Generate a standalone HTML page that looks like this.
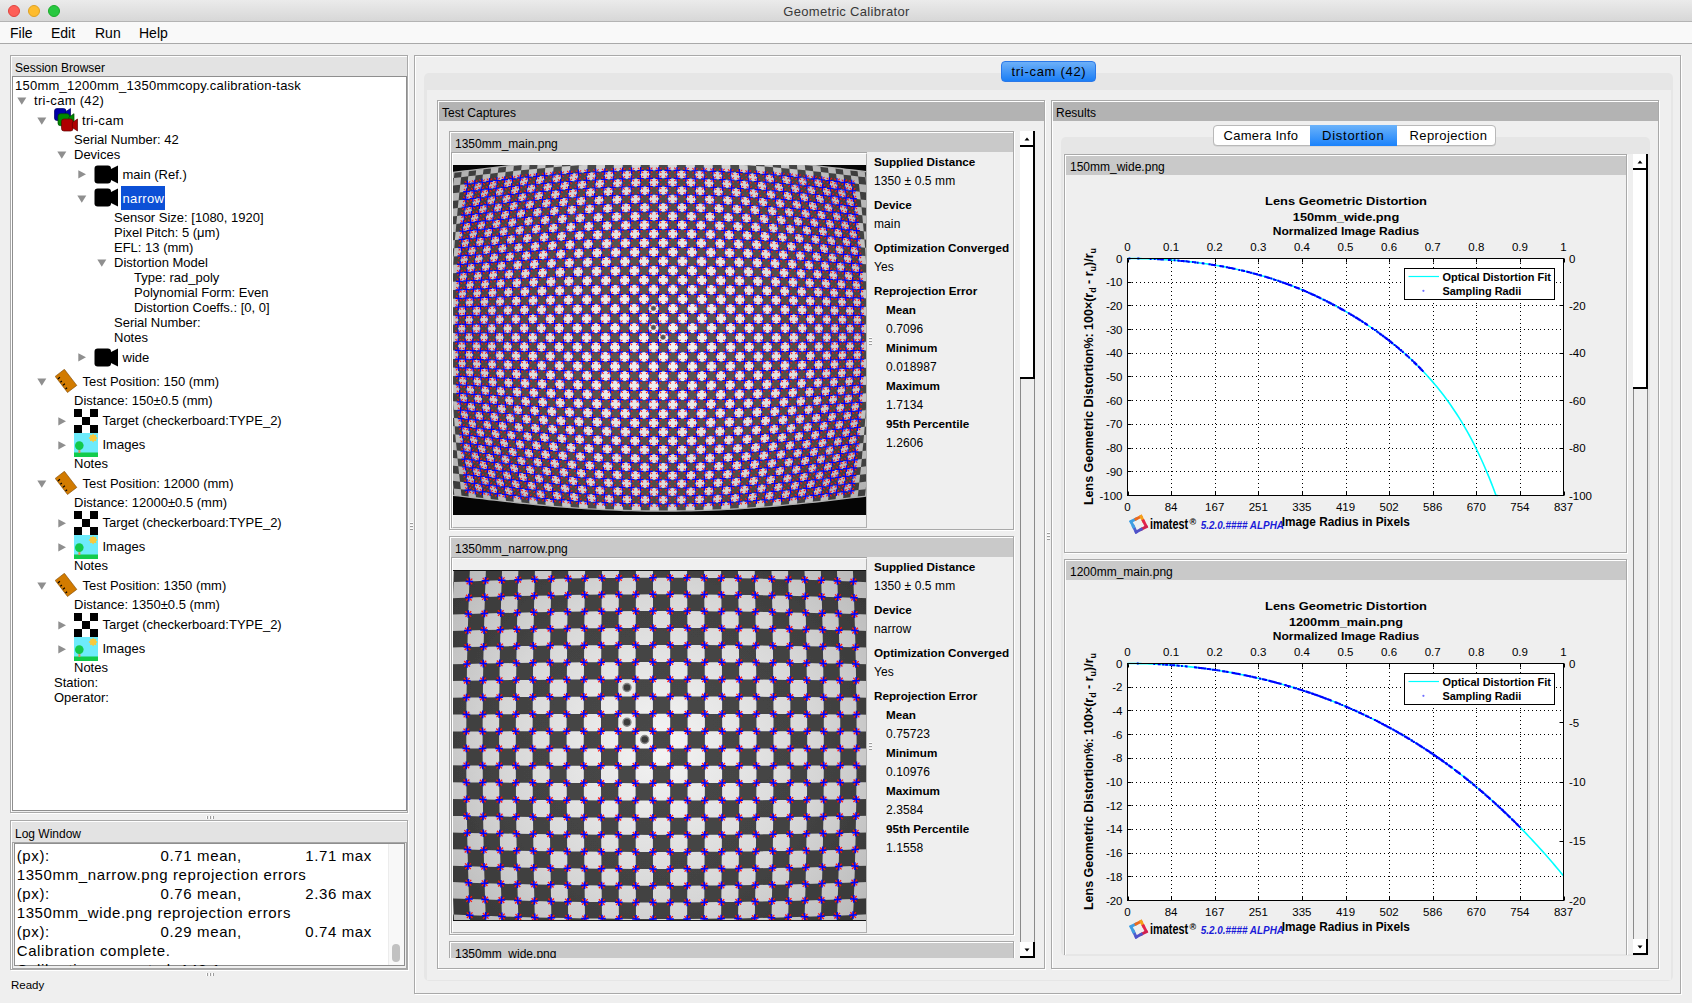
<!DOCTYPE html>
<html><head><meta charset="utf-8"><style>
html,body{margin:0;padding:0;}
body{width:1692px;height:1003px;overflow:hidden;position:relative;background:#efefef;font-family:"Liberation Sans", sans-serif;}
body div{position:absolute;}
.t{white-space:pre;line-height:1;}
svg{position:absolute;}
</style></head><body>
<div style="left:0px;top:0px;width:1692px;height:22px;background:linear-gradient(#ebebeb,#d6d6d6);"></div>
<div style="left:0px;top:21px;width:1692px;height:1px;background:#b4b4b4;"></div>
<div style="left:8px;top:5px;width:12px;height:12px;box-sizing:border-box;border-radius:50%;background:#fe5f57;border:0.5px solid #e0443e;"></div>
<div style="left:28px;top:5px;width:12px;height:12px;box-sizing:border-box;border-radius:50%;background:#febc2e;border:0.5px solid #dea123;"></div>
<div style="left:48px;top:5px;width:12px;height:12px;box-sizing:border-box;border-radius:50%;background:#28c840;border:0.5px solid #1aab29;"></div>
<div class="t" style="left:546.5px;width:600px;text-align:center;top:5.00px;font-size:13px;font-weight:400;color:#383838;letter-spacing:0.32px;">Geometric Calibrator</div>
<div style="left:0px;top:22px;width:1692px;height:21px;background:#f9f9f9;"></div>
<div style="left:0px;top:43px;width:1692px;height:1px;background:#a9a9a9;"></div>
<div class="t" style="left:10px;top:26.15px;font-size:14px;font-weight:400;color:#000;">File</div>
<div class="t" style="left:51px;top:26.15px;font-size:14px;font-weight:400;color:#000;">Edit</div>
<div class="t" style="left:95px;top:26.15px;font-size:14px;font-weight:400;color:#000;">Run</div>
<div class="t" style="left:139px;top:26.15px;font-size:14px;font-weight:400;color:#000;">Help</div>
<div style="left:11px;top:56px;width:398px;height:758px;box-sizing:border-box;border:1px solid #fff;"></div>
<div style="left:10px;top:55px;width:398px;height:758px;box-sizing:border-box;border:1px solid #a9a9a9;"></div>
<div style="left:12px;top:57px;width:395px;height:19px;background:#e3e3e3;"></div>
<div class="t" style="left:15px;top:61.84px;font-size:12px;font-weight:400;color:#000;">Session Browser</div>
<div style="left:12px;top:76px;width:395px;height:735px;box-sizing:border-box;border:1px solid #8e8e8e;background:#fff;"></div>
<div style="left:11px;top:821px;width:398px;height:150px;box-sizing:border-box;border:1px solid #fff;"></div>
<div style="left:10px;top:820px;width:398px;height:150px;box-sizing:border-box;border:1px solid #a9a9a9;"></div>
<div style="left:12px;top:822px;width:395px;height:20px;background:#e3e3e3;"></div>
<div class="t" style="left:15px;top:827.84px;font-size:12px;font-weight:400;color:#000;">Log Window</div>
<div style="left:12px;top:842px;width:395px;height:127px;box-sizing:border-box;border:1px solid #a6a6a6;"></div>
<div style="left:14px;top:843px;width:391px;height:123px;box-sizing:border-box;border:1px solid #8e8e8e;background:#fff;"></div>
<div class="t" style="left:11px;top:980.27px;font-size:11.5px;font-weight:400;color:#000;">Ready</div>
<div style="left:415px;top:56px;width:1267px;height:939px;box-sizing:border-box;border:1px solid #fff;"></div>
<div style="left:414px;top:55px;width:1267px;height:939px;box-sizing:border-box;border:1px solid #a9a9a9;"></div>
<div style="left:424px;top:73px;width:1249px;height:908px;box-sizing:border-box;border-radius:5px;background:#e6e6e6;"></div>
<div style="left:427px;top:90px;width:1244px;height:890px;background:#efefef;"></div>
<div class="t" style="left:15px;top:79.30px;font-size:13px;font-weight:400;color:#000;letter-spacing:0.24px;">150mm_1200mm_1350mmcopy.calibration-task</div>
<svg style="left:17px;top:97px" width="10" height="8"><path d="M0.3 0.5 L9.3 0.5 L4.8 7.8 Z" fill="#8f8f8f"/></svg>
<div class="t" style="left:34px;top:94.30px;font-size:13px;font-weight:400;color:#000;letter-spacing:0.3px;">tri-cam (42)</div>
<svg style="left:37px;top:117px" width="10" height="8"><path d="M0.3 0.5 L9.3 0.5 L4.8 7.8 Z" fill="#8f8f8f"/></svg>
<svg style="left:54px;top:108px" width="25" height="25"><g transform="translate(0,0)"><rect x="0.5" y="0.5" width="11.5" height="12" rx="2.5" fill="#0000a8" stroke="#000060" stroke-width="0.7"/><path d="M11.3 4 L16.5 0.5 L16.5 12.5 L11.3 9 Z" fill="#0000a8" stroke="#000060" stroke-width="0.7"/></g><g transform="translate(3.5,5.2)"><rect x="0.5" y="0.5" width="11.5" height="12" rx="2.5" fill="#008a00" stroke="#004800" stroke-width="0.7"/><path d="M11.3 4 L16.5 0.5 L16.5 12.5 L11.3 9 Z" fill="#008a00" stroke="#004800" stroke-width="0.7"/></g><g transform="translate(7,10.5)"><rect x="0.5" y="0.5" width="11.5" height="12" rx="2.5" fill="#b00000" stroke="#600000" stroke-width="0.7"/><path d="M11.3 4 L16.5 0.5 L16.5 12.5 L11.3 9 Z" fill="#b00000" stroke="#600000" stroke-width="0.7"/></g></svg>
<div class="t" style="left:82px;top:114.30px;font-size:13px;font-weight:400;color:#000;letter-spacing:0.3px;">tri-cam</div>
<div class="t" style="left:74px;top:133.10px;font-size:13px;font-weight:400;color:#000;">Serial Number: 42</div>
<svg style="left:57px;top:151px" width="10" height="8"><path d="M0.3 0.5 L9.3 0.5 L4.8 7.8 Z" fill="#8f8f8f"/></svg>
<div class="t" style="left:74px;top:148.10px;font-size:13px;font-weight:400;color:#000;">Devices</div>
<svg style="left:77.5px;top:170.3px" width="9" height="9"><path d="M0.3 0.3 L8 4.3 L0.3 8.5 Z" fill="#8f8f8f"/></svg>
<svg style="left:93.5px;top:164.5px" width="25.0" height="20.0" viewBox="0 0 25 20"><rect x="0.5" y="0.5" width="16.5" height="18" rx="3.2" fill="#000"/><path d="M16 4.5 L24 0.5 L24 18.5 L16 14.5 Z" fill="#000"/></svg>
<div class="t" style="left:122.5px;top:168.10px;font-size:13px;font-weight:400;color:#000;">main (Ref.)</div>
<svg style="left:77px;top:195px" width="10" height="8"><path d="M0.3 0.5 L9.3 0.5 L4.8 7.8 Z" fill="#8f8f8f"/></svg>
<svg style="left:93.5px;top:188.3px" width="25.0" height="20.0" viewBox="0 0 25 20"><rect x="0.5" y="0.5" width="16.5" height="18" rx="3.2" fill="#000"/><path d="M16 4.5 L24 0.5 L24 18.5 L16 14.5 Z" fill="#000"/></svg>
<div style="left:121px;top:186px;width:44px;height:24px;background:#0c50d6;"></div>
<div class="t" style="left:122.5px;top:192.30px;font-size:13px;font-weight:400;color:#fff;letter-spacing:0.35px;">narrow</div>
<div class="t" style="left:114px;top:211.10px;font-size:13px;font-weight:400;color:#000;">Sensor Size: [1080, 1920]</div>
<div class="t" style="left:114px;top:226.10px;font-size:13px;font-weight:400;color:#000;">Pixel Pitch: 5 (μm)</div>
<div class="t" style="left:114px;top:241.10px;font-size:13px;font-weight:400;color:#000;">EFL: 13 (mm)</div>
<svg style="left:97px;top:259px" width="10" height="8"><path d="M0.3 0.5 L9.3 0.5 L4.8 7.8 Z" fill="#8f8f8f"/></svg>
<div class="t" style="left:114px;top:256.10px;font-size:13px;font-weight:400;color:#000;">Distortion Model</div>
<div class="t" style="left:134px;top:271.10px;font-size:13px;font-weight:400;color:#000;">Type: rad_poly</div>
<div class="t" style="left:134px;top:286.10px;font-size:13px;font-weight:400;color:#000;">Polynomial Form: Even</div>
<div class="t" style="left:134px;top:301.10px;font-size:13px;font-weight:400;color:#000;">Distortion Coeffs.: [0, 0]</div>
<div class="t" style="left:114px;top:316.10px;font-size:13px;font-weight:400;color:#000;">Serial Number:</div>
<div class="t" style="left:114px;top:331.10px;font-size:13px;font-weight:400;color:#000;">Notes</div>
<svg style="left:77.5px;top:353.3px" width="9" height="9"><path d="M0.3 0.3 L8 4.3 L0.3 8.5 Z" fill="#8f8f8f"/></svg>
<svg style="left:93.5px;top:347.5px" width="25.0" height="20.0" viewBox="0 0 25 20"><rect x="0.5" y="0.5" width="16.5" height="18" rx="3.2" fill="#000"/><path d="M16 4.5 L24 0.5 L24 18.5 L16 14.5 Z" fill="#000"/></svg>
<div class="t" style="left:122.5px;top:351.10px;font-size:13px;font-weight:400;color:#000;">wide</div>
<svg style="left:37px;top:377.5px" width="10" height="8"><path d="M0.3 0.5 L9.3 0.5 L4.8 7.8 Z" fill="#8f8f8f"/></svg>
<svg style="left:55px;top:369.0px" width="24" height="25"><path d="M9.4 0.3 L21.8 16.4 L12.5 23.5 L0.2 7.4 Z" fill="#d27b00" stroke="#7a4500" stroke-width="0.6"/><path d="M2.89 9.93 l2.07 -1.58 M5.35 13.15 l1.59 -1.21 M7.81 16.37 l2.07 -1.58 M10.52 19.92 l1.59 -1.21" stroke="#000" stroke-width="1.2"/></svg>
<div class="t" style="left:82.5px;top:375.10px;font-size:13px;font-weight:400;color:#000;">Test Position: 150 (mm)</div>
<div class="t" style="left:74px;top:394.10px;font-size:13px;font-weight:400;color:#000;">Distance: 150±0.5 (mm)</div>
<svg style="left:57.5px;top:416.5px" width="9" height="9"><path d="M0.3 0.3 L8 4.3 L0.3 8.5 Z" fill="#8f8f8f"/></svg>
<svg style="left:74px;top:408.5px" width="24" height="24"><rect width="24" height="24" fill="#fff"/><rect x="0" y="0" width="8" height="8" fill="#000"/><rect x="0" y="16" width="8" height="8" fill="#000"/><rect x="8" y="8" width="8" height="8" fill="#000"/><rect x="16" y="0" width="8" height="8" fill="#000"/><rect x="16" y="16" width="8" height="8" fill="#000"/></svg>
<div class="t" style="left:102.5px;top:414.10px;font-size:13px;font-weight:400;color:#000;">Target (checkerboard:TYPE_2)</div>
<svg style="left:57.5px;top:440.5px" width="9" height="9"><path d="M0.3 0.3 L8 4.3 L0.3 8.5 Z" fill="#8f8f8f"/></svg>
<svg style="left:74px;top:432.5px" width="24" height="24"><rect width="24" height="24" fill="#6debfb"/><polygon points="23.70,5.00 21.87,6.15 22.35,8.25 20.25,7.77 19.10,9.60 17.95,7.77 15.85,8.25 16.33,6.15 14.50,5.00 16.33,3.85 15.85,1.75 17.95,2.23 19.10,0.40 20.25,2.23 22.35,1.75 21.87,3.85" fill="#f9c93c"/><rect x="0" y="19.5" width="24" height="4.5" fill="#12cc4c"/><rect x="4.4" y="14" width="2" height="6" fill="#d6935a"/><circle cx="5.3" cy="12.6" r="4.3" fill="#12c94a"/></svg>
<div class="t" style="left:102.5px;top:438.10px;font-size:13px;font-weight:400;color:#000;">Images</div>
<div class="t" style="left:74px;top:457.10px;font-size:13px;font-weight:400;color:#000;">Notes</div>
<svg style="left:37px;top:479.5px" width="10" height="8"><path d="M0.3 0.5 L9.3 0.5 L4.8 7.8 Z" fill="#8f8f8f"/></svg>
<svg style="left:55px;top:471.0px" width="24" height="25"><path d="M9.4 0.3 L21.8 16.4 L12.5 23.5 L0.2 7.4 Z" fill="#d27b00" stroke="#7a4500" stroke-width="0.6"/><path d="M2.89 9.93 l2.07 -1.58 M5.35 13.15 l1.59 -1.21 M7.81 16.37 l2.07 -1.58 M10.52 19.92 l1.59 -1.21" stroke="#000" stroke-width="1.2"/></svg>
<div class="t" style="left:82.5px;top:477.10px;font-size:13px;font-weight:400;color:#000;">Test Position: 12000 (mm)</div>
<div class="t" style="left:74px;top:496.10px;font-size:13px;font-weight:400;color:#000;">Distance: 12000±0.5 (mm)</div>
<svg style="left:57.5px;top:518.5px" width="9" height="9"><path d="M0.3 0.3 L8 4.3 L0.3 8.5 Z" fill="#8f8f8f"/></svg>
<svg style="left:74px;top:510.5px" width="24" height="24"><rect width="24" height="24" fill="#fff"/><rect x="0" y="0" width="8" height="8" fill="#000"/><rect x="0" y="16" width="8" height="8" fill="#000"/><rect x="8" y="8" width="8" height="8" fill="#000"/><rect x="16" y="0" width="8" height="8" fill="#000"/><rect x="16" y="16" width="8" height="8" fill="#000"/></svg>
<div class="t" style="left:102.5px;top:516.10px;font-size:13px;font-weight:400;color:#000;">Target (checkerboard:TYPE_2)</div>
<svg style="left:57.5px;top:542.5px" width="9" height="9"><path d="M0.3 0.3 L8 4.3 L0.3 8.5 Z" fill="#8f8f8f"/></svg>
<svg style="left:74px;top:534.5px" width="24" height="24"><rect width="24" height="24" fill="#6debfb"/><polygon points="23.70,5.00 21.87,6.15 22.35,8.25 20.25,7.77 19.10,9.60 17.95,7.77 15.85,8.25 16.33,6.15 14.50,5.00 16.33,3.85 15.85,1.75 17.95,2.23 19.10,0.40 20.25,2.23 22.35,1.75 21.87,3.85" fill="#f9c93c"/><rect x="0" y="19.5" width="24" height="4.5" fill="#12cc4c"/><rect x="4.4" y="14" width="2" height="6" fill="#d6935a"/><circle cx="5.3" cy="12.6" r="4.3" fill="#12c94a"/></svg>
<div class="t" style="left:102.5px;top:540.10px;font-size:13px;font-weight:400;color:#000;">Images</div>
<div class="t" style="left:74px;top:559.10px;font-size:13px;font-weight:400;color:#000;">Notes</div>
<svg style="left:37px;top:581.5px" width="10" height="8"><path d="M0.3 0.5 L9.3 0.5 L4.8 7.8 Z" fill="#8f8f8f"/></svg>
<svg style="left:55px;top:573.0px" width="24" height="25"><path d="M9.4 0.3 L21.8 16.4 L12.5 23.5 L0.2 7.4 Z" fill="#d27b00" stroke="#7a4500" stroke-width="0.6"/><path d="M2.89 9.93 l2.07 -1.58 M5.35 13.15 l1.59 -1.21 M7.81 16.37 l2.07 -1.58 M10.52 19.92 l1.59 -1.21" stroke="#000" stroke-width="1.2"/></svg>
<div class="t" style="left:82.5px;top:579.10px;font-size:13px;font-weight:400;color:#000;">Test Position: 1350 (mm)</div>
<div class="t" style="left:74px;top:598.10px;font-size:13px;font-weight:400;color:#000;">Distance: 1350±0.5 (mm)</div>
<svg style="left:57.5px;top:620.5px" width="9" height="9"><path d="M0.3 0.3 L8 4.3 L0.3 8.5 Z" fill="#8f8f8f"/></svg>
<svg style="left:74px;top:612.5px" width="24" height="24"><rect width="24" height="24" fill="#fff"/><rect x="0" y="0" width="8" height="8" fill="#000"/><rect x="0" y="16" width="8" height="8" fill="#000"/><rect x="8" y="8" width="8" height="8" fill="#000"/><rect x="16" y="0" width="8" height="8" fill="#000"/><rect x="16" y="16" width="8" height="8" fill="#000"/></svg>
<div class="t" style="left:102.5px;top:618.10px;font-size:13px;font-weight:400;color:#000;">Target (checkerboard:TYPE_2)</div>
<svg style="left:57.5px;top:644.5px" width="9" height="9"><path d="M0.3 0.3 L8 4.3 L0.3 8.5 Z" fill="#8f8f8f"/></svg>
<svg style="left:74px;top:636.5px" width="24" height="24"><rect width="24" height="24" fill="#6debfb"/><polygon points="23.70,5.00 21.87,6.15 22.35,8.25 20.25,7.77 19.10,9.60 17.95,7.77 15.85,8.25 16.33,6.15 14.50,5.00 16.33,3.85 15.85,1.75 17.95,2.23 19.10,0.40 20.25,2.23 22.35,1.75 21.87,3.85" fill="#f9c93c"/><rect x="0" y="19.5" width="24" height="4.5" fill="#12cc4c"/><rect x="4.4" y="14" width="2" height="6" fill="#d6935a"/><circle cx="5.3" cy="12.6" r="4.3" fill="#12c94a"/></svg>
<div class="t" style="left:102.5px;top:642.10px;font-size:13px;font-weight:400;color:#000;">Images</div>
<div class="t" style="left:74px;top:661.10px;font-size:13px;font-weight:400;color:#000;">Notes</div>
<div class="t" style="left:54px;top:676.10px;font-size:13px;font-weight:400;color:#000;">Station:</div>
<div class="t" style="left:54px;top:691.10px;font-size:13px;font-weight:400;color:#000;">Operator:</div>
<div style="left:15px;top:844px;width:374px;height:122px;overflow:hidden;">
<div class="t" style="left:1.7px;top:4.30px;font-size:15px;font-weight:400;color:#000;letter-spacing:0.62px;">(px):</div>
<div class="t" style="left:145.6px;top:4.30px;font-size:15px;font-weight:400;color:#000;letter-spacing:0.62px;">0.71 mean,</div>
<div class="t" style="left:290.2px;top:4.30px;font-size:15px;font-weight:400;color:#000;letter-spacing:0.62px;">1.71 max</div>
<div class="t" style="left:1.7px;top:23.30px;font-size:15px;font-weight:400;color:#000;letter-spacing:0.62px;">1350mm_narrow.png reprojection errors</div>
<div class="t" style="left:1.7px;top:42.30px;font-size:15px;font-weight:400;color:#000;letter-spacing:0.62px;">(px):</div>
<div class="t" style="left:145.6px;top:42.30px;font-size:15px;font-weight:400;color:#000;letter-spacing:0.62px;">0.76 mean,</div>
<div class="t" style="left:290.2px;top:42.30px;font-size:15px;font-weight:400;color:#000;letter-spacing:0.62px;">2.36 max</div>
<div class="t" style="left:1.7px;top:61.30px;font-size:15px;font-weight:400;color:#000;letter-spacing:0.62px;">1350mm_wide.png reprojection errors</div>
<div class="t" style="left:1.7px;top:80.30px;font-size:15px;font-weight:400;color:#000;letter-spacing:0.62px;">(px):</div>
<div class="t" style="left:145.6px;top:80.30px;font-size:15px;font-weight:400;color:#000;letter-spacing:0.62px;">0.29 mean,</div>
<div class="t" style="left:290.2px;top:80.30px;font-size:15px;font-weight:400;color:#000;letter-spacing:0.62px;">0.74 max</div>
<div class="t" style="left:1.7px;top:99.30px;font-size:15px;font-weight:400;color:#000;letter-spacing:0.62px;">Calibration complete.</div>
<div class="t" style="left:1.7px;top:118.30px;font-size:15px;font-weight:400;color:#000;letter-spacing:0.62px;">Calibration computed: 148.1</div>
</div>
<div style="left:388px;top:844px;width:16px;height:121px;background:#f8f8f8;border-left:1px solid #ececec;box-sizing:border-box;"></div>
<div style="left:392px;top:944px;width:8px;height:18px;background:#c1c1c1;border-radius:4px;"></div>
<div style="left:438px;top:101px;width:608px;height:869px;box-sizing:border-box;border:1px solid #fff;"></div>
<div style="left:437px;top:100px;width:608px;height:869px;box-sizing:border-box;border:1px solid #a9a9a9;"></div>
<div style="left:439px;top:102px;width:605px;height:19px;background:#b3b3b3;"></div>
<div class="t" style="left:442px;top:106.84px;font-size:12px;font-weight:400;color:#000;">Test Captures</div>
<div style="left:1052px;top:101px;width:608px;height:869px;box-sizing:border-box;border:1px solid #fff;"></div>
<div style="left:1051px;top:100px;width:608px;height:869px;box-sizing:border-box;border:1px solid #a9a9a9;"></div>
<div style="left:1053px;top:102px;width:605px;height:19px;background:#b3b3b3;"></div>
<div class="t" style="left:1056px;top:106.84px;font-size:12px;font-weight:400;color:#000;">Results</div>
<div style="left:449px;top:131px;width:566px;height:827px;overflow:hidden;">
<div style="left:1px;top:1px;width:565px;height:399px;box-sizing:border-box;border:1px solid #fff;"></div>
<div style="left:0px;top:0px;width:565px;height:399px;box-sizing:border-box;border:1px solid #a9a9a9;"></div>
<div style="left:2px;top:2px;width:562px;height:19px;background:#c9c9c9;"></div>
<div class="t" style="left:6px;top:6.84px;font-size:12px;font-weight:400;color:#000;">1350mm_main.png</div>
<div style="left:2px;top:21px;width:416px;height:376px;box-sizing:border-box;border-left:1px solid #a6a6a6;border-top:1px solid #a6a6a6;"></div>
<div style="left:3px;top:22px;width:415px;height:375px;box-sizing:border-box;border-left:1px solid #fff;border-top:1px solid #fff;border-right:1px solid #b0b0b0;border-bottom:1px solid #b0b0b0;"></div>
<div class="t" style="left:425px;top:25.10px;font-size:11.7px;font-weight:700;color:#000;">Supplied Distance</div>
<div class="t" style="left:425px;top:43.84px;font-size:12px;font-weight:400;color:#000;letter-spacing:0.1px;">1350 ± 0.5 mm</div>
<div class="t" style="left:425px;top:68.10px;font-size:11.7px;font-weight:700;color:#000;">Device</div>
<div class="t" style="left:425px;top:86.84px;font-size:12px;font-weight:400;color:#000;letter-spacing:0.1px;">main</div>
<div class="t" style="left:425px;top:111.10px;font-size:11.7px;font-weight:700;color:#000;">Optimization Converged</div>
<div class="t" style="left:425px;top:129.84px;font-size:12px;font-weight:400;color:#000;letter-spacing:0.1px;">Yes</div>
<div class="t" style="left:425px;top:154.10px;font-size:11.7px;font-weight:700;color:#000;">Reprojection Error</div>
<div class="t" style="left:437px;top:173.10px;font-size:11.7px;font-weight:700;color:#000;">Mean</div>
<div class="t" style="left:437px;top:191.84px;font-size:12px;font-weight:400;color:#000;letter-spacing:0.1px;">0.7096</div>
<div class="t" style="left:437px;top:211.10px;font-size:11.7px;font-weight:700;color:#000;">Minimum</div>
<div class="t" style="left:437px;top:229.84px;font-size:12px;font-weight:400;color:#000;letter-spacing:0.1px;">0.018987</div>
<div class="t" style="left:437px;top:249.10px;font-size:11.7px;font-weight:700;color:#000;">Maximum</div>
<div class="t" style="left:437px;top:267.84px;font-size:12px;font-weight:400;color:#000;letter-spacing:0.1px;">1.7134</div>
<div class="t" style="left:437px;top:287.10px;font-size:11.7px;font-weight:700;color:#000;">95th Percentile</div>
<div class="t" style="left:437px;top:305.84px;font-size:12px;font-weight:400;color:#000;letter-spacing:0.1px;">1.2606</div>
<div style="left:1px;top:406px;width:565px;height:399px;box-sizing:border-box;border:1px solid #fff;"></div>
<div style="left:0px;top:405px;width:565px;height:399px;box-sizing:border-box;border:1px solid #a9a9a9;"></div>
<div style="left:2px;top:407px;width:562px;height:19px;background:#c9c9c9;"></div>
<div class="t" style="left:6px;top:411.84px;font-size:12px;font-weight:400;color:#000;">1350mm_narrow.png</div>
<div style="left:2px;top:426px;width:416px;height:376px;box-sizing:border-box;border-left:1px solid #a6a6a6;border-top:1px solid #a6a6a6;"></div>
<div style="left:3px;top:427px;width:415px;height:375px;box-sizing:border-box;border-left:1px solid #fff;border-top:1px solid #fff;border-right:1px solid #b0b0b0;border-bottom:1px solid #b0b0b0;"></div>
<div class="t" style="left:425px;top:430.10px;font-size:11.7px;font-weight:700;color:#000;">Supplied Distance</div>
<div class="t" style="left:425px;top:448.84px;font-size:12px;font-weight:400;color:#000;letter-spacing:0.1px;">1350 ± 0.5 mm</div>
<div class="t" style="left:425px;top:473.10px;font-size:11.7px;font-weight:700;color:#000;">Device</div>
<div class="t" style="left:425px;top:491.84px;font-size:12px;font-weight:400;color:#000;letter-spacing:0.1px;">narrow</div>
<div class="t" style="left:425px;top:516.10px;font-size:11.7px;font-weight:700;color:#000;">Optimization Converged</div>
<div class="t" style="left:425px;top:534.84px;font-size:12px;font-weight:400;color:#000;letter-spacing:0.1px;">Yes</div>
<div class="t" style="left:425px;top:559.10px;font-size:11.7px;font-weight:700;color:#000;">Reprojection Error</div>
<div class="t" style="left:437px;top:578.10px;font-size:11.7px;font-weight:700;color:#000;">Mean</div>
<div class="t" style="left:437px;top:596.84px;font-size:12px;font-weight:400;color:#000;letter-spacing:0.1px;">0.75723</div>
<div class="t" style="left:437px;top:616.10px;font-size:11.7px;font-weight:700;color:#000;">Minimum</div>
<div class="t" style="left:437px;top:634.84px;font-size:12px;font-weight:400;color:#000;letter-spacing:0.1px;">0.10976</div>
<div class="t" style="left:437px;top:654.10px;font-size:11.7px;font-weight:700;color:#000;">Maximum</div>
<div class="t" style="left:437px;top:672.84px;font-size:12px;font-weight:400;color:#000;letter-spacing:0.1px;">2.3584</div>
<div class="t" style="left:437px;top:692.10px;font-size:11.7px;font-weight:700;color:#000;">95th Percentile</div>
<div class="t" style="left:437px;top:710.84px;font-size:12px;font-weight:400;color:#000;letter-spacing:0.1px;">1.1558</div>
<div style="left:1px;top:811px;width:565px;height:399px;box-sizing:border-box;border:1px solid #fff;"></div>
<div style="left:0px;top:810px;width:565px;height:399px;box-sizing:border-box;border:1px solid #a9a9a9;"></div>
<div style="left:2px;top:812px;width:562px;height:19px;background:#c9c9c9;"></div>
<div class="t" style="left:6px;top:816.84px;font-size:12px;font-weight:400;color:#000;">1350mm_wide.png</div>
<div style="left:2px;top:831px;width:416px;height:376px;box-sizing:border-box;border-left:1px solid #a6a6a6;border-top:1px solid #a6a6a6;"></div>
<div style="left:3px;top:832px;width:415px;height:375px;box-sizing:border-box;border-left:1px solid #fff;border-top:1px solid #fff;border-right:1px solid #b0b0b0;border-bottom:1px solid #b0b0b0;"></div>
<div class="t" style="left:425px;top:835.10px;font-size:11.7px;font-weight:700;color:#000;">Supplied Distance</div>
<div class="t" style="left:425px;top:853.84px;font-size:12px;font-weight:400;color:#000;letter-spacing:0.1px;">1350 ± 0.5 mm</div>
<div class="t" style="left:425px;top:878.10px;font-size:11.7px;font-weight:700;color:#000;">Device</div>
<div class="t" style="left:425px;top:896.84px;font-size:12px;font-weight:400;color:#000;letter-spacing:0.1px;">wide</div>
<div class="t" style="left:425px;top:921.10px;font-size:11.7px;font-weight:700;color:#000;">Optimization Converged</div>
<div class="t" style="left:425px;top:939.84px;font-size:12px;font-weight:400;color:#000;letter-spacing:0.1px;">Yes</div>
<div class="t" style="left:425px;top:964.10px;font-size:11.7px;font-weight:700;color:#000;">Reprojection Error</div>
<div class="t" style="left:437px;top:983.10px;font-size:11.7px;font-weight:700;color:#000;">Mean</div>
<div class="t" style="left:437px;top:1001.84px;font-size:12px;font-weight:400;color:#000;letter-spacing:0.1px;"></div>
<div class="t" style="left:437px;top:1021.10px;font-size:11.7px;font-weight:700;color:#000;">Minimum</div>
<div class="t" style="left:437px;top:1039.84px;font-size:12px;font-weight:400;color:#000;letter-spacing:0.1px;"></div>
<div class="t" style="left:437px;top:1059.10px;font-size:11.7px;font-weight:700;color:#000;">Maximum</div>
<div class="t" style="left:437px;top:1077.84px;font-size:12px;font-weight:400;color:#000;letter-spacing:0.1px;"></div>
<div class="t" style="left:437px;top:1097.10px;font-size:11.7px;font-weight:700;color:#000;">95th Percentile</div>
<div class="t" style="left:437px;top:1115.84px;font-size:12px;font-weight:400;color:#000;letter-spacing:0.1px;"></div>
</div>
<div style="left:1020px;top:131px;width:15px;height:827px;box-sizing:border-box;border-left:1px solid #8a8a8a;border-right:1px solid #8a8a8a;background:#efefef;"></div>
<div style="left:1020px;top:131px;width:15px;height:16px;box-sizing:border-box;background:#fff;border-right:2px solid #000;border-bottom:2px solid #000;"></div>
<svg style="left:1024px;top:137px" width="7" height="5"><path d="M0.5 3.6 L3 0.6 L5.5 3.6 Z" fill="#000"/></svg>
<div style="left:1020px;top:147px;width:15px;height:232px;box-sizing:border-box;background:#fff;border-right:2px solid #000;border-bottom:2px solid #000;"></div>
<div style="left:1020px;top:942px;width:15px;height:16px;box-sizing:border-box;background:#fff;border-right:2px solid #000;border-bottom:2px solid #000;"></div>
<svg style="left:1024px;top:948px" width="7" height="5"><path d="M0.5 0.5 L5.5 0.5 L3 3.5 Z" fill="#000"/></svg>
<div style="left:1061px;top:137px;width:589px;height:819px;box-sizing:border-box;border-radius:5px;background:#e6e6e6;"></div>
<div style="left:1063px;top:154px;width:585px;height:800px;background:#efefef;"></div>
<div style="left:1213px;top:125px;width:283px;height:21px;box-sizing:border-box;border:1px solid #b9b9b9;border-radius:4px;background:#fff;box-shadow:0 0.5px 0.5px rgba(0,0,0,0.12);overflow:hidden;"></div>
<div style="left:1310px;top:125px;width:87px;height:21px;background:linear-gradient(#6cb3fa,#1a82fb);"></div>
<div class="t" style="left:1223.5px;top:129.00px;font-size:13px;font-weight:400;color:#000;letter-spacing:0.3px;">Camera Info</div>
<div class="t" style="left:1322px;top:129.00px;font-size:13px;font-weight:400;color:#000;letter-spacing:0.75px;">Distortion</div>
<div class="t" style="left:1409.5px;top:129.00px;font-size:13px;font-weight:400;color:#000;letter-spacing:0.4px;">Reprojection</div>
<div style="left:1001px;top:61px;width:95px;height:21px;box-sizing:border-box;border-radius:4px;background:linear-gradient(#6db0f8,#1a7ef6);border:1px solid #2a78e8;"></div>
<div class="t" style="left:1011.5px;top:65.00px;font-size:13px;font-weight:400;color:#000;letter-spacing:0.7px;">tri-cam (42)</div>
<div style="left:1064px;top:154px;width:564px;height:801px;overflow:hidden;">
<div style="left:1px;top:1px;width:563px;height:399px;box-sizing:border-box;border:1px solid #fff;"></div>
<div style="left:0px;top:0px;width:563px;height:399px;box-sizing:border-box;border:1px solid #a9a9a9;"></div>
<div style="left:2px;top:2px;width:560px;height:19px;background:#c9c9c9;"></div>
<div class="t" style="left:6px;top:6.84px;font-size:12px;font-weight:400;color:#000;">150mm_wide.png</div>
<div style="left:1px;top:406px;width:563px;height:399px;box-sizing:border-box;border:1px solid #fff;"></div>
<div style="left:0px;top:405px;width:563px;height:399px;box-sizing:border-box;border:1px solid #a9a9a9;"></div>
<div style="left:2px;top:407px;width:560px;height:19px;background:#c9c9c9;"></div>
<div class="t" style="left:6px;top:411.84px;font-size:12px;font-weight:400;color:#000;">1200mm_main.png</div>
<svg style="left:0;top:0" width="564" height="801" viewBox="1064 154 564 801" font-family="Liberation Sans, sans-serif"><rect x="1127.5" y="258.5" width="436.0" height="237.0" fill="#fff"/><path d="M1171.5 259 V495 M1215.5 259 V495 M1258.5 259 V495 M1302.5 259 V495 M1346.5 259 V495 M1389.5 259 V495 M1433.5 259 V495 M1476.5 259 V495 M1520.5 259 V495 M1128 282.5 H1563 M1128 305.5 H1563 M1128 329.5 H1563 M1128 353.5 H1563 M1128 376.5 H1563 M1128 400.5 H1563 M1128 424.5 H1563 M1128 448.5 H1563 M1128 471.5 H1563 " stroke="#000" stroke-width="1" stroke-dasharray="1 3" fill="none" shape-rendering="crispEdges"/><path d="M1128.5 258.5 v4 M1128.5 495.5 v-4 M1171.5 258.5 v4 M1171.5 495.5 v-4 M1215.5 258.5 v4 M1215.5 495.5 v-4 M1258.5 258.5 v4 M1258.5 495.5 v-4 M1302.5 258.5 v4 M1302.5 495.5 v-4 M1346.5 258.5 v4 M1346.5 495.5 v-4 M1389.5 258.5 v4 M1389.5 495.5 v-4 M1433.5 258.5 v4 M1433.5 495.5 v-4 M1476.5 258.5 v4 M1476.5 495.5 v-4 M1520.5 258.5 v4 M1520.5 495.5 v-4 M1564.5 258.5 v4 M1564.5 495.5 v-4 M1127.5 258.5 h4 M1127.5 282.5 h4 M1127.5 305.5 h4 M1127.5 329.5 h4 M1127.5 353.5 h4 M1127.5 376.5 h4 M1127.5 400.5 h4 M1127.5 424.5 h4 M1127.5 448.5 h4 M1127.5 471.5 h4 M1127.5 495.5 h4 M1563.5 258.5 h-4 M1563.5 305.5 h-4 M1563.5 353.5 h-4 M1563.5 400.5 h-4 M1563.5 448.5 h-4 M1563.5 495.5 h-4 " stroke="#000" stroke-width="1" fill="none"/><path d="M1127.50 258.50 L1129.68 258.50 L1131.86 258.52 L1134.04 258.53 L1136.22 258.56 L1138.40 258.60 L1140.58 258.64 L1142.76 258.69 L1144.94 258.74 L1147.12 258.81 L1149.30 258.88 L1151.48 258.96 L1153.66 259.05 L1155.84 259.15 L1158.02 259.25 L1160.20 259.37 L1162.38 259.49 L1164.56 259.62 L1166.74 259.75 L1168.92 259.90 L1171.10 260.05 L1173.28 260.22 L1175.46 260.39 L1177.64 260.57 L1179.82 260.76 L1182.00 260.96 L1184.18 261.17 L1186.36 261.39 L1188.54 261.61 L1190.72 261.85 L1192.90 262.10 L1195.08 262.35 L1197.26 262.62 L1199.44 262.89 L1201.62 263.18 L1203.80 263.48 L1205.98 263.78 L1208.16 264.10 L1210.34 264.43 L1212.52 264.77 L1214.70 265.12 L1216.88 265.48 L1219.06 265.85 L1221.24 266.24 L1223.42 266.64 L1225.60 267.04 L1227.78 267.46 L1229.96 267.90 L1232.14 268.34 L1234.32 268.80 L1236.50 269.27 L1238.68 269.75 L1240.86 270.24 L1243.04 270.75 L1245.22 271.27 L1247.40 271.81 L1249.58 272.35 L1251.76 272.92 L1253.94 273.49 L1256.12 274.08 L1258.30 274.68 L1260.48 275.30 L1262.66 275.93 L1264.84 276.57 L1267.02 277.23 L1269.20 277.90 L1271.38 278.59 L1273.56 279.29 L1275.74 280.01 L1277.92 280.74 L1280.10 281.49 L1282.28 282.25 L1284.46 283.03 L1286.64 283.82 L1288.82 284.63 L1291.00 285.46 L1293.18 286.30 L1295.36 287.15 L1297.54 288.02 L1299.72 288.91 L1301.90 289.81 L1304.08 290.73 L1306.26 291.66 L1308.44 292.61 L1310.62 293.58 L1312.80 294.56 L1314.98 295.56 L1317.16 296.58 L1319.34 297.61 L1321.52 298.66 L1323.70 299.73 L1325.88 300.82 L1328.06 301.92 L1330.24 303.03 L1332.42 304.17 L1334.60 305.32 L1336.78 306.49 L1338.96 307.68 L1341.14 308.89 L1343.32 310.12 L1345.50 311.36 L1347.68 312.62 L1349.86 313.90 L1352.04 315.20 L1354.22 316.52 L1356.40 317.86 L1358.58 319.22 L1360.76 320.60 L1362.94 322.00 L1365.12 323.42 L1367.30 324.87 L1369.48 326.33 L1371.66 327.82 L1373.84 329.33 L1376.02 330.86 L1378.20 332.42 L1380.38 334.00 L1382.56 335.61 L1384.74 337.25 L1386.92 338.91 L1389.10 340.60 L1391.28 342.31 L1393.46 344.06 L1395.64 345.83 L1397.82 347.64 L1400.00 349.48 L1402.18 351.35 L1404.36 353.26 L1406.54 355.20 L1408.72 357.18 L1410.90 359.20 L1413.08 361.26 L1415.26 363.36 L1417.44 365.51 L1419.62 367.70 L1421.80 369.93 L1423.98 372.22 L1426.16 374.55 L1428.34 376.94 L1430.52 379.39 L1432.70 381.89 L1434.88 384.45 L1437.06 387.07 L1439.24 389.76 L1441.42 392.52 L1443.60 395.35 L1445.78 398.25 L1447.96 401.23 L1450.14 404.30 L1452.32 407.44 L1454.50 410.68 L1456.68 414.00 L1458.86 417.43 L1461.04 420.95 L1463.22 424.58 L1465.40 428.31 L1467.58 432.17 L1469.76 436.14 L1471.94 440.23 L1474.12 444.46 L1476.30 448.82 L1478.48 453.32 L1480.66 457.97 L1482.84 462.77 L1485.02 467.73 L1487.20 472.86 L1489.38 478.17 L1491.56 483.66 L1493.74 489.33 L1495.92 495.20 L1498.10 495.50" stroke="#00ffff" stroke-width="1.6" fill="none"/><path d="M1277.33 280.85 h1.8 M1221.91 266.52 h1.8 M1355.75 318.02 h1.8 M1187.97 261.65 h1.8 M1330.51 303.64 h1.8 M1288.73 284.94 h1.8 M1180.31 260.89 h1.8 M1323.94 300.30 h1.8 M1167.94 259.89 h1.8 M1306.19 292.02 h1.8 M1186.65 261.51 h1.8 M1196.84 262.68 h1.8 M1303.91 291.04 h1.8 M1391.12 342.90 h1.8 M1211.25 264.71 h1.8 M1247.18 271.97 h1.8 M1350.75 314.97 h1.8 M1413.68 362.70 h1.8 M1339.78 308.63 h1.8 M1296.84 288.10 h1.8 M1418.84 367.82 h1.8 M1173.69 260.32 h1.8 M1397.14 347.82 h1.8 M1267.56 277.67 h1.8 M1219.38 266.07 h1.8 M1208.76 264.33 h1.8 M1273.00 279.40 h1.8 M1389.05 341.26 h1.8 M1232.82 268.67 h1.8 M1340.78 309.19 h1.8 M1353.20 316.45 h1.8 M1290.51 285.61 h1.8 M1333.21 305.06 h1.8 M1182.93 261.13 h1.8 M1181.19 260.97 h1.8 M1241.49 270.60 h1.8 M1361.92 321.92 h1.8 M1304.68 291.37 h1.8 M1274.60 279.93 h1.8 M1341.65 309.68 h1.8 M1311.00 294.16 h1.8 M1270.50 278.60 h1.8 M1384.83 338.00 h1.8 M1365.76 324.44 h1.8 M1253.81 273.70 h1.8 M1339.19 308.30 h1.8 M1328.06 302.38 h1.8 M1400.28 350.49 h1.8 M1371.95 328.64 h1.8 M1267.07 277.52 h1.8 M1419.54 368.53 h1.8 M1208.88 264.34 h1.8 M1302.30 290.36 h1.8 M1377.50 332.57 h1.8 M1222.34 266.60 h1.8 M1319.60 298.17 h1.8 M1169.06 259.97 h1.8 M1359.38 320.30 h1.8 M1378.97 333.64 h1.8 M1338.88 308.13 h1.8 M1400.34 350.54 h1.8 M1274.49 279.90 h1.8 M1364.99 323.93 h1.8 M1343.58 310.78 h1.8 M1340.40 308.98 h1.8 M1311.74 294.49 h1.8 M1393.63 344.92 h1.8 M1413.13 362.17 h1.8 M1316.06 296.49 h1.8 M1358.53 319.76 h1.8 M1181.78 261.02 h1.8 M1366.27 324.78 h1.8 M1354.94 317.52 h1.8 M1421.85 370.92 h1.8 M1390.17 342.14 h1.8 M1266.09 277.22 h1.8 M1294.02 286.98 h1.8 M1359.47 320.35 h1.8 M1157.08 259.25 h1.8 M1313.07 295.10 h1.8 M1228.28 267.74 h1.8 M1208.47 264.28 h1.8 M1180.84 260.94 h1.8 M1379.70 334.17 h1.8 M1213.50 265.07 h1.8 M1254.91 273.99 h1.8 M1295.36 287.51 h1.8 M1399.58 349.89 h1.8 M1192.02 262.10 h1.8 M1310.02 293.72 h1.8 M1333.59 305.26 h1.8 M1401.82 351.83 h1.8 M1389.66 341.74 h1.8 M1398.18 348.70 h1.8 M1264.26 276.67 h1.8 M1301.59 290.06 h1.8 M1286.88 284.25 h1.8 M1401.97 351.96 h1.8 M1415.50 364.48 h1.8 M1221.93 266.53 h1.8 M1231.22 268.34 h1.8 M1249.98 272.69 h1.8 M1250.42 272.80 h1.8 M1318.65 297.72 h1.8 M1342.43 310.12 h1.8 M1259.56 275.29 h1.8 M1137.55 258.60 h1.8 M1302.51 290.44 h1.8 M1289.68 285.29 h1.8 M1337.39 307.31 h1.8 M1414.66 363.65 h1.8 M1364.01 323.28 h1.8 M1325.82 301.24 h1.8 M1348.63 313.71 h1.8 M1361.04 321.36 h1.8 M1178.05 260.68 h1.8 M1404.83 354.48 h1.8 M1382.01 335.87 h1.8 M1400.16 350.39 h1.8 M1385.51 338.52 h1.8 M1295.73 287.66 h1.8 M1297.43 288.34 h1.8 M1202.64 263.44 h1.8 M1352.21 315.85 h1.8 M1182.64 261.11 h1.8 M1185.35 261.37 h1.8 M1242.42 270.82 h1.8 M1226.18 267.33 h1.8 M1281.81 282.41 h1.8 M1177.24 260.61 h1.8 M1128.56 258.50 h1.8 M1222.06 266.55 h1.8 M1201.72 263.32 h1.8 M1288.18 284.73 h1.8 M1159.40 259.37 h1.8 M1400.13 350.36 h1.8 M1347.87 313.26 h1.8 M1221.03 266.36 h1.8 M1256.35 274.39 h1.8 M1283.81 283.12 h1.8 M1288.32 284.78 h1.8 M1210.86 264.65 h1.8 M1395.33 346.32 h1.8 M1421.85 370.92 h1.8 M1314.11 295.58 h1.8 M1318.38 297.59 h1.8 M1194.57 262.40 h1.8 M1202.05 263.36 h1.8 M1282.52 282.66 h1.8 M1260.17 275.47 h1.8 M1391.50 343.21 h1.8 M1225.87 267.27 h1.8 M1157.51 259.27 h1.8 M1414.27 363.28 h1.8 M1328.76 302.74 h1.8 M1220.29 266.23 h1.8 M1332.17 304.51 h1.8 M1160.58 259.44 h1.8 M1328.73 302.72 h1.8 M1419.24 368.23 h1.8 M1398.06 348.60 h1.8 M1365.18 324.06 h1.8 M1259.06 275.15 h1.8 M1289.00 285.04 h1.8 M1227.92 267.67 h1.8 M1380.43 334.70 h1.8 M1329.76 303.25 h1.8 M1381.83 335.74 h1.8 M1278.95 281.40 h1.8 M1247.11 271.96 h1.8 M1388.16 340.56 h1.8 M1420.39 369.41 h1.8 M1396.03 346.90 h1.8 M1387.11 339.75 h1.8 M1389.48 341.60 h1.8 M1374.05 330.11 h1.8 M1248.31 272.26 h1.8 M1326.32 301.49 h1.8 M1286.02 283.93 h1.8 M1162.02 259.52 h1.8 M1161.25 259.47 h1.8 M1264.56 276.76 h1.8 M1258.47 274.98 h1.8 M1364.42 323.56 h1.8 M1415.28 364.26 h1.8 M1309.54 293.50 h1.8 M1411.73 360.84 h1.8 M1420.95 369.98 h1.8 M1415.00 363.99 h1.8 M1288.45 284.83 h1.8 M1246.27 271.75 h1.8 M1248.34 272.27 h1.8 M1238.36 269.88 h1.8 M1240.95 270.47 h1.8 M1350.03 314.54 h1.8 M1404.97 354.61 h1.8 M1393.71 344.99 h1.8 M1317.35 297.09 h1.8 M1356.18 318.28 h1.8 M1385.86 338.78 h1.8 M1194.05 262.34 h1.8 M1357.78 319.29 h1.8 M1406.73 356.19 h1.8 M1382.47 336.22 h1.8 M1376.11 331.57 h1.8 M1317.00 296.93 h1.8 M1232.04 268.51 h1.8 M1383.81 337.22 h1.8 M1279.74 281.68 h1.8 M1386.09 338.96 h1.8 M1418.01 366.98 h1.8 M1296.62 288.01 h1.8 M1298.05 288.59 h1.8 M1413.51 362.54 h1.8 M1371.01 327.99 h1.8 M1228.99 267.88 h1.8 M1212.57 264.92 h1.8 M1222.02 266.54 h1.8 M1405.82 355.36 h1.8 M1387.19 339.81 h1.8 M1220.12 266.20 h1.8 M1391.05 342.85 h1.8 M1419.56 368.56 h1.8 M1357.08 318.85 h1.8 M1284.63 283.42 h1.8 M1333.41 305.17 h1.8 M1214.16 265.18 h1.8 M1149.73 258.93 h1.8 M1417.87 366.84 h1.8 M1355.48 317.85 h1.8 M1328.38 302.54 h1.8 M1411.11 360.25 h1.8 M1306.23 292.04 h1.8 M1399.64 349.94 h1.8 M1390.98 342.79 h1.8 M1243.18 271.00 h1.8 M1256.22 274.35 h1.8 M1268.53 277.98 h1.8 M1252.70 273.40 h1.8 M1341.84 309.79 h1.8 M1258.53 275.00 h1.8 M1302.53 290.45 h1.8 M1214.20 265.19 h1.8 M1406.77 356.23 h1.8 M1285.54 283.75 h1.8 M1312.21 294.71 h1.8 M1341.16 309.41 h1.8 M1405.71 355.27 h1.8 M1302.93 290.62 h1.8 M1408.19 357.53 h1.8 M1322.59 299.63 h1.8 M1329.58 303.16 h1.8 M1327.67 302.18 h1.8 M1153.84 259.10 h1.8 M1307.79 292.73 h1.8 M1233.66 268.85 h1.8 M1137.29 258.59 h1.8 M1385.77 338.71 h1.8 M1229.84 268.05 h1.8 M1315.91 296.42 h1.8 " stroke="#0000ff" stroke-width="2" fill="none"/><rect x="1127.5" y="258.5" width="436.0" height="237.0" fill="none" stroke="#000" stroke-width="1"/><text x="1127.50" y="251.00" font-size="11.5" font-weight="400" text-anchor="middle" fill="#000" >0</text><text x="1171.10" y="251.00" font-size="11.5" font-weight="400" text-anchor="middle" fill="#000" >0.1</text><text x="1214.70" y="251.00" font-size="11.5" font-weight="400" text-anchor="middle" fill="#000" >0.2</text><text x="1258.30" y="251.00" font-size="11.5" font-weight="400" text-anchor="middle" fill="#000" >0.3</text><text x="1301.90" y="251.00" font-size="11.5" font-weight="400" text-anchor="middle" fill="#000" >0.4</text><text x="1345.50" y="251.00" font-size="11.5" font-weight="400" text-anchor="middle" fill="#000" >0.5</text><text x="1389.10" y="251.00" font-size="11.5" font-weight="400" text-anchor="middle" fill="#000" >0.6</text><text x="1432.70" y="251.00" font-size="11.5" font-weight="400" text-anchor="middle" fill="#000" >0.7</text><text x="1476.30" y="251.00" font-size="11.5" font-weight="400" text-anchor="middle" fill="#000" >0.8</text><text x="1519.90" y="251.00" font-size="11.5" font-weight="400" text-anchor="middle" fill="#000" >0.9</text><text x="1563.50" y="251.00" font-size="11.5" font-weight="400" text-anchor="middle" fill="#000" >1</text><text x="1127.50" y="511.00" font-size="11.5" font-weight="400" text-anchor="middle" fill="#000" >0</text><text x="1171.10" y="511.00" font-size="11.5" font-weight="400" text-anchor="middle" fill="#000" >84</text><text x="1214.70" y="511.00" font-size="11.5" font-weight="400" text-anchor="middle" fill="#000" >167</text><text x="1258.30" y="511.00" font-size="11.5" font-weight="400" text-anchor="middle" fill="#000" >251</text><text x="1301.90" y="511.00" font-size="11.5" font-weight="400" text-anchor="middle" fill="#000" >335</text><text x="1345.50" y="511.00" font-size="11.5" font-weight="400" text-anchor="middle" fill="#000" >419</text><text x="1389.10" y="511.00" font-size="11.5" font-weight="400" text-anchor="middle" fill="#000" >502</text><text x="1432.70" y="511.00" font-size="11.5" font-weight="400" text-anchor="middle" fill="#000" >586</text><text x="1476.30" y="511.00" font-size="11.5" font-weight="400" text-anchor="middle" fill="#000" >670</text><text x="1519.90" y="511.00" font-size="11.5" font-weight="400" text-anchor="middle" fill="#000" >754</text><text x="1563.50" y="511.00" font-size="11.5" font-weight="400" text-anchor="middle" fill="#000" >837</text><text x="1122.50" y="262.50" font-size="11.5" font-weight="400" text-anchor="end" fill="#000" >0</text><text x="1122.50" y="286.20" font-size="11.5" font-weight="400" text-anchor="end" fill="#000" >-10</text><text x="1122.50" y="309.90" font-size="11.5" font-weight="400" text-anchor="end" fill="#000" >-20</text><text x="1122.50" y="333.60" font-size="11.5" font-weight="400" text-anchor="end" fill="#000" >-30</text><text x="1122.50" y="357.30" font-size="11.5" font-weight="400" text-anchor="end" fill="#000" >-40</text><text x="1122.50" y="381.00" font-size="11.5" font-weight="400" text-anchor="end" fill="#000" >-50</text><text x="1122.50" y="404.70" font-size="11.5" font-weight="400" text-anchor="end" fill="#000" >-60</text><text x="1122.50" y="428.40" font-size="11.5" font-weight="400" text-anchor="end" fill="#000" >-70</text><text x="1122.50" y="452.10" font-size="11.5" font-weight="400" text-anchor="end" fill="#000" >-80</text><text x="1122.50" y="475.80" font-size="11.5" font-weight="400" text-anchor="end" fill="#000" >-90</text><text x="1122.50" y="499.50" font-size="11.5" font-weight="400" text-anchor="end" fill="#000" >-100</text><text x="1569.00" y="262.50" font-size="11.5" font-weight="400" text-anchor="start" fill="#000" >0</text><text x="1569.00" y="309.90" font-size="11.5" font-weight="400" text-anchor="start" fill="#000" >-20</text><text x="1569.00" y="357.30" font-size="11.5" font-weight="400" text-anchor="start" fill="#000" >-40</text><text x="1569.00" y="404.70" font-size="11.5" font-weight="400" text-anchor="start" fill="#000" >-60</text><text x="1569.00" y="452.10" font-size="11.5" font-weight="400" text-anchor="start" fill="#000" >-80</text><text x="1569.00" y="499.50" font-size="11.5" font-weight="400" text-anchor="start" fill="#000" >-100</text><text x="1346.00" y="205.00" font-size="11" font-weight="700" text-anchor="middle" fill="#000" textLength="162" lengthAdjust="spacingAndGlyphs" >Lens Geometric Distortion</text><text x="1346.00" y="221.00" font-size="11" font-weight="700" text-anchor="middle" fill="#000" textLength="106.39999999999999" lengthAdjust="spacingAndGlyphs" >150mm_wide.png</text><text x="1346.00" y="235.00" font-size="11" font-weight="700" text-anchor="middle" fill="#000" textLength="146.5" lengthAdjust="spacingAndGlyphs" >Normalized Image Radius</text><text x="1281.70" y="526.00" font-size="12" font-weight="700" text-anchor="start" fill="#000" textLength="128.2" lengthAdjust="spacingAndGlyphs" >Image Radius in Pixels</text><g transform="translate(1092.5,376.5) rotate(-90)"><text x="0" y="0" font-size="12.5" font-weight="700" text-anchor="middle" textLength="257" lengthAdjust="spacingAndGlyphs">Lens Geometric Distortion%: 100×(r<tspan font-size="9" dy="3.5">d</tspan><tspan dy="-3.5"> - r</tspan><tspan font-size="9" dy="3.5">u</tspan><tspan dy="-3.5">)/r</tspan><tspan font-size="9" dy="3.5">u</tspan></text></g><rect x="1404.5" y="268.5" width="150" height="31" fill="#fff" stroke="#000" stroke-width="1"/><path d="M1408.5 276.5 H1439" stroke="#00ffff" stroke-width="1.2"/><circle cx="1423.4" cy="290.8" r="1.1" fill="#7070ff"/><text x="1442.40" y="281.00" font-size="11" font-weight="700" text-anchor="start" fill="#000" textLength="108.5" lengthAdjust="spacingAndGlyphs" >Optical Distortion Fit</text><text x="1442.40" y="295.00" font-size="11" font-weight="700" text-anchor="start" fill="#000" textLength="79" lengthAdjust="spacingAndGlyphs" >Sampling Radii</text><path d="M1136.20 532.00 L1133.34 526.28" stroke="#4f5fcf" stroke-width="2.9" stroke-linecap="square"/><path d="M1133.60 526.80 L1131.00 521.60" stroke="#3f9ee2" stroke-width="2.9" stroke-linecap="square"/><path d="M1131.00 521.60 L1136.00 519.00" stroke="#3f9ee2" stroke-width="2.9" stroke-linecap="square"/><path d="M1136.00 519.00 L1141.00 516.40" stroke="#ee6a1e" stroke-width="2.9" stroke-linecap="square"/><path d="M1141.00 516.40 L1143.38 520.99" stroke="#f5a01a" stroke-width="2.9" stroke-linecap="square"/><path d="M1143.38 520.99 L1146.30 526.60" stroke="#e3224c" stroke-width="2.9" stroke-linecap="square"/><path d="M1146.30 526.60 L1141.25 529.30" stroke="#d01f4f" stroke-width="2.9" stroke-linecap="square"/><path d="M1141.25 529.30 L1136.20 532.00" stroke="#5050c8" stroke-width="2.9" stroke-linecap="square"/><text x="1150.10" y="528.80" font-size="15.5" font-weight="700" text-anchor="start" fill="#000" textLength="38.0" lengthAdjust="spacingAndGlyphs" >imatest</text><text x="1189.50" y="524.50" font-size="9" font-weight="700" text-anchor="start" fill="#000" >®</text><text x="1200.70" y="528.70" font-size="10" font-weight="700" text-anchor="start" fill="#1a1ad8" textLength="83.3" lengthAdjust="spacingAndGlyphs" font-style="italic">5.2.0.#### ALPHA</text><rect x="1127.5" y="663.5" width="436.0" height="237.0" fill="#fff"/><path d="M1171.5 664 V900 M1215.5 664 V900 M1258.5 664 V900 M1302.5 664 V900 M1346.5 664 V900 M1389.5 664 V900 M1433.5 664 V900 M1476.5 664 V900 M1520.5 664 V900 M1128 687.5 H1563 M1128 710.5 H1563 M1128 734.5 H1563 M1128 758.5 H1563 M1128 782.5 H1563 M1128 805.5 H1563 M1128 829.5 H1563 M1128 853.5 H1563 M1128 876.5 H1563 " stroke="#000" stroke-width="1" stroke-dasharray="1 3" fill="none" shape-rendering="crispEdges"/><path d="M1128.5 663.5 v4 M1128.5 900.5 v-4 M1171.5 663.5 v4 M1171.5 900.5 v-4 M1215.5 663.5 v4 M1215.5 900.5 v-4 M1258.5 663.5 v4 M1258.5 900.5 v-4 M1302.5 663.5 v4 M1302.5 900.5 v-4 M1346.5 663.5 v4 M1346.5 900.5 v-4 M1389.5 663.5 v4 M1389.5 900.5 v-4 M1433.5 663.5 v4 M1433.5 900.5 v-4 M1476.5 663.5 v4 M1476.5 900.5 v-4 M1520.5 663.5 v4 M1520.5 900.5 v-4 M1564.5 663.5 v4 M1564.5 900.5 v-4 M1127.5 663.5 h4 M1127.5 687.5 h4 M1127.5 710.5 h4 M1127.5 734.5 h4 M1127.5 758.5 h4 M1127.5 782.5 h4 M1127.5 805.5 h4 M1127.5 829.5 h4 M1127.5 853.5 h4 M1127.5 876.5 h4 M1127.5 900.5 h4 M1563.5 663.5 h-4 M1563.5 722.5 h-4 M1563.5 782.5 h-4 M1563.5 841.5 h-4 M1563.5 900.5 h-4 " stroke="#000" stroke-width="1" fill="none"/><path d="M1127.50 663.50 L1129.68 663.50 L1131.86 663.52 L1134.04 663.54 L1136.22 663.56 L1138.40 663.60 L1140.58 663.64 L1142.76 663.69 L1144.94 663.75 L1147.12 663.82 L1149.30 663.90 L1151.48 663.98 L1153.66 664.07 L1155.84 664.17 L1158.02 664.28 L1160.20 664.39 L1162.38 664.51 L1164.56 664.65 L1166.74 664.78 L1168.92 664.93 L1171.10 665.09 L1173.28 665.25 L1175.46 665.42 L1177.64 665.60 L1179.82 665.79 L1182.00 665.98 L1184.18 666.19 L1186.36 666.40 L1188.54 666.62 L1190.72 666.85 L1192.90 667.09 L1195.08 667.33 L1197.26 667.58 L1199.44 667.85 L1201.62 668.12 L1203.80 668.39 L1205.98 668.68 L1208.16 668.98 L1210.34 669.28 L1212.52 669.59 L1214.70 669.91 L1216.88 670.24 L1219.06 670.58 L1221.24 670.93 L1223.42 671.28 L1225.60 671.65 L1227.78 672.02 L1229.96 672.40 L1232.14 672.79 L1234.32 673.19 L1236.50 673.60 L1238.68 674.01 L1240.86 674.44 L1243.04 674.87 L1245.22 675.32 L1247.40 675.77 L1249.58 676.23 L1251.76 676.70 L1253.94 677.18 L1256.12 677.67 L1258.30 678.17 L1260.48 678.68 L1262.66 679.20 L1264.84 679.73 L1267.02 680.26 L1269.20 680.81 L1271.38 681.37 L1273.56 681.93 L1275.74 682.51 L1277.92 683.09 L1280.10 683.69 L1282.28 684.29 L1284.46 684.91 L1286.64 685.53 L1288.82 686.17 L1291.00 686.81 L1293.18 687.47 L1295.36 688.13 L1297.54 688.81 L1299.72 689.50 L1301.90 690.19 L1304.08 690.90 L1306.26 691.62 L1308.44 692.35 L1310.62 693.09 L1312.80 693.84 L1314.98 694.60 L1317.16 695.37 L1319.34 696.15 L1321.52 696.95 L1323.70 697.75 L1325.88 698.57 L1328.06 699.39 L1330.24 700.23 L1332.42 701.08 L1334.60 701.94 L1336.78 702.82 L1338.96 703.70 L1341.14 704.60 L1343.32 705.51 L1345.50 706.43 L1347.68 707.36 L1349.86 708.30 L1352.04 709.26 L1354.22 710.23 L1356.40 711.21 L1358.58 712.20 L1360.76 713.21 L1362.94 714.23 L1365.12 715.26 L1367.30 716.30 L1369.48 717.36 L1371.66 718.43 L1373.84 719.51 L1376.02 720.61 L1378.20 721.72 L1380.38 722.84 L1382.56 723.97 L1384.74 725.12 L1386.92 726.29 L1389.10 727.46 L1391.28 728.65 L1393.46 729.86 L1395.64 731.07 L1397.82 732.31 L1400.00 733.55 L1402.18 734.81 L1404.36 736.09 L1406.54 737.38 L1408.72 738.68 L1410.90 740.00 L1413.08 741.33 L1415.26 742.68 L1417.44 744.04 L1419.62 745.42 L1421.80 746.81 L1423.98 748.22 L1426.16 749.65 L1428.34 751.09 L1430.52 752.54 L1432.70 754.01 L1434.88 755.50 L1437.06 757.00 L1439.24 758.52 L1441.42 760.06 L1443.60 761.61 L1445.78 763.18 L1447.96 764.76 L1450.14 766.36 L1452.32 767.98 L1454.50 769.62 L1456.68 771.27 L1458.86 772.94 L1461.04 774.62 L1463.22 776.33 L1465.40 778.05 L1467.58 779.79 L1469.76 781.54 L1471.94 783.32 L1474.12 785.11 L1476.30 786.92 L1478.48 788.75 L1480.66 790.60 L1482.84 792.47 L1485.02 794.35 L1487.20 796.26 L1489.38 798.18 L1491.56 800.12 L1493.74 802.08 L1495.92 804.06 L1498.10 806.06 L1500.28 808.08 L1502.46 810.12 L1504.64 812.18 L1506.82 814.26 L1509.00 816.36 L1511.18 818.48 L1513.36 820.62 L1515.54 822.79 L1517.72 824.97 L1519.90 827.17 L1522.08 829.40 L1524.26 831.64 L1526.44 833.91 L1528.62 836.20 L1530.80 838.51 L1532.98 840.84 L1535.16 843.19 L1537.34 845.57 L1539.52 847.97 L1541.70 850.39 L1543.88 852.83 L1546.06 855.30 L1548.24 857.79 L1550.42 860.30 L1552.60 862.83 L1554.78 865.39 L1556.96 867.97 L1559.14 870.58 L1561.32 873.21 L1563.50 875.86" stroke="#00ffff" stroke-width="1.6" fill="none"/><path d="M1312.34 693.99 h1.8 M1446.24 764.16 h1.8 M1197.71 667.75 h1.8 M1517.77 825.92 h1.8 M1233.41 673.19 h1.8 M1272.28 681.83 h1.8 M1273.92 682.27 h1.8 M1378.32 722.24 h1.8 M1207.39 668.99 h1.8 M1442.84 761.71 h1.8 M1336.41 703.03 h1.8 M1502.94 811.42 h1.8 M1388.82 727.80 h1.8 M1429.63 752.55 h1.8 M1313.73 694.48 h1.8 M1463.86 777.54 h1.8 M1352.94 710.06 h1.8 M1498.42 807.19 h1.8 M1329.97 700.48 h1.8 M1425.04 749.50 h1.8 M1285.00 685.32 h1.8 M1508.64 816.88 h1.8 M1445.06 763.30 h1.8 M1365.55 715.89 h1.8 M1507.00 815.30 h1.8 M1487.16 797.01 h1.8 M1185.78 666.43 h1.8 M1309.00 692.84 h1.8 M1252.84 677.14 h1.8 M1272.28 681.83 h1.8 M1346.33 707.17 h1.8 M1162.71 664.59 h1.8 M1427.38 751.05 h1.8 M1425.90 750.07 h1.8 M1430.55 753.17 h1.8 M1442.84 761.71 h1.8 M1398.43 733.17 h1.8 M1366.58 716.39 h1.8 M1236.89 673.84 h1.8 M1433.86 755.41 h1.8 M1441.16 760.51 h1.8 M1383.86 725.13 h1.8 M1157.73 664.31 h1.8 M1397.16 732.44 h1.8 M1381.02 723.64 h1.8 M1301.50 690.35 h1.8 M1437.08 757.64 h1.8 M1470.01 782.48 h1.8 M1378.06 722.11 h1.8 M1361.34 713.90 h1.8 M1279.46 683.76 h1.8 M1171.56 665.19 h1.8 M1209.40 669.28 h1.8 M1345.57 706.84 h1.8 M1395.19 731.33 h1.8 M1199.70 667.99 h1.8 M1252.95 677.16 h1.8 M1466.34 779.51 h1.8 M1429.29 752.32 h1.8 M1392.12 729.61 h1.8 M1413.08 741.88 h1.8 M1383.40 724.89 h1.8 M1348.00 707.89 h1.8 M1247.48 675.98 h1.8 M1434.73 756.02 h1.8 M1410.58 740.35 h1.8 M1311.22 693.60 h1.8 M1492.66 801.92 h1.8 M1387.31 726.98 h1.8 M1259.45 678.65 h1.8 M1448.04 765.48 h1.8 M1298.45 689.38 h1.8 M1449.09 766.25 h1.8 M1234.77 673.44 h1.8 M1377.42 721.78 h1.8 M1272.94 682.01 h1.8 M1334.86 702.41 h1.8 M1415.23 743.22 h1.8 M1369.66 717.89 h1.8 M1382.18 724.25 h1.8 M1360.17 713.35 h1.8 M1458.08 773.03 h1.8 M1162.12 664.55 h1.8 M1436.02 756.90 h1.8 M1225.64 671.81 h1.8 M1288.36 686.30 h1.8 M1292.95 687.67 h1.8 M1383.46 724.93 h1.8 M1407.04 738.21 h1.8 M1269.97 681.24 h1.8 M1359.04 712.83 h1.8 M1384.39 725.42 h1.8 M1508.44 816.69 h1.8 M1514.99 823.13 h1.8 M1465.48 778.83 h1.8 M1366.55 716.38 h1.8 M1166.30 664.82 h1.8 M1465.21 778.61 h1.8 M1496.72 805.62 h1.8 M1417.23 744.48 h1.8 M1327.00 699.33 h1.8 M1198.99 667.90 h1.8 M1394.83 731.13 h1.8 M1177.92 665.70 h1.8 M1481.53 792.11 h1.8 M1320.36 696.85 h1.8 M1334.52 702.27 h1.8 M1511.75 819.92 h1.8 M1433.21 754.97 h1.8 M1171.55 665.19 h1.8 M1500.83 809.43 h1.8 M1352.90 710.04 h1.8 M1405.49 737.29 h1.8 M1456.01 771.44 h1.8 M1485.61 795.65 h1.8 M1195.36 667.47 h1.8 M1314.56 694.76 h1.8 M1194.01 667.31 h1.8 M1303.14 690.89 h1.8 M1450.86 767.56 h1.8 M1320.19 696.79 h1.8 M1249.07 676.32 h1.8 M1412.70 741.65 h1.8 M1223.61 671.46 h1.8 M1457.87 772.87 h1.8 M1285.43 685.44 h1.8 M1503.63 812.08 h1.8 M1306.62 692.04 h1.8 M1232.49 673.02 h1.8 M1479.09 790.03 h1.8 M1272.44 681.87 h1.8 M1233.05 673.12 h1.8 M1274.40 682.39 h1.8 M1271.80 681.71 h1.8 M1284.25 685.10 h1.8 M1408.10 738.85 h1.8 M1355.72 711.31 h1.8 M1269.18 681.03 h1.8 M1404.57 736.74 h1.8 M1462.97 776.84 h1.8 M1408.47 739.07 h1.8 M1287.11 685.93 h1.8 M1382.00 724.15 h1.8 M1482.05 792.56 h1.8 M1255.11 677.65 h1.8 M1385.15 725.82 h1.8 M1353.05 710.11 h1.8 M1441.75 760.93 h1.8 M1502.09 810.62 h1.8 M1320.89 697.04 h1.8 M1499.28 807.99 h1.8 M1444.67 763.02 h1.8 M1322.64 697.69 h1.8 M1508.40 816.66 h1.8 M1328.22 699.80 h1.8 M1467.08 780.10 h1.8 M1317.54 695.83 h1.8 M1308.73 692.75 h1.8 M1426.48 750.45 h1.8 M1423.11 748.24 h1.8 M1516.02 824.17 h1.8 M1204.56 668.61 h1.8 M1335.82 702.79 h1.8 M1487.10 796.96 h1.8 M1344.46 706.37 h1.8 M1457.39 772.50 h1.8 M1157.88 664.32 h1.8 M1339.17 704.16 h1.8 M1473.76 785.56 h1.8 M1289.04 686.50 h1.8 M1411.19 740.72 h1.8 M1450.45 767.26 h1.8 M1488.10 797.85 h1.8 M1434.09 755.57 h1.8 M1498.38 807.15 h1.8 M1334.85 702.40 h1.8 M1503.46 811.92 h1.8 M1375.63 720.87 h1.8 M1480.21 790.98 h1.8 M1294.53 688.15 h1.8 M1456.25 771.63 h1.8 M1427.01 750.80 h1.8 M1459.11 773.82 h1.8 M1165.16 664.74 h1.8 M1491.89 801.23 h1.8 M1389.55 728.20 h1.8 M1308.21 692.57 h1.8 M1497.31 806.16 h1.8 M1439.69 759.47 h1.8 M1335.16 702.53 h1.8 M1376.12 721.12 h1.8 M1468.72 781.43 h1.8 M1225.84 671.84 h1.8 M1253.81 677.36 h1.8 M1358.42 712.54 h1.8 M1212.82 669.77 h1.8 M1507.72 815.99 h1.8 M1400.46 734.34 h1.8 M1509.01 817.24 h1.8 M1429.61 752.53 h1.8 M1448.82 766.05 h1.8 M1374.08 720.08 h1.8 M1136.86 663.59 h1.8 M1236.42 673.75 h1.8 M1214.52 670.02 h1.8 M1274.98 682.54 h1.8 M1223.30 671.41 h1.8 M1456.51 771.82 h1.8 M1323.94 698.18 h1.8 M1218.40 670.62 h1.8 M1263.35 679.58 h1.8 M1361.46 713.96 h1.8 M1489.09 798.72 h1.8 M1245.29 675.52 h1.8 M1276.35 682.91 h1.8 M1384.09 725.26 h1.8 M1265.43 680.09 h1.8 M1397.01 732.36 h1.8 M1318.96 696.34 h1.8 M1497.49 806.33 h1.8 M1348.63 708.16 h1.8 M1307.21 692.24 h1.8 M1429.63 752.55 h1.8 M1432.63 754.58 h1.8 M1367.65 716.91 h1.8 M1512.66 820.82 h1.8 M1277.66 683.27 h1.8 M1396.03 731.80 h1.8 M1271.06 681.52 h1.8 M1336.59 703.11 h1.8 M1222.98 671.36 h1.8 M1346.46 707.22 h1.8 M1249.33 676.37 h1.8 M1345.40 706.77 h1.8 M1169.46 665.03 h1.8 M1441.52 760.77 h1.8 M1437.73 758.10 h1.8 M1410.66 740.40 h1.8 M1381.88 724.09 h1.8 M1249.44 676.40 h1.8 M1501.55 810.11 h1.8 M1258.93 678.53 h1.8 M1201.14 668.17 h1.8 M1500.58 809.20 h1.8 M1450.27 767.12 h1.8 M1479.35 790.25 h1.8 M1246.25 675.72 h1.8 M1268.86 680.95 h1.8 M1386.22 726.39 h1.8 M1438.64 758.73 h1.8 M1264.37 679.83 h1.8 M1406.16 737.68 h1.8 M1316.09 695.31 h1.8 M1466.25 779.45 h1.8 M1450.50 767.29 h1.8 M1511.64 819.81 h1.8 M1350.49 708.97 h1.8 M1440.94 760.35 h1.8 M1336.64 703.12 h1.8 M1399.60 733.84 h1.8 M1305.32 691.61 h1.8 M1312.00 693.87 h1.8 M1270.57 681.39 h1.8 M1344.64 706.45 h1.8 M1184.77 666.33 h1.8 M1207.78 669.05 h1.8 M1480.95 791.62 h1.8 M1481.05 791.70 h1.8 M1354.69 710.84 h1.8 M1408.13 738.87 h1.8 M1335.71 702.75 h1.8 M1481.19 791.82 h1.8 M1328.39 699.87 h1.8 M1419.08 745.65 h1.8 M1338.48 703.87 h1.8 M1458.52 773.37 h1.8 M1335.62 702.71 h1.8 M1455.10 770.75 h1.8 M1237.89 674.04 h1.8 M1445.54 763.66 h1.8 M1417.27 744.50 h1.8 M1503.95 812.38 h1.8 M1510.96 819.15 h1.8 M1206.88 668.92 h1.8 M1284.73 685.24 h1.8 M1387.62 727.15 h1.8 M1466.70 779.81 h1.8 M1320.67 696.96 h1.8 M1481.28 791.90 h1.8 M1225.66 671.81 h1.8 M1264.82 679.94 h1.8 M1341.26 705.02 h1.8 M1516.71 824.85 h1.8 M1400.84 734.56 h1.8 M1445.84 763.87 h1.8 M1494.25 803.36 h1.8 M1418.47 745.27 h1.8 M1481.11 791.76 h1.8 M1429.75 752.63 h1.8 M1279.76 683.84 h1.8 M1420.74 746.71 h1.8 M1226.80 672.00 h1.8 M1153.29 664.09 h1.8 M1468.55 781.29 h1.8 M1222.10 671.21 h1.8 M1480.12 790.91 h1.8 M1508.87 817.11 h1.8 M1419.86 746.15 h1.8 M1424.93 749.43 h1.8 M1211.87 669.63 h1.8 M1473.23 785.12 h1.8 M1294.87 688.26 h1.8 M1513.89 822.04 h1.8 M1436.29 757.09 h1.8 M1297.27 689.01 h1.8 M1432.74 754.65 h1.8 M1236.38 673.74 h1.8 M1401.92 735.19 h1.8 M1434.56 755.90 h1.8 M1200.35 668.07 h1.8 M1176.45 665.58 h1.8 M1469.75 782.27 h1.8 M1430.75 753.30 h1.8 M1516.95 825.10 h1.8 M1429.13 752.21 h1.8 M1308.80 692.77 h1.8 M1442.13 761.20 h1.8 M1279.81 683.86 h1.8 M1359.32 712.96 h1.8 M1232.24 672.97 h1.8 M1428.20 751.59 h1.8 M1432.45 754.45 h1.8 M1482.06 792.57 h1.8 M1435.10 756.27 h1.8 M1504.94 813.33 h1.8 M1502.19 810.72 h1.8 M1495.13 804.17 h1.8 M1518.86 827.03 h1.8 M1362.56 714.47 h1.8 M1373.89 719.99 h1.8 M1450.68 767.43 h1.8 M1324.46 698.37 h1.8 M1484.52 794.70 h1.8 M1201.98 668.28 h1.8 M1370.05 718.08 h1.8 M1347.59 707.71 h1.8 M1307.97 692.49 h1.8 M1329.04 700.12 h1.8 M1454.05 769.95 h1.8 M1238.92 674.24 h1.8 M1439.78 759.53 h1.8 M1365.03 715.65 h1.8 M1300.53 690.04 h1.8 M1478.79 789.78 h1.8 M1497.51 806.35 h1.8 M1419.80 746.11 h1.8 M1449.80 766.78 h1.8 M1403.99 736.40 h1.8 M1254.33 677.47 h1.8 M1488.30 798.02 h1.8 M1486.50 796.43 h1.8 M1455.64 771.16 h1.8 M1416.21 743.83 h1.8 M1478.17 789.25 h1.8 M1472.76 784.73 h1.8 M1440.60 760.12 h1.8 M1262.00 679.26 h1.8 M1310.99 693.52 h1.8 M1393.45 730.35 h1.8 M1478.29 789.36 h1.8 M1513.10 821.26 h1.8 M1481.08 791.73 h1.8 M1345.05 706.62 h1.8 M1306.00 691.83 h1.8 M1299.01 689.56 h1.8 M1493.03 802.25 h1.8 M1216.45 670.31 h1.8 M1308.97 692.83 h1.8 M1504.74 813.14 h1.8 M1426.04 750.16 h1.8 M1379.44 722.82 h1.8 M1488.18 797.92 h1.8 M1315.52 695.11 h1.8 M1244.12 675.28 h1.8 M1494.59 803.67 h1.8 M1231.47 672.83 h1.8 M1325.14 698.63 h1.8 M1181.03 665.98 h1.8 M1478.45 789.49 h1.8 M1440.87 760.31 h1.8 M1484.37 794.57 h1.8 M1441.37 760.66 h1.8 M1488.71 798.38 h1.8 M1472.10 784.19 h1.8 M1475.38 786.90 h1.8 M1352.82 710.01 h1.8 M1365.28 715.76 h1.8 M1431.14 753.57 h1.8 M1463.97 777.63 h1.8 M1367.02 716.60 h1.8 M1321.71 697.35 h1.8 M1345.80 706.94 h1.8 M1407.64 738.57 h1.8 M1506.25 814.58 h1.8 M1298.91 689.53 h1.8 M1445.08 763.32 h1.8 M1482.63 793.06 h1.8 M1158.81 664.36 h1.8 M1421.46 747.17 h1.8 M1390.05 728.47 h1.8 M1468.76 781.47 h1.8 M1437.97 758.26 h1.8 M1243.56 675.16 h1.8 M1203.65 668.49 h1.8 M1251.48 676.84 h1.8 M1173.30 665.32 h1.8 M1278.48 683.49 h1.8 M1515.96 824.11 h1.8 M1358.06 712.38 h1.8 M1268.40 680.84 h1.8 " stroke="#0000ff" stroke-width="2" fill="none"/><rect x="1127.5" y="663.5" width="436.0" height="237.0" fill="none" stroke="#000" stroke-width="1"/><text x="1127.50" y="656.00" font-size="11.5" font-weight="400" text-anchor="middle" fill="#000" >0</text><text x="1171.10" y="656.00" font-size="11.5" font-weight="400" text-anchor="middle" fill="#000" >0.1</text><text x="1214.70" y="656.00" font-size="11.5" font-weight="400" text-anchor="middle" fill="#000" >0.2</text><text x="1258.30" y="656.00" font-size="11.5" font-weight="400" text-anchor="middle" fill="#000" >0.3</text><text x="1301.90" y="656.00" font-size="11.5" font-weight="400" text-anchor="middle" fill="#000" >0.4</text><text x="1345.50" y="656.00" font-size="11.5" font-weight="400" text-anchor="middle" fill="#000" >0.5</text><text x="1389.10" y="656.00" font-size="11.5" font-weight="400" text-anchor="middle" fill="#000" >0.6</text><text x="1432.70" y="656.00" font-size="11.5" font-weight="400" text-anchor="middle" fill="#000" >0.7</text><text x="1476.30" y="656.00" font-size="11.5" font-weight="400" text-anchor="middle" fill="#000" >0.8</text><text x="1519.90" y="656.00" font-size="11.5" font-weight="400" text-anchor="middle" fill="#000" >0.9</text><text x="1563.50" y="656.00" font-size="11.5" font-weight="400" text-anchor="middle" fill="#000" >1</text><text x="1127.50" y="916.00" font-size="11.5" font-weight="400" text-anchor="middle" fill="#000" >0</text><text x="1171.10" y="916.00" font-size="11.5" font-weight="400" text-anchor="middle" fill="#000" >84</text><text x="1214.70" y="916.00" font-size="11.5" font-weight="400" text-anchor="middle" fill="#000" >167</text><text x="1258.30" y="916.00" font-size="11.5" font-weight="400" text-anchor="middle" fill="#000" >251</text><text x="1301.90" y="916.00" font-size="11.5" font-weight="400" text-anchor="middle" fill="#000" >335</text><text x="1345.50" y="916.00" font-size="11.5" font-weight="400" text-anchor="middle" fill="#000" >419</text><text x="1389.10" y="916.00" font-size="11.5" font-weight="400" text-anchor="middle" fill="#000" >502</text><text x="1432.70" y="916.00" font-size="11.5" font-weight="400" text-anchor="middle" fill="#000" >586</text><text x="1476.30" y="916.00" font-size="11.5" font-weight="400" text-anchor="middle" fill="#000" >670</text><text x="1519.90" y="916.00" font-size="11.5" font-weight="400" text-anchor="middle" fill="#000" >754</text><text x="1563.50" y="916.00" font-size="11.5" font-weight="400" text-anchor="middle" fill="#000" >837</text><text x="1122.50" y="667.50" font-size="11.5" font-weight="400" text-anchor="end" fill="#000" >0</text><text x="1122.50" y="691.20" font-size="11.5" font-weight="400" text-anchor="end" fill="#000" >-2</text><text x="1122.50" y="714.90" font-size="11.5" font-weight="400" text-anchor="end" fill="#000" >-4</text><text x="1122.50" y="738.60" font-size="11.5" font-weight="400" text-anchor="end" fill="#000" >-6</text><text x="1122.50" y="762.30" font-size="11.5" font-weight="400" text-anchor="end" fill="#000" >-8</text><text x="1122.50" y="786.00" font-size="11.5" font-weight="400" text-anchor="end" fill="#000" >-10</text><text x="1122.50" y="809.70" font-size="11.5" font-weight="400" text-anchor="end" fill="#000" >-12</text><text x="1122.50" y="833.40" font-size="11.5" font-weight="400" text-anchor="end" fill="#000" >-14</text><text x="1122.50" y="857.10" font-size="11.5" font-weight="400" text-anchor="end" fill="#000" >-16</text><text x="1122.50" y="880.80" font-size="11.5" font-weight="400" text-anchor="end" fill="#000" >-18</text><text x="1122.50" y="904.50" font-size="11.5" font-weight="400" text-anchor="end" fill="#000" >-20</text><text x="1569.00" y="667.50" font-size="11.5" font-weight="400" text-anchor="start" fill="#000" >0</text><text x="1569.00" y="726.75" font-size="11.5" font-weight="400" text-anchor="start" fill="#000" >-5</text><text x="1569.00" y="786.00" font-size="11.5" font-weight="400" text-anchor="start" fill="#000" >-10</text><text x="1569.00" y="845.25" font-size="11.5" font-weight="400" text-anchor="start" fill="#000" >-15</text><text x="1569.00" y="904.50" font-size="11.5" font-weight="400" text-anchor="start" fill="#000" >-20</text><text x="1346.00" y="610.00" font-size="11" font-weight="700" text-anchor="middle" fill="#000" textLength="162" lengthAdjust="spacingAndGlyphs" >Lens Geometric Distortion</text><text x="1346.00" y="626.00" font-size="11" font-weight="700" text-anchor="middle" fill="#000" textLength="114.0" lengthAdjust="spacingAndGlyphs" >1200mm_main.png</text><text x="1346.00" y="640.00" font-size="11" font-weight="700" text-anchor="middle" fill="#000" textLength="146.5" lengthAdjust="spacingAndGlyphs" >Normalized Image Radius</text><text x="1281.70" y="931.00" font-size="12" font-weight="700" text-anchor="start" fill="#000" textLength="128.2" lengthAdjust="spacingAndGlyphs" >Image Radius in Pixels</text><g transform="translate(1092.5,781.5) rotate(-90)"><text x="0" y="0" font-size="12.5" font-weight="700" text-anchor="middle" textLength="257" lengthAdjust="spacingAndGlyphs">Lens Geometric Distortion%: 100×(r<tspan font-size="9" dy="3.5">d</tspan><tspan dy="-3.5"> - r</tspan><tspan font-size="9" dy="3.5">u</tspan><tspan dy="-3.5">)/r</tspan><tspan font-size="9" dy="3.5">u</tspan></text></g><rect x="1404.5" y="673.5" width="150" height="31" fill="#fff" stroke="#000" stroke-width="1"/><path d="M1408.5 681.5 H1439" stroke="#00ffff" stroke-width="1.2"/><circle cx="1423.4" cy="695.8" r="1.1" fill="#7070ff"/><text x="1442.40" y="686.00" font-size="11" font-weight="700" text-anchor="start" fill="#000" textLength="108.5" lengthAdjust="spacingAndGlyphs" >Optical Distortion Fit</text><text x="1442.40" y="700.00" font-size="11" font-weight="700" text-anchor="start" fill="#000" textLength="79" lengthAdjust="spacingAndGlyphs" >Sampling Radii</text><path d="M1136.20 937.00 L1133.34 931.28" stroke="#4f5fcf" stroke-width="2.9" stroke-linecap="square"/><path d="M1133.60 931.80 L1131.00 926.60" stroke="#3f9ee2" stroke-width="2.9" stroke-linecap="square"/><path d="M1131.00 926.60 L1136.00 924.00" stroke="#3f9ee2" stroke-width="2.9" stroke-linecap="square"/><path d="M1136.00 924.00 L1141.00 921.40" stroke="#ee6a1e" stroke-width="2.9" stroke-linecap="square"/><path d="M1141.00 921.40 L1143.38 925.99" stroke="#f5a01a" stroke-width="2.9" stroke-linecap="square"/><path d="M1143.38 925.99 L1146.30 931.60" stroke="#e3224c" stroke-width="2.9" stroke-linecap="square"/><path d="M1146.30 931.60 L1141.25 934.30" stroke="#d01f4f" stroke-width="2.9" stroke-linecap="square"/><path d="M1141.25 934.30 L1136.20 937.00" stroke="#5050c8" stroke-width="2.9" stroke-linecap="square"/><text x="1150.10" y="933.80" font-size="15.5" font-weight="700" text-anchor="start" fill="#000" textLength="38.0" lengthAdjust="spacingAndGlyphs" >imatest</text><text x="1189.50" y="929.50" font-size="9" font-weight="700" text-anchor="start" fill="#000" >®</text><text x="1200.70" y="933.70" font-size="10" font-weight="700" text-anchor="start" fill="#1a1ad8" textLength="83.3" lengthAdjust="spacingAndGlyphs" font-style="italic">5.2.0.#### ALPHA</text></svg>
</div>
<div style="left:1633px;top:154px;width:15px;height:801px;box-sizing:border-box;border-left:1px solid #8a8a8a;border-right:1px solid #8a8a8a;background:#efefef;"></div>
<div style="left:1633px;top:154px;width:15px;height:16px;box-sizing:border-box;background:#fff;border-right:2px solid #000;border-bottom:2px solid #000;"></div>
<svg style="left:1637px;top:160px" width="7" height="5"><path d="M0.5 3.6 L3 0.6 L5.5 3.6 Z" fill="#000"/></svg>
<div style="left:1633px;top:170px;width:15px;height:219px;box-sizing:border-box;background:#fff;border-right:2px solid #000;border-bottom:2px solid #000;"></div>
<div style="left:1633px;top:939px;width:15px;height:16px;box-sizing:border-box;background:#fff;border-right:2px solid #000;border-bottom:2px solid #000;"></div>
<svg style="left:1637px;top:945px" width="7" height="5"><path d="M0.5 0.5 L5.5 0.5 L3 3.5 Z" fill="#000"/></svg>
<svg style="left:453px;top:165px" width="413" height="350" viewBox="453 165 413 350"><defs><radialGradient id="lgm" gradientUnits="userSpaceOnUse" cx="662.99" cy="334.6" r="260"><stop offset="0" stop-color="#f6f6f6"/><stop offset="0.55" stop-color="#dddddd"/><stop offset="1" stop-color="#b0b0b0"/></radialGradient><radialGradient id="dgm" gradientUnits="userSpaceOnUse" cx="662.99" cy="334.6" r="260"><stop offset="0" stop-color="#585858"/><stop offset="0.6" stop-color="#4e4e4e"/><stop offset="1" stop-color="#3c3c3c"/></radialGradient><filter id="blm" x="-5%" y="-5%" width="110%" height="110%"><feGaussianBlur stdDeviation="0.35"/></filter><clipPath id="ccm"><path d="M392.8 176.6L399.1 176.4L405.3 176.2L411.4 175.9L417.4 175.5L423.4 175.1L429.3 174.7L435.2 174.1L441.1 173.6L446.9 173L452.8 172.4L458.7 171.7L464.7 171L470.6 170.3L476.6 169.6L482.7 168.9L488.8 168.2L495 167.5L501.2 166.7L507.5 166L513.9 165.3L520.3 164.6L526.8 163.9L533.4 163.2L540 162.6L546.7 162L553.5 161.4L560.3 160.8L567.2 160.2L574.2 159.7L581.2 159.3L588.3 158.8L595.4 158.4L602.6 158L609.8 157.7L617.1 157.4L624.4 157.2L631.7 156.9L639 156.8L646.4 156.7L653.8 156.6L661.1 156.5L668.5 156.6L675.9 156.6L683.3 156.7L690.6 156.9L697.9 157L705.3 157.3L712.5 157.5L719.8 157.9L727 158.2L734.1 158.6L741.2 159L748.3 159.5L755.3 160L762.2 160.5L769.1 161.1L775.9 161.7L782.6 162.3L789.3 162.9L795.9 163.6L802.4 164.3L808.9 164.9L815.3 165.7L821.6 166.4L827.9 167.1L834.1 167.8L840.2 168.5L846.3 169.3L852.3 170L858.3 170.7L864.3 171.4L870.2 172L876.1 172.7L882 173.3L887.9 173.9L893.7 174.4L899.7 174.9L905.6 175.3L911.6 175.7L917.6 176.1L923.8 176.3L930 176.5L933.2 491L926.9 491.2L920.8 491.4L914.7 491.7L908.7 492.1L902.7 492.5L896.8 493L890.9 493.5L885.1 494.1L879.2 494.7L873.3 495.3L867.4 495.9L861.5 496.6L855.5 497.3L849.5 498L843.5 498.7L837.3 499.5L831.2 500.2L824.9 500.9L818.7 501.6L812.3 502.3L805.9 503L799.4 503.7L792.8 504.4L786.1 505L779.4 505.7L772.6 506.3L765.8 506.8L758.9 507.4L751.9 507.9L744.9 508.4L737.8 508.8L730.6 509.2L723.5 509.6L716.2 509.9L709 510.2L701.7 510.5L694.3 510.7L687 510.8L679.6 511L672.2 511L664.8 511.1L657.4 511.1L650.1 511L642.7 510.9L635.3 510.8L628 510.6L620.7 510.3L613.4 510.1L606.1 509.8L598.9 509.4L591.8 509L584.6 508.6L577.6 508.1L570.6 507.6L563.6 507.1L556.8 506.6L549.9 506L543.2 505.4L536.5 504.7L529.9 504.1L523.4 503.4L516.9 502.7L510.5 502L504.2 501.3L497.9 500.6L491.7 499.8L485.6 499.1L479.5 498.4L473.5 497.7L467.5 497L461.5 496.3L455.6 495.6L449.7 495L443.9 494.4L438 493.8L432.1 493.2L426.2 492.7L420.3 492.3L414.3 491.9L408.3 491.5L402.1 491.3L395.9 491.1Z"/></clipPath></defs><rect x="453" y="165" width="413" height="350" fill="#050505"/><g filter="url(#blm)" clip-path="url(#ccm)"><rect x="433" y="145" width="453" height="390" fill="url(#lgm)"/><path d="M448.2 163.7L455.5 163L454.7 170.4L447.5 171.2ZM446.8 178.8L453.9 178L453.1 185.6L446 186.4ZM445.3 194L452.3 193.3L451.5 201L444.5 201.8ZM443.5 456.8L450.5 457.6L451.2 465.4L444.2 464.6ZM445 472.4L452 473.2L452.8 480.8L445.7 480.1ZM446.5 487.7L453.6 488.5L454.4 496L447.3 495.3ZM448 502.8L455.2 503.5L455.9 511L448.7 510.3ZM454.7 170.4L461.9 169.6L461.1 177.2L453.9 178ZM453.1 185.6L460.3 184.8L459.4 192.4L452.3 193.3ZM451.5 201L458.6 200.2L457.8 208L450.8 208.8ZM450 216.7L457.1 215.9L456.3 223.9L449.3 224.6ZM448.6 232.6L455.6 231.9L454.9 240L447.9 240.7ZM447.3 248.8L454.3 248.2L453.7 256.5L446.7 257.1ZM446.2 265.3L453.2 264.8L452.7 273.2L445.7 273.7ZM445.3 282.1L452.3 281.7L451.9 290.1L444.9 290.5ZM444.6 299L451.6 298.7L451.3 307.2L444.4 307.4ZM444.2 316L451.2 315.8L451.1 324.4L444.1 324.5ZM444.1 333.1L451 333L451 341.7L444.1 341.6ZM444.2 350.1L451.1 350.3L451.3 358.9L444.3 358.7ZM444.5 367.2L451.5 367.4L451.8 376L444.8 375.7ZM445.1 384.1L452.1 384.5L452.5 392.9L445.5 392.5ZM446 400.9L453 401.3L453.5 409.7L446.5 409.2ZM447.1 417.4L454.1 418L454.7 426.2L447.7 425.6ZM448.3 433.7L455.3 434.4L456 442.4L449 441.7ZM449.7 449.7L456.8 450.4L457.5 458.4L450.5 457.6ZM451.2 465.4L458.3 466.2L459.1 474L452 473.2ZM452.8 480.8L460 481.7L460.8 489.3L453.6 488.5ZM454.4 496L461.6 496.8L462.4 504.3L455.2 503.5ZM455.9 511L463.2 511.8L464 519.2L456.7 518.5ZM462.7 162.2L470 161.3L469.1 168.8L461.9 169.6ZM461.1 177.2L468.3 176.3L467.4 183.9L460.3 184.8ZM459.4 192.4L466.6 191.6L465.8 199.4L458.6 200.2ZM457.8 208L465 207.2L464.2 215.1L457.1 215.9ZM456.3 223.9L463.4 223.1L462.7 231.2L455.6 231.9ZM454.9 240L462 239.4L461.4 247.6L454.3 248.2ZM453.7 256.5L460.8 255.9L460.3 264.3L453.2 264.8ZM452.7 273.2L459.8 272.8L459.3 281.3L452.3 281.7ZM451.9 290.1L459 289.8L458.7 298.4L451.6 298.7ZM451.3 307.2L458.4 307L458.3 315.7L451.2 315.8ZM451.1 324.4L458.1 324.4L458.1 333L451 333ZM451 341.7L458.1 341.7L458.2 350.4L451.1 350.3ZM451.3 358.9L458.4 359.1L458.6 367.7L451.5 367.4ZM451.8 376L458.9 376.3L459.2 384.9L452.1 384.5ZM452.5 392.9L459.6 393.4L460.1 401.8L453 401.3ZM453.5 409.7L460.6 410.2L461.2 418.6L454.1 418ZM454.7 426.2L461.8 426.9L462.5 435L455.3 434.4ZM456 442.4L463.2 443.2L463.9 451.2L456.8 450.4ZM457.5 458.4L464.7 459.1L465.5 467L458.3 466.2ZM459.1 474L466.3 474.8L467.1 482.5L460 481.7ZM460.8 489.3L468 490.1L468.8 497.7L461.6 496.8ZM462.4 504.3L469.7 505.2L470.5 512.6L463.2 511.8ZM469.1 168.8L476.4 168L475.6 175.5L468.3 176.3ZM467.4 183.9L474.7 183.1L473.9 190.8L466.6 191.6ZM465.8 199.4L473 198.5L472.2 206.4L465 207.2ZM464.2 215.1L471.4 214.3L470.7 222.4L463.4 223.1ZM462.7 231.2L469.9 230.5L469.2 238.7L462 239.4ZM461.4 247.6L468.6 247L468 255.4L460.8 255.9ZM460.3 264.3L467.5 263.8L467 272.3L459.8 272.8ZM459.3 281.3L466.6 280.9L466.2 289.5L459 289.8ZM458.7 298.4L465.9 298.1L465.6 306.8L458.4 307ZM458.3 315.7L465.5 315.5L465.4 324.3L458.1 324.4ZM458.1 333L465.3 333L465.3 341.8L458.1 341.7ZM458.2 350.4L465.4 350.5L465.6 359.2L458.4 359.1ZM458.6 367.7L465.8 367.9L466.1 376.6L458.9 376.3ZM459.2 384.9L466.4 385.2L466.8 393.8L459.6 393.4ZM460.1 401.8L467.3 402.3L467.8 410.8L460.6 410.2ZM461.2 418.6L468.4 419.2L469 427.5L461.8 426.9ZM462.5 435L469.7 435.7L470.4 443.9L463.2 443.2ZM463.9 451.2L471.1 452L471.9 459.9L464.7 459.1ZM465.5 467L472.7 467.8L473.6 475.6L466.3 474.8ZM467.1 482.5L474.4 483.3L475.3 491L468 490.1ZM468.8 497.7L476.1 498.5L477 506L469.7 505.2ZM470.5 512.6L477.8 513.4L478.7 520.8L471.3 520ZM477.3 160.5L484.7 159.6L483.8 167.1L476.4 168ZM475.6 175.5L482.9 174.6L482.1 182.2L474.7 183.1ZM473.9 190.8L481.2 189.9L480.4 197.7L473 198.5ZM472.2 206.4L479.5 205.6L478.8 213.6L471.4 214.3ZM470.7 222.4L478 221.6L477.3 229.8L469.9 230.5ZM469.2 238.7L476.6 238L475.9 246.4L468.6 247ZM468 255.4L475.4 254.8L474.8 263.3L467.5 263.8ZM467 272.3L474.3 271.8L473.9 280.5L466.6 280.9ZM466.2 289.5L473.5 289.1L473.2 297.8L465.9 298.1ZM465.6 306.8L473 306.6L472.8 315.4L465.5 315.5ZM465.4 324.3L472.7 324.2L472.7 333L465.3 333ZM465.3 341.8L472.7 341.8L472.8 350.6L465.4 350.5ZM465.6 359.2L472.9 359.4L473.1 368.2L465.8 367.9ZM466.1 376.6L473.4 376.9L473.8 385.6L466.4 385.2ZM466.8 393.8L474.2 394.3L474.6 402.8L467.3 402.3ZM467.8 410.8L475.2 411.3L475.7 419.8L468.4 419.2ZM469 427.5L476.3 428.2L477 436.4L469.7 435.7ZM470.4 443.9L477.7 444.6L478.5 452.7L471.1 452ZM471.9 459.9L479.3 460.7L480.1 468.7L472.7 467.8ZM473.6 475.6L480.9 476.5L481.8 484.2L474.4 483.3ZM475.3 491L482.6 491.9L483.5 499.4L476.1 498.5ZM477 506L484.4 506.9L485.2 514.3L477.8 513.4ZM483.8 167.1L491.3 166.2L490.4 173.7L482.9 174.6ZM482.1 182.2L489.5 181.3L488.6 189.1L481.2 189.9ZM480.4 197.7L487.8 196.9L487 204.8L479.5 205.6ZM478.8 213.6L486.2 212.8L485.4 220.9L478 221.6ZM477.3 229.8L484.7 229.1L484 237.4L476.6 238ZM475.9 246.4L483.4 245.8L482.8 254.2L475.4 254.8ZM474.8 263.3L482.3 262.8L481.8 271.4L474.3 271.8ZM473.9 280.5L481.4 280.1L481 288.8L473.5 289.1ZM473.2 297.8L480.7 297.6L480.5 306.4L473 306.6ZM472.8 315.4L480.3 315.2L480.2 324.1L472.7 324.2ZM472.7 333L480.2 333L480.2 341.9L472.7 341.8ZM472.8 350.6L480.3 350.8L480.4 359.6L472.9 359.4ZM473.1 368.2L480.6 368.4L480.9 377.2L473.4 376.9ZM473.8 385.6L481.3 386L481.7 394.7L474.2 394.3ZM474.6 402.8L482.1 403.3L482.6 411.9L475.2 411.3ZM475.7 419.8L483.2 420.4L483.8 428.8L476.3 428.2ZM477 436.4L484.5 437.1L485.2 445.4L477.7 444.6ZM478.5 452.7L485.9 453.5L486.7 461.5L479.3 460.7ZM480.1 468.7L487.5 469.5L488.3 477.3L480.9 476.5ZM481.8 484.2L489.2 485.1L490.1 492.7L482.6 491.9ZM483.5 499.4L490.9 500.3L491.8 507.8L484.4 506.9ZM485.2 514.3L492.7 515.2L493.6 522.5L486.1 521.6ZM492.1 158.8L499.7 157.9L498.8 165.3L491.3 166.2ZM490.4 173.7L497.9 172.8L497 180.5L489.5 181.3ZM488.6 189.1L496.2 188.2L495.4 196L487.8 196.9ZM487 204.8L494.5 204L493.8 212L486.2 212.8ZM485.4 220.9L493 220.2L492.3 228.4L484.7 229.1ZM484 237.4L491.6 236.7L491 245.2L483.4 245.8ZM482.8 254.2L490.4 253.7L489.9 262.3L482.3 262.8ZM481.8 271.4L489.4 270.9L489 279.7L481.4 280.1ZM481 288.8L488.7 288.5L488.4 297.3L480.7 297.6ZM480.5 306.4L488.1 306.2L488 315.1L480.3 315.2ZM480.2 324.1L487.9 324L487.8 333L480.2 333ZM480.2 341.9L487.8 341.9L487.9 350.9L480.3 350.8ZM480.4 359.6L488.1 359.8L488.3 368.7L480.6 368.4ZM480.9 377.2L488.6 377.5L488.9 386.4L481.3 386ZM481.7 394.7L489.3 395.1L489.7 403.8L482.1 403.3ZM482.6 411.9L490.2 412.4L490.8 421L483.2 420.4ZM483.8 428.8L491.4 429.4L492.1 437.8L484.5 437.1ZM485.2 445.4L492.8 446.1L493.5 454.3L485.9 453.5ZM486.7 461.5L494.3 462.3L495.1 470.3L487.5 469.5ZM488.3 477.3L495.9 478.2L496.7 485.9L489.2 485.1ZM490.1 492.7L497.6 493.6L498.5 501.2L490.9 500.3ZM491.8 507.8L499.4 508.6L500.2 516L492.7 515.2ZM498.8 165.3L506.4 164.4L505.6 172L497.9 172.8ZM497 180.5L504.7 179.6L503.8 187.4L496.2 188.2ZM495.4 196L503 195.2L502.2 203.2L494.5 204ZM493.8 212L501.5 211.2L500.7 219.4L493 220.2ZM492.3 228.4L500 227.7L499.4 236.1L491.6 236.7ZM491 245.2L498.8 244.6L498.2 253.1L490.4 253.7ZM489.9 262.3L497.7 261.8L497.2 270.5L489.4 270.9ZM489 279.7L496.8 279.3L496.5 288.1L488.7 288.5ZM488.4 297.3L496.2 297L495.9 306L488.1 306.2ZM488 315.1L495.8 315L495.7 324L487.9 324ZM487.8 333L495.6 333L495.7 342L487.8 341.9ZM487.9 350.9L495.7 351L495.9 360L488.1 359.8ZM488.3 368.7L496.1 368.9L496.4 377.8L488.6 377.5ZM488.9 386.4L496.7 386.7L497.1 395.5L489.3 395.1ZM489.7 403.8L497.5 404.3L498 413L490.2 412.4ZM490.8 421L498.5 421.6L499.1 430.1L491.4 429.4ZM492.1 437.8L499.8 438.5L500.5 446.8L492.8 446.1ZM493.5 454.3L501.2 455L501.9 463.1L494.3 462.3ZM495.1 470.3L502.7 471.1L503.5 479L495.9 478.2ZM496.7 485.9L504.4 486.8L505.2 494.5L497.6 493.6ZM498.5 501.2L506.1 502L507 509.5L499.4 508.6ZM500.2 516L507.8 516.9L508.7 524.2L501.1 523.3ZM507.3 157L515 156.1L514.1 163.6L506.4 164.4ZM505.6 172L513.3 171.1L512.4 178.8L504.7 179.6ZM503.8 187.4L511.6 186.5L510.8 194.4L503 195.2ZM502.2 203.2L510 202.4L509.3 210.5L501.5 211.2ZM500.7 219.4L508.6 218.7L507.9 227L500 227.7ZM499.4 236.1L507.2 235.5L506.6 244L498.8 244.6ZM498.2 253.1L506.1 252.6L505.6 261.3L497.7 261.8ZM497.2 270.5L505.1 270.1L504.7 278.9L496.8 279.3ZM496.5 288.1L504.4 287.8L504.1 296.8L496.2 297ZM495.9 306L503.9 305.8L503.7 314.8L495.8 315ZM495.7 324L503.6 323.9L503.6 333L495.6 333ZM495.7 342L503.6 342L503.7 351.1L495.7 351ZM495.9 360L503.8 360.1L504 369.2L496.1 368.9ZM496.4 377.8L504.3 378.1L504.6 387.1L496.7 386.7ZM497.1 395.5L505 395.9L505.4 404.7L497.5 404.3ZM498 413L505.9 413.5L506.4 422.1L498.5 421.6ZM499.1 430.1L507 430.7L507.6 439.1L499.8 438.5ZM500.5 446.8L508.3 447.5L509 455.7L501.2 455ZM501.9 463.1L509.8 463.9L510.5 471.9L502.7 471.1ZM503.5 479L511.3 479.8L512.1 487.6L504.4 486.8ZM505.2 494.5L513 495.3L513.8 502.9L506.1 502ZM507 509.5L514.7 510.4L515.5 517.8L507.8 516.9ZM514.1 163.6L522 162.7L521.1 170.3L513.3 171.1ZM512.4 178.8L520.3 177.9L519.5 185.7L511.6 186.5ZM510.8 194.4L518.7 193.6L518 201.6L510 202.4ZM509.3 210.5L517.2 209.8L516.5 218L508.6 218.7ZM507.9 227L515.9 226.4L515.2 234.8L507.2 235.5ZM506.6 244L514.7 243.4L514.1 252.1L506.1 252.6ZM505.6 261.3L513.7 260.8L513.2 269.7L505.1 270.1ZM504.7 278.9L512.8 278.6L512.5 287.5L504.4 287.8ZM504.1 296.8L512.2 296.5L512 305.6L503.9 305.8ZM503.7 314.8L511.9 314.7L511.8 323.8L503.6 323.9ZM503.6 333L511.7 333L511.7 342.1L503.6 342ZM503.7 351.1L511.8 351.2L512 360.3L503.8 360.1ZM504 369.2L512.2 369.4L512.4 378.4L504.3 378.1ZM504.6 387.1L512.7 387.4L513.1 396.3L505 395.9ZM505.4 404.7L513.5 405.2L514 414L505.9 413.5ZM506.4 422.1L514.5 422.7L515 431.3L507 430.7ZM507.6 439.1L515.6 439.8L516.3 448.2L508.3 447.5ZM509 455.7L517 456.5L517.7 464.6L509.8 463.9ZM510.5 471.9L518.4 472.7L519.2 480.6L511.3 479.8ZM512.1 487.6L520 488.5L520.8 496.2L513 495.3ZM513.8 502.9L521.7 503.8L522.5 511.2L514.7 510.4ZM521.1 170.3L529.1 169.5L528.3 177.1L520.3 177.9ZM519.5 185.7L527.5 184.9L526.7 192.9L518.7 193.6ZM518 201.6L526 200.9L525.3 209.1L517.2 209.8ZM516.5 218L524.6 217.3L524 225.7L515.9 226.4ZM515.2 234.8L523.4 234.2L522.8 242.9L514.7 243.4ZM514.1 252.1L522.3 251.6L521.9 260.4L513.7 260.8ZM513.2 269.7L521.4 269.2L521.1 278.2L512.8 278.6ZM512.5 287.5L520.8 287.2L520.5 296.3L512.2 296.5ZM512 305.6L520.3 305.4L520.1 314.6L511.9 314.7ZM511.8 323.8L520 323.7L520 332.9L511.7 333ZM511.7 342.1L520 342.1L520.1 351.3L511.8 351.2ZM512 360.3L520.2 360.5L520.4 369.6L512.2 369.4ZM512.4 378.4L520.7 378.7L521 387.7L512.7 387.4ZM513.1 396.3L521.3 396.7L521.7 405.6L513.5 405.2ZM514 414L522.2 414.5L522.6 423.2L514.5 422.7ZM515 431.3L523.2 431.9L523.8 440.4L515.6 439.8ZM516.3 448.2L524.4 448.8L525.1 457.2L517 456.5ZM517.7 464.6L525.8 465.4L526.5 473.5L518.4 472.7ZM519.2 480.6L527.2 481.4L528 489.3L520 488.5ZM520.8 496.2L528.8 497L529.6 504.6L521.7 503.8ZM522.5 511.2L530.4 512.1L531.2 519.5L523.3 518.6ZM529.9 161.9L537.9 161.1L537.1 168.7L529.1 169.5ZM528.3 177.1L536.4 176.4L535.6 184.2L527.5 184.9ZM526.7 192.9L534.9 192.1L534.2 200.2L526 200.9ZM525.3 209.1L533.5 208.4L532.9 216.7L524.6 217.3ZM524 225.7L532.3 225.1L531.7 233.7L523.4 234.2ZM522.8 242.9L531.1 242.3L530.7 251.1L522.3 251.6ZM521.9 260.4L530.2 259.9L529.8 268.9L521.4 269.2ZM521.1 278.2L529.5 277.9L529.2 286.9L520.8 287.2ZM520.5 296.3L528.9 296.1L528.7 305.2L520.3 305.4ZM520.1 314.6L528.6 314.4L528.5 323.7L520 323.7ZM520 332.9L528.4 332.9L528.5 342.2L520 342.1ZM520.1 351.3L528.5 351.4L528.6 360.6L520.2 360.5ZM520.4 369.6L528.8 369.8L529.1 379L520.7 378.7ZM521 387.7L529.3 388.1L529.7 397.1L521.3 396.7ZM521.7 405.6L530.1 406.1L530.5 414.9L522.2 414.5ZM522.6 423.2L531 423.7L531.5 432.4L523.2 431.9ZM523.8 440.4L532 441L532.6 449.5L524.4 448.8ZM525.1 457.2L533.3 457.8L533.9 466.1L525.8 465.4ZM526.5 473.5L534.6 474.2L535.4 482.2L527.2 481.4ZM528 489.3L536.1 490L536.9 497.8L528.8 497ZM529.6 504.6L537.6 505.4L538.4 512.9L530.4 512.1ZM537.1 168.7L545.3 167.9L544.6 175.6L536.4 176.4ZM535.6 184.2L543.8 183.4L543.2 191.4L534.9 192.1ZM534.2 200.2L542.5 199.5L541.8 207.7L533.5 208.4ZM532.9 216.7L541.2 216.1L540.6 224.5L532.3 225.1ZM531.7 233.7L540.1 233.1L539.6 241.8L531.1 242.3ZM530.7 251.1L539.1 250.6L538.7 259.5L530.2 259.9ZM529.8 268.9L538.3 268.5L538 277.5L529.5 277.9ZM529.2 286.9L537.7 286.7L537.5 295.8L528.9 296.1ZM528.7 305.2L537.3 305.1L537.1 314.3L528.6 314.4ZM528.5 323.7L537 323.6L537 332.9L528.4 332.9ZM528.5 342.2L537 342.2L537.1 351.5L528.5 351.4ZM528.6 360.6L537.2 360.8L537.4 370L528.8 369.8ZM529.1 379L537.6 379.2L537.9 388.4L529.3 388.1ZM529.7 397.1L538.2 397.4L538.6 406.5L530.1 406.1ZM530.5 414.9L539 415.4L539.4 424.2L531 423.7ZM531.5 432.4L539.9 432.9L540.4 441.6L532 441ZM532.6 449.5L541 450.1L541.6 458.5L533.3 457.8ZM533.9 466.1L542.2 466.7L542.9 474.9L534.6 474.2ZM535.4 482.2L543.6 482.9L544.3 490.8L536.1 490ZM536.9 497.8L545 498.5L545.8 506.2L537.6 505.4ZM538.4 512.9L546.5 513.7L547.3 521L539.2 520.3ZM546 160.3L554.3 159.6L553.6 167.2L545.3 167.9ZM544.6 175.6L552.9 174.9L552.2 182.8L543.8 183.4ZM543.2 191.4L551.5 190.7L550.9 198.9L542.5 199.5ZM541.8 207.7L550.3 207.1L549.7 215.5L541.2 216.1ZM540.6 224.5L549.2 224L548.6 232.6L540.1 233.1ZM539.6 241.8L548.2 241.4L547.7 250.2L539.1 250.6ZM538.7 259.5L547.3 259.1L547 268.1L538.3 268.5ZM538 277.5L546.7 277.2L546.4 286.4L537.7 286.7ZM537.5 295.8L546.2 295.6L546 304.9L537.3 305.1ZM537.1 314.3L545.9 314.2L545.8 323.6L537 323.6ZM537 332.9L545.7 332.9L545.8 342.3L537 342.2ZM537.1 351.5L545.8 351.6L545.9 360.9L537.2 360.8ZM537.4 370L546.1 370.2L546.3 379.5L537.6 379.2ZM537.9 388.4L546.5 388.7L546.8 397.8L538.2 397.4ZM538.6 406.5L547.2 406.8L547.6 415.8L539 415.4ZM539.4 424.2L548 424.7L548.5 433.4L539.9 432.9ZM540.4 441.6L549 442.1L549.5 450.6L541 450.1ZM541.6 458.5L550.1 459.1L550.7 467.4L542.2 466.7ZM542.9 474.9L551.3 475.5L552 483.6L543.6 482.9ZM544.3 490.8L552.6 491.5L553.3 499.3L545 498.5ZM545.8 506.2L554 506.9L554.7 514.4L546.5 513.7ZM553.6 167.2L561.9 166.5L561.3 174.2L552.9 174.9ZM552.2 182.8L560.6 182.1L560 190.1L551.5 190.7ZM550.9 198.9L559.4 198.3L558.9 206.5L550.3 207.1ZM549.7 215.5L558.3 214.9L557.8 223.5L549.2 224ZM548.6 232.6L557.3 232.1L556.9 240.9L548.2 241.4ZM547.7 250.2L556.5 249.8L556.1 258.8L547.3 259.1ZM547 268.1L555.7 267.8L555.5 277L546.7 277.2ZM546.4 286.4L555.2 286.2L555 295.4L546.2 295.6ZM546 304.9L554.8 304.8L554.7 314.1L545.9 314.2ZM545.8 323.6L554.6 323.5L554.6 332.9L545.7 332.9ZM545.8 342.3L554.6 342.3L554.7 351.7L545.8 351.6ZM545.9 360.9L554.8 361.1L554.9 370.4L546.1 370.2ZM546.3 379.5L555.1 379.7L555.4 388.9L546.5 388.7ZM546.8 397.8L555.6 398.1L556 407.2L547.2 406.8ZM547.6 415.8L556.3 416.2L556.7 425.1L548 424.7ZM548.5 433.4L557.2 433.9L557.6 442.6L549 442.1ZM549.5 450.6L558.1 451.2L558.7 459.6L550.1 459.1ZM550.7 467.4L559.2 468L559.8 476.2L551.3 475.5ZM552 483.6L560.4 484.2L561 492.1L552.6 491.5ZM553.3 499.3L561.7 499.9L562.4 507.6L554 506.9ZM554.7 514.4L563 515.1L563.7 522.5L555.4 521.8ZM562.6 158.9L571 158.2L570.4 165.9L561.9 166.5ZM561.3 174.2L569.8 173.6L569.2 181.5L560.6 182.1ZM560 190.1L568.6 189.5L568.1 197.7L559.4 198.3ZM558.9 206.5L567.5 206L567 214.4L558.3 214.9ZM557.8 223.5L566.6 223L566.1 231.7L557.3 232.1ZM556.9 240.9L565.7 240.5L565.3 249.4L556.5 249.8ZM556.1 258.8L565 258.4L564.7 267.5L555.7 267.8ZM555.5 277L564.4 276.7L564.1 285.9L555.2 286.2ZM555 295.4L564 295.3L563.8 304.6L554.8 304.8ZM554.7 314.1L563.7 314L563.6 323.5L554.6 323.5ZM554.6 332.9L563.6 332.9L563.6 342.3L554.6 342.3ZM554.7 351.7L563.7 351.8L563.8 361.2L554.8 361.1ZM554.9 370.4L563.9 370.6L564.1 379.9L555.1 379.7ZM555.4 388.9L564.3 389.2L564.5 398.4L555.6 398.1ZM556 407.2L564.8 407.5L565.2 416.6L556.3 416.2ZM556.7 425.1L565.5 425.5L566 434.3L557.2 433.9ZM557.6 442.6L566.4 443.1L566.9 451.7L558.1 451.2ZM558.7 459.6L567.3 460.2L567.9 468.5L559.2 468ZM559.8 476.2L568.4 476.7L569 484.8L560.4 484.2ZM561 492.1L569.6 492.8L570.2 500.6L561.7 499.9ZM562.4 507.6L570.8 508.2L571.4 515.8L563 515.1ZM570.4 165.9L578.9 165.3L578.4 173L569.8 173.6ZM569.2 181.5L577.8 180.9L577.3 189L568.6 189.5ZM568.1 197.7L576.8 197.2L576.3 205.5L567.5 206ZM567 214.4L575.9 214L575.4 222.6L566.6 223ZM566.1 231.7L575 231.3L574.6 240.1L565.7 240.5ZM565.3 249.4L574.3 249L574 258.1L565 258.4ZM564.7 267.5L573.7 267.2L573.4 276.4L564.4 276.7ZM564.1 285.9L573.2 285.7L573 295.1L564 295.3ZM563.8 304.6L572.9 304.5L572.8 313.9L563.7 314ZM563.6 323.5L572.7 323.4L572.7 332.9L563.6 332.9ZM563.6 342.3L572.7 342.4L572.8 351.8L563.7 351.8ZM563.8 361.2L572.8 361.3L573 370.7L563.9 370.6ZM564.1 379.9L573.1 380.1L573.3 389.4L564.3 389.2ZM564.5 398.4L573.6 398.6L573.9 407.8L564.8 407.5ZM565.2 416.6L574.2 416.9L574.5 425.9L565.5 425.5ZM566 434.3L574.9 434.8L575.3 443.5L566.4 443.1ZM566.9 451.7L575.7 452.2L576.1 460.7L567.3 460.2ZM567.9 468.5L576.6 469L577.1 477.3L568.4 476.7ZM569 484.8L577.6 485.4L578.2 493.3L569.6 492.8ZM570.2 500.6L578.7 501.2L579.3 508.8L570.8 508.2ZM571.4 515.8L579.9 516.4L580.5 523.8L572 523.1ZM579.5 157.6L588.1 157.1L587.6 164.7L578.9 165.3ZM578.4 173L587.1 172.5L586.6 180.4L577.8 180.9ZM577.3 189L586.1 188.5L585.6 196.7L576.8 197.2ZM576.3 205.5L585.2 205L584.8 213.5L575.9 214ZM575.4 222.6L584.4 222.1L584 230.9L575 231.3ZM574.6 240.1L583.7 239.8L583.3 248.7L574.3 249ZM574 258.1L583.1 257.8L582.8 267L573.7 267.2ZM573.4 276.4L582.6 276.2L582.4 285.6L573.2 285.7ZM573 295.1L582.2 294.9L582.1 304.4L572.9 304.5ZM572.8 313.9L582 313.9L581.9 323.4L572.7 323.4ZM572.7 332.9L581.9 332.9L581.9 342.4L572.7 342.4ZM572.8 351.8L582 351.9L582.1 361.4L572.8 361.3ZM573 370.7L582.2 370.9L582.3 380.3L573.1 380.1ZM573.3 389.4L582.5 389.6L582.7 398.9L573.6 398.6ZM573.9 407.8L583 408.1L583.2 417.2L574.2 416.9ZM574.5 425.9L583.5 426.2L583.9 435.1L574.9 434.8ZM575.3 443.5L584.2 443.9L584.6 452.6L575.7 452.2ZM576.1 460.7L585 461.1L585.5 469.5L576.6 469ZM577.1 477.3L585.9 477.8L586.4 485.9L577.6 485.4ZM578.2 493.3L586.9 493.9L587.4 501.7L578.7 501.2ZM579.3 508.8L587.9 509.4L588.4 516.9L579.9 516.4ZM587.6 164.7L596.3 164.2L595.8 172L587.1 172.5ZM586.6 180.4L595.4 180L595 188L586.1 188.5ZM585.6 196.7L594.6 196.3L594.2 204.6L585.2 205ZM584.8 213.5L593.8 213.1L593.4 221.8L584.4 222.1ZM584 230.9L593.1 230.5L592.8 239.4L583.7 239.8ZM583.3 248.7L592.5 248.4L592.3 257.5L583.1 257.8ZM582.8 267L592 266.7L591.8 276L582.6 276.2ZM582.4 285.6L591.7 285.4L591.5 294.8L582.2 294.9ZM582.1 304.4L591.4 304.3L591.3 313.8L582 313.9ZM581.9 323.4L591.3 323.3L591.2 332.9L581.9 332.9ZM581.9 342.4L591.3 342.4L591.3 352L582 351.9ZM582.1 361.4L591.4 361.5L591.5 371L582.2 370.9ZM582.3 380.3L591.6 380.4L591.8 389.8L582.5 389.6ZM582.7 398.9L592 399.1L592.2 408.3L583 408.1ZM583.2 417.2L592.4 417.5L592.7 426.5L583.5 426.2ZM583.9 435.1L593 435.5L593.3 444.3L584.2 443.9ZM584.6 452.6L593.7 453L594 461.5L585 461.1ZM585.5 469.5L594.4 469.9L594.8 478.2L585.9 477.8ZM586.4 485.9L595.2 486.3L595.7 494.3L586.9 493.9ZM587.4 501.7L596.1 502.2L596.6 509.9L587.9 509.4ZM588.4 516.9L597.1 517.4L597.5 524.8L589 524.3ZM596.8 156.6L605.5 156.2L605.1 163.8L596.3 164.2ZM595.8 172L604.7 171.6L604.3 179.5L595.4 180ZM595 188L603.9 187.6L603.6 195.9L594.6 196.3ZM594.2 204.6L603.2 204.3L602.9 212.8L593.8 213.1ZM593.4 221.8L602.6 221.5L602.3 230.2L593.1 230.5ZM592.8 239.4L602 239.2L601.8 248.2L592.5 248.4ZM592.3 257.5L601.6 257.3L601.3 266.5L592 266.7ZM591.8 276L601.2 275.9L601 285.2L591.7 285.4ZM591.5 294.8L600.9 294.7L600.8 304.2L591.4 304.3ZM591.3 313.8L600.7 313.7L600.7 323.3L591.3 323.3ZM591.2 332.9L600.7 332.9L600.7 342.5L591.3 342.4ZM591.3 352L600.7 352L600.8 361.6L591.4 361.5ZM591.5 371L600.9 371.1L601 380.6L591.6 380.4ZM591.8 389.8L601.1 390L601.3 399.3L592 399.1ZM592.2 408.3L601.5 408.6L601.7 417.7L592.4 417.5ZM592.7 426.5L601.9 426.8L602.2 435.7L593 435.5ZM593.3 444.3L602.5 444.6L602.8 453.3L593.7 453ZM594 461.5L603.1 461.9L603.4 470.3L594.4 469.9ZM594.8 478.2L603.8 478.6L604.2 486.8L595.2 486.3ZM595.7 494.3L604.5 494.8L604.9 502.6L596.1 502.2ZM596.6 509.9L605.3 510.3L605.7 517.9L597.1 517.4ZM605.1 163.8L613.9 163.4L613.6 171.2L604.7 171.6ZM604.3 179.5L613.3 179.2L612.9 187.3L603.9 187.6ZM603.6 195.9L612.6 195.6L612.3 204L603.2 204.3ZM602.9 212.8L612.1 212.5L611.8 221.2L602.6 221.5ZM602.3 230.2L611.5 230L611.3 238.9L602 239.2ZM601.8 248.2L611.1 248L610.9 257.1L601.6 257.3ZM601.3 266.5L610.7 266.4L610.6 275.7L601.2 275.9ZM601 285.2L610.5 285.1L610.4 294.6L600.9 294.7ZM600.8 304.2L610.3 304.1L610.2 313.7L600.7 313.7ZM600.7 323.3L610.2 323.3L610.2 332.9L600.7 332.9ZM600.7 342.5L610.2 342.5L610.2 352.1L600.7 352ZM600.8 361.6L610.3 361.6L610.3 371.2L600.9 371.1ZM601 380.6L610.4 380.7L610.5 390.1L601.1 390ZM601.3 399.3L610.7 399.5L610.9 408.8L601.5 408.6ZM601.7 417.7L611 417.9L611.2 427L601.9 426.8ZM602.2 435.7L611.5 436L611.7 444.9L602.5 444.6ZM602.8 453.3L612 453.6L612.2 462.2L603.1 461.9ZM603.4 470.3L612.5 470.6L612.8 478.9L603.8 478.6ZM604.2 486.8L613.1 487.1L613.5 495.1L604.5 494.8ZM604.9 502.6L613.8 503L614.1 510.7L605.3 510.3ZM614.3 155.8L623.1 155.5L622.8 163.1L613.9 163.4ZM613.6 171.2L622.5 170.9L622.3 178.9L613.3 179.2ZM612.9 187.3L622 187L621.8 195.3L612.6 195.6ZM612.3 204L621.5 203.7L621.3 212.2L612.1 212.5ZM611.8 221.2L621.1 220.9L620.9 229.8L611.5 230ZM611.3 238.9L620.7 238.7L620.5 247.8L611.1 248ZM610.9 257.1L620.3 256.9L620.2 266.2L610.7 266.4ZM610.6 275.7L620.1 275.6L620 285L610.5 285.1ZM610.4 294.6L619.9 294.5L619.8 304L610.3 304.1ZM610.2 313.7L619.8 313.6L619.7 323.2L610.2 323.3ZM610.2 332.9L619.7 332.9L619.7 342.5L610.2 342.5ZM610.2 352.1L619.8 352.1L619.8 361.7L610.3 361.6ZM610.3 371.2L619.9 371.3L619.9 380.8L610.4 380.7ZM610.5 390.1L620 390.2L620.2 399.6L610.7 399.5ZM610.9 408.8L620.3 408.9L620.4 418.1L611 417.9ZM611.2 427L620.6 427.2L620.8 436.2L611.5 436ZM611.7 444.9L621 445.1L621.2 453.8L612 453.6ZM612.2 462.2L621.4 462.4L621.7 470.9L612.5 470.6ZM612.8 478.9L621.9 479.2L622.2 487.4L613.1 487.1ZM613.5 495.1L622.4 495.4L622.7 503.3L613.8 503ZM614.1 510.7L623 511L623.3 518.6L614.5 518.2ZM622.8 163.1L631.8 162.9L631.6 170.7L622.5 170.9ZM622.3 178.9L631.3 178.7L631.1 186.8L622 187ZM621.8 195.3L630.9 195.1L630.7 203.5L621.5 203.7ZM621.3 212.2L630.6 212L630.4 220.8L621.1 220.9ZM620.9 229.8L630.2 229.6L630.1 238.6L620.7 238.7ZM620.5 247.8L630 247.6L629.8 256.8L620.3 256.9ZM620.2 266.2L629.7 266.1L629.6 275.5L620.1 275.6ZM620 285L629.5 284.9L629.5 294.4L619.9 294.5ZM619.8 304L629.4 304L629.4 313.6L619.8 313.6ZM619.7 323.2L629.4 323.2L629.4 332.9L619.7 332.9ZM619.7 342.5L629.4 342.5L629.4 352.1L619.8 352.1ZM619.8 361.7L629.4 361.8L629.5 371.3L619.9 371.3ZM619.9 380.8L629.5 380.9L629.6 390.3L620 390.2ZM620.2 399.6L629.7 399.7L629.8 409L620.3 408.9ZM620.4 418.1L629.9 418.3L630 427.4L620.6 427.2ZM620.8 436.2L630.2 436.4L630.3 445.3L621 445.1ZM621.2 453.8L630.5 454L630.7 462.6L621.4 462.4ZM621.7 470.9L630.9 471.1L631.1 479.5L621.9 479.2ZM622.2 487.4L631.3 487.6L631.5 495.7L622.4 495.4ZM622.7 503.3L631.7 503.5L631.9 511.3L623 511ZM631.6 170.7L640.6 170.5L640.4 178.5L631.3 178.7ZM631.1 186.8L640.3 186.6L640.2 194.9L630.9 195.1ZM630.7 203.5L640 203.3L639.9 211.9L630.6 212ZM630.4 220.8L639.8 220.6L639.7 229.5L630.2 229.6ZM630.1 238.6L639.6 238.4L639.5 247.5L630 247.6ZM629.8 256.8L639.4 256.7L639.3 266L629.7 266.1ZM629.6 275.5L639.2 275.4L639.2 284.8L629.5 284.9ZM629.5 294.4L639.1 294.4L639.1 303.9L629.4 304ZM629.4 313.6L639 313.6L639 323.2L629.4 323.2ZM629.4 332.9L639 332.9L639 342.5L629.4 342.5ZM629.4 352.1L639 352.2L639.1 361.8L629.4 361.8ZM629.5 371.3L639.1 371.4L639.1 380.9L629.5 380.9ZM629.6 390.3L639.2 390.4L639.3 399.8L629.7 399.7ZM629.8 409L639.3 409.1L639.4 418.4L629.9 418.3ZM630 427.4L639.5 427.5L639.6 436.5L630.2 436.4ZM630.3 445.3L639.7 445.4L639.8 454.2L630.5 454ZM630.7 462.6L640 462.8L640.1 471.3L630.9 471.1ZM631.1 479.5L640.2 479.6L640.4 487.8L631.3 487.6ZM631.5 495.7L640.5 495.8L640.7 503.7L631.7 503.5ZM631.9 511.3L640.8 511.4L641 519L632.1 518.8ZM640.7 162.7L649.8 162.5L649.7 170.4L640.6 170.5ZM640.4 178.5L649.6 178.4L649.5 186.5L640.3 186.6ZM640.2 194.9L649.4 194.8L649.3 203.2L640 203.3ZM639.9 211.9L649.2 211.8L649.2 220.5L639.8 220.6ZM639.7 229.5L649.1 229.4L649 238.3L639.6 238.4ZM639.5 247.5L649 247.4L648.9 256.6L639.4 256.7ZM639.3 266L648.9 266L648.8 275.3L639.2 275.4ZM639.2 284.8L648.8 284.8L648.8 294.3L639.1 294.4ZM639.1 303.9L648.8 303.9L648.7 313.5L639 313.6ZM639 323.2L648.7 323.2L648.7 332.9L639 332.9ZM639 342.5L648.7 342.5L648.7 352.2L639 352.2ZM639.1 361.8L648.7 361.8L648.8 371.4L639.1 371.4ZM639.1 380.9L648.8 381L648.8 390.5L639.2 390.4ZM639.3 399.8L648.9 399.9L648.9 409.2L639.3 409.1ZM639.4 418.4L649 418.4L649 427.6L639.5 427.5ZM639.6 436.5L649.1 436.6L649.1 445.5L639.7 445.4ZM639.8 454.2L649.2 454.3L649.3 462.9L640 462.8ZM640.1 471.3L649.4 471.4L649.4 479.7L640.2 479.6ZM640.4 487.8L649.5 487.9L649.6 496L640.5 495.8ZM640.7 503.7L649.7 503.8L649.8 511.6L640.8 511.4ZM649.7 170.4L658.7 170.3L658.7 178.3L649.6 178.4ZM649.5 186.5L658.7 186.4L658.7 194.7L649.4 194.8ZM649.3 203.2L658.6 203.2L658.6 211.7L649.2 211.8ZM649.2 220.5L658.6 220.5L658.6 229.3L649.1 229.4ZM649 238.3L658.5 238.3L658.5 247.4L649 247.4ZM648.9 256.6L658.5 256.6L658.5 265.9L648.9 266ZM648.8 275.3L658.5 275.3L658.5 284.8L648.8 284.8ZM648.8 294.3L658.5 294.3L658.5 303.9L648.8 303.9ZM648.7 313.5L658.4 313.5L658.4 323.2L648.7 323.2ZM648.7 332.9L658.4 332.9L658.4 342.5L648.7 342.5ZM648.7 352.2L658.4 352.2L658.4 361.8L648.7 361.8ZM648.8 371.4L658.5 371.4L658.5 381L648.8 381ZM648.8 390.5L658.5 390.5L658.5 399.9L648.9 399.9ZM648.9 409.2L658.5 409.2L658.5 418.5L649 418.4ZM649 427.6L658.5 427.6L658.6 436.6L649.1 436.6ZM649.1 445.5L658.6 445.5L658.6 454.3L649.2 454.3ZM649.3 462.9L658.6 463L658.6 471.4L649.4 471.4ZM649.4 479.7L658.7 479.8L658.7 488L649.5 487.9ZM649.6 496L658.7 496L658.8 503.9L649.7 503.8ZM649.8 511.6L658.8 511.6L658.8 519.2L649.9 519.2ZM658.8 162.5L667.8 162.5L667.8 170.3L658.7 170.3ZM658.7 178.3L667.9 178.3L667.9 186.4L658.7 186.4ZM658.7 194.7L667.9 194.7L667.9 203.2L658.6 203.2ZM658.6 211.7L668 211.7L668 220.5L658.6 220.5ZM658.6 229.3L668 229.3L668.1 238.3L658.5 238.3ZM658.5 247.4L668.1 247.4L668.1 256.6L658.5 256.6ZM658.5 265.9L668.1 265.9L668.1 275.3L658.5 275.3ZM658.5 284.8L668.1 284.8L668.1 294.3L658.5 294.3ZM658.5 303.9L668.2 303.9L668.2 313.5L658.4 313.5ZM658.4 323.2L668.2 323.2L668.2 332.9L658.4 332.9ZM658.4 342.5L668.2 342.5L668.2 352.2L658.4 352.2ZM658.4 361.8L668.2 361.8L668.1 371.4L658.5 371.4ZM658.5 381L668.1 381L668.1 390.5L658.5 390.5ZM658.5 399.9L668.1 399.9L668.1 409.2L658.5 409.2ZM658.5 418.5L668.1 418.5L668.1 427.6L658.5 427.6ZM658.6 436.6L668 436.6L668 445.5L658.6 445.5ZM658.6 454.3L668 454.3L668 463L658.6 463ZM658.6 471.4L667.9 471.4L667.9 479.8L658.7 479.8ZM658.7 488L667.9 488L667.8 496L658.7 496ZM658.8 503.9L667.8 503.9L667.8 511.6L658.8 511.6ZM667.8 170.3L676.9 170.4L677 178.4L667.9 178.3ZM667.9 186.4L677.1 186.5L677.2 194.8L667.9 194.7ZM667.9 203.2L677.3 203.2L677.3 211.8L668 211.7ZM668 220.5L677.4 220.5L677.5 229.4L668 229.3ZM668.1 238.3L677.6 238.4L677.6 247.4L668.1 247.4ZM668.1 256.6L677.7 256.7L677.7 266L668.1 265.9ZM668.1 275.3L677.8 275.3L677.8 284.8L668.1 284.8ZM668.1 294.3L677.8 294.3L677.9 303.9L668.2 303.9ZM668.2 313.5L677.9 313.5L677.9 323.2L668.2 323.2ZM668.2 332.9L677.9 332.9L677.9 342.5L668.2 342.5ZM668.2 352.2L677.9 352.2L677.9 361.8L668.2 361.8ZM668.1 371.4L677.8 371.4L677.8 381L668.1 381ZM668.1 390.5L677.8 390.4L677.7 399.9L668.1 399.9ZM668.1 409.2L677.7 409.2L677.6 418.4L668.1 418.5ZM668.1 427.6L677.6 427.6L677.5 436.6L668 436.6ZM668 445.5L677.4 445.5L677.4 454.3L668 454.3ZM668 463L677.3 462.9L677.2 471.4L667.9 471.4ZM667.9 479.8L677.1 479.7L677 487.9L667.9 488ZM667.8 496L676.9 496L676.8 503.8L667.8 503.9ZM667.8 511.6L676.7 511.6L676.6 519.1L667.7 519.2ZM676.8 162.5L685.8 162.7L686 170.5L676.9 170.4ZM677 178.4L686.1 178.5L686.3 186.6L677.1 186.5ZM677.2 194.8L686.4 194.9L686.6 203.3L677.3 203.2ZM677.3 211.8L686.7 211.9L686.8 220.6L677.4 220.5ZM677.5 229.4L686.9 229.5L687 238.4L677.6 238.4ZM677.6 247.4L687.1 247.5L687.2 256.7L677.7 256.7ZM677.7 266L687.3 266L687.4 275.4L677.8 275.3ZM677.8 284.8L687.4 284.9L687.5 294.4L677.8 294.3ZM677.9 303.9L687.5 303.9L687.6 313.6L677.9 313.5ZM677.9 323.2L687.6 323.2L687.6 332.9L677.9 332.9ZM677.9 342.5L687.6 342.5L687.6 352.2L677.9 352.2ZM677.9 361.8L687.5 361.8L687.5 371.4L677.8 371.4ZM677.8 381L687.5 380.9L687.4 390.4L677.8 390.4ZM677.7 399.9L687.3 399.8L687.3 409.1L677.7 409.2ZM677.6 418.4L687.2 418.4L687.1 427.5L677.6 427.6ZM677.5 436.6L687 436.5L686.9 445.4L677.4 445.5ZM677.4 454.3L686.7 454.2L686.6 462.8L677.3 462.9ZM677.2 471.4L686.5 471.3L686.3 479.6L677.1 479.7ZM677 487.9L686.2 487.8L686 495.8L676.9 496ZM676.8 503.8L685.9 503.7L685.7 511.4L676.7 511.6ZM686 170.5L695 170.7L695.2 178.7L686.1 178.5ZM686.3 186.6L695.4 186.8L695.6 195.1L686.4 194.9ZM686.6 203.3L695.8 203.5L696 212.1L686.7 211.9ZM686.8 220.6L696.2 220.8L696.3 229.6L686.9 229.5ZM687 238.4L696.5 238.6L696.6 247.6L687.1 247.5ZM687.2 256.7L696.8 256.8L696.9 266.1L687.3 266ZM687.4 275.4L697 275.5L697.1 284.9L687.4 284.9ZM687.5 294.4L697.1 294.4L697.2 304L687.5 303.9ZM687.6 313.6L697.2 313.6L697.2 323.2L687.6 323.2ZM687.6 332.9L697.3 332.9L697.2 342.5L687.6 342.5ZM687.6 352.2L697.2 352.1L697.2 361.8L687.5 361.8ZM687.5 371.4L697.1 371.3L697.1 380.9L687.5 380.9ZM687.4 390.4L697 390.3L696.9 399.7L687.3 399.8ZM687.3 409.1L696.8 409L696.7 418.3L687.2 418.4ZM687.1 427.5L696.5 427.4L696.4 436.4L687 436.5ZM686.9 445.4L696.2 445.3L696.1 454L686.7 454.2ZM686.6 462.8L695.9 462.6L695.7 471.1L686.5 471.3ZM686.3 479.6L695.5 479.4L695.3 487.6L686.2 487.8ZM686 495.8L695.1 495.6L694.9 503.5L685.9 503.7ZM685.7 511.4L694.6 511.2L694.4 518.8L685.5 519ZM694.8 162.9L703.7 163.1L704 170.9L695 170.7ZM695.2 178.7L704.3 178.9L704.6 187L695.4 186.8ZM695.6 195.1L704.8 195.3L705.1 203.7L695.8 203.5ZM696 212.1L705.3 212.3L705.5 221L696.2 220.8ZM696.3 229.6L705.7 229.8L705.9 238.7L696.5 238.6ZM696.6 247.6L706.1 247.8L706.2 257L696.8 256.8ZM696.9 266.1L706.4 266.2L706.5 275.6L697 275.5ZM697.1 284.9L706.6 285L706.7 294.5L697.1 294.4ZM697.2 304L706.8 304L706.8 313.6L697.2 313.6ZM697.2 323.2L706.9 323.2L706.9 332.9L697.3 332.9ZM697.2 342.5L706.9 342.5L706.8 352.1L697.2 352.1ZM697.2 361.8L706.8 361.7L706.7 371.3L697.1 371.3ZM697.1 380.9L706.6 380.8L706.5 390.2L697 390.3ZM696.9 399.7L706.4 399.6L706.3 408.9L696.8 409ZM696.7 418.3L706.1 418.1L706 427.2L696.5 427.4ZM696.4 436.4L705.8 436.2L705.6 445.1L696.2 445.3ZM696.1 454L705.4 453.8L705.1 462.4L695.9 462.6ZM695.7 471.1L704.9 470.9L704.6 479.2L695.5 479.4ZM695.3 487.6L704.4 487.4L704.1 495.4L695.1 495.6ZM694.9 503.5L703.8 503.3L703.5 511L694.6 511.2ZM703.4 155.5L712.3 155.8L712.6 163.4L703.7 163.1ZM704 170.9L713 171.3L713.3 179.2L704.3 178.9ZM704.6 187L713.6 187.3L713.9 195.6L704.8 195.3ZM705.1 203.7L714.2 204L714.5 212.5L705.3 212.3ZM705.5 221L714.8 221.2L715 230L705.7 229.8ZM705.9 238.7L715.3 238.9L715.5 248L706.1 247.8ZM706.2 257L715.7 257.1L715.8 266.4L706.4 266.2ZM706.5 275.6L716 275.7L716.1 285.1L706.6 285ZM706.7 294.5L716.2 294.6L716.3 304.1L706.8 304ZM706.8 313.6L716.4 313.7L716.4 323.3L706.9 323.2ZM706.9 332.9L716.4 332.9L716.4 342.5L706.9 342.5ZM706.8 352.1L716.4 352.1L716.3 361.6L706.8 361.7ZM706.7 371.3L716.3 371.2L716.2 380.7L706.6 380.8ZM706.5 390.2L716 390.1L715.9 399.5L706.4 399.6ZM706.3 408.9L715.7 408.7L715.5 417.9L706.1 418.1ZM706 427.2L715.3 427L715.1 436L705.8 436.2ZM705.6 445.1L714.9 444.8L714.6 453.6L705.4 453.8ZM705.1 462.4L714.3 462.2L714 470.6L704.9 470.9ZM704.6 479.2L713.7 478.9L713.4 487.1L704.4 487.4ZM704.1 495.4L713.1 495.1L712.8 502.9L703.8 503.3ZM703.5 511L712.4 510.7L712 518.2L703.3 518.5ZM712.6 163.4L721.5 163.8L721.9 171.6L713 171.3ZM713.3 179.2L722.3 179.6L722.6 187.7L713.6 187.3ZM713.9 195.6L723 195.9L723.3 204.3L714.2 204ZM714.5 212.5L723.7 212.8L724 221.5L714.8 221.2ZM715 230L724.3 230.3L724.6 239.2L715.3 238.9ZM715.5 248L724.8 248.2L725 257.3L715.7 257.1ZM715.8 266.4L725.2 266.6L725.4 275.9L716 275.7ZM716.1 285.1L725.6 285.2L725.7 294.7L716.2 294.6ZM716.3 304.1L725.8 304.2L725.9 313.7L716.4 313.7ZM716.4 323.3L725.9 323.3L725.9 332.9L716.4 332.9ZM716.4 342.5L725.9 342.5L725.9 352L716.4 352.1ZM716.3 361.6L725.8 361.6L725.7 371.1L716.3 371.2ZM716.2 380.7L725.6 380.5L725.5 390L716 390.1ZM715.9 399.5L725.3 399.3L725.1 408.6L715.7 408.7ZM715.5 417.9L724.9 417.7L724.6 426.8L715.3 427ZM715.1 436L724.4 435.7L724.1 444.6L714.9 444.8ZM714.6 453.6L723.8 453.3L723.5 461.8L714.3 462.2ZM714 470.6L723.1 470.3L722.8 478.6L713.7 478.9ZM713.4 487.1L722.4 486.7L722 494.7L713.1 495.1ZM712.8 502.9L721.6 502.6L721.2 510.3L712.4 510.7ZM721.1 156.2L729.8 156.6L730.2 164.3L721.5 163.8ZM721.9 171.6L730.7 172L731.1 180L722.3 179.6ZM722.6 187.7L731.6 188.1L732 196.3L723 195.9ZM723.3 204.3L732.4 204.7L732.8 213.2L723.7 212.8ZM724 221.5L733.1 221.8L733.5 230.6L724.3 230.3ZM724.6 239.2L733.8 239.5L734.1 248.5L724.8 248.2ZM725 257.3L734.3 257.6L734.5 266.8L725.2 266.6ZM725.4 275.9L734.7 276L734.9 285.4L725.6 285.2ZM725.7 294.7L735.1 294.8L735.2 304.3L725.8 304.2ZM725.9 313.7L735.3 313.8L735.3 323.3L725.9 323.3ZM725.9 332.9L735.3 332.9L735.3 342.4L725.9 342.5ZM725.9 352L735.3 352L735.2 361.5L725.8 361.6ZM725.7 371.1L735.1 371L735 380.4L725.6 380.5ZM725.5 390L734.8 389.8L734.6 399.1L725.3 399.3ZM725.1 408.6L734.4 408.3L734.2 417.5L724.9 417.7ZM724.6 426.8L733.9 426.5L733.6 435.4L724.4 435.7ZM724.1 444.6L733.2 444.2L732.9 452.9L723.8 453.3ZM723.5 461.8L732.5 461.5L732.1 469.9L723.1 470.3ZM722.8 478.6L731.7 478.2L731.3 486.3L722.4 486.7ZM722 494.7L730.9 494.3L730.4 502.1L721.6 502.6ZM721.2 510.3L730 509.8L729.5 517.4L720.8 517.8ZM730.2 164.3L739 164.8L739.5 172.5L730.7 172ZM731.1 180L740 180.4L740.4 188.5L731.6 188.1ZM732 196.3L740.9 196.7L741.4 205.1L732.4 204.7ZM732.8 213.2L741.8 213.6L742.2 222.2L733.1 221.8ZM733.5 230.6L742.6 230.9L742.9 239.8L733.8 239.5ZM734.1 248.5L743.2 248.7L743.5 257.8L734.3 257.6ZM734.5 266.8L743.8 267L744 276.2L734.7 276ZM734.9 285.4L744.2 285.6L744.4 295L735.1 294.8ZM735.2 304.3L744.5 304.4L744.6 313.9L735.3 313.8ZM735.3 323.3L744.6 323.4L744.7 332.9L735.3 332.9ZM735.3 342.4L744.6 342.4L744.6 351.9L735.3 352ZM735.2 361.5L744.5 361.4L744.4 370.8L735.1 371ZM735 380.4L744.3 380.3L744.1 389.6L734.8 389.8ZM734.6 399.1L743.9 398.9L743.6 408.1L734.4 408.3ZM734.2 417.5L743.3 417.2L743 426.2L733.9 426.5ZM733.6 435.4L742.7 435.1L742.3 443.9L733.2 444.2ZM732.9 452.9L741.9 452.6L741.5 461.1L732.5 461.5ZM732.1 469.9L741.1 469.5L740.6 477.7L731.7 478.2ZM731.3 486.3L740.1 485.9L739.6 493.8L730.9 494.3ZM730.4 502.1L739.1 501.7L738.6 509.3L730 509.8ZM729.5 517.4L738.1 516.9L737.6 524.3L729 524.8ZM738.4 157.1L747 157.7L747.6 165.3L739 164.8ZM739.5 172.5L748.2 173.1L748.7 181L740 180.4ZM740.4 188.5L749.2 189L749.7 197.2L740.9 196.7ZM741.4 205.1L750.2 205.5L750.7 214L741.8 213.6ZM742.2 222.2L751.1 222.6L751.5 231.3L742.6 230.9ZM742.9 239.8L751.9 240.1L752.3 249.1L743.2 248.7ZM743.5 257.8L752.6 258.1L752.9 267.2L743.8 267ZM744 276.2L753.1 276.5L753.4 285.8L744.2 285.6ZM744.4 295L753.5 295.1L753.7 304.5L744.5 304.4ZM744.6 313.9L753.8 313.9L753.8 323.4L744.6 323.4ZM744.7 332.9L753.9 332.9L753.9 342.4L744.6 342.4ZM744.6 351.9L753.8 351.8L753.7 361.3L744.5 361.4ZM744.4 370.8L753.6 370.7L753.4 380.1L744.3 380.3ZM744.1 389.6L753.2 389.4L753 398.6L743.9 398.9ZM743.6 408.1L752.7 407.8L752.4 416.9L743.3 417.2ZM743 426.2L752.1 425.9L751.7 434.7L742.7 435.1ZM742.3 443.9L751.3 443.5L750.9 452.1L741.9 452.6ZM741.5 461.1L750.4 460.6L749.9 469L741.1 469.5ZM740.6 477.7L749.4 477.2L748.9 485.3L740.1 485.9ZM739.6 493.8L748.4 493.3L747.8 501.1L739.1 501.7ZM738.6 509.3L747.2 508.8L746.6 516.3L738.1 516.9ZM747.6 165.3L756.1 165.9L756.7 173.6L748.2 173.1ZM748.7 181L757.3 181.5L757.9 189.6L749.2 189ZM749.7 197.2L758.5 197.7L759 206L750.2 205.5ZM750.7 214L759.5 214.5L760 223L751.1 222.6ZM751.5 231.3L760.4 231.7L760.9 240.5L751.9 240.1ZM752.3 249.1L761.2 249.4L761.6 258.4L752.6 258.1ZM752.9 267.2L761.9 267.5L762.2 276.7L753.1 276.5ZM753.4 285.8L762.4 286L762.6 295.3L753.5 295.1ZM753.7 304.5L762.8 304.6L762.9 314L753.8 313.9ZM753.8 323.4L762.9 323.5L763 332.9L753.9 332.9ZM753.9 342.4L763 342.3L762.9 351.8L753.8 351.8ZM753.7 361.3L762.8 361.2L762.7 370.6L753.6 370.7ZM753.4 380.1L762.5 379.9L762.3 389.2L753.2 389.4ZM753 398.6L762 398.4L761.7 407.5L752.7 407.8ZM752.4 416.9L761.4 416.5L761 425.5L752.1 425.9ZM751.7 434.7L760.6 434.3L760.2 443L751.3 443.5ZM750.9 452.1L759.7 451.7L759.2 460.1L750.4 460.6ZM749.9 469L758.7 468.5L758.1 476.7L749.4 477.2ZM748.9 485.3L757.6 484.8L757 492.7L748.4 493.3ZM747.8 501.1L756.4 500.5L755.7 508.2L747.2 508.8ZM746.6 516.3L755.1 515.7L754.5 523.1L746.1 523.7ZM755.5 158.3L763.9 158.9L764.6 166.5L756.1 165.9ZM756.7 173.6L765.2 174.3L765.9 182.1L757.3 181.5ZM757.9 189.6L766.5 190.2L767.1 198.3L758.5 197.7ZM759 206L767.7 206.6L768.2 215L759.5 214.5ZM760 223L768.7 223.5L769.2 232.2L760.4 231.7ZM760.9 240.5L769.7 240.9L770.1 249.8L761.2 249.4ZM761.6 258.4L770.5 258.8L770.8 267.8L761.9 267.5ZM762.2 276.7L771.1 277L771.4 286.2L762.4 286ZM762.6 295.3L771.6 295.5L771.7 304.8L762.8 304.6ZM762.9 314L771.8 314.1L771.9 323.5L762.9 323.5ZM763 332.9L772 332.9L771.9 342.3L763 342.3ZM762.9 351.8L771.9 351.7L771.8 361.1L762.8 361.2ZM762.7 370.6L771.6 370.4L771.4 379.7L762.5 379.9ZM762.3 389.2L771.2 388.9L770.9 398.1L762 398.4ZM761.7 407.5L770.6 407.2L770.2 416.2L761.4 416.5ZM761 425.5L769.8 425.1L769.4 433.9L760.6 434.3ZM760.2 443L768.9 442.6L768.4 451.2L759.7 451.7ZM759.2 460.1L767.9 459.6L767.3 467.9L758.7 468.5ZM758.1 476.7L766.7 476.1L766.1 484.2L757.6 484.8ZM757 492.7L765.5 492.1L764.8 499.9L756.4 500.5ZM755.7 508.2L764.2 507.5L763.5 515.1L755.1 515.7ZM764.6 166.5L773 167.2L773.6 174.9L765.2 174.3ZM765.9 182.1L774.3 182.8L775 190.8L766.5 190.2ZM767.1 198.3L775.6 198.9L776.2 207.2L767.7 206.6ZM768.2 215L776.8 215.5L777.4 224L768.7 223.5ZM769.2 232.2L777.9 232.7L778.4 241.4L769.7 240.9ZM770.1 249.8L778.8 250.2L779.2 259.1L770.5 258.8ZM770.8 267.8L779.6 268.2L779.9 277.3L771.1 277ZM771.4 286.2L780.2 286.4L780.4 295.7L771.6 295.5ZM771.7 304.8L780.6 304.9L780.7 314.2L771.8 314.1ZM771.9 323.5L780.8 323.6L780.8 332.9L772 332.9ZM771.9 342.3L780.8 342.3L780.7 351.6L771.9 351.7ZM771.8 361.1L780.6 360.9L780.5 370.2L771.6 370.4ZM771.4 379.7L780.2 379.4L780 388.6L771.2 388.9ZM770.9 398.1L779.7 397.8L779.3 406.8L770.6 407.2ZM770.2 416.2L779 415.8L778.5 424.6L769.8 425.1ZM769.4 433.9L778.1 433.4L777.6 442.1L768.9 442.6ZM768.4 451.2L777 450.6L776.5 459L767.9 459.6ZM767.3 467.9L775.9 467.3L775.2 475.5L766.7 476.1ZM766.1 484.2L774.6 483.5L773.9 491.4L765.5 492.1ZM764.8 499.9L773.2 499.2L772.5 506.8L764.2 507.5ZM763.5 515.1L771.8 514.4L771.1 521.7L762.8 522.4ZM772.2 159.6L780.5 160.4L781.2 167.9L773 167.2ZM773.6 174.9L781.9 175.7L782.7 183.5L774.3 182.8ZM775 190.8L783.4 191.5L784 199.6L775.6 198.9ZM776.2 207.2L784.7 207.8L785.3 216.1L776.8 215.5ZM777.4 224L785.9 224.6L786.4 233.2L777.9 232.7ZM778.4 241.4L786.9 241.9L787.4 250.7L778.8 250.2ZM779.2 259.1L787.8 259.5L788.2 268.5L779.6 268.2ZM779.9 277.3L788.5 277.6L788.8 286.7L780.2 286.4ZM780.4 295.7L789.1 295.9L789.3 305.1L780.6 304.9ZM780.7 314.2L789.4 314.3L789.5 323.6L780.8 323.6ZM780.8 332.9L789.5 332.9L789.5 342.2L780.8 342.3ZM780.7 351.6L789.4 351.5L789.3 360.8L780.6 360.9ZM780.5 370.2L789.1 370L788.9 379.2L780.2 379.4ZM780 388.6L788.7 388.3L788.3 397.4L779.7 397.8ZM779.3 406.8L788 406.4L787.6 415.3L779 415.8ZM778.5 424.6L787.1 424.2L786.6 432.9L778.1 433.4ZM777.6 442.1L786.1 441.5L785.5 450L777 450.6ZM776.5 459L784.9 458.4L784.3 466.7L775.9 467.3ZM775.2 475.5L783.6 474.8L782.9 482.8L774.6 483.5ZM773.9 491.4L782.2 490.7L781.5 498.5L773.2 499.2ZM772.5 506.8L780.7 506.1L780 513.6L771.8 514.4ZM781.2 167.9L789.4 168.7L790.1 176.4L781.9 175.7ZM782.7 183.5L790.9 184.2L791.6 192.2L783.4 191.5ZM784 199.6L792.3 200.2L793 208.4L784.7 207.8ZM785.3 216.1L793.7 216.7L794.3 225.2L785.9 224.6ZM786.4 233.2L794.8 233.7L795.4 242.4L786.9 241.9ZM787.4 250.7L795.9 251.1L796.3 260L787.8 259.5ZM788.2 268.5L796.7 268.9L797.1 277.9L788.5 277.6ZM788.8 286.7L797.4 287L797.6 296.1L789.1 295.9ZM789.3 305.1L797.8 305.3L798 314.5L789.4 314.3ZM789.5 323.6L798.1 323.7L798.1 332.9L789.5 332.9ZM789.5 342.2L798.1 342.2L798 351.4L789.4 351.5ZM789.3 360.8L797.9 360.6L797.7 369.8L789.1 370ZM788.9 379.2L797.5 379L797.2 388L788.7 388.3ZM788.3 397.4L796.8 397.1L796.5 406L788 406.4ZM787.6 415.3L796 414.9L795.6 423.7L787.1 424.2ZM786.6 432.9L795 432.4L794.5 441L786.1 441.5ZM785.5 450L793.9 449.4L793.2 457.8L784.9 458.4ZM784.3 466.7L792.6 466L791.9 474.1L783.6 474.8ZM782.9 482.8L791.2 482.1L790.4 490L782.2 490.7ZM781.5 498.5L789.6 497.7L788.9 505.3L780.7 506.1ZM780 513.6L788.1 512.8L787.3 520.2L779.2 521ZM788.6 161.1L796.6 161.9L797.4 169.5L789.4 168.7ZM790.1 176.4L798.2 177.2L799 185L790.9 184.2ZM791.6 192.2L799.8 192.9L800.5 200.9L792.3 200.2ZM793 208.4L801.2 209.1L801.9 217.4L793.7 216.7ZM794.3 225.2L802.5 225.8L803.1 234.3L794.8 233.7ZM795.4 242.4L803.7 242.9L804.2 251.6L795.9 251.1ZM796.3 260L804.7 260.4L805.1 269.3L796.7 268.9ZM797.1 277.9L805.4 278.2L805.8 287.2L797.4 287ZM797.6 296.1L806 296.3L806.2 305.4L797.8 305.3ZM798 314.5L806.4 314.6L806.5 323.8L798.1 323.7ZM798.1 332.9L806.5 332.9L806.5 342.1L798.1 342.2ZM798 351.4L806.4 351.3L806.3 360.5L797.9 360.6ZM797.7 369.8L806.1 369.6L805.9 378.7L797.5 379ZM797.2 388L805.6 387.7L805.2 396.7L796.8 397.1ZM796.5 406L804.8 405.6L804.4 414.4L796 414.9ZM795.6 423.7L803.9 423.2L803.3 431.8L795 432.4ZM794.5 441L802.7 440.4L802.1 448.8L793.9 449.4ZM793.2 457.8L801.4 457.1L800.8 465.3L792.6 466ZM791.9 474.1L800 473.4L799.3 481.4L791.2 482.1ZM790.4 490L798.5 489.2L797.7 496.9L789.6 497.7ZM788.9 505.3L796.9 504.5L796.1 512L788.1 512.8ZM797.4 169.5L805.4 170.3L806.2 178L798.2 177.2ZM799 185L807 185.8L807.8 193.7L799.8 192.9ZM800.5 200.9L808.5 201.7L809.3 209.8L801.2 209.1ZM801.9 217.4L810 218.1L810.6 226.4L802.5 225.8ZM803.1 234.3L811.3 234.9L811.8 243.4L803.7 242.9ZM804.2 251.6L812.4 252.1L812.9 260.8L804.7 260.4ZM805.1 269.3L813.3 269.7L813.7 278.6L805.4 278.2ZM805.8 287.2L814 287.5L814.3 296.6L806 296.3ZM806.2 305.4L814.5 305.6L814.6 314.7L806.4 314.6ZM806.5 323.8L814.7 323.8L814.8 333L806.5 332.9ZM806.5 342.1L814.8 342.1L814.7 351.2L806.4 351.3ZM806.3 360.5L814.5 360.3L814.4 369.4L806.1 369.6ZM805.9 378.7L814.1 378.4L813.8 387.4L805.6 387.7ZM805.2 396.7L813.4 396.3L813 405.2L804.8 405.6ZM804.4 414.4L812.5 413.9L812 422.6L803.9 423.2ZM803.3 431.8L811.5 431.2L810.9 439.7L802.7 440.4ZM802.1 448.8L810.2 448.1L809.5 456.4L801.4 457.1ZM800.8 465.3L808.8 464.6L808.1 472.7L800 473.4ZM799.3 481.4L807.3 480.6L806.5 488.4L798.5 489.2ZM797.7 496.9L805.7 496.1L804.8 503.7L796.9 504.5ZM796.1 512L804 511.2L803.1 518.6L795.3 519.4ZM804.5 162.8L812.3 163.6L813.2 171.2L805.4 170.3ZM806.2 178L814 178.8L814.9 186.6L807 185.8ZM807.8 193.7L815.7 194.5L816.5 202.4L808.5 201.7ZM809.3 209.8L817.2 210.5L817.9 218.8L810 218.1ZM810.6 226.4L818.6 227.1L819.3 235.5L811.3 234.9ZM811.8 243.4L819.8 244L820.4 252.6L812.4 252.1ZM812.9 260.8L820.9 261.3L821.4 270.1L813.3 269.7ZM813.7 278.6L821.7 278.9L822.1 287.8L814 287.5ZM814.3 296.6L822.4 296.8L822.6 305.8L814.5 305.6ZM814.6 314.7L822.8 314.8L822.9 323.9L814.7 323.8ZM814.8 333L822.9 333L822.9 342L814.8 342.1ZM814.7 351.2L822.8 351.1L822.7 360.1L814.5 360.3ZM814.4 369.4L822.5 369.1L822.2 378.1L814.1 378.4ZM813.8 387.4L821.9 387L821.5 395.9L813.4 396.3ZM813 405.2L821.1 404.7L820.6 413.4L812.5 413.9ZM812 422.6L820.1 422.1L819.5 430.6L811.5 431.2ZM810.9 439.7L818.8 439.1L818.2 447.5L810.2 448.1ZM809.5 456.4L817.5 455.7L816.7 463.8L808.8 464.6ZM808.1 472.7L816 471.9L815.2 479.8L807.3 480.6ZM806.5 488.4L814.3 487.6L813.5 495.3L805.7 496.1ZM804.8 503.7L812.6 502.9L811.8 510.3L804 511.2ZM811.5 156.2L819.2 157.1L820.1 164.5L812.3 163.6ZM813.2 171.2L820.9 172L821.8 179.7L814 178.8ZM814.9 186.6L822.6 187.4L823.5 195.3L815.7 194.5ZM816.5 202.4L824.2 203.2L825 211.3L817.2 210.5ZM817.9 218.8L825.8 219.5L826.5 227.7L818.6 227.1ZM819.3 235.5L827.1 236.1L827.7 244.6L819.8 244ZM820.4 252.6L828.3 253.2L828.8 261.8L820.9 261.3ZM821.4 270.1L829.3 270.5L829.7 279.3L821.7 278.9ZM822.1 287.8L830 288.2L830.3 297.1L822.4 296.8ZM822.6 305.8L830.5 306L830.7 315L822.8 314.8ZM822.9 323.9L830.8 324L830.9 333L822.9 333ZM822.9 342L830.8 342L830.8 351L822.8 351.1ZM822.7 360.1L830.6 360L830.4 368.9L822.5 369.1ZM822.2 378.1L830.1 377.8L829.8 386.7L821.9 387ZM821.5 395.9L829.4 395.5L829 404.3L821.1 404.7ZM820.6 413.4L828.5 412.9L827.9 421.5L820.1 422.1ZM819.5 430.6L827.3 430L826.7 438.4L818.8 439.1ZM818.2 447.5L826 446.8L825.3 455L817.5 455.7ZM816.7 463.8L824.5 463.1L823.7 471.1L816 471.9ZM815.2 479.8L822.9 479L822.1 486.7L814.3 487.6ZM813.5 495.3L821.2 494.4L820.4 502L812.6 502.9ZM811.8 510.3L819.5 509.5L818.6 516.8L810.9 517.7ZM820.1 164.5L827.7 165.4L828.6 172.9L820.9 172ZM821.8 179.7L829.4 180.5L830.3 188.3L822.6 187.4ZM823.5 195.3L831.1 196.1L831.9 204L824.2 203.2ZM825 211.3L832.7 212.1L833.5 220.2L825.8 219.5ZM826.5 227.7L834.2 228.4L834.8 236.8L827.1 236.1ZM827.7 244.6L835.5 245.2L836 253.7L828.3 253.2ZM828.8 261.8L836.6 262.3L837 271L829.3 270.5ZM829.7 279.3L837.4 279.7L837.8 288.5L830 288.2ZM830.3 297.1L838.1 297.3L838.3 306.2L830.5 306ZM830.7 315L838.5 315.1L838.6 324L830.8 324ZM830.9 333L838.7 333L838.6 341.9L830.8 342ZM830.8 351L838.5 350.9L838.4 359.8L830.6 360ZM830.4 368.9L838.2 368.7L837.9 377.5L830.1 377.8ZM829.8 386.7L837.6 386.3L837.2 395.1L829.4 395.5ZM829 404.3L836.7 403.8L836.2 412.4L828.5 412.9ZM827.9 421.5L835.7 420.9L835.1 429.4L827.3 430ZM826.7 438.4L834.4 437.8L833.7 446L826 446.8ZM825.3 455L833 454.2L832.2 462.3L824.5 463.1ZM823.7 471.1L831.4 470.3L830.6 478.1L822.9 479ZM822.1 486.7L829.7 485.9L828.9 493.6L821.2 494.4ZM820.4 502L828 501.1L827.1 508.6L819.5 509.5ZM818.6 516.8L826.2 516L825.4 523.3L817.8 524.1ZM826.8 157.9L834.3 158.8L835.2 166.3L827.7 165.4ZM828.6 172.9L836.1 173.8L837 181.4L829.4 180.5ZM830.3 188.3L837.8 189.1L838.7 196.9L831.1 196.1ZM831.9 204L839.5 204.8L840.3 212.8L832.7 212.1ZM833.5 220.2L841 220.9L841.7 229.1L834.2 228.4ZM834.8 236.8L842.4 237.4L843.1 245.8L835.5 245.2ZM836 253.7L843.6 254.3L844.2 262.8L836.6 262.3ZM837 271L844.6 271.4L845.1 280.1L837.4 279.7ZM837.8 288.5L845.4 288.8L845.7 297.6L838.1 297.3ZM838.3 306.2L846 306.4L846.1 315.3L838.5 315.1ZM838.6 324L846.3 324.1L846.3 333L838.7 333ZM838.6 341.9L846.3 341.9L846.2 350.7L838.5 350.9ZM838.4 359.8L846 359.6L845.8 368.4L838.2 368.7ZM837.9 377.5L845.5 377.2L845.2 386L837.6 386.3ZM837.2 395.1L844.8 394.7L844.4 403.3L836.7 403.8ZM836.2 412.4L843.8 411.9L843.3 420.3L835.7 420.9ZM835.1 429.4L842.7 428.8L842 437.1L834.4 437.8ZM833.7 446L841.3 445.3L840.5 453.5L833 454.2ZM832.2 462.3L839.8 461.5L839 469.4L831.4 470.3ZM830.6 478.1L838.1 477.3L837.3 485L829.7 485.9ZM828.9 493.6L836.4 492.7L835.5 500.2L828 501.1ZM827.1 508.6L834.6 507.7L833.8 515.1L826.2 516ZM835.2 166.3L842.6 167.1L843.5 174.7L836.1 173.8ZM837 181.4L844.4 182.3L845.2 190L837.8 189.1ZM838.7 196.9L846.1 197.8L846.9 205.6L839.5 204.8ZM840.3 212.8L847.7 213.6L848.5 221.7L841 220.9ZM841.7 229.1L849.2 229.8L849.9 238.1L842.4 237.4ZM843.1 245.8L850.5 246.4L851.1 254.8L843.6 254.3ZM844.2 262.8L851.6 263.3L852.1 271.9L844.6 271.4ZM845.1 280.1L852.6 280.5L852.9 289.2L845.4 288.8ZM845.7 297.6L853.2 297.9L853.5 306.6L846 306.4ZM846.1 315.3L853.6 315.4L853.7 324.2L846.3 324.1ZM846.3 333L853.8 333L853.8 341.8L846.3 341.9ZM846.2 350.7L853.7 350.6L853.5 359.4L846 359.6ZM845.8 368.4L853.3 368.2L853 376.9L845.5 377.2ZM845.2 386L852.7 385.6L852.3 394.2L844.8 394.7ZM844.4 403.3L851.8 402.8L851.3 411.3L843.8 411.9ZM843.3 420.3L850.7 419.7L850.1 428.1L842.7 428.8ZM842 437.1L849.4 436.4L848.7 444.6L841.3 445.3ZM840.5 453.5L848 452.7L847.2 460.7L839.8 461.5ZM839 469.4L846.4 468.6L845.6 476.4L838.1 477.3ZM837.3 485L844.7 484.2L843.8 491.8L836.4 492.7ZM835.5 500.2L843 499.4L842.1 506.8L834.6 507.7ZM833.8 515.1L841.2 514.2L840.4 521.6L832.9 522.4ZM841.8 159.7L849.2 160.6L850 168L842.6 167.1ZM843.5 174.7L850.9 175.5L851.7 183.1L844.4 182.3ZM845.2 190L852.6 190.8L853.4 198.6L846.1 197.8ZM846.9 205.6L854.2 206.5L855 214.4L847.7 213.6ZM848.5 221.7L855.8 222.4L856.5 230.6L849.2 229.8ZM849.9 238.1L857.2 238.8L857.8 247L850.5 246.4ZM851.1 254.8L858.4 255.4L859 263.8L851.6 263.3ZM852.1 271.9L859.5 272.3L859.9 280.9L852.6 280.5ZM852.9 289.2L860.3 289.5L860.6 298.1L853.2 297.9ZM853.5 306.6L860.8 306.8L861 315.5L853.6 315.4ZM853.7 324.2L861.1 324.3L861.1 333L853.8 333ZM853.8 341.8L861.1 341.8L861 350.5L853.7 350.6ZM853.5 359.4L860.9 359.2L860.7 367.9L853.3 368.2ZM853 376.9L860.4 376.6L860 385.2L852.7 385.6ZM852.3 394.2L859.6 393.8L859.2 402.3L851.8 402.8ZM851.3 411.3L858.6 410.8L858.1 419.1L850.7 419.7ZM850.1 428.1L857.4 427.5L856.8 435.7L849.4 436.4ZM848.7 444.6L856.1 443.8L855.3 451.9L848 452.7ZM847.2 460.7L854.5 459.9L853.7 467.8L846.4 468.6ZM845.6 476.4L852.9 475.6L852 483.3L844.7 484.2ZM843.8 491.8L851.2 490.9L850.3 498.5L843 499.4ZM842.1 506.8L849.5 506L848.6 513.4L841.2 514.2ZM850 168L857.3 168.9L858.2 176.4L850.9 175.5ZM851.7 183.1L859 184L859.8 191.7L852.6 190.8ZM853.4 198.6L860.7 199.4L861.5 207.3L854.2 206.5ZM855 214.4L862.3 215.2L863 223.2L855.8 222.4ZM856.5 230.6L863.7 231.3L864.4 239.4L857.2 238.8ZM857.8 247L865.1 247.7L865.6 256L858.4 255.4ZM859 263.8L866.2 264.3L866.7 272.8L859.5 272.3ZM859.9 280.9L867.1 281.3L867.5 289.8L860.3 289.5ZM860.6 298.1L867.8 298.4L868 307L860.8 306.8ZM861 315.5L868.2 315.7L868.3 324.4L861.1 324.3ZM861.1 333L868.3 333L868.3 341.7L861.1 341.8ZM861 350.5L868.2 350.4L868.1 359L860.9 359.2ZM860.7 367.9L867.9 367.7L867.6 376.3L860.4 376.6ZM860 385.2L867.2 384.8L866.8 393.3L859.6 393.8ZM859.2 402.3L866.4 401.8L865.8 410.2L858.6 410.8ZM858.1 419.1L865.3 418.5L864.7 426.8L857.4 427.5ZM856.8 435.7L864 435L863.3 443.1L856.1 443.8ZM855.3 451.9L862.5 451.1L861.8 459.1L854.5 459.9ZM853.7 467.8L861 467L860.1 474.7L852.9 475.6ZM852 483.3L859.3 482.4L858.5 490.1L851.2 490.9ZM850.3 498.5L857.6 497.6L856.8 505.1L849.5 506ZM848.6 513.4L855.9 512.5L855.1 519.9L847.8 520.7ZM856.5 161.4L863.7 162.2L864.5 169.7L857.3 168.9ZM858.2 176.4L865.4 177.2L866.2 184.8L859 184ZM859.8 191.7L867 192.5L867.8 200.2L860.7 199.4ZM861.5 207.3L868.6 208.1L869.4 215.9L862.3 215.2ZM863 223.2L870.1 223.9L870.8 232L863.7 231.3ZM864.4 239.4L871.5 240.1L872.1 248.3L865.1 247.7ZM865.6 256L872.7 256.5L873.3 264.9L866.2 264.3ZM866.7 272.8L873.7 273.2L874.2 281.7L867.1 281.3ZM867.5 289.8L874.5 290.2L874.8 298.7L867.8 298.4ZM868.1 359L875.2 358.9L874.9 367.4L867.9 367.7ZM867.6 376.3L874.7 376L874.3 384.5L867.2 384.8ZM866.8 393.3L873.9 392.9L873.4 401.3L866.4 401.8ZM865.8 410.2L872.9 409.7L872.4 417.9L865.3 418.5ZM864.7 426.8L871.7 426.2L871.1 434.3L864 435ZM863.3 443.1L870.4 442.4L869.7 450.4L862.5 451.1ZM861.8 459.1L868.9 458.3L868.1 466.1L861 467ZM860.1 474.7L867.3 473.9L866.5 481.6L859.3 482.4ZM858.5 490.1L865.7 489.2L864.8 496.8L857.6 497.6ZM856.8 505.1L864 504.3L863.2 511.7L855.9 512.5ZM863 154.8L870.2 155.5L871 163L863.7 162.2ZM864.5 169.7L871.7 170.5L872.5 178L865.4 177.2ZM866.2 184.8L873.3 185.6L874.1 193.3L867 192.5ZM867.8 200.2L874.9 201L875.7 208.8L868.6 208.1ZM868.1 466.1L875.2 465.4L874.4 473.1L867.3 473.9ZM866.5 481.6L873.6 480.8L872.8 488.4L865.7 489.2ZM864.8 496.8L872 496L871.3 503.5L864 504.3ZM863.2 511.7L870.5 511L869.8 518.4L862.5 519.1Z" fill="url(#dgm)"/></g><path d="M464.8 181.3l5.4 5.4m0 -5.4l-5.4 5.4M463.9 188.9l5.4 5.4m0 -5.4l-5.4 5.4M463.1 196.7l5.4 5.4m0 -5.4l-5.4 5.4M462.3 204.5l5.4 5.4m0 -5.4l-5.4 5.4M461.5 212.4l5.4 5.4m0 -5.4l-5.4 5.4M460.7 220.4l5.4 5.4m0 -5.4l-5.4 5.4M460 228.5l5.4 5.4m0 -5.4l-5.4 5.4M459.3 236.7l5.4 5.4m0 -5.4l-5.4 5.4M458.7 244.9l5.4 5.4m0 -5.4l-5.4 5.4M458.1 253.2l5.4 5.4m0 -5.4l-5.4 5.4M457.6 261.6l5.4 5.4m0 -5.4l-5.4 5.4M457.1 270.1l5.4 5.4m0 -5.4l-5.4 5.4M456.7 278.6l5.4 5.4m0 -5.4l-5.4 5.4M456.3 287.1l5.4 5.4m0 -5.4l-5.4 5.4M456 295.7l5.4 5.4m0 -5.4l-5.4 5.4M455.7 304.3l5.4 5.4m0 -5.4l-5.4 5.4M455.6 313l5.4 5.4m0 -5.4l-5.4 5.4M455.5 321.7l5.4 5.4m0 -5.4l-5.4 5.4M455.4 330.3l5.4 5.4m0 -5.4l-5.4 5.4M455.4 339l5.4 5.4m0 -5.4l-5.4 5.4M455.5 347.7l5.4 5.4m0 -5.4l-5.4 5.4M455.7 356.4l5.4 5.4m0 -5.4l-5.4 5.4M455.9 365l5.4 5.4m0 -5.4l-5.4 5.4M456.2 373.6l5.4 5.4m0 -5.4l-5.4 5.4M456.5 382.2l5.4 5.4m0 -5.4l-5.4 5.4M456.9 390.7l5.4 5.4m0 -5.4l-5.4 5.4M457.4 399.2l5.4 5.4m0 -5.4l-5.4 5.4M457.9 407.6l5.4 5.4m0 -5.4l-5.4 5.4M458.5 415.9l5.4 5.4m0 -5.4l-5.4 5.4M459.1 424.2l5.4 5.4m0 -5.4l-5.4 5.4M459.8 432.4l5.4 5.4m0 -5.4l-5.4 5.4M460.5 440.5l5.4 5.4m0 -5.4l-5.4 5.4M461.2 448.5l5.4 5.4m0 -5.4l-5.4 5.4M462 456.5l5.4 5.4m0 -5.4l-5.4 5.4M462.8 464.3l5.4 5.4m0 -5.4l-5.4 5.4M463.6 472.1l5.4 5.4m0 -5.4l-5.4 5.4M464.5 479.8l5.4 5.4m0 -5.4l-5.4 5.4M465.3 487.4l5.4 5.4m0 -5.4l-5.4 5.4M472 180.4l5.4 5.4m0 -5.4l-5.4 5.4M471.2 188.1l5.4 5.4m0 -5.4l-5.4 5.4M470.3 195.9l5.4 5.4m0 -5.4l-5.4 5.4M469.5 203.7l5.4 5.4m0 -5.4l-5.4 5.4M468.7 211.7l5.4 5.4m0 -5.4l-5.4 5.4M468 219.7l5.4 5.4m0 -5.4l-5.4 5.4M467.2 227.8l5.4 5.4m0 -5.4l-5.4 5.4M466.6 236l5.4 5.4m0 -5.4l-5.4 5.4M465.9 244.3l5.4 5.4m0 -5.4l-5.4 5.4M465.3 252.7l5.4 5.4m0 -5.4l-5.4 5.4M464.8 261.1l5.4 5.4m0 -5.4l-5.4 5.4M464.3 269.6l5.4 5.4m0 -5.4l-5.4 5.4M463.9 278.2l5.4 5.4m0 -5.4l-5.4 5.4M463.5 286.8l5.4 5.4m0 -5.4l-5.4 5.4M463.2 295.4l5.4 5.4m0 -5.4l-5.4 5.4M463 304.1l5.4 5.4m0 -5.4l-5.4 5.4M462.8 312.8l5.4 5.4m0 -5.4l-5.4 5.4M462.7 321.6l5.4 5.4m0 -5.4l-5.4 5.4M462.6 330.3l5.4 5.4m0 -5.4l-5.4 5.4M462.6 339.1l5.4 5.4m0 -5.4l-5.4 5.4M462.7 347.8l5.4 5.4m0 -5.4l-5.4 5.4M462.9 356.6l5.4 5.4m0 -5.4l-5.4 5.4M463.1 365.3l5.4 5.4m0 -5.4l-5.4 5.4M463.4 373.9l5.4 5.4m0 -5.4l-5.4 5.4M463.7 382.5l5.4 5.4m0 -5.4l-5.4 5.4M464.1 391.1l5.4 5.4m0 -5.4l-5.4 5.4M464.6 399.6l5.4 5.4m0 -5.4l-5.4 5.4M465.1 408.1l5.4 5.4m0 -5.4l-5.4 5.4M465.7 416.5l5.4 5.4m0 -5.4l-5.4 5.4M466.3 424.8l5.4 5.4m0 -5.4l-5.4 5.4M467 433.1l5.4 5.4m0 -5.4l-5.4 5.4M467.7 441.2l5.4 5.4m0 -5.4l-5.4 5.4M468.4 449.3l5.4 5.4m0 -5.4l-5.4 5.4M469.2 457.3l5.4 5.4m0 -5.4l-5.4 5.4M470 465.1l5.4 5.4m0 -5.4l-5.4 5.4M470.9 472.9l5.4 5.4m0 -5.4l-5.4 5.4M471.7 480.7l5.4 5.4m0 -5.4l-5.4 5.4M472.6 488.3l5.4 5.4m0 -5.4l-5.4 5.4M479.4 179.5l5.4 5.4m0 -5.4l-5.4 5.4M478.5 187.2l5.4 5.4m0 -5.4l-5.4 5.4M477.7 195l5.4 5.4m0 -5.4l-5.4 5.4M476.9 202.9l5.4 5.4m0 -5.4l-5.4 5.4M476.1 210.9l5.4 5.4m0 -5.4l-5.4 5.4M475.3 218.9l5.4 5.4m0 -5.4l-5.4 5.4M474.6 227.1l5.4 5.4m0 -5.4l-5.4 5.4M473.9 235.4l5.4 5.4m0 -5.4l-5.4 5.4M473.3 243.7l5.4 5.4m0 -5.4l-5.4 5.4M472.7 252.1l5.4 5.4m0 -5.4l-5.4 5.4M472.1 260.6l5.4 5.4m0 -5.4l-5.4 5.4M471.6 269.2l5.4 5.4m0 -5.4l-5.4 5.4M471.2 277.8l5.4 5.4m0 -5.4l-5.4 5.4M470.9 286.4l5.4 5.4m0 -5.4l-5.4 5.4M470.5 295.2l5.4 5.4m0 -5.4l-5.4 5.4M470.3 303.9l5.4 5.4m0 -5.4l-5.4 5.4M470.1 312.7l5.4 5.4m0 -5.4l-5.4 5.4M470 321.5l5.4 5.4m0 -5.4l-5.4 5.4M470 330.3l5.4 5.4m0 -5.4l-5.4 5.4M470 339.1l5.4 5.4m0 -5.4l-5.4 5.4M470.1 347.9l5.4 5.4m0 -5.4l-5.4 5.4M470.2 356.7l5.4 5.4m0 -5.4l-5.4 5.4M470.5 365.5l5.4 5.4m0 -5.4l-5.4 5.4M470.7 374.2l5.4 5.4m0 -5.4l-5.4 5.4M471.1 382.9l5.4 5.4m0 -5.4l-5.4 5.4M471.5 391.6l5.4 5.4m0 -5.4l-5.4 5.4M471.9 400.1l5.4 5.4m0 -5.4l-5.4 5.4M472.5 408.7l5.4 5.4m0 -5.4l-5.4 5.4M473 417.1l5.4 5.4m0 -5.4l-5.4 5.4M473.7 425.5l5.4 5.4m0 -5.4l-5.4 5.4M474.3 433.7l5.4 5.4m0 -5.4l-5.4 5.4M475 441.9l5.4 5.4m0 -5.4l-5.4 5.4M475.8 450l5.4 5.4m0 -5.4l-5.4 5.4M476.6 458.1l5.4 5.4m0 -5.4l-5.4 5.4M477.4 466l5.4 5.4m0 -5.4l-5.4 5.4M478.2 473.8l5.4 5.4m0 -5.4l-5.4 5.4M479.1 481.5l5.4 5.4m0 -5.4l-5.4 5.4M479.9 489.2l5.4 5.4m0 -5.4l-5.4 5.4M486.8 178.7l5.4 5.4m0 -5.4l-5.4 5.4M486 186.4l5.4 5.4m0 -5.4l-5.4 5.4M485.1 194.2l5.4 5.4m0 -5.4l-5.4 5.4M484.3 202.1l5.4 5.4m0 -5.4l-5.4 5.4M483.5 210.1l5.4 5.4m0 -5.4l-5.4 5.4M482.8 218.2l5.4 5.4m0 -5.4l-5.4 5.4M482 226.4l5.4 5.4m0 -5.4l-5.4 5.4M481.4 234.7l5.4 5.4m0 -5.4l-5.4 5.4M480.7 243.1l5.4 5.4m0 -5.4l-5.4 5.4M480.1 251.5l5.4 5.4m0 -5.4l-5.4 5.4M479.6 260.1l5.4 5.4m0 -5.4l-5.4 5.4M479.1 268.7l5.4 5.4m0 -5.4l-5.4 5.4M478.7 277.4l5.4 5.4m0 -5.4l-5.4 5.4M478.3 286.1l5.4 5.4m0 -5.4l-5.4 5.4M478 294.9l5.4 5.4m0 -5.4l-5.4 5.4M477.8 303.7l5.4 5.4m0 -5.4l-5.4 5.4M477.6 312.6l5.4 5.4m0 -5.4l-5.4 5.4M477.5 321.4l5.4 5.4m0 -5.4l-5.4 5.4M477.5 330.3l5.4 5.4m0 -5.4l-5.4 5.4M477.5 339.2l5.4 5.4m0 -5.4l-5.4 5.4M477.6 348.1l5.4 5.4m0 -5.4l-5.4 5.4M477.7 356.9l5.4 5.4m0 -5.4l-5.4 5.4M478 365.8l5.4 5.4m0 -5.4l-5.4 5.4M478.2 374.5l5.4 5.4m0 -5.4l-5.4 5.4M478.6 383.3l5.4 5.4m0 -5.4l-5.4 5.4M479 392l5.4 5.4m0 -5.4l-5.4 5.4M479.4 400.6l5.4 5.4m0 -5.4l-5.4 5.4M479.9 409.2l5.4 5.4m0 -5.4l-5.4 5.4M480.5 417.7l5.4 5.4m0 -5.4l-5.4 5.4M481.1 426.1l5.4 5.4m0 -5.4l-5.4 5.4M481.8 434.4l5.4 5.4m0 -5.4l-5.4 5.4M482.5 442.7l5.4 5.4m0 -5.4l-5.4 5.4M483.2 450.8l5.4 5.4m0 -5.4l-5.4 5.4M484 458.9l5.4 5.4m0 -5.4l-5.4 5.4M484.8 466.8l5.4 5.4m0 -5.4l-5.4 5.4M485.7 474.6l5.4 5.4m0 -5.4l-5.4 5.4M486.5 482.4l5.4 5.4m0 -5.4l-5.4 5.4M487.4 490l5.4 5.4m0 -5.4l-5.4 5.4M494.4 177.8l5.4 5.4m0 -5.4l-5.4 5.4M493.5 185.5l5.4 5.4m0 -5.4l-5.4 5.4M492.7 193.3l5.4 5.4m0 -5.4l-5.4 5.4M491.9 201.3l5.4 5.4m0 -5.4l-5.4 5.4M491.1 209.3l5.4 5.4m0 -5.4l-5.4 5.4M490.3 217.5l5.4 5.4m0 -5.4l-5.4 5.4M489.6 225.7l5.4 5.4m0 -5.4l-5.4 5.4M489 234l5.4 5.4m0 -5.4l-5.4 5.4M488.3 242.5l5.4 5.4m0 -5.4l-5.4 5.4M487.8 251l5.4 5.4m0 -5.4l-5.4 5.4M487.2 259.6l5.4 5.4m0 -5.4l-5.4 5.4M486.8 268.3l5.4 5.4m0 -5.4l-5.4 5.4M486.3 277l5.4 5.4m0 -5.4l-5.4 5.4M486 285.8l5.4 5.4m0 -5.4l-5.4 5.4M485.7 294.6l5.4 5.4m0 -5.4l-5.4 5.4M485.5 303.5l5.4 5.4m0 -5.4l-5.4 5.4M485.3 312.4l5.4 5.4m0 -5.4l-5.4 5.4M485.2 321.4l5.4 5.4m0 -5.4l-5.4 5.4M485.1 330.3l5.4 5.4m0 -5.4l-5.4 5.4M485.2 339.2l5.4 5.4m0 -5.4l-5.4 5.4M485.2 348.2l5.4 5.4m0 -5.4l-5.4 5.4M485.4 357.1l5.4 5.4m0 -5.4l-5.4 5.4M485.6 366l5.4 5.4m0 -5.4l-5.4 5.4M485.9 374.9l5.4 5.4m0 -5.4l-5.4 5.4M486.2 383.7l5.4 5.4m0 -5.4l-5.4 5.4M486.6 392.4l5.4 5.4m0 -5.4l-5.4 5.4M487.1 401.1l5.4 5.4m0 -5.4l-5.4 5.4M487.6 409.7l5.4 5.4m0 -5.4l-5.4 5.4M488.1 418.3l5.4 5.4m0 -5.4l-5.4 5.4M488.7 426.8l5.4 5.4m0 -5.4l-5.4 5.4M489.4 435.1l5.4 5.4m0 -5.4l-5.4 5.4M490.1 443.4l5.4 5.4m0 -5.4l-5.4 5.4M490.8 451.6l5.4 5.4m0 -5.4l-5.4 5.4M491.6 459.7l5.4 5.4m0 -5.4l-5.4 5.4M492.4 467.6l5.4 5.4m0 -5.4l-5.4 5.4M493.2 475.5l5.4 5.4m0 -5.4l-5.4 5.4M494.1 483.3l5.4 5.4m0 -5.4l-5.4 5.4M494.9 490.9l5.4 5.4m0 -5.4l-5.4 5.4M502 176.9l5.4 5.4m0 -5.4l-5.4 5.4M501.2 184.7l5.4 5.4m0 -5.4l-5.4 5.4M500.3 192.5l5.4 5.4m0 -5.4l-5.4 5.4M499.5 200.5l5.4 5.4m0 -5.4l-5.4 5.4M498.8 208.6l5.4 5.4m0 -5.4l-5.4 5.4M498 216.7l5.4 5.4m0 -5.4l-5.4 5.4M497.3 225l5.4 5.4m0 -5.4l-5.4 5.4M496.7 233.4l5.4 5.4m0 -5.4l-5.4 5.4M496.1 241.9l5.4 5.4m0 -5.4l-5.4 5.4M495.5 250.4l5.4 5.4m0 -5.4l-5.4 5.4M495 259.1l5.4 5.4m0 -5.4l-5.4 5.4M494.5 267.8l5.4 5.4m0 -5.4l-5.4 5.4M494.1 276.6l5.4 5.4m0 -5.4l-5.4 5.4M493.8 285.5l5.4 5.4m0 -5.4l-5.4 5.4M493.5 294.4l5.4 5.4m0 -5.4l-5.4 5.4M493.3 303.3l5.4 5.4m0 -5.4l-5.4 5.4M493.1 312.3l5.4 5.4m0 -5.4l-5.4 5.4M493 321.3l5.4 5.4m0 -5.4l-5.4 5.4M492.9 330.3l5.4 5.4m0 -5.4l-5.4 5.4M493 339.3l5.4 5.4m0 -5.4l-5.4 5.4M493 348.3l5.4 5.4m0 -5.4l-5.4 5.4M493.2 357.3l5.4 5.4m0 -5.4l-5.4 5.4M493.4 366.2l5.4 5.4m0 -5.4l-5.4 5.4M493.7 375.2l5.4 5.4m0 -5.4l-5.4 5.4M494 384l5.4 5.4m0 -5.4l-5.4 5.4M494.4 392.8l5.4 5.4m0 -5.4l-5.4 5.4M494.8 401.6l5.4 5.4m0 -5.4l-5.4 5.4M495.3 410.3l5.4 5.4m0 -5.4l-5.4 5.4M495.9 418.9l5.4 5.4m0 -5.4l-5.4 5.4M496.5 427.4l5.4 5.4m0 -5.4l-5.4 5.4M497.1 435.8l5.4 5.4m0 -5.4l-5.4 5.4M497.8 444.1l5.4 5.4m0 -5.4l-5.4 5.4M498.5 452.3l5.4 5.4m0 -5.4l-5.4 5.4M499.3 460.4l5.4 5.4m0 -5.4l-5.4 5.4M500 468.4l5.4 5.4m0 -5.4l-5.4 5.4M500.9 476.3l5.4 5.4m0 -5.4l-5.4 5.4M501.7 484.1l5.4 5.4m0 -5.4l-5.4 5.4M502.6 491.8l5.4 5.4m0 -5.4l-5.4 5.4M509.8 176.1l5.4 5.4m0 -5.4l-5.4 5.4M508.9 183.8l5.4 5.4m0 -5.4l-5.4 5.4M508.1 191.7l5.4 5.4m0 -5.4l-5.4 5.4M507.3 199.7l5.4 5.4m0 -5.4l-5.4 5.4M506.6 207.8l5.4 5.4m0 -5.4l-5.4 5.4M505.9 216l5.4 5.4m0 -5.4l-5.4 5.4M505.2 224.3l5.4 5.4m0 -5.4l-5.4 5.4M504.6 232.8l5.4 5.4m0 -5.4l-5.4 5.4M504 241.3l5.4 5.4m0 -5.4l-5.4 5.4M503.4 249.9l5.4 5.4m0 -5.4l-5.4 5.4M502.9 258.6l5.4 5.4m0 -5.4l-5.4 5.4M502.5 267.4l5.4 5.4m0 -5.4l-5.4 5.4M502.1 276.2l5.4 5.4m0 -5.4l-5.4 5.4M501.7 285.1l5.4 5.4m0 -5.4l-5.4 5.4M501.4 294.1l5.4 5.4m0 -5.4l-5.4 5.4M501.2 303.1l5.4 5.4m0 -5.4l-5.4 5.4M501.1 312.1l5.4 5.4m0 -5.4l-5.4 5.4M501 321.2l5.4 5.4m0 -5.4l-5.4 5.4M500.9 330.3l5.4 5.4m0 -5.4l-5.4 5.4M500.9 339.3l5.4 5.4m0 -5.4l-5.4 5.4M501 348.4l5.4 5.4m0 -5.4l-5.4 5.4M501.2 357.5l5.4 5.4m0 -5.4l-5.4 5.4M501.4 366.5l5.4 5.4m0 -5.4l-5.4 5.4M501.6 375.5l5.4 5.4m0 -5.4l-5.4 5.4M501.9 384.4l5.4 5.4m0 -5.4l-5.4 5.4M502.3 393.3l5.4 5.4m0 -5.4l-5.4 5.4M502.7 402.1l5.4 5.4m0 -5.4l-5.4 5.4M503.2 410.8l5.4 5.4m0 -5.4l-5.4 5.4M503.8 419.4l5.4 5.4m0 -5.4l-5.4 5.4M504.3 428l5.4 5.4m0 -5.4l-5.4 5.4M505 436.5l5.4 5.4m0 -5.4l-5.4 5.4M505.6 444.8l5.4 5.4m0 -5.4l-5.4 5.4M506.3 453.1l5.4 5.4m0 -5.4l-5.4 5.4M507.1 461.2l5.4 5.4m0 -5.4l-5.4 5.4M507.8 469.2l5.4 5.4m0 -5.4l-5.4 5.4M508.6 477.2l5.4 5.4m0 -5.4l-5.4 5.4M509.5 485l5.4 5.4m0 -5.4l-5.4 5.4M510.3 492.6l5.4 5.4m0 -5.4l-5.4 5.4M517.6 175.2l5.4 5.4m0 -5.4l-5.4 5.4M516.8 183l5.4 5.4m0 -5.4l-5.4 5.4M516 190.9l5.4 5.4m0 -5.4l-5.4 5.4M515.3 198.9l5.4 5.4m0 -5.4l-5.4 5.4M514.5 207.1l5.4 5.4m0 -5.4l-5.4 5.4M513.8 215.3l5.4 5.4m0 -5.4l-5.4 5.4M513.2 223.7l5.4 5.4m0 -5.4l-5.4 5.4M512.6 232.2l5.4 5.4m0 -5.4l-5.4 5.4M512 240.7l5.4 5.4m0 -5.4l-5.4 5.4M511.4 249.4l5.4 5.4m0 -5.4l-5.4 5.4M511 258.1l5.4 5.4m0 -5.4l-5.4 5.4M510.5 267l5.4 5.4m0 -5.4l-5.4 5.4M510.1 275.9l5.4 5.4m0 -5.4l-5.4 5.4M509.8 284.8l5.4 5.4m0 -5.4l-5.4 5.4M509.5 293.9l5.4 5.4m0 -5.4l-5.4 5.4M509.3 302.9l5.4 5.4m0 -5.4l-5.4 5.4M509.2 312l5.4 5.4m0 -5.4l-5.4 5.4M509.1 321.1l5.4 5.4m0 -5.4l-5.4 5.4M509 330.3l5.4 5.4m0 -5.4l-5.4 5.4M509.1 339.4l5.4 5.4m0 -5.4l-5.4 5.4M509.1 348.5l5.4 5.4m0 -5.4l-5.4 5.4M509.3 357.6l5.4 5.4m0 -5.4l-5.4 5.4M509.5 366.7l5.4 5.4m0 -5.4l-5.4 5.4M509.7 375.7l5.4 5.4m0 -5.4l-5.4 5.4M510 384.7l5.4 5.4m0 -5.4l-5.4 5.4M510.4 393.7l5.4 5.4m0 -5.4l-5.4 5.4M510.8 402.5l5.4 5.4m0 -5.4l-5.4 5.4M511.3 411.3l5.4 5.4m0 -5.4l-5.4 5.4M511.8 420l5.4 5.4m0 -5.4l-5.4 5.4M512.3 428.6l5.4 5.4m0 -5.4l-5.4 5.4M513 437.1l5.4 5.4m0 -5.4l-5.4 5.4M513.6 445.5l5.4 5.4m0 -5.4l-5.4 5.4M514.3 453.8l5.4 5.4m0 -5.4l-5.4 5.4M515 462l5.4 5.4m0 -5.4l-5.4 5.4M515.8 470l5.4 5.4m0 -5.4l-5.4 5.4M516.5 478l5.4 5.4m0 -5.4l-5.4 5.4M517.3 485.8l5.4 5.4m0 -5.4l-5.4 5.4M518.1 493.5l5.4 5.4m0 -5.4l-5.4 5.4M525.6 174.4l5.4 5.4m0 -5.4l-5.4 5.4M524.8 182.2l5.4 5.4m0 -5.4l-5.4 5.4M524.1 190.2l5.4 5.4m0 -5.4l-5.4 5.4M523.3 198.2l5.4 5.4m0 -5.4l-5.4 5.4M522.6 206.4l5.4 5.4m0 -5.4l-5.4 5.4M521.9 214.7l5.4 5.4m0 -5.4l-5.4 5.4M521.3 223.1l5.4 5.4m0 -5.4l-5.4 5.4M520.7 231.6l5.4 5.4m0 -5.4l-5.4 5.4M520.2 240.2l5.4 5.4m0 -5.4l-5.4 5.4M519.6 248.9l5.4 5.4m0 -5.4l-5.4 5.4M519.2 257.7l5.4 5.4m0 -5.4l-5.4 5.4M518.8 266.6l5.4 5.4m0 -5.4l-5.4 5.4M518.4 275.5l5.4 5.4m0 -5.4l-5.4 5.4M518.1 284.5l5.4 5.4m0 -5.4l-5.4 5.4M517.8 293.6l5.4 5.4m0 -5.4l-5.4 5.4M517.6 302.7l5.4 5.4m0 -5.4l-5.4 5.4M517.5 311.9l5.4 5.4m0 -5.4l-5.4 5.4M517.4 321.1l5.4 5.4m0 -5.4l-5.4 5.4M517.3 330.3l5.4 5.4m0 -5.4l-5.4 5.4M517.3 339.4l5.4 5.4m0 -5.4l-5.4 5.4M517.4 348.6l5.4 5.4m0 -5.4l-5.4 5.4M517.5 357.8l5.4 5.4m0 -5.4l-5.4 5.4M517.7 366.9l5.4 5.4m0 -5.4l-5.4 5.4M518 376l5.4 5.4m0 -5.4l-5.4 5.4M518.3 385.1l5.4 5.4m0 -5.4l-5.4 5.4M518.6 394l5.4 5.4m0 -5.4l-5.4 5.4M519 402.9l5.4 5.4m0 -5.4l-5.4 5.4M519.5 411.8l5.4 5.4m0 -5.4l-5.4 5.4M520 420.5l5.4 5.4m0 -5.4l-5.4 5.4M520.5 429.2l5.4 5.4m0 -5.4l-5.4 5.4M521.1 437.7l5.4 5.4m0 -5.4l-5.4 5.4M521.7 446.1l5.4 5.4m0 -5.4l-5.4 5.4M522.4 454.5l5.4 5.4m0 -5.4l-5.4 5.4M523.1 462.7l5.4 5.4m0 -5.4l-5.4 5.4M523.8 470.8l5.4 5.4m0 -5.4l-5.4 5.4M524.5 478.7l5.4 5.4m0 -5.4l-5.4 5.4M525.3 486.6l5.4 5.4m0 -5.4l-5.4 5.4M526.1 494.3l5.4 5.4m0 -5.4l-5.4 5.4M533.7 173.7l5.4 5.4m0 -5.4l-5.4 5.4M532.9 181.5l5.4 5.4m0 -5.4l-5.4 5.4M532.2 189.4l5.4 5.4m0 -5.4l-5.4 5.4M531.5 197.5l5.4 5.4m0 -5.4l-5.4 5.4M530.8 205.7l5.4 5.4m0 -5.4l-5.4 5.4M530.2 214l5.4 5.4m0 -5.4l-5.4 5.4M529.6 222.4l5.4 5.4m0 -5.4l-5.4 5.4M529 231l5.4 5.4m0 -5.4l-5.4 5.4M528.5 239.6l5.4 5.4m0 -5.4l-5.4 5.4M528 248.4l5.4 5.4m0 -5.4l-5.4 5.4M527.5 257.2l5.4 5.4m0 -5.4l-5.4 5.4M527.1 266.2l5.4 5.4m0 -5.4l-5.4 5.4M526.8 275.2l5.4 5.4m0 -5.4l-5.4 5.4M526.5 284.3l5.4 5.4m0 -5.4l-5.4 5.4M526.2 293.4l5.4 5.4m0 -5.4l-5.4 5.4M526 302.6l5.4 5.4m0 -5.4l-5.4 5.4M525.9 311.8l5.4 5.4m0 -5.4l-5.4 5.4M525.8 321l5.4 5.4m0 -5.4l-5.4 5.4M525.7 330.2l5.4 5.4m0 -5.4l-5.4 5.4M525.8 339.5l5.4 5.4m0 -5.4l-5.4 5.4M525.8 348.7l5.4 5.4m0 -5.4l-5.4 5.4M526 357.9l5.4 5.4m0 -5.4l-5.4 5.4M526.1 367.1l5.4 5.4m0 -5.4l-5.4 5.4M526.4 376.3l5.4 5.4m0 -5.4l-5.4 5.4M526.7 385.4l5.4 5.4m0 -5.4l-5.4 5.4M527 394.4l5.4 5.4m0 -5.4l-5.4 5.4M527.4 403.4l5.4 5.4m0 -5.4l-5.4 5.4M527.8 412.2l5.4 5.4m0 -5.4l-5.4 5.4M528.3 421l5.4 5.4m0 -5.4l-5.4 5.4M528.8 429.7l5.4 5.4m0 -5.4l-5.4 5.4M529.4 438.3l5.4 5.4m0 -5.4l-5.4 5.4M530 446.8l5.4 5.4m0 -5.4l-5.4 5.4M530.6 455.1l5.4 5.4m0 -5.4l-5.4 5.4M531.2 463.4l5.4 5.4m0 -5.4l-5.4 5.4M531.9 471.5l5.4 5.4m0 -5.4l-5.4 5.4M532.7 479.5l5.4 5.4m0 -5.4l-5.4 5.4M533.4 487.4l5.4 5.4m0 -5.4l-5.4 5.4M534.2 495.1l5.4 5.4m0 -5.4l-5.4 5.4M541.9 172.9l5.4 5.4m0 -5.4l-5.4 5.4M541.2 180.8l5.4 5.4m0 -5.4l-5.4 5.4M540.5 188.7l5.4 5.4m0 -5.4l-5.4 5.4M539.8 196.8l5.4 5.4m0 -5.4l-5.4 5.4M539.2 205l5.4 5.4m0 -5.4l-5.4 5.4M538.5 213.4l5.4 5.4m0 -5.4l-5.4 5.4M538 221.9l5.4 5.4m0 -5.4l-5.4 5.4M537.4 230.4l5.4 5.4m0 -5.4l-5.4 5.4M536.9 239.1l5.4 5.4m0 -5.4l-5.4 5.4M536.4 247.9l5.4 5.4m0 -5.4l-5.4 5.4M536 256.8l5.4 5.4m0 -5.4l-5.4 5.4M535.6 265.8l5.4 5.4m0 -5.4l-5.4 5.4M535.3 274.9l5.4 5.4m0 -5.4l-5.4 5.4M535 284l5.4 5.4m0 -5.4l-5.4 5.4M534.8 293.2l5.4 5.4m0 -5.4l-5.4 5.4M534.6 302.4l5.4 5.4m0 -5.4l-5.4 5.4M534.4 311.6l5.4 5.4m0 -5.4l-5.4 5.4M534.4 320.9l5.4 5.4m0 -5.4l-5.4 5.4M534.3 330.2l5.4 5.4m0 -5.4l-5.4 5.4M534.3 339.5l5.4 5.4m0 -5.4l-5.4 5.4M534.4 348.8l5.4 5.4m0 -5.4l-5.4 5.4M534.5 358.1l5.4 5.4m0 -5.4l-5.4 5.4M534.7 367.3l5.4 5.4m0 -5.4l-5.4 5.4M534.9 376.5l5.4 5.4m0 -5.4l-5.4 5.4M535.2 385.7l5.4 5.4m0 -5.4l-5.4 5.4M535.5 394.8l5.4 5.4m0 -5.4l-5.4 5.4M535.9 403.8l5.4 5.4m0 -5.4l-5.4 5.4M536.3 412.7l5.4 5.4m0 -5.4l-5.4 5.4M536.7 421.5l5.4 5.4m0 -5.4l-5.4 5.4M537.2 430.3l5.4 5.4m0 -5.4l-5.4 5.4M537.8 438.9l5.4 5.4m0 -5.4l-5.4 5.4M538.3 447.4l5.4 5.4m0 -5.4l-5.4 5.4M538.9 455.8l5.4 5.4m0 -5.4l-5.4 5.4M539.6 464l5.4 5.4m0 -5.4l-5.4 5.4M540.2 472.2l5.4 5.4m0 -5.4l-5.4 5.4M540.9 480.2l5.4 5.4m0 -5.4l-5.4 5.4M541.6 488.1l5.4 5.4m0 -5.4l-5.4 5.4M542.3 495.8l5.4 5.4m0 -5.4l-5.4 5.4M550.2 172.2l5.4 5.4m0 -5.4l-5.4 5.4M549.5 180.1l5.4 5.4m0 -5.4l-5.4 5.4M548.8 188.1l5.4 5.4m0 -5.4l-5.4 5.4M548.2 196.2l5.4 5.4m0 -5.4l-5.4 5.4M547.6 204.4l5.4 5.4m0 -5.4l-5.4 5.4M547 212.8l5.4 5.4m0 -5.4l-5.4 5.4M546.5 221.3l5.4 5.4m0 -5.4l-5.4 5.4M546 229.9l5.4 5.4m0 -5.4l-5.4 5.4M545.5 238.7l5.4 5.4m0 -5.4l-5.4 5.4M545 247.5l5.4 5.4m0 -5.4l-5.4 5.4M544.6 256.4l5.4 5.4m0 -5.4l-5.4 5.4M544.3 265.5l5.4 5.4m0 -5.4l-5.4 5.4M544 274.6l5.4 5.4m0 -5.4l-5.4 5.4M543.7 283.7l5.4 5.4m0 -5.4l-5.4 5.4M543.5 293l5.4 5.4m0 -5.4l-5.4 5.4M543.3 302.2l5.4 5.4m0 -5.4l-5.4 5.4M543.2 311.5l5.4 5.4m0 -5.4l-5.4 5.4M543.1 320.9l5.4 5.4m0 -5.4l-5.4 5.4M543.1 330.2l5.4 5.4m0 -5.4l-5.4 5.4M543.1 339.6l5.4 5.4m0 -5.4l-5.4 5.4M543.1 348.9l5.4 5.4m0 -5.4l-5.4 5.4M543.2 358.2l5.4 5.4m0 -5.4l-5.4 5.4M543.4 367.5l5.4 5.4m0 -5.4l-5.4 5.4M543.6 376.8l5.4 5.4m0 -5.4l-5.4 5.4M543.9 386l5.4 5.4m0 -5.4l-5.4 5.4M544.2 395.1l5.4 5.4m0 -5.4l-5.4 5.4M544.5 404.1l5.4 5.4m0 -5.4l-5.4 5.4M544.9 413.1l5.4 5.4m0 -5.4l-5.4 5.4M545.3 422l5.4 5.4m0 -5.4l-5.4 5.4M545.8 430.8l5.4 5.4m0 -5.4l-5.4 5.4M546.3 439.4l5.4 5.4m0 -5.4l-5.4 5.4M546.8 448l5.4 5.4m0 -5.4l-5.4 5.4M547.4 456.4l5.4 5.4m0 -5.4l-5.4 5.4M548 464.7l5.4 5.4m0 -5.4l-5.4 5.4M548.6 472.9l5.4 5.4m0 -5.4l-5.4 5.4M549.3 480.9l5.4 5.4m0 -5.4l-5.4 5.4M549.9 488.8l5.4 5.4m0 -5.4l-5.4 5.4M550.6 496.6l5.4 5.4m0 -5.4l-5.4 5.4M558.6 171.5l5.4 5.4m0 -5.4l-5.4 5.4M558 179.4l5.4 5.4m0 -5.4l-5.4 5.4M557.3 187.4l5.4 5.4m0 -5.4l-5.4 5.4M556.7 195.6l5.4 5.4m0 -5.4l-5.4 5.4M556.2 203.8l5.4 5.4m0 -5.4l-5.4 5.4M555.6 212.3l5.4 5.4m0 -5.4l-5.4 5.4M555.1 220.8l5.4 5.4m0 -5.4l-5.4 5.4M554.6 229.4l5.4 5.4m0 -5.4l-5.4 5.4M554.2 238.2l5.4 5.4m0 -5.4l-5.4 5.4M553.8 247.1l5.4 5.4m0 -5.4l-5.4 5.4M553.4 256.1l5.4 5.4m0 -5.4l-5.4 5.4M553.1 265.1l5.4 5.4m0 -5.4l-5.4 5.4M552.8 274.3l5.4 5.4m0 -5.4l-5.4 5.4M552.5 283.5l5.4 5.4m0 -5.4l-5.4 5.4M552.3 292.8l5.4 5.4m0 -5.4l-5.4 5.4M552.1 302.1l5.4 5.4m0 -5.4l-5.4 5.4M552 311.4l5.4 5.4m0 -5.4l-5.4 5.4M551.9 320.8l5.4 5.4m0 -5.4l-5.4 5.4M551.9 330.2l5.4 5.4m0 -5.4l-5.4 5.4M551.9 339.6l5.4 5.4m0 -5.4l-5.4 5.4M552 349l5.4 5.4m0 -5.4l-5.4 5.4M552.1 358.4l5.4 5.4m0 -5.4l-5.4 5.4M552.2 367.7l5.4 5.4m0 -5.4l-5.4 5.4M552.4 377l5.4 5.4m0 -5.4l-5.4 5.4M552.7 386.2l5.4 5.4m0 -5.4l-5.4 5.4M552.9 395.4l5.4 5.4m0 -5.4l-5.4 5.4M553.3 404.5l5.4 5.4m0 -5.4l-5.4 5.4M553.6 413.5l5.4 5.4m0 -5.4l-5.4 5.4M554 422.4l5.4 5.4m0 -5.4l-5.4 5.4M554.5 431.2l5.4 5.4m0 -5.4l-5.4 5.4M554.9 439.9l5.4 5.4m0 -5.4l-5.4 5.4M555.4 448.5l5.4 5.4m0 -5.4l-5.4 5.4M556 457l5.4 5.4m0 -5.4l-5.4 5.4M556.5 465.3l5.4 5.4m0 -5.4l-5.4 5.4M557.1 473.5l5.4 5.4m0 -5.4l-5.4 5.4M557.7 481.5l5.4 5.4m0 -5.4l-5.4 5.4M558.4 489.5l5.4 5.4m0 -5.4l-5.4 5.4M559 497.2l5.4 5.4m0 -5.4l-5.4 5.4M567.1 170.9l5.4 5.4m0 -5.4l-5.4 5.4M566.5 178.8l5.4 5.4m0 -5.4l-5.4 5.4M565.9 186.8l5.4 5.4m0 -5.4l-5.4 5.4M565.4 195l5.4 5.4m0 -5.4l-5.4 5.4M564.8 203.3l5.4 5.4m0 -5.4l-5.4 5.4M564.3 211.7l5.4 5.4m0 -5.4l-5.4 5.4M563.9 220.3l5.4 5.4m0 -5.4l-5.4 5.4M563.4 229l5.4 5.4m0 -5.4l-5.4 5.4M563 237.8l5.4 5.4m0 -5.4l-5.4 5.4M562.6 246.7l5.4 5.4m0 -5.4l-5.4 5.4M562.3 255.7l5.4 5.4m0 -5.4l-5.4 5.4M562 264.8l5.4 5.4m0 -5.4l-5.4 5.4M561.7 274l5.4 5.4m0 -5.4l-5.4 5.4M561.5 283.3l5.4 5.4m0 -5.4l-5.4 5.4M561.3 292.6l5.4 5.4m0 -5.4l-5.4 5.4M561.1 301.9l5.4 5.4m0 -5.4l-5.4 5.4M561 311.3l5.4 5.4m0 -5.4l-5.4 5.4M560.9 320.8l5.4 5.4m0 -5.4l-5.4 5.4M560.9 330.2l5.4 5.4m0 -5.4l-5.4 5.4M560.9 339.7l5.4 5.4m0 -5.4l-5.4 5.4M561 349.1l5.4 5.4m0 -5.4l-5.4 5.4M561.1 358.5l5.4 5.4m0 -5.4l-5.4 5.4M561.2 367.9l5.4 5.4m0 -5.4l-5.4 5.4M561.4 377.2l5.4 5.4m0 -5.4l-5.4 5.4M561.6 386.5l5.4 5.4m0 -5.4l-5.4 5.4M561.9 395.7l5.4 5.4m0 -5.4l-5.4 5.4M562.2 404.8l5.4 5.4m0 -5.4l-5.4 5.4M562.5 413.9l5.4 5.4m0 -5.4l-5.4 5.4M562.9 422.8l5.4 5.4m0 -5.4l-5.4 5.4M563.3 431.7l5.4 5.4m0 -5.4l-5.4 5.4M563.7 440.4l5.4 5.4m0 -5.4l-5.4 5.4M564.2 449l5.4 5.4m0 -5.4l-5.4 5.4M564.7 457.5l5.4 5.4m0 -5.4l-5.4 5.4M565.2 465.8l5.4 5.4m0 -5.4l-5.4 5.4M565.7 474.1l5.4 5.4m0 -5.4l-5.4 5.4M566.3 482.1l5.4 5.4m0 -5.4l-5.4 5.4M566.9 490.1l5.4 5.4m0 -5.4l-5.4 5.4M567.5 497.9l5.4 5.4m0 -5.4l-5.4 5.4M575.7 170.3l5.4 5.4m0 -5.4l-5.4 5.4M575.2 178.2l5.4 5.4m0 -5.4l-5.4 5.4M574.6 186.3l5.4 5.4m0 -5.4l-5.4 5.4M574.1 194.5l5.4 5.4m0 -5.4l-5.4 5.4M573.6 202.8l5.4 5.4m0 -5.4l-5.4 5.4M573.2 211.3l5.4 5.4m0 -5.4l-5.4 5.4M572.7 219.9l5.4 5.4m0 -5.4l-5.4 5.4M572.3 228.6l5.4 5.4m0 -5.4l-5.4 5.4M571.9 237.4l5.4 5.4m0 -5.4l-5.4 5.4M571.6 246.4l5.4 5.4m0 -5.4l-5.4 5.4M571.3 255.4l5.4 5.4m0 -5.4l-5.4 5.4M571 264.5l5.4 5.4m0 -5.4l-5.4 5.4M570.7 273.8l5.4 5.4m0 -5.4l-5.4 5.4M570.5 283.1l5.4 5.4m0 -5.4l-5.4 5.4M570.3 292.4l5.4 5.4m0 -5.4l-5.4 5.4M570.2 301.8l5.4 5.4m0 -5.4l-5.4 5.4M570.1 311.3l5.4 5.4m0 -5.4l-5.4 5.4M570 320.7l5.4 5.4m0 -5.4l-5.4 5.4M570 330.2l5.4 5.4m0 -5.4l-5.4 5.4M570 339.7l5.4 5.4m0 -5.4l-5.4 5.4M570.1 349.2l5.4 5.4m0 -5.4l-5.4 5.4M570.2 358.6l5.4 5.4m0 -5.4l-5.4 5.4M570.3 368l5.4 5.4m0 -5.4l-5.4 5.4M570.5 377.4l5.4 5.4m0 -5.4l-5.4 5.4M570.7 386.7l5.4 5.4m0 -5.4l-5.4 5.4M570.9 396l5.4 5.4m0 -5.4l-5.4 5.4M571.2 405.1l5.4 5.4m0 -5.4l-5.4 5.4M571.5 414.2l5.4 5.4m0 -5.4l-5.4 5.4M571.8 423.2l5.4 5.4m0 -5.4l-5.4 5.4M572.2 432.1l5.4 5.4m0 -5.4l-5.4 5.4M572.6 440.8l5.4 5.4m0 -5.4l-5.4 5.4M573 449.5l5.4 5.4m0 -5.4l-5.4 5.4M573.5 458l5.4 5.4m0 -5.4l-5.4 5.4M573.9 466.4l5.4 5.4m0 -5.4l-5.4 5.4M574.4 474.6l5.4 5.4m0 -5.4l-5.4 5.4M575 482.7l5.4 5.4m0 -5.4l-5.4 5.4M575.5 490.7l5.4 5.4m0 -5.4l-5.4 5.4M576.1 498.5l5.4 5.4m0 -5.4l-5.4 5.4M584.4 169.8l5.4 5.4m0 -5.4l-5.4 5.4M583.9 177.7l5.4 5.4m0 -5.4l-5.4 5.4M583.4 185.8l5.4 5.4m0 -5.4l-5.4 5.4M583 194l5.4 5.4m0 -5.4l-5.4 5.4M582.5 202.4l5.4 5.4m0 -5.4l-5.4 5.4M582.1 210.8l5.4 5.4m0 -5.4l-5.4 5.4M581.7 219.5l5.4 5.4m0 -5.4l-5.4 5.4M581.3 228.2l5.4 5.4m0 -5.4l-5.4 5.4M581 237.1l5.4 5.4m0 -5.4l-5.4 5.4M580.7 246l5.4 5.4m0 -5.4l-5.4 5.4M580.4 255.1l5.4 5.4m0 -5.4l-5.4 5.4M580.1 264.3l5.4 5.4m0 -5.4l-5.4 5.4M579.9 273.5l5.4 5.4m0 -5.4l-5.4 5.4M579.7 282.9l5.4 5.4m0 -5.4l-5.4 5.4M579.5 292.3l5.4 5.4m0 -5.4l-5.4 5.4M579.4 301.7l5.4 5.4m0 -5.4l-5.4 5.4M579.3 311.2l5.4 5.4m0 -5.4l-5.4 5.4M579.3 320.7l5.4 5.4m0 -5.4l-5.4 5.4M579.2 330.2l5.4 5.4m0 -5.4l-5.4 5.4M579.2 339.7l5.4 5.4m0 -5.4l-5.4 5.4M579.3 349.2l5.4 5.4m0 -5.4l-5.4 5.4M579.4 358.7l5.4 5.4m0 -5.4l-5.4 5.4M579.5 368.2l5.4 5.4m0 -5.4l-5.4 5.4M579.6 377.6l5.4 5.4m0 -5.4l-5.4 5.4M579.8 386.9l5.4 5.4m0 -5.4l-5.4 5.4M580 396.2l5.4 5.4m0 -5.4l-5.4 5.4M580.3 405.4l5.4 5.4m0 -5.4l-5.4 5.4M580.6 414.5l5.4 5.4m0 -5.4l-5.4 5.4M580.9 423.5l5.4 5.4m0 -5.4l-5.4 5.4M581.2 432.4l5.4 5.4m0 -5.4l-5.4 5.4M581.6 441.2l5.4 5.4m0 -5.4l-5.4 5.4M581.9 449.9l5.4 5.4m0 -5.4l-5.4 5.4M582.4 458.4l5.4 5.4m0 -5.4l-5.4 5.4M582.8 466.8l5.4 5.4m0 -5.4l-5.4 5.4M583.2 475.1l5.4 5.4m0 -5.4l-5.4 5.4M583.7 483.2l5.4 5.4m0 -5.4l-5.4 5.4M584.2 491.2l5.4 5.4m0 -5.4l-5.4 5.4M584.7 499l5.4 5.4m0 -5.4l-5.4 5.4M593.2 169.3l5.4 5.4m0 -5.4l-5.4 5.4M592.7 177.3l5.4 5.4m0 -5.4l-5.4 5.4M592.3 185.3l5.4 5.4m0 -5.4l-5.4 5.4M591.9 193.6l5.4 5.4m0 -5.4l-5.4 5.4M591.5 201.9l5.4 5.4m0 -5.4l-5.4 5.4M591.1 210.4l5.4 5.4m0 -5.4l-5.4 5.4M590.8 219.1l5.4 5.4m0 -5.4l-5.4 5.4M590.4 227.9l5.4 5.4m0 -5.4l-5.4 5.4M590.1 236.7l5.4 5.4m0 -5.4l-5.4 5.4M589.8 245.8l5.4 5.4m0 -5.4l-5.4 5.4M589.6 254.9l5.4 5.4m0 -5.4l-5.4 5.4M589.3 264.1l5.4 5.4m0 -5.4l-5.4 5.4M589.1 273.3l5.4 5.4m0 -5.4l-5.4 5.4M589 282.7l5.4 5.4m0 -5.4l-5.4 5.4M588.8 292.1l5.4 5.4m0 -5.4l-5.4 5.4M588.7 301.6l5.4 5.4m0 -5.4l-5.4 5.4M588.6 311.1l5.4 5.4m0 -5.4l-5.4 5.4M588.6 320.6l5.4 5.4m0 -5.4l-5.4 5.4M588.6 330.2l5.4 5.4m0 -5.4l-5.4 5.4M588.6 339.7l5.4 5.4m0 -5.4l-5.4 5.4M588.6 349.3l5.4 5.4m0 -5.4l-5.4 5.4M588.7 358.8l5.4 5.4m0 -5.4l-5.4 5.4M588.8 368.3l5.4 5.4m0 -5.4l-5.4 5.4M588.9 377.7l5.4 5.4m0 -5.4l-5.4 5.4M589.1 387.1l5.4 5.4m0 -5.4l-5.4 5.4M589.3 396.4l5.4 5.4m0 -5.4l-5.4 5.4M589.5 405.7l5.4 5.4m0 -5.4l-5.4 5.4M589.7 414.8l5.4 5.4m0 -5.4l-5.4 5.4M590 423.8l5.4 5.4m0 -5.4l-5.4 5.4M590.3 432.8l5.4 5.4m0 -5.4l-5.4 5.4M590.6 441.6l5.4 5.4m0 -5.4l-5.4 5.4M591 450.3l5.4 5.4m0 -5.4l-5.4 5.4M591.3 458.8l5.4 5.4m0 -5.4l-5.4 5.4M591.7 467.2l5.4 5.4m0 -5.4l-5.4 5.4M592.1 475.5l5.4 5.4m0 -5.4l-5.4 5.4M592.6 483.7l5.4 5.4m0 -5.4l-5.4 5.4M593 491.6l5.4 5.4m0 -5.4l-5.4 5.4M593.4 499.5l5.4 5.4m0 -5.4l-5.4 5.4M602 168.9l5.4 5.4m0 -5.4l-5.4 5.4M601.6 176.9l5.4 5.4m0 -5.4l-5.4 5.4M601.2 185l5.4 5.4m0 -5.4l-5.4 5.4M600.9 193.2l5.4 5.4m0 -5.4l-5.4 5.4M600.5 201.6l5.4 5.4m0 -5.4l-5.4 5.4M600.2 210.1l5.4 5.4m0 -5.4l-5.4 5.4M599.9 218.8l5.4 5.4m0 -5.4l-5.4 5.4M599.6 227.6l5.4 5.4m0 -5.4l-5.4 5.4M599.3 236.5l5.4 5.4m0 -5.4l-5.4 5.4M599.1 245.5l5.4 5.4m0 -5.4l-5.4 5.4M598.9 254.6l5.4 5.4m0 -5.4l-5.4 5.4M598.7 263.9l5.4 5.4m0 -5.4l-5.4 5.4M598.5 273.2l5.4 5.4m0 -5.4l-5.4 5.4M598.3 282.5l5.4 5.4m0 -5.4l-5.4 5.4M598.2 292l5.4 5.4m0 -5.4l-5.4 5.4M598.1 301.5l5.4 5.4m0 -5.4l-5.4 5.4M598 311l5.4 5.4m0 -5.4l-5.4 5.4M598 320.6l5.4 5.4m0 -5.4l-5.4 5.4M598 330.2l5.4 5.4m0 -5.4l-5.4 5.4M598 339.8l5.4 5.4m0 -5.4l-5.4 5.4M598 349.3l5.4 5.4m0 -5.4l-5.4 5.4M598.1 358.9l5.4 5.4m0 -5.4l-5.4 5.4M598.2 368.4l5.4 5.4m0 -5.4l-5.4 5.4M598.3 377.9l5.4 5.4m0 -5.4l-5.4 5.4M598.4 387.3l5.4 5.4m0 -5.4l-5.4 5.4M598.6 396.6l5.4 5.4m0 -5.4l-5.4 5.4M598.8 405.9l5.4 5.4m0 -5.4l-5.4 5.4M599 415l5.4 5.4m0 -5.4l-5.4 5.4M599.2 424.1l5.4 5.4m0 -5.4l-5.4 5.4M599.5 433.1l5.4 5.4m0 -5.4l-5.4 5.4M599.8 441.9l5.4 5.4m0 -5.4l-5.4 5.4M600.1 450.6l5.4 5.4m0 -5.4l-5.4 5.4M600.4 459.2l5.4 5.4m0 -5.4l-5.4 5.4M600.7 467.6l5.4 5.4m0 -5.4l-5.4 5.4M601.1 475.9l5.4 5.4m0 -5.4l-5.4 5.4M601.5 484.1l5.4 5.4m0 -5.4l-5.4 5.4M601.9 492.1l5.4 5.4m0 -5.4l-5.4 5.4M602.2 499.9l5.4 5.4m0 -5.4l-5.4 5.4M610.9 168.5l5.4 5.4m0 -5.4l-5.4 5.4M610.6 176.5l5.4 5.4m0 -5.4l-5.4 5.4M610.3 184.6l5.4 5.4m0 -5.4l-5.4 5.4M609.9 192.9l5.4 5.4m0 -5.4l-5.4 5.4M609.7 201.3l5.4 5.4m0 -5.4l-5.4 5.4M609.4 209.8l5.4 5.4m0 -5.4l-5.4 5.4M609.1 218.5l5.4 5.4m0 -5.4l-5.4 5.4M608.9 227.3l5.4 5.4m0 -5.4l-5.4 5.4M608.6 236.2l5.4 5.4m0 -5.4l-5.4 5.4M608.4 245.3l5.4 5.4m0 -5.4l-5.4 5.4M608.2 254.4l5.4 5.4m0 -5.4l-5.4 5.4M608.1 263.7l5.4 5.4m0 -5.4l-5.4 5.4M607.9 273l5.4 5.4m0 -5.4l-5.4 5.4M607.8 282.4l5.4 5.4m0 -5.4l-5.4 5.4M607.7 291.9l5.4 5.4m0 -5.4l-5.4 5.4M607.6 301.4l5.4 5.4m0 -5.4l-5.4 5.4M607.5 311l5.4 5.4m0 -5.4l-5.4 5.4M607.5 320.6l5.4 5.4m0 -5.4l-5.4 5.4M607.5 330.2l5.4 5.4m0 -5.4l-5.4 5.4M607.5 339.8l5.4 5.4m0 -5.4l-5.4 5.4M607.5 349.4l5.4 5.4m0 -5.4l-5.4 5.4M607.6 359l5.4 5.4m0 -5.4l-5.4 5.4M607.6 368.5l5.4 5.4m0 -5.4l-5.4 5.4M607.7 378l5.4 5.4m0 -5.4l-5.4 5.4M607.9 387.4l5.4 5.4m0 -5.4l-5.4 5.4M608 396.8l5.4 5.4m0 -5.4l-5.4 5.4M608.2 406.1l5.4 5.4m0 -5.4l-5.4 5.4M608.3 415.3l5.4 5.4m0 -5.4l-5.4 5.4M608.6 424.3l5.4 5.4m0 -5.4l-5.4 5.4M608.8 433.3l5.4 5.4m0 -5.4l-5.4 5.4M609 442.2l5.4 5.4m0 -5.4l-5.4 5.4M609.3 450.9l5.4 5.4m0 -5.4l-5.4 5.4M609.5 459.5l5.4 5.4m0 -5.4l-5.4 5.4M609.8 467.9l5.4 5.4m0 -5.4l-5.4 5.4M610.1 476.3l5.4 5.4m0 -5.4l-5.4 5.4M610.5 484.4l5.4 5.4m0 -5.4l-5.4 5.4M610.8 492.4l5.4 5.4m0 -5.4l-5.4 5.4M611.1 500.3l5.4 5.4m0 -5.4l-5.4 5.4M619.9 168.2l5.4 5.4m0 -5.4l-5.4 5.4M619.6 176.2l5.4 5.4m0 -5.4l-5.4 5.4M619.3 184.3l5.4 5.4m0 -5.4l-5.4 5.4M619.1 192.6l5.4 5.4m0 -5.4l-5.4 5.4M618.8 201l5.4 5.4m0 -5.4l-5.4 5.4M618.6 209.6l5.4 5.4m0 -5.4l-5.4 5.4M618.4 218.3l5.4 5.4m0 -5.4l-5.4 5.4M618.2 227.1l5.4 5.4m0 -5.4l-5.4 5.4M618 236l5.4 5.4m0 -5.4l-5.4 5.4M617.8 245.1l5.4 5.4m0 -5.4l-5.4 5.4M617.7 254.3l5.4 5.4m0 -5.4l-5.4 5.4M617.5 263.5l5.4 5.4m0 -5.4l-5.4 5.4M617.4 272.9l5.4 5.4m0 -5.4l-5.4 5.4M617.3 282.3l5.4 5.4m0 -5.4l-5.4 5.4M617.2 291.8l5.4 5.4m0 -5.4l-5.4 5.4M617.1 301.3l5.4 5.4m0 -5.4l-5.4 5.4M617.1 310.9l5.4 5.4m0 -5.4l-5.4 5.4M617.1 320.5l5.4 5.4m0 -5.4l-5.4 5.4M617 330.2l5.4 5.4m0 -5.4l-5.4 5.4M617 339.8l5.4 5.4m0 -5.4l-5.4 5.4M617.1 349.4l5.4 5.4m0 -5.4l-5.4 5.4M617.1 359l5.4 5.4m0 -5.4l-5.4 5.4M617.2 368.6l5.4 5.4m0 -5.4l-5.4 5.4M617.3 378.1l5.4 5.4m0 -5.4l-5.4 5.4M617.4 387.5l5.4 5.4m0 -5.4l-5.4 5.4M617.5 396.9l5.4 5.4m0 -5.4l-5.4 5.4M617.6 406.2l5.4 5.4m0 -5.4l-5.4 5.4M617.8 415.4l5.4 5.4m0 -5.4l-5.4 5.4M617.9 424.5l5.4 5.4m0 -5.4l-5.4 5.4M618.1 433.5l5.4 5.4m0 -5.4l-5.4 5.4M618.3 442.4l5.4 5.4m0 -5.4l-5.4 5.4M618.5 451.1l5.4 5.4m0 -5.4l-5.4 5.4M618.7 459.7l5.4 5.4m0 -5.4l-5.4 5.4M619 468.2l5.4 5.4m0 -5.4l-5.4 5.4M619.2 476.5l5.4 5.4m0 -5.4l-5.4 5.4M619.5 484.7l5.4 5.4m0 -5.4l-5.4 5.4M619.8 492.7l5.4 5.4m0 -5.4l-5.4 5.4M620 500.6l5.4 5.4m0 -5.4l-5.4 5.4M628.9 168l5.4 5.4m0 -5.4l-5.4 5.4M628.7 176l5.4 5.4m0 -5.4l-5.4 5.4M628.4 184.1l5.4 5.4m0 -5.4l-5.4 5.4M628.3 192.4l5.4 5.4m0 -5.4l-5.4 5.4M628.1 200.8l5.4 5.4m0 -5.4l-5.4 5.4M627.9 209.4l5.4 5.4m0 -5.4l-5.4 5.4M627.7 218.1l5.4 5.4m0 -5.4l-5.4 5.4M627.6 226.9l5.4 5.4m0 -5.4l-5.4 5.4M627.4 235.9l5.4 5.4m0 -5.4l-5.4 5.4M627.3 244.9l5.4 5.4m0 -5.4l-5.4 5.4M627.1 254.1l5.4 5.4m0 -5.4l-5.4 5.4M627 263.4l5.4 5.4m0 -5.4l-5.4 5.4M626.9 272.8l5.4 5.4m0 -5.4l-5.4 5.4M626.9 282.2l5.4 5.4m0 -5.4l-5.4 5.4M626.8 291.7l5.4 5.4m0 -5.4l-5.4 5.4M626.7 301.3l5.4 5.4m0 -5.4l-5.4 5.4M626.7 310.9l5.4 5.4m0 -5.4l-5.4 5.4M626.7 320.5l5.4 5.4m0 -5.4l-5.4 5.4M626.7 330.2l5.4 5.4m0 -5.4l-5.4 5.4M626.7 339.8l5.4 5.4m0 -5.4l-5.4 5.4M626.7 349.5l5.4 5.4m0 -5.4l-5.4 5.4M626.7 359.1l5.4 5.4m0 -5.4l-5.4 5.4M626.8 368.6l5.4 5.4m0 -5.4l-5.4 5.4M626.8 378.2l5.4 5.4m0 -5.4l-5.4 5.4M626.9 387.6l5.4 5.4m0 -5.4l-5.4 5.4M627 397l5.4 5.4m0 -5.4l-5.4 5.4M627.1 406.4l5.4 5.4m0 -5.4l-5.4 5.4M627.2 415.6l5.4 5.4m0 -5.4l-5.4 5.4M627.4 424.7l5.4 5.4m0 -5.4l-5.4 5.4M627.5 433.7l5.4 5.4m0 -5.4l-5.4 5.4M627.7 442.6l5.4 5.4m0 -5.4l-5.4 5.4M627.8 451.3l5.4 5.4m0 -5.4l-5.4 5.4M628 460l5.4 5.4m0 -5.4l-5.4 5.4M628.2 468.4l5.4 5.4m0 -5.4l-5.4 5.4M628.4 476.8l5.4 5.4m0 -5.4l-5.4 5.4M628.6 484.9l5.4 5.4m0 -5.4l-5.4 5.4M628.8 493l5.4 5.4m0 -5.4l-5.4 5.4M629 500.8l5.4 5.4m0 -5.4l-5.4 5.4M637.9 167.8l5.4 5.4m0 -5.4l-5.4 5.4M637.8 175.8l5.4 5.4m0 -5.4l-5.4 5.4M637.6 183.9l5.4 5.4m0 -5.4l-5.4 5.4M637.5 192.2l5.4 5.4m0 -5.4l-5.4 5.4M637.3 200.6l5.4 5.4m0 -5.4l-5.4 5.4M637.2 209.2l5.4 5.4m0 -5.4l-5.4 5.4M637.1 217.9l5.4 5.4m0 -5.4l-5.4 5.4M637 226.8l5.4 5.4m0 -5.4l-5.4 5.4M636.9 235.7l5.4 5.4m0 -5.4l-5.4 5.4M636.8 244.8l5.4 5.4m0 -5.4l-5.4 5.4M636.7 254l5.4 5.4m0 -5.4l-5.4 5.4M636.6 263.3l5.4 5.4m0 -5.4l-5.4 5.4M636.5 272.7l5.4 5.4m0 -5.4l-5.4 5.4M636.5 282.2l5.4 5.4m0 -5.4l-5.4 5.4M636.4 291.7l5.4 5.4m0 -5.4l-5.4 5.4M636.4 301.3l5.4 5.4m0 -5.4l-5.4 5.4M636.4 310.9l5.4 5.4m0 -5.4l-5.4 5.4M636.3 320.5l5.4 5.4m0 -5.4l-5.4 5.4M636.3 330.2l5.4 5.4m0 -5.4l-5.4 5.4M636.3 339.8l5.4 5.4m0 -5.4l-5.4 5.4M636.3 349.5l5.4 5.4m0 -5.4l-5.4 5.4M636.4 359.1l5.4 5.4m0 -5.4l-5.4 5.4M636.4 368.7l5.4 5.4m0 -5.4l-5.4 5.4M636.5 378.2l5.4 5.4m0 -5.4l-5.4 5.4M636.5 387.7l5.4 5.4m0 -5.4l-5.4 5.4M636.6 397.1l5.4 5.4m0 -5.4l-5.4 5.4M636.6 406.5l5.4 5.4m0 -5.4l-5.4 5.4M636.7 415.7l5.4 5.4m0 -5.4l-5.4 5.4M636.8 424.8l5.4 5.4m0 -5.4l-5.4 5.4M636.9 433.8l5.4 5.4m0 -5.4l-5.4 5.4M637 442.7l5.4 5.4m0 -5.4l-5.4 5.4M637.2 451.5l5.4 5.4m0 -5.4l-5.4 5.4M637.3 460.1l5.4 5.4m0 -5.4l-5.4 5.4M637.4 468.6l5.4 5.4m0 -5.4l-5.4 5.4M637.6 476.9l5.4 5.4m0 -5.4l-5.4 5.4M637.7 485.1l5.4 5.4m0 -5.4l-5.4 5.4M637.8 493.2l5.4 5.4m0 -5.4l-5.4 5.4M638 501l5.4 5.4m0 -5.4l-5.4 5.4M647 167.7l5.4 5.4m0 -5.4l-5.4 5.4M646.9 175.7l5.4 5.4m0 -5.4l-5.4 5.4M646.8 183.8l5.4 5.4m0 -5.4l-5.4 5.4M646.7 192.1l5.4 5.4m0 -5.4l-5.4 5.4M646.6 200.5l5.4 5.4m0 -5.4l-5.4 5.4M646.6 209.1l5.4 5.4m0 -5.4l-5.4 5.4M646.5 217.8l5.4 5.4m0 -5.4l-5.4 5.4M646.4 226.7l5.4 5.4m0 -5.4l-5.4 5.4M646.3 235.7l5.4 5.4m0 -5.4l-5.4 5.4M646.3 244.8l5.4 5.4m0 -5.4l-5.4 5.4M646.2 254l5.4 5.4m0 -5.4l-5.4 5.4M646.2 263.3l5.4 5.4m0 -5.4l-5.4 5.4M646.2 272.7l5.4 5.4m0 -5.4l-5.4 5.4M646.1 282.1l5.4 5.4m0 -5.4l-5.4 5.4M646.1 291.6l5.4 5.4m0 -5.4l-5.4 5.4M646.1 301.2l5.4 5.4m0 -5.4l-5.4 5.4M646 310.9l5.4 5.4m0 -5.4l-5.4 5.4M646 320.5l5.4 5.4m0 -5.4l-5.4 5.4M646 330.2l5.4 5.4m0 -5.4l-5.4 5.4M646 339.8l5.4 5.4m0 -5.4l-5.4 5.4M646 349.5l5.4 5.4m0 -5.4l-5.4 5.4M646.1 359.1l5.4 5.4m0 -5.4l-5.4 5.4M646.1 368.7l5.4 5.4m0 -5.4l-5.4 5.4M646.1 378.3l5.4 5.4m0 -5.4l-5.4 5.4M646.1 387.8l5.4 5.4m0 -5.4l-5.4 5.4M646.2 397.2l5.4 5.4m0 -5.4l-5.4 5.4M646.2 406.5l5.4 5.4m0 -5.4l-5.4 5.4M646.3 415.8l5.4 5.4m0 -5.4l-5.4 5.4M646.3 424.9l5.4 5.4m0 -5.4l-5.4 5.4M646.4 433.9l5.4 5.4m0 -5.4l-5.4 5.4M646.5 442.8l5.4 5.4m0 -5.4l-5.4 5.4M646.5 451.6l5.4 5.4m0 -5.4l-5.4 5.4M646.6 460.2l5.4 5.4m0 -5.4l-5.4 5.4M646.7 468.7l5.4 5.4m0 -5.4l-5.4 5.4M646.8 477l5.4 5.4m0 -5.4l-5.4 5.4M646.8 485.2l5.4 5.4m0 -5.4l-5.4 5.4M646.9 493.3l5.4 5.4m0 -5.4l-5.4 5.4M647 501.2l5.4 5.4m0 -5.4l-5.4 5.4M656.1 167.6l5.4 5.4m0 -5.4l-5.4 5.4M656 175.6l5.4 5.4m0 -5.4l-5.4 5.4M656 183.7l5.4 5.4m0 -5.4l-5.4 5.4M656 192l5.4 5.4m0 -5.4l-5.4 5.4M655.9 200.5l5.4 5.4m0 -5.4l-5.4 5.4M655.9 209.1l5.4 5.4m0 -5.4l-5.4 5.4M655.9 217.8l5.4 5.4m0 -5.4l-5.4 5.4M655.9 226.6l5.4 5.4m0 -5.4l-5.4 5.4M655.9 235.6l5.4 5.4m0 -5.4l-5.4 5.4M655.8 244.7l5.4 5.4m0 -5.4l-5.4 5.4M655.8 253.9l5.4 5.4m0 -5.4l-5.4 5.4M655.8 263.2l5.4 5.4m0 -5.4l-5.4 5.4M655.8 272.6l5.4 5.4m0 -5.4l-5.4 5.4M655.8 282.1l5.4 5.4m0 -5.4l-5.4 5.4M655.8 291.6l5.4 5.4m0 -5.4l-5.4 5.4M655.8 301.2l5.4 5.4m0 -5.4l-5.4 5.4M655.8 310.8l5.4 5.4m0 -5.4l-5.4 5.4M655.8 320.5l5.4 5.4m0 -5.4l-5.4 5.4M655.8 330.2l5.4 5.4m0 -5.4l-5.4 5.4M655.8 339.8l5.4 5.4m0 -5.4l-5.4 5.4M655.8 349.5l5.4 5.4m0 -5.4l-5.4 5.4M655.8 359.1l5.4 5.4m0 -5.4l-5.4 5.4M655.8 368.7l5.4 5.4m0 -5.4l-5.4 5.4M655.8 378.3l5.4 5.4m0 -5.4l-5.4 5.4M655.8 387.8l5.4 5.4m0 -5.4l-5.4 5.4M655.8 397.2l5.4 5.4m0 -5.4l-5.4 5.4M655.8 406.5l5.4 5.4m0 -5.4l-5.4 5.4M655.8 415.8l5.4 5.4m0 -5.4l-5.4 5.4M655.8 424.9l5.4 5.4m0 -5.4l-5.4 5.4M655.9 434l5.4 5.4m0 -5.4l-5.4 5.4M655.9 442.9l5.4 5.4m0 -5.4l-5.4 5.4M655.9 451.6l5.4 5.4m0 -5.4l-5.4 5.4M655.9 460.3l5.4 5.4m0 -5.4l-5.4 5.4M656 468.8l5.4 5.4m0 -5.4l-5.4 5.4M656 477.1l5.4 5.4m0 -5.4l-5.4 5.4M656 485.3l5.4 5.4m0 -5.4l-5.4 5.4M656 493.3l5.4 5.4m0 -5.4l-5.4 5.4M656.1 501.2l5.4 5.4m0 -5.4l-5.4 5.4M665.1 167.6l5.4 5.4m0 -5.4l-5.4 5.4M665.2 175.6l5.4 5.4m0 -5.4l-5.4 5.4M665.2 183.7l5.4 5.4m0 -5.4l-5.4 5.4M665.2 192l5.4 5.4m0 -5.4l-5.4 5.4M665.3 200.5l5.4 5.4m0 -5.4l-5.4 5.4M665.3 209.1l5.4 5.4m0 -5.4l-5.4 5.4M665.3 217.8l5.4 5.4m0 -5.4l-5.4 5.4M665.3 226.6l5.4 5.4m0 -5.4l-5.4 5.4M665.4 235.6l5.4 5.4m0 -5.4l-5.4 5.4M665.4 244.7l5.4 5.4m0 -5.4l-5.4 5.4M665.4 253.9l5.4 5.4m0 -5.4l-5.4 5.4M665.4 263.2l5.4 5.4m0 -5.4l-5.4 5.4M665.4 272.6l5.4 5.4m0 -5.4l-5.4 5.4M665.4 282.1l5.4 5.4m0 -5.4l-5.4 5.4M665.5 291.6l5.4 5.4m0 -5.4l-5.4 5.4M665.5 301.2l5.4 5.4m0 -5.4l-5.4 5.4M665.5 310.8l5.4 5.4m0 -5.4l-5.4 5.4M665.5 320.5l5.4 5.4m0 -5.4l-5.4 5.4M665.5 330.2l5.4 5.4m0 -5.4l-5.4 5.4M665.5 339.8l5.4 5.4m0 -5.4l-5.4 5.4M665.5 349.5l5.4 5.4m0 -5.4l-5.4 5.4M665.5 359.1l5.4 5.4m0 -5.4l-5.4 5.4M665.5 368.7l5.4 5.4m0 -5.4l-5.4 5.4M665.5 378.3l5.4 5.4m0 -5.4l-5.4 5.4M665.4 387.8l5.4 5.4m0 -5.4l-5.4 5.4M665.4 397.2l5.4 5.4m0 -5.4l-5.4 5.4M665.4 406.5l5.4 5.4m0 -5.4l-5.4 5.4M665.4 415.8l5.4 5.4m0 -5.4l-5.4 5.4M665.4 424.9l5.4 5.4m0 -5.4l-5.4 5.4M665.3 434l5.4 5.4m0 -5.4l-5.4 5.4M665.3 442.9l5.4 5.4m0 -5.4l-5.4 5.4M665.3 451.6l5.4 5.4m0 -5.4l-5.4 5.4M665.3 460.3l5.4 5.4m0 -5.4l-5.4 5.4M665.2 468.8l5.4 5.4m0 -5.4l-5.4 5.4M665.2 477.1l5.4 5.4m0 -5.4l-5.4 5.4M665.2 485.3l5.4 5.4m0 -5.4l-5.4 5.4M665.2 493.3l5.4 5.4m0 -5.4l-5.4 5.4M665.1 501.2l5.4 5.4m0 -5.4l-5.4 5.4M674.2 167.7l5.4 5.4m0 -5.4l-5.4 5.4M674.3 175.7l5.4 5.4m0 -5.4l-5.4 5.4M674.4 183.8l5.4 5.4m0 -5.4l-5.4 5.4M674.5 192.1l5.4 5.4m0 -5.4l-5.4 5.4M674.6 200.5l5.4 5.4m0 -5.4l-5.4 5.4M674.7 209.1l5.4 5.4m0 -5.4l-5.4 5.4M674.7 217.8l5.4 5.4m0 -5.4l-5.4 5.4M674.8 226.7l5.4 5.4m0 -5.4l-5.4 5.4M674.9 235.7l5.4 5.4m0 -5.4l-5.4 5.4M674.9 244.8l5.4 5.4m0 -5.4l-5.4 5.4M675 254l5.4 5.4m0 -5.4l-5.4 5.4M675 263.3l5.4 5.4m0 -5.4l-5.4 5.4M675.1 272.7l5.4 5.4m0 -5.4l-5.4 5.4M675.1 282.1l5.4 5.4m0 -5.4l-5.4 5.4M675.1 291.6l5.4 5.4m0 -5.4l-5.4 5.4M675.2 301.2l5.4 5.4m0 -5.4l-5.4 5.4M675.2 310.9l5.4 5.4m0 -5.4l-5.4 5.4M675.2 320.5l5.4 5.4m0 -5.4l-5.4 5.4M675.2 330.2l5.4 5.4m0 -5.4l-5.4 5.4M675.2 339.8l5.4 5.4m0 -5.4l-5.4 5.4M675.2 349.5l5.4 5.4m0 -5.4l-5.4 5.4M675.2 359.1l5.4 5.4m0 -5.4l-5.4 5.4M675.2 368.7l5.4 5.4m0 -5.4l-5.4 5.4M675.1 378.3l5.4 5.4m0 -5.4l-5.4 5.4M675.1 387.8l5.4 5.4m0 -5.4l-5.4 5.4M675 397.2l5.4 5.4m0 -5.4l-5.4 5.4M675 406.5l5.4 5.4m0 -5.4l-5.4 5.4M674.9 415.8l5.4 5.4m0 -5.4l-5.4 5.4M674.9 424.9l5.4 5.4m0 -5.4l-5.4 5.4M674.8 433.9l5.4 5.4m0 -5.4l-5.4 5.4M674.8 442.8l5.4 5.4m0 -5.4l-5.4 5.4M674.7 451.6l5.4 5.4m0 -5.4l-5.4 5.4M674.6 460.2l5.4 5.4m0 -5.4l-5.4 5.4M674.5 468.7l5.4 5.4m0 -5.4l-5.4 5.4M674.4 477l5.4 5.4m0 -5.4l-5.4 5.4M674.3 485.2l5.4 5.4m0 -5.4l-5.4 5.4M674.3 493.3l5.4 5.4m0 -5.4l-5.4 5.4M674.2 501.2l5.4 5.4m0 -5.4l-5.4 5.4M683.3 167.8l5.4 5.4m0 -5.4l-5.4 5.4M683.4 175.8l5.4 5.4m0 -5.4l-5.4 5.4M683.6 183.9l5.4 5.4m0 -5.4l-5.4 5.4M683.7 192.2l5.4 5.4m0 -5.4l-5.4 5.4M683.9 200.6l5.4 5.4m0 -5.4l-5.4 5.4M684 209.2l5.4 5.4m0 -5.4l-5.4 5.4M684.1 217.9l5.4 5.4m0 -5.4l-5.4 5.4M684.2 226.8l5.4 5.4m0 -5.4l-5.4 5.4M684.4 235.8l5.4 5.4m0 -5.4l-5.4 5.4M684.5 244.8l5.4 5.4m0 -5.4l-5.4 5.4M684.5 254l5.4 5.4m0 -5.4l-5.4 5.4M684.6 263.3l5.4 5.4m0 -5.4l-5.4 5.4M684.7 272.7l5.4 5.4m0 -5.4l-5.4 5.4M684.8 282.2l5.4 5.4m0 -5.4l-5.4 5.4M684.8 291.7l5.4 5.4m0 -5.4l-5.4 5.4M684.8 301.3l5.4 5.4m0 -5.4l-5.4 5.4M684.9 310.9l5.4 5.4m0 -5.4l-5.4 5.4M684.9 320.5l5.4 5.4m0 -5.4l-5.4 5.4M684.9 330.2l5.4 5.4m0 -5.4l-5.4 5.4M684.9 339.8l5.4 5.4m0 -5.4l-5.4 5.4M684.9 349.5l5.4 5.4m0 -5.4l-5.4 5.4M684.9 359.1l5.4 5.4m0 -5.4l-5.4 5.4M684.8 368.7l5.4 5.4m0 -5.4l-5.4 5.4M684.8 378.2l5.4 5.4m0 -5.4l-5.4 5.4M684.7 387.7l5.4 5.4m0 -5.4l-5.4 5.4M684.6 397.1l5.4 5.4m0 -5.4l-5.4 5.4M684.6 406.4l5.4 5.4m0 -5.4l-5.4 5.4M684.5 415.7l5.4 5.4m0 -5.4l-5.4 5.4M684.4 424.8l5.4 5.4m0 -5.4l-5.4 5.4M684.3 433.8l5.4 5.4m0 -5.4l-5.4 5.4M684.2 442.7l5.4 5.4m0 -5.4l-5.4 5.4M684 451.5l5.4 5.4m0 -5.4l-5.4 5.4M683.9 460.1l5.4 5.4m0 -5.4l-5.4 5.4M683.8 468.6l5.4 5.4m0 -5.4l-5.4 5.4M683.6 476.9l5.4 5.4m0 -5.4l-5.4 5.4M683.5 485.1l5.4 5.4m0 -5.4l-5.4 5.4M683.3 493.1l5.4 5.4m0 -5.4l-5.4 5.4M683.2 501l5.4 5.4m0 -5.4l-5.4 5.4M692.3 168l5.4 5.4m0 -5.4l-5.4 5.4M692.5 176l5.4 5.4m0 -5.4l-5.4 5.4M692.7 184.1l5.4 5.4m0 -5.4l-5.4 5.4M692.9 192.4l5.4 5.4m0 -5.4l-5.4 5.4M693.1 200.8l5.4 5.4m0 -5.4l-5.4 5.4M693.3 209.4l5.4 5.4m0 -5.4l-5.4 5.4M693.5 218.1l5.4 5.4m0 -5.4l-5.4 5.4M693.7 226.9l5.4 5.4m0 -5.4l-5.4 5.4M693.8 235.9l5.4 5.4m0 -5.4l-5.4 5.4M693.9 245l5.4 5.4m0 -5.4l-5.4 5.4M694.1 254.1l5.4 5.4m0 -5.4l-5.4 5.4M694.2 263.4l5.4 5.4m0 -5.4l-5.4 5.4M694.3 272.8l5.4 5.4m0 -5.4l-5.4 5.4M694.4 282.2l5.4 5.4m0 -5.4l-5.4 5.4M694.4 291.7l5.4 5.4m0 -5.4l-5.4 5.4M694.5 301.3l5.4 5.4m0 -5.4l-5.4 5.4M694.5 310.9l5.4 5.4m0 -5.4l-5.4 5.4M694.6 320.5l5.4 5.4m0 -5.4l-5.4 5.4M694.6 330.2l5.4 5.4m0 -5.4l-5.4 5.4M694.6 339.8l5.4 5.4m0 -5.4l-5.4 5.4M694.5 349.5l5.4 5.4m0 -5.4l-5.4 5.4M694.5 359.1l5.4 5.4m0 -5.4l-5.4 5.4M694.5 368.6l5.4 5.4m0 -5.4l-5.4 5.4M694.4 378.2l5.4 5.4m0 -5.4l-5.4 5.4M694.3 387.6l5.4 5.4m0 -5.4l-5.4 5.4M694.2 397l5.4 5.4m0 -5.4l-5.4 5.4M694.1 406.3l5.4 5.4m0 -5.4l-5.4 5.4M694 415.6l5.4 5.4m0 -5.4l-5.4 5.4M693.9 424.7l5.4 5.4m0 -5.4l-5.4 5.4M693.7 433.7l5.4 5.4m0 -5.4l-5.4 5.4M693.6 442.6l5.4 5.4m0 -5.4l-5.4 5.4M693.4 451.3l5.4 5.4m0 -5.4l-5.4 5.4M693.2 459.9l5.4 5.4m0 -5.4l-5.4 5.4M693 468.4l5.4 5.4m0 -5.4l-5.4 5.4M692.8 476.8l5.4 5.4m0 -5.4l-5.4 5.4M692.6 484.9l5.4 5.4m0 -5.4l-5.4 5.4M692.4 493l5.4 5.4m0 -5.4l-5.4 5.4M692.2 500.8l5.4 5.4m0 -5.4l-5.4 5.4M701.3 168.3l5.4 5.4m0 -5.4l-5.4 5.4M701.6 176.2l5.4 5.4m0 -5.4l-5.4 5.4M701.9 184.3l5.4 5.4m0 -5.4l-5.4 5.4M702.1 192.6l5.4 5.4m0 -5.4l-5.4 5.4M702.4 201l5.4 5.4m0 -5.4l-5.4 5.4M702.6 209.6l5.4 5.4m0 -5.4l-5.4 5.4M702.8 218.3l5.4 5.4m0 -5.4l-5.4 5.4M703 227.1l5.4 5.4m0 -5.4l-5.4 5.4M703.2 236l5.4 5.4m0 -5.4l-5.4 5.4M703.4 245.1l5.4 5.4m0 -5.4l-5.4 5.4M703.6 254.3l5.4 5.4m0 -5.4l-5.4 5.4M703.7 263.5l5.4 5.4m0 -5.4l-5.4 5.4M703.8 272.9l5.4 5.4m0 -5.4l-5.4 5.4M703.9 282.3l5.4 5.4m0 -5.4l-5.4 5.4M704 291.8l5.4 5.4m0 -5.4l-5.4 5.4M704.1 301.4l5.4 5.4m0 -5.4l-5.4 5.4M704.1 310.9l5.4 5.4m0 -5.4l-5.4 5.4M704.2 320.5l5.4 5.4m0 -5.4l-5.4 5.4M704.2 330.2l5.4 5.4m0 -5.4l-5.4 5.4M704.2 339.8l5.4 5.4m0 -5.4l-5.4 5.4M704.2 349.4l5.4 5.4m0 -5.4l-5.4 5.4M704.1 359l5.4 5.4m0 -5.4l-5.4 5.4M704 368.6l5.4 5.4m0 -5.4l-5.4 5.4M704 378.1l5.4 5.4m0 -5.4l-5.4 5.4M703.9 387.5l5.4 5.4m0 -5.4l-5.4 5.4M703.7 396.9l5.4 5.4m0 -5.4l-5.4 5.4M703.6 406.2l5.4 5.4m0 -5.4l-5.4 5.4M703.5 415.4l5.4 5.4m0 -5.4l-5.4 5.4M703.3 424.5l5.4 5.4m0 -5.4l-5.4 5.4M703.1 433.5l5.4 5.4m0 -5.4l-5.4 5.4M702.9 442.4l5.4 5.4m0 -5.4l-5.4 5.4M702.7 451.1l5.4 5.4m0 -5.4l-5.4 5.4M702.5 459.7l5.4 5.4m0 -5.4l-5.4 5.4M702.2 468.2l5.4 5.4m0 -5.4l-5.4 5.4M702 476.5l5.4 5.4m0 -5.4l-5.4 5.4M701.7 484.7l5.4 5.4m0 -5.4l-5.4 5.4M701.4 492.7l5.4 5.4m0 -5.4l-5.4 5.4M701.1 500.6l5.4 5.4m0 -5.4l-5.4 5.4M710.3 168.6l5.4 5.4m0 -5.4l-5.4 5.4M710.6 176.5l5.4 5.4m0 -5.4l-5.4 5.4M710.9 184.6l5.4 5.4m0 -5.4l-5.4 5.4M711.2 192.9l5.4 5.4m0 -5.4l-5.4 5.4M711.5 201.3l5.4 5.4m0 -5.4l-5.4 5.4M711.8 209.8l5.4 5.4m0 -5.4l-5.4 5.4M712.1 218.5l5.4 5.4m0 -5.4l-5.4 5.4M712.3 227.3l5.4 5.4m0 -5.4l-5.4 5.4M712.6 236.2l5.4 5.4m0 -5.4l-5.4 5.4M712.8 245.3l5.4 5.4m0 -5.4l-5.4 5.4M713 254.4l5.4 5.4m0 -5.4l-5.4 5.4M713.2 263.7l5.4 5.4m0 -5.4l-5.4 5.4M713.3 273l5.4 5.4m0 -5.4l-5.4 5.4M713.4 282.4l5.4 5.4m0 -5.4l-5.4 5.4M713.5 291.9l5.4 5.4m0 -5.4l-5.4 5.4M713.6 301.4l5.4 5.4m0 -5.4l-5.4 5.4M713.7 311l5.4 5.4m0 -5.4l-5.4 5.4M713.7 320.6l5.4 5.4m0 -5.4l-5.4 5.4M713.7 330.2l5.4 5.4m0 -5.4l-5.4 5.4M713.7 339.8l5.4 5.4m0 -5.4l-5.4 5.4M713.7 349.4l5.4 5.4m0 -5.4l-5.4 5.4M713.7 359l5.4 5.4m0 -5.4l-5.4 5.4M713.6 368.5l5.4 5.4m0 -5.4l-5.4 5.4M713.5 378l5.4 5.4m0 -5.4l-5.4 5.4M713.4 387.4l5.4 5.4m0 -5.4l-5.4 5.4M713.2 396.8l5.4 5.4m0 -5.4l-5.4 5.4M713 406.1l5.4 5.4m0 -5.4l-5.4 5.4M712.9 415.2l5.4 5.4m0 -5.4l-5.4 5.4M712.7 424.3l5.4 5.4m0 -5.4l-5.4 5.4M712.4 433.3l5.4 5.4m0 -5.4l-5.4 5.4M712.2 442.2l5.4 5.4m0 -5.4l-5.4 5.4M711.9 450.9l5.4 5.4m0 -5.4l-5.4 5.4M711.6 459.5l5.4 5.4m0 -5.4l-5.4 5.4M711.4 467.9l5.4 5.4m0 -5.4l-5.4 5.4M711 476.2l5.4 5.4m0 -5.4l-5.4 5.4M710.7 484.4l5.4 5.4m0 -5.4l-5.4 5.4M710.4 492.4l5.4 5.4m0 -5.4l-5.4 5.4M710.1 500.3l5.4 5.4m0 -5.4l-5.4 5.4M719.2 168.9l5.4 5.4m0 -5.4l-5.4 5.4M719.6 176.9l5.4 5.4m0 -5.4l-5.4 5.4M719.9 185l5.4 5.4m0 -5.4l-5.4 5.4M720.3 193.2l5.4 5.4m0 -5.4l-5.4 5.4M720.7 201.6l5.4 5.4m0 -5.4l-5.4 5.4M721 210.1l5.4 5.4m0 -5.4l-5.4 5.4M721.3 218.8l5.4 5.4m0 -5.4l-5.4 5.4M721.6 227.6l5.4 5.4m0 -5.4l-5.4 5.4M721.9 236.5l5.4 5.4m0 -5.4l-5.4 5.4M722.1 245.5l5.4 5.4m0 -5.4l-5.4 5.4M722.3 254.6l5.4 5.4m0 -5.4l-5.4 5.4M722.5 263.9l5.4 5.4m0 -5.4l-5.4 5.4M722.7 273.2l5.4 5.4m0 -5.4l-5.4 5.4M722.9 282.6l5.4 5.4m0 -5.4l-5.4 5.4M723 292l5.4 5.4m0 -5.4l-5.4 5.4M723.1 301.5l5.4 5.4m0 -5.4l-5.4 5.4M723.2 311l5.4 5.4m0 -5.4l-5.4 5.4M723.2 320.6l5.4 5.4m0 -5.4l-5.4 5.4M723.2 330.2l5.4 5.4m0 -5.4l-5.4 5.4M723.2 339.8l5.4 5.4m0 -5.4l-5.4 5.4M723.2 349.3l5.4 5.4m0 -5.4l-5.4 5.4M723.1 358.9l5.4 5.4m0 -5.4l-5.4 5.4M723 368.4l5.4 5.4m0 -5.4l-5.4 5.4M722.9 377.9l5.4 5.4m0 -5.4l-5.4 5.4M722.8 387.3l5.4 5.4m0 -5.4l-5.4 5.4M722.6 396.6l5.4 5.4m0 -5.4l-5.4 5.4M722.4 405.9l5.4 5.4m0 -5.4l-5.4 5.4M722.2 415l5.4 5.4m0 -5.4l-5.4 5.4M722 424.1l5.4 5.4m0 -5.4l-5.4 5.4M721.7 433l5.4 5.4m0 -5.4l-5.4 5.4M721.4 441.9l5.4 5.4m0 -5.4l-5.4 5.4M721.1 450.6l5.4 5.4m0 -5.4l-5.4 5.4M720.8 459.2l5.4 5.4m0 -5.4l-5.4 5.4M720.4 467.6l5.4 5.4m0 -5.4l-5.4 5.4M720.1 475.9l5.4 5.4m0 -5.4l-5.4 5.4M719.7 484l5.4 5.4m0 -5.4l-5.4 5.4M719.3 492l5.4 5.4m0 -5.4l-5.4 5.4M718.9 499.9l5.4 5.4m0 -5.4l-5.4 5.4M728 169.4l5.4 5.4m0 -5.4l-5.4 5.4M728.5 177.3l5.4 5.4m0 -5.4l-5.4 5.4M728.9 185.4l5.4 5.4m0 -5.4l-5.4 5.4M729.3 193.6l5.4 5.4m0 -5.4l-5.4 5.4M729.7 202l5.4 5.4m0 -5.4l-5.4 5.4M730.1 210.5l5.4 5.4m0 -5.4l-5.4 5.4M730.4 219.1l5.4 5.4m0 -5.4l-5.4 5.4M730.8 227.9l5.4 5.4m0 -5.4l-5.4 5.4M731.1 236.8l5.4 5.4m0 -5.4l-5.4 5.4M731.4 245.8l5.4 5.4m0 -5.4l-5.4 5.4M731.6 254.9l5.4 5.4m0 -5.4l-5.4 5.4M731.9 264.1l5.4 5.4m0 -5.4l-5.4 5.4M732.1 273.4l5.4 5.4m0 -5.4l-5.4 5.4M732.2 282.7l5.4 5.4m0 -5.4l-5.4 5.4M732.4 292.1l5.4 5.4m0 -5.4l-5.4 5.4M732.5 301.6l5.4 5.4m0 -5.4l-5.4 5.4M732.6 311.1l5.4 5.4m0 -5.4l-5.4 5.4M732.6 320.6l5.4 5.4m0 -5.4l-5.4 5.4M732.7 330.2l5.4 5.4m0 -5.4l-5.4 5.4M732.6 339.7l5.4 5.4m0 -5.4l-5.4 5.4M732.6 349.3l5.4 5.4m0 -5.4l-5.4 5.4M732.5 358.8l5.4 5.4m0 -5.4l-5.4 5.4M732.4 368.3l5.4 5.4m0 -5.4l-5.4 5.4M732.3 377.7l5.4 5.4m0 -5.4l-5.4 5.4M732.1 387.1l5.4 5.4m0 -5.4l-5.4 5.4M731.9 396.4l5.4 5.4m0 -5.4l-5.4 5.4M731.7 405.6l5.4 5.4m0 -5.4l-5.4 5.4M731.5 414.8l5.4 5.4m0 -5.4l-5.4 5.4M731.2 423.8l5.4 5.4m0 -5.4l-5.4 5.4M730.9 432.7l5.4 5.4m0 -5.4l-5.4 5.4M730.6 441.6l5.4 5.4m0 -5.4l-5.4 5.4M730.2 450.2l5.4 5.4m0 -5.4l-5.4 5.4M729.8 458.8l5.4 5.4m0 -5.4l-5.4 5.4M729.5 467.2l5.4 5.4m0 -5.4l-5.4 5.4M729 475.5l5.4 5.4m0 -5.4l-5.4 5.4M728.6 483.6l5.4 5.4m0 -5.4l-5.4 5.4M728.2 491.6l5.4 5.4m0 -5.4l-5.4 5.4M727.7 499.5l5.4 5.4m0 -5.4l-5.4 5.4M736.8 169.8l5.4 5.4m0 -5.4l-5.4 5.4M737.3 177.8l5.4 5.4m0 -5.4l-5.4 5.4M737.8 185.8l5.4 5.4m0 -5.4l-5.4 5.4M738.2 194l5.4 5.4m0 -5.4l-5.4 5.4M738.7 202.4l5.4 5.4m0 -5.4l-5.4 5.4M739.1 210.9l5.4 5.4m0 -5.4l-5.4 5.4M739.5 219.5l5.4 5.4m0 -5.4l-5.4 5.4M739.9 228.2l5.4 5.4m0 -5.4l-5.4 5.4M740.2 237.1l5.4 5.4m0 -5.4l-5.4 5.4M740.5 246.1l5.4 5.4m0 -5.4l-5.4 5.4M740.8 255.1l5.4 5.4m0 -5.4l-5.4 5.4M741.1 264.3l5.4 5.4m0 -5.4l-5.4 5.4M741.3 273.6l5.4 5.4m0 -5.4l-5.4 5.4M741.5 282.9l5.4 5.4m0 -5.4l-5.4 5.4M741.7 292.3l5.4 5.4m0 -5.4l-5.4 5.4M741.8 301.7l5.4 5.4m0 -5.4l-5.4 5.4M741.9 311.2l5.4 5.4m0 -5.4l-5.4 5.4M741.9 320.7l5.4 5.4m0 -5.4l-5.4 5.4M742 330.2l5.4 5.4m0 -5.4l-5.4 5.4M742 339.7l5.4 5.4m0 -5.4l-5.4 5.4M741.9 349.2l5.4 5.4m0 -5.4l-5.4 5.4M741.8 358.7l5.4 5.4m0 -5.4l-5.4 5.4M741.7 368.2l5.4 5.4m0 -5.4l-5.4 5.4M741.6 377.6l5.4 5.4m0 -5.4l-5.4 5.4M741.4 386.9l5.4 5.4m0 -5.4l-5.4 5.4M741.2 396.2l5.4 5.4m0 -5.4l-5.4 5.4M740.9 405.4l5.4 5.4m0 -5.4l-5.4 5.4M740.6 414.5l5.4 5.4m0 -5.4l-5.4 5.4M740.3 423.5l5.4 5.4m0 -5.4l-5.4 5.4M740 432.4l5.4 5.4m0 -5.4l-5.4 5.4M739.6 441.2l5.4 5.4m0 -5.4l-5.4 5.4M739.2 449.9l5.4 5.4m0 -5.4l-5.4 5.4M738.8 458.4l5.4 5.4m0 -5.4l-5.4 5.4M738.4 466.8l5.4 5.4m0 -5.4l-5.4 5.4M737.9 475.1l5.4 5.4m0 -5.4l-5.4 5.4M737.5 483.2l5.4 5.4m0 -5.4l-5.4 5.4M737 491.1l5.4 5.4m0 -5.4l-5.4 5.4M736.5 499l5.4 5.4m0 -5.4l-5.4 5.4M745.5 170.4l5.4 5.4m0 -5.4l-5.4 5.4M746 178.3l5.4 5.4m0 -5.4l-5.4 5.4M746.5 186.3l5.4 5.4m0 -5.4l-5.4 5.4M747.1 194.5l5.4 5.4m0 -5.4l-5.4 5.4M747.5 202.8l5.4 5.4m0 -5.4l-5.4 5.4M748 211.3l5.4 5.4m0 -5.4l-5.4 5.4M748.4 219.9l5.4 5.4m0 -5.4l-5.4 5.4M748.9 228.6l5.4 5.4m0 -5.4l-5.4 5.4M749.2 237.4l5.4 5.4m0 -5.4l-5.4 5.4M749.6 246.4l5.4 5.4m0 -5.4l-5.4 5.4M749.9 255.4l5.4 5.4m0 -5.4l-5.4 5.4M750.2 264.6l5.4 5.4m0 -5.4l-5.4 5.4M750.5 273.8l5.4 5.4m0 -5.4l-5.4 5.4M750.7 283.1l5.4 5.4m0 -5.4l-5.4 5.4M750.8 292.4l5.4 5.4m0 -5.4l-5.4 5.4M751 301.8l5.4 5.4m0 -5.4l-5.4 5.4M751.1 311.3l5.4 5.4m0 -5.4l-5.4 5.4M751.2 320.7l5.4 5.4m0 -5.4l-5.4 5.4M751.2 330.2l5.4 5.4m0 -5.4l-5.4 5.4M751.2 339.7l5.4 5.4m0 -5.4l-5.4 5.4M751.1 349.2l5.4 5.4m0 -5.4l-5.4 5.4M751 358.6l5.4 5.4m0 -5.4l-5.4 5.4M750.9 368l5.4 5.4m0 -5.4l-5.4 5.4M750.7 377.4l5.4 5.4m0 -5.4l-5.4 5.4M750.5 386.7l5.4 5.4m0 -5.4l-5.4 5.4M750.3 395.9l5.4 5.4m0 -5.4l-5.4 5.4M750 405.1l5.4 5.4m0 -5.4l-5.4 5.4M749.7 414.2l5.4 5.4m0 -5.4l-5.4 5.4M749.4 423.2l5.4 5.4m0 -5.4l-5.4 5.4M749 432l5.4 5.4m0 -5.4l-5.4 5.4M748.6 440.8l5.4 5.4m0 -5.4l-5.4 5.4M748.2 449.4l5.4 5.4m0 -5.4l-5.4 5.4M747.7 457.9l5.4 5.4m0 -5.4l-5.4 5.4M747.2 466.3l5.4 5.4m0 -5.4l-5.4 5.4M746.7 474.6l5.4 5.4m0 -5.4l-5.4 5.4M746.2 482.7l5.4 5.4m0 -5.4l-5.4 5.4M745.7 490.6l5.4 5.4m0 -5.4l-5.4 5.4M745.1 498.4l5.4 5.4m0 -5.4l-5.4 5.4M754.1 171l5.4 5.4m0 -5.4l-5.4 5.4M754.7 178.8l5.4 5.4m0 -5.4l-5.4 5.4M755.2 186.9l5.4 5.4m0 -5.4l-5.4 5.4M755.8 195l5.4 5.4m0 -5.4l-5.4 5.4M756.3 203.3l5.4 5.4m0 -5.4l-5.4 5.4M756.8 211.8l5.4 5.4m0 -5.4l-5.4 5.4M757.3 220.3l5.4 5.4m0 -5.4l-5.4 5.4M757.8 229l5.4 5.4m0 -5.4l-5.4 5.4M758.2 237.8l5.4 5.4m0 -5.4l-5.4 5.4M758.6 246.7l5.4 5.4m0 -5.4l-5.4 5.4M758.9 255.7l5.4 5.4m0 -5.4l-5.4 5.4M759.2 264.8l5.4 5.4m0 -5.4l-5.4 5.4M759.5 274l5.4 5.4m0 -5.4l-5.4 5.4M759.7 283.3l5.4 5.4m0 -5.4l-5.4 5.4M759.9 292.6l5.4 5.4m0 -5.4l-5.4 5.4M760.1 301.9l5.4 5.4m0 -5.4l-5.4 5.4M760.2 311.3l5.4 5.4m0 -5.4l-5.4 5.4M760.3 320.8l5.4 5.4m0 -5.4l-5.4 5.4M760.3 330.2l5.4 5.4m0 -5.4l-5.4 5.4M760.3 339.6l5.4 5.4m0 -5.4l-5.4 5.4M760.2 349.1l5.4 5.4m0 -5.4l-5.4 5.4M760.1 358.5l5.4 5.4m0 -5.4l-5.4 5.4M760 367.9l5.4 5.4m0 -5.4l-5.4 5.4M759.8 377.2l5.4 5.4m0 -5.4l-5.4 5.4M759.6 386.5l5.4 5.4m0 -5.4l-5.4 5.4M759.3 395.7l5.4 5.4m0 -5.4l-5.4 5.4M759 404.8l5.4 5.4m0 -5.4l-5.4 5.4M758.7 413.8l5.4 5.4m0 -5.4l-5.4 5.4M758.3 422.8l5.4 5.4m0 -5.4l-5.4 5.4M757.9 431.6l5.4 5.4m0 -5.4l-5.4 5.4M757.5 440.4l5.4 5.4m0 -5.4l-5.4 5.4M757 449l5.4 5.4m0 -5.4l-5.4 5.4M756.5 457.5l5.4 5.4m0 -5.4l-5.4 5.4M756 465.8l5.4 5.4m0 -5.4l-5.4 5.4M755.4 474l5.4 5.4m0 -5.4l-5.4 5.4M754.9 482.1l5.4 5.4m0 -5.4l-5.4 5.4M754.3 490l5.4 5.4m0 -5.4l-5.4 5.4M753.7 497.8l5.4 5.4m0 -5.4l-5.4 5.4M762.6 171.6l5.4 5.4m0 -5.4l-5.4 5.4M763.2 179.5l5.4 5.4m0 -5.4l-5.4 5.4M763.8 187.5l5.4 5.4m0 -5.4l-5.4 5.4M764.4 195.6l5.4 5.4m0 -5.4l-5.4 5.4M765 203.9l5.4 5.4m0 -5.4l-5.4 5.4M765.5 212.3l5.4 5.4m0 -5.4l-5.4 5.4M766.1 220.8l5.4 5.4m0 -5.4l-5.4 5.4M766.5 229.5l5.4 5.4m0 -5.4l-5.4 5.4M767 238.2l5.4 5.4m0 -5.4l-5.4 5.4M767.4 247.1l5.4 5.4m0 -5.4l-5.4 5.4M767.8 256.1l5.4 5.4m0 -5.4l-5.4 5.4M768.1 265.1l5.4 5.4m0 -5.4l-5.4 5.4M768.4 274.3l5.4 5.4m0 -5.4l-5.4 5.4M768.7 283.5l5.4 5.4m0 -5.4l-5.4 5.4M768.9 292.8l5.4 5.4m0 -5.4l-5.4 5.4M769 302.1l5.4 5.4m0 -5.4l-5.4 5.4M769.2 311.4l5.4 5.4m0 -5.4l-5.4 5.4M769.2 320.8l5.4 5.4m0 -5.4l-5.4 5.4M769.3 330.2l5.4 5.4m0 -5.4l-5.4 5.4M769.3 339.6l5.4 5.4m0 -5.4l-5.4 5.4M769.2 349l5.4 5.4m0 -5.4l-5.4 5.4M769.1 358.4l5.4 5.4m0 -5.4l-5.4 5.4M768.9 367.7l5.4 5.4m0 -5.4l-5.4 5.4M768.7 377l5.4 5.4m0 -5.4l-5.4 5.4M768.5 386.2l5.4 5.4m0 -5.4l-5.4 5.4M768.2 395.4l5.4 5.4m0 -5.4l-5.4 5.4M767.9 404.5l5.4 5.4m0 -5.4l-5.4 5.4M767.5 413.5l5.4 5.4m0 -5.4l-5.4 5.4M767.1 422.4l5.4 5.4m0 -5.4l-5.4 5.4M766.7 431.2l5.4 5.4m0 -5.4l-5.4 5.4M766.2 439.9l5.4 5.4m0 -5.4l-5.4 5.4M765.7 448.5l5.4 5.4m0 -5.4l-5.4 5.4M765.2 456.9l5.4 5.4m0 -5.4l-5.4 5.4M764.6 465.2l5.4 5.4m0 -5.4l-5.4 5.4M764 473.4l5.4 5.4m0 -5.4l-5.4 5.4M763.4 481.5l5.4 5.4m0 -5.4l-5.4 5.4M762.8 489.4l5.4 5.4m0 -5.4l-5.4 5.4M762.1 497.2l5.4 5.4m0 -5.4l-5.4 5.4M771 172.3l5.4 5.4m0 -5.4l-5.4 5.4M771.6 180.1l5.4 5.4m0 -5.4l-5.4 5.4M772.3 188.1l5.4 5.4m0 -5.4l-5.4 5.4M772.9 196.2l5.4 5.4m0 -5.4l-5.4 5.4M773.6 204.5l5.4 5.4m0 -5.4l-5.4 5.4M774.1 212.8l5.4 5.4m0 -5.4l-5.4 5.4M774.7 221.3l5.4 5.4m0 -5.4l-5.4 5.4M775.2 230l5.4 5.4m0 -5.4l-5.4 5.4M775.7 238.7l5.4 5.4m0 -5.4l-5.4 5.4M776.1 247.5l5.4 5.4m0 -5.4l-5.4 5.4M776.5 256.5l5.4 5.4m0 -5.4l-5.4 5.4M776.9 265.5l5.4 5.4m0 -5.4l-5.4 5.4M777.2 274.6l5.4 5.4m0 -5.4l-5.4 5.4M777.5 283.7l5.4 5.4m0 -5.4l-5.4 5.4M777.7 293l5.4 5.4m0 -5.4l-5.4 5.4M777.9 302.2l5.4 5.4m0 -5.4l-5.4 5.4M778 311.5l5.4 5.4m0 -5.4l-5.4 5.4M778.1 320.9l5.4 5.4m0 -5.4l-5.4 5.4M778.1 330.2l5.4 5.4m0 -5.4l-5.4 5.4M778.1 339.6l5.4 5.4m0 -5.4l-5.4 5.4M778 348.9l5.4 5.4m0 -5.4l-5.4 5.4M777.9 358.2l5.4 5.4m0 -5.4l-5.4 5.4M777.8 367.5l5.4 5.4m0 -5.4l-5.4 5.4M777.6 376.8l5.4 5.4m0 -5.4l-5.4 5.4M777.3 385.9l5.4 5.4m0 -5.4l-5.4 5.4M777 395.1l5.4 5.4m0 -5.4l-5.4 5.4M776.7 404.1l5.4 5.4m0 -5.4l-5.4 5.4M776.3 413.1l5.4 5.4m0 -5.4l-5.4 5.4M775.8 422l5.4 5.4m0 -5.4l-5.4 5.4M775.4 430.7l5.4 5.4m0 -5.4l-5.4 5.4M774.9 439.4l5.4 5.4m0 -5.4l-5.4 5.4M774.3 447.9l5.4 5.4m0 -5.4l-5.4 5.4M773.8 456.3l5.4 5.4m0 -5.4l-5.4 5.4M773.2 464.6l5.4 5.4m0 -5.4l-5.4 5.4M772.5 472.8l5.4 5.4m0 -5.4l-5.4 5.4M771.9 480.8l5.4 5.4m0 -5.4l-5.4 5.4M771.2 488.7l5.4 5.4m0 -5.4l-5.4 5.4M770.5 496.5l5.4 5.4m0 -5.4l-5.4 5.4M779.3 173l5.4 5.4m0 -5.4l-5.4 5.4M780 180.8l5.4 5.4m0 -5.4l-5.4 5.4M780.7 188.8l5.4 5.4m0 -5.4l-5.4 5.4M781.3 196.9l5.4 5.4m0 -5.4l-5.4 5.4M782 205.1l5.4 5.4m0 -5.4l-5.4 5.4M782.6 213.4l5.4 5.4m0 -5.4l-5.4 5.4M783.2 221.9l5.4 5.4m0 -5.4l-5.4 5.4M783.7 230.5l5.4 5.4m0 -5.4l-5.4 5.4M784.3 239.2l5.4 5.4m0 -5.4l-5.4 5.4M784.7 248l5.4 5.4m0 -5.4l-5.4 5.4M785.1 256.9l5.4 5.4m0 -5.4l-5.4 5.4M785.5 265.8l5.4 5.4m0 -5.4l-5.4 5.4M785.9 274.9l5.4 5.4m0 -5.4l-5.4 5.4M786.1 284l5.4 5.4m0 -5.4l-5.4 5.4M786.4 293.2l5.4 5.4m0 -5.4l-5.4 5.4M786.6 302.4l5.4 5.4m0 -5.4l-5.4 5.4M786.7 311.7l5.4 5.4m0 -5.4l-5.4 5.4M786.8 320.9l5.4 5.4m0 -5.4l-5.4 5.4M786.8 330.2l5.4 5.4m0 -5.4l-5.4 5.4M786.8 339.5l5.4 5.4m0 -5.4l-5.4 5.4M786.8 348.8l5.4 5.4m0 -5.4l-5.4 5.4M786.6 358.1l5.4 5.4m0 -5.4l-5.4 5.4M786.5 367.3l5.4 5.4m0 -5.4l-5.4 5.4M786.2 376.5l5.4 5.4m0 -5.4l-5.4 5.4M786 385.7l5.4 5.4m0 -5.4l-5.4 5.4M785.7 394.7l5.4 5.4m0 -5.4l-5.4 5.4M785.3 403.7l5.4 5.4m0 -5.4l-5.4 5.4M784.9 412.7l5.4 5.4m0 -5.4l-5.4 5.4M784.4 421.5l5.4 5.4m0 -5.4l-5.4 5.4M783.9 430.2l5.4 5.4m0 -5.4l-5.4 5.4M783.4 438.8l5.4 5.4m0 -5.4l-5.4 5.4M782.8 447.3l5.4 5.4m0 -5.4l-5.4 5.4M782.2 455.7l5.4 5.4m0 -5.4l-5.4 5.4M781.6 464l5.4 5.4m0 -5.4l-5.4 5.4M780.9 472.1l5.4 5.4m0 -5.4l-5.4 5.4M780.2 480.2l5.4 5.4m0 -5.4l-5.4 5.4M779.5 488l5.4 5.4m0 -5.4l-5.4 5.4M778.8 495.8l5.4 5.4m0 -5.4l-5.4 5.4M787.4 173.7l5.4 5.4m0 -5.4l-5.4 5.4M788.2 181.5l5.4 5.4m0 -5.4l-5.4 5.4M788.9 189.5l5.4 5.4m0 -5.4l-5.4 5.4M789.6 197.5l5.4 5.4m0 -5.4l-5.4 5.4M790.3 205.7l5.4 5.4m0 -5.4l-5.4 5.4M791 214.1l5.4 5.4m0 -5.4l-5.4 5.4M791.6 222.5l5.4 5.4m0 -5.4l-5.4 5.4M792.2 231l5.4 5.4m0 -5.4l-5.4 5.4M792.7 239.7l5.4 5.4m0 -5.4l-5.4 5.4M793.2 248.4l5.4 5.4m0 -5.4l-5.4 5.4M793.6 257.3l5.4 5.4m0 -5.4l-5.4 5.4M794 266.2l5.4 5.4m0 -5.4l-5.4 5.4M794.4 275.2l5.4 5.4m0 -5.4l-5.4 5.4M794.7 284.3l5.4 5.4m0 -5.4l-5.4 5.4M794.9 293.4l5.4 5.4m0 -5.4l-5.4 5.4M795.1 302.6l5.4 5.4m0 -5.4l-5.4 5.4M795.3 311.8l5.4 5.4m0 -5.4l-5.4 5.4M795.4 321l5.4 5.4m0 -5.4l-5.4 5.4M795.4 330.2l5.4 5.4m0 -5.4l-5.4 5.4M795.4 339.5l5.4 5.4m0 -5.4l-5.4 5.4M795.3 348.7l5.4 5.4m0 -5.4l-5.4 5.4M795.2 357.9l5.4 5.4m0 -5.4l-5.4 5.4M795 367.1l5.4 5.4m0 -5.4l-5.4 5.4M794.8 376.3l5.4 5.4m0 -5.4l-5.4 5.4M794.5 385.4l5.4 5.4m0 -5.4l-5.4 5.4M794.2 394.4l5.4 5.4m0 -5.4l-5.4 5.4M793.8 403.3l5.4 5.4m0 -5.4l-5.4 5.4M793.3 412.2l5.4 5.4m0 -5.4l-5.4 5.4M792.9 421l5.4 5.4m0 -5.4l-5.4 5.4M792.3 429.7l5.4 5.4m0 -5.4l-5.4 5.4M791.8 438.3l5.4 5.4m0 -5.4l-5.4 5.4M791.2 446.7l5.4 5.4m0 -5.4l-5.4 5.4M790.6 455.1l5.4 5.4m0 -5.4l-5.4 5.4M789.9 463.3l5.4 5.4m0 -5.4l-5.4 5.4M789.2 471.5l5.4 5.4m0 -5.4l-5.4 5.4M788.5 479.4l5.4 5.4m0 -5.4l-5.4 5.4M787.7 487.3l5.4 5.4m0 -5.4l-5.4 5.4M787 495l5.4 5.4m0 -5.4l-5.4 5.4M795.5 174.5l5.4 5.4m0 -5.4l-5.4 5.4M796.3 182.3l5.4 5.4m0 -5.4l-5.4 5.4M797.1 190.2l5.4 5.4m0 -5.4l-5.4 5.4M797.8 198.3l5.4 5.4m0 -5.4l-5.4 5.4M798.5 206.4l5.4 5.4m0 -5.4l-5.4 5.4M799.2 214.7l5.4 5.4m0 -5.4l-5.4 5.4M799.8 223.1l5.4 5.4m0 -5.4l-5.4 5.4M800.4 231.6l5.4 5.4m0 -5.4l-5.4 5.4M801 240.2l5.4 5.4m0 -5.4l-5.4 5.4M801.5 248.9l5.4 5.4m0 -5.4l-5.4 5.4M802 257.7l5.4 5.4m0 -5.4l-5.4 5.4M802.4 266.6l5.4 5.4m0 -5.4l-5.4 5.4M802.8 275.5l5.4 5.4m0 -5.4l-5.4 5.4M803.1 284.6l5.4 5.4m0 -5.4l-5.4 5.4M803.3 293.6l5.4 5.4m0 -5.4l-5.4 5.4M803.5 302.7l5.4 5.4m0 -5.4l-5.4 5.4M803.7 311.9l5.4 5.4m0 -5.4l-5.4 5.4M803.8 321.1l5.4 5.4m0 -5.4l-5.4 5.4M803.8 330.3l5.4 5.4m0 -5.4l-5.4 5.4M803.8 339.4l5.4 5.4m0 -5.4l-5.4 5.4M803.7 348.6l5.4 5.4m0 -5.4l-5.4 5.4M803.6 357.8l5.4 5.4m0 -5.4l-5.4 5.4M803.4 366.9l5.4 5.4m0 -5.4l-5.4 5.4M803.2 376l5.4 5.4m0 -5.4l-5.4 5.4M802.9 385l5.4 5.4m0 -5.4l-5.4 5.4M802.5 394l5.4 5.4m0 -5.4l-5.4 5.4M802.1 402.9l5.4 5.4m0 -5.4l-5.4 5.4M801.7 411.7l5.4 5.4m0 -5.4l-5.4 5.4M801.2 420.5l5.4 5.4m0 -5.4l-5.4 5.4M800.6 429.1l5.4 5.4m0 -5.4l-5.4 5.4M800 437.7l5.4 5.4m0 -5.4l-5.4 5.4M799.4 446.1l5.4 5.4m0 -5.4l-5.4 5.4M798.8 454.4l5.4 5.4m0 -5.4l-5.4 5.4M798.1 462.6l5.4 5.4m0 -5.4l-5.4 5.4M797.3 470.7l5.4 5.4m0 -5.4l-5.4 5.4M796.6 478.7l5.4 5.4m0 -5.4l-5.4 5.4M795.8 486.5l5.4 5.4m0 -5.4l-5.4 5.4M795 494.2l5.4 5.4m0 -5.4l-5.4 5.4M803.5 175.3l5.4 5.4m0 -5.4l-5.4 5.4M804.3 183.1l5.4 5.4m0 -5.4l-5.4 5.4M805.1 191l5.4 5.4m0 -5.4l-5.4 5.4M805.8 199l5.4 5.4m0 -5.4l-5.4 5.4M806.6 207.1l5.4 5.4m0 -5.4l-5.4 5.4M807.3 215.4l5.4 5.4m0 -5.4l-5.4 5.4M807.9 223.7l5.4 5.4m0 -5.4l-5.4 5.4M808.6 232.2l5.4 5.4m0 -5.4l-5.4 5.4M809.1 240.8l5.4 5.4m0 -5.4l-5.4 5.4M809.7 249.4l5.4 5.4m0 -5.4l-5.4 5.4M810.2 258.2l5.4 5.4m0 -5.4l-5.4 5.4M810.6 267l5.4 5.4m0 -5.4l-5.4 5.4M811 275.9l5.4 5.4m0 -5.4l-5.4 5.4M811.3 284.9l5.4 5.4m0 -5.4l-5.4 5.4M811.6 293.9l5.4 5.4m0 -5.4l-5.4 5.4M811.8 302.9l5.4 5.4m0 -5.4l-5.4 5.4M812 312l5.4 5.4m0 -5.4l-5.4 5.4M812.1 321.1l5.4 5.4m0 -5.4l-5.4 5.4M812.1 330.3l5.4 5.4m0 -5.4l-5.4 5.4M812.1 339.4l5.4 5.4m0 -5.4l-5.4 5.4M812 348.5l5.4 5.4m0 -5.4l-5.4 5.4M811.9 357.6l5.4 5.4m0 -5.4l-5.4 5.4M811.7 366.7l5.4 5.4m0 -5.4l-5.4 5.4M811.4 375.7l5.4 5.4m0 -5.4l-5.4 5.4M811.1 384.7l5.4 5.4m0 -5.4l-5.4 5.4M810.7 393.6l5.4 5.4m0 -5.4l-5.4 5.4M810.3 402.5l5.4 5.4m0 -5.4l-5.4 5.4M809.9 411.3l5.4 5.4m0 -5.4l-5.4 5.4M809.3 420l5.4 5.4m0 -5.4l-5.4 5.4M808.8 428.6l5.4 5.4m0 -5.4l-5.4 5.4M808.2 437.1l5.4 5.4m0 -5.4l-5.4 5.4M807.5 445.4l5.4 5.4m0 -5.4l-5.4 5.4M806.8 453.7l5.4 5.4m0 -5.4l-5.4 5.4M806.1 461.9l5.4 5.4m0 -5.4l-5.4 5.4M805.4 470l5.4 5.4m0 -5.4l-5.4 5.4M804.6 477.9l5.4 5.4m0 -5.4l-5.4 5.4M803.8 485.7l5.4 5.4m0 -5.4l-5.4 5.4M803 493.4l5.4 5.4m0 -5.4l-5.4 5.4M811.4 176.1l5.4 5.4m0 -5.4l-5.4 5.4M812.2 183.9l5.4 5.4m0 -5.4l-5.4 5.4M813 191.8l5.4 5.4m0 -5.4l-5.4 5.4M813.8 199.8l5.4 5.4m0 -5.4l-5.4 5.4M814.5 207.9l5.4 5.4m0 -5.4l-5.4 5.4M815.2 216.1l5.4 5.4m0 -5.4l-5.4 5.4M815.9 224.4l5.4 5.4m0 -5.4l-5.4 5.4M816.6 232.8l5.4 5.4m0 -5.4l-5.4 5.4M817.2 241.3l5.4 5.4m0 -5.4l-5.4 5.4M817.7 249.9l5.4 5.4m0 -5.4l-5.4 5.4M818.2 258.6l5.4 5.4m0 -5.4l-5.4 5.4M818.7 267.4l5.4 5.4m0 -5.4l-5.4 5.4M819.1 276.3l5.4 5.4m0 -5.4l-5.4 5.4M819.4 285.2l5.4 5.4m0 -5.4l-5.4 5.4M819.7 294.1l5.4 5.4m0 -5.4l-5.4 5.4M819.9 303.1l5.4 5.4m0 -5.4l-5.4 5.4M820.1 312.2l5.4 5.4m0 -5.4l-5.4 5.4M820.2 321.2l5.4 5.4m0 -5.4l-5.4 5.4M820.2 330.3l5.4 5.4m0 -5.4l-5.4 5.4M820.2 339.3l5.4 5.4m0 -5.4l-5.4 5.4M820.1 348.4l5.4 5.4m0 -5.4l-5.4 5.4M820 357.4l5.4 5.4m0 -5.4l-5.4 5.4M819.8 366.5l5.4 5.4m0 -5.4l-5.4 5.4M819.5 375.4l5.4 5.4m0 -5.4l-5.4 5.4M819.2 384.4l5.4 5.4m0 -5.4l-5.4 5.4M818.8 393.2l5.4 5.4m0 -5.4l-5.4 5.4M818.4 402l5.4 5.4m0 -5.4l-5.4 5.4M817.9 410.8l5.4 5.4m0 -5.4l-5.4 5.4M817.4 419.4l5.4 5.4m0 -5.4l-5.4 5.4M816.8 428l5.4 5.4m0 -5.4l-5.4 5.4M816.2 436.4l5.4 5.4m0 -5.4l-5.4 5.4M815.5 444.8l5.4 5.4m0 -5.4l-5.4 5.4M814.8 453l5.4 5.4m0 -5.4l-5.4 5.4M814 461.2l5.4 5.4m0 -5.4l-5.4 5.4M813.3 469.2l5.4 5.4m0 -5.4l-5.4 5.4M812.5 477.1l5.4 5.4m0 -5.4l-5.4 5.4M811.7 484.9l5.4 5.4m0 -5.4l-5.4 5.4M810.8 492.6l5.4 5.4m0 -5.4l-5.4 5.4M819.1 177l5.4 5.4m0 -5.4l-5.4 5.4M819.9 184.7l5.4 5.4m0 -5.4l-5.4 5.4M820.8 192.6l5.4 5.4m0 -5.4l-5.4 5.4M821.6 200.5l5.4 5.4m0 -5.4l-5.4 5.4M822.3 208.6l5.4 5.4m0 -5.4l-5.4 5.4M823.1 216.8l5.4 5.4m0 -5.4l-5.4 5.4M823.8 225.1l5.4 5.4m0 -5.4l-5.4 5.4M824.4 233.4l5.4 5.4m0 -5.4l-5.4 5.4M825 241.9l5.4 5.4m0 -5.4l-5.4 5.4M825.6 250.5l5.4 5.4m0 -5.4l-5.4 5.4M826.1 259.1l5.4 5.4m0 -5.4l-5.4 5.4M826.6 267.8l5.4 5.4m0 -5.4l-5.4 5.4M827 276.6l5.4 5.4m0 -5.4l-5.4 5.4M827.3 285.5l5.4 5.4m0 -5.4l-5.4 5.4M827.6 294.4l5.4 5.4m0 -5.4l-5.4 5.4M827.9 303.3l5.4 5.4m0 -5.4l-5.4 5.4M828 312.3l5.4 5.4m0 -5.4l-5.4 5.4M828.1 321.3l5.4 5.4m0 -5.4l-5.4 5.4M828.2 330.3l5.4 5.4m0 -5.4l-5.4 5.4M828.1 339.3l5.4 5.4m0 -5.4l-5.4 5.4M828.1 348.3l5.4 5.4m0 -5.4l-5.4 5.4M827.9 357.3l5.4 5.4m0 -5.4l-5.4 5.4M827.7 366.2l5.4 5.4m0 -5.4l-5.4 5.4M827.4 375.1l5.4 5.4m0 -5.4l-5.4 5.4M827.1 384l5.4 5.4m0 -5.4l-5.4 5.4M826.7 392.8l5.4 5.4m0 -5.4l-5.4 5.4M826.3 401.6l5.4 5.4m0 -5.4l-5.4 5.4M825.8 410.2l5.4 5.4m0 -5.4l-5.4 5.4M825.2 418.8l5.4 5.4m0 -5.4l-5.4 5.4M824.7 427.3l5.4 5.4m0 -5.4l-5.4 5.4M824 435.8l5.4 5.4m0 -5.4l-5.4 5.4M823.3 444.1l5.4 5.4m0 -5.4l-5.4 5.4M822.6 452.3l5.4 5.4m0 -5.4l-5.4 5.4M821.8 460.4l5.4 5.4m0 -5.4l-5.4 5.4M821.1 468.4l5.4 5.4m0 -5.4l-5.4 5.4M820.2 476.3l5.4 5.4m0 -5.4l-5.4 5.4M819.4 484.1l5.4 5.4m0 -5.4l-5.4 5.4M818.5 491.7l5.4 5.4m0 -5.4l-5.4 5.4M826.7 177.8l5.4 5.4m0 -5.4l-5.4 5.4M827.6 185.6l5.4 5.4m0 -5.4l-5.4 5.4M828.4 193.4l5.4 5.4m0 -5.4l-5.4 5.4M829.2 201.3l5.4 5.4m0 -5.4l-5.4 5.4M830 209.4l5.4 5.4m0 -5.4l-5.4 5.4M830.8 217.5l5.4 5.4m0 -5.4l-5.4 5.4M831.5 225.7l5.4 5.4m0 -5.4l-5.4 5.4M832.1 234.1l5.4 5.4m0 -5.4l-5.4 5.4M832.8 242.5l5.4 5.4m0 -5.4l-5.4 5.4M833.3 251l5.4 5.4m0 -5.4l-5.4 5.4M833.9 259.6l5.4 5.4m0 -5.4l-5.4 5.4M834.3 268.3l5.4 5.4m0 -5.4l-5.4 5.4M834.8 277l5.4 5.4m0 -5.4l-5.4 5.4M835.1 285.8l5.4 5.4m0 -5.4l-5.4 5.4M835.4 294.6l5.4 5.4m0 -5.4l-5.4 5.4M835.6 303.5l5.4 5.4m0 -5.4l-5.4 5.4M835.8 312.4l5.4 5.4m0 -5.4l-5.4 5.4M835.9 321.4l5.4 5.4m0 -5.4l-5.4 5.4M836 330.3l5.4 5.4m0 -5.4l-5.4 5.4M835.9 339.2l5.4 5.4m0 -5.4l-5.4 5.4M835.9 348.2l5.4 5.4m0 -5.4l-5.4 5.4M835.7 357.1l5.4 5.4m0 -5.4l-5.4 5.4M835.5 366l5.4 5.4m0 -5.4l-5.4 5.4M835.2 374.8l5.4 5.4m0 -5.4l-5.4 5.4M834.9 383.6l5.4 5.4m0 -5.4l-5.4 5.4M834.5 392.4l5.4 5.4m0 -5.4l-5.4 5.4M834 401.1l5.4 5.4m0 -5.4l-5.4 5.4M833.5 409.7l5.4 5.4m0 -5.4l-5.4 5.4M833 418.3l5.4 5.4m0 -5.4l-5.4 5.4M832.4 426.7l5.4 5.4m0 -5.4l-5.4 5.4M831.7 435.1l5.4 5.4m0 -5.4l-5.4 5.4M831 443.4l5.4 5.4m0 -5.4l-5.4 5.4M830.3 451.5l5.4 5.4m0 -5.4l-5.4 5.4M829.5 459.6l5.4 5.4m0 -5.4l-5.4 5.4M828.7 467.6l5.4 5.4m0 -5.4l-5.4 5.4M827.9 475.4l5.4 5.4m0 -5.4l-5.4 5.4M827 483.2l5.4 5.4m0 -5.4l-5.4 5.4M826.2 490.9l5.4 5.4m0 -5.4l-5.4 5.4M834.3 178.7l5.4 5.4m0 -5.4l-5.4 5.4M835.1 186.4l5.4 5.4m0 -5.4l-5.4 5.4M836 194.2l5.4 5.4m0 -5.4l-5.4 5.4M836.8 202.1l5.4 5.4m0 -5.4l-5.4 5.4M837.6 210.1l5.4 5.4m0 -5.4l-5.4 5.4M838.3 218.2l5.4 5.4m0 -5.4l-5.4 5.4M839.1 226.4l5.4 5.4m0 -5.4l-5.4 5.4M839.7 234.7l5.4 5.4m0 -5.4l-5.4 5.4M840.4 243.1l5.4 5.4m0 -5.4l-5.4 5.4M841 251.6l5.4 5.4m0 -5.4l-5.4 5.4M841.5 260.1l5.4 5.4m0 -5.4l-5.4 5.4M842 268.7l5.4 5.4m0 -5.4l-5.4 5.4M842.4 277.4l5.4 5.4m0 -5.4l-5.4 5.4M842.7 286.1l5.4 5.4m0 -5.4l-5.4 5.4M843 294.9l5.4 5.4m0 -5.4l-5.4 5.4M843.3 303.7l5.4 5.4m0 -5.4l-5.4 5.4M843.5 312.6l5.4 5.4m0 -5.4l-5.4 5.4M843.6 321.4l5.4 5.4m0 -5.4l-5.4 5.4M843.6 330.3l5.4 5.4m0 -5.4l-5.4 5.4M843.6 339.2l5.4 5.4m0 -5.4l-5.4 5.4M843.5 348.1l5.4 5.4m0 -5.4l-5.4 5.4M843.4 356.9l5.4 5.4m0 -5.4l-5.4 5.4M843.1 365.7l5.4 5.4m0 -5.4l-5.4 5.4M842.9 374.5l5.4 5.4m0 -5.4l-5.4 5.4M842.5 383.3l5.4 5.4m0 -5.4l-5.4 5.4M842.1 392l5.4 5.4m0 -5.4l-5.4 5.4M841.7 400.6l5.4 5.4m0 -5.4l-5.4 5.4M841.1 409.2l5.4 5.4m0 -5.4l-5.4 5.4M840.6 417.7l5.4 5.4m0 -5.4l-5.4 5.4M840 426.1l5.4 5.4m0 -5.4l-5.4 5.4M839.3 434.4l5.4 5.4m0 -5.4l-5.4 5.4M838.6 442.6l5.4 5.4m0 -5.4l-5.4 5.4M837.9 450.8l5.4 5.4m0 -5.4l-5.4 5.4M837.1 458.8l5.4 5.4m0 -5.4l-5.4 5.4M836.3 466.7l5.4 5.4m0 -5.4l-5.4 5.4M835.4 474.6l5.4 5.4m0 -5.4l-5.4 5.4M834.6 482.3l5.4 5.4m0 -5.4l-5.4 5.4M833.7 490l5.4 5.4m0 -5.4l-5.4 5.4M841.7 179.6l5.4 5.4m0 -5.4l-5.4 5.4M842.6 187.3l5.4 5.4m0 -5.4l-5.4 5.4M843.4 195.1l5.4 5.4m0 -5.4l-5.4 5.4M844.2 203l5.4 5.4m0 -5.4l-5.4 5.4M845 210.9l5.4 5.4m0 -5.4l-5.4 5.4M845.8 219l5.4 5.4m0 -5.4l-5.4 5.4M846.5 227.2l5.4 5.4m0 -5.4l-5.4 5.4M847.2 235.4l5.4 5.4m0 -5.4l-5.4 5.4M847.8 243.7l5.4 5.4m0 -5.4l-5.4 5.4M848.4 252.1l5.4 5.4m0 -5.4l-5.4 5.4M849 260.6l5.4 5.4m0 -5.4l-5.4 5.4M849.4 269.2l5.4 5.4m0 -5.4l-5.4 5.4M849.9 277.8l5.4 5.4m0 -5.4l-5.4 5.4M850.2 286.5l5.4 5.4m0 -5.4l-5.4 5.4M850.5 295.2l5.4 5.4m0 -5.4l-5.4 5.4M850.8 303.9l5.4 5.4m0 -5.4l-5.4 5.4M851 312.7l5.4 5.4m0 -5.4l-5.4 5.4M851.1 321.5l5.4 5.4m0 -5.4l-5.4 5.4M851.1 330.3l5.4 5.4m0 -5.4l-5.4 5.4M851.1 339.1l5.4 5.4m0 -5.4l-5.4 5.4M851 347.9l5.4 5.4m0 -5.4l-5.4 5.4M850.8 356.7l5.4 5.4m0 -5.4l-5.4 5.4M850.6 365.5l5.4 5.4m0 -5.4l-5.4 5.4M850.3 374.2l5.4 5.4m0 -5.4l-5.4 5.4M850 382.9l5.4 5.4m0 -5.4l-5.4 5.4M849.6 391.5l5.4 5.4m0 -5.4l-5.4 5.4M849.1 400.1l5.4 5.4m0 -5.4l-5.4 5.4M848.6 408.6l5.4 5.4m0 -5.4l-5.4 5.4M848 417.1l5.4 5.4m0 -5.4l-5.4 5.4M847.4 425.4l5.4 5.4m0 -5.4l-5.4 5.4M846.8 433.7l5.4 5.4m0 -5.4l-5.4 5.4M846 441.9l5.4 5.4m0 -5.4l-5.4 5.4M845.3 450l5.4 5.4m0 -5.4l-5.4 5.4M844.5 458l5.4 5.4m0 -5.4l-5.4 5.4M843.7 465.9l5.4 5.4m0 -5.4l-5.4 5.4M842.9 473.7l5.4 5.4m0 -5.4l-5.4 5.4M842 481.5l5.4 5.4m0 -5.4l-5.4 5.4M841.1 489.1l5.4 5.4m0 -5.4l-5.4 5.4M849 180.5l5.4 5.4m0 -5.4l-5.4 5.4M849.9 188.1l5.4 5.4m0 -5.4l-5.4 5.4M850.7 195.9l5.4 5.4m0 -5.4l-5.4 5.4M851.6 203.8l5.4 5.4m0 -5.4l-5.4 5.4M852.3 211.7l5.4 5.4m0 -5.4l-5.4 5.4M853.1 219.7l5.4 5.4m0 -5.4l-5.4 5.4M853.8 227.9l5.4 5.4m0 -5.4l-5.4 5.4M854.5 236.1l5.4 5.4m0 -5.4l-5.4 5.4M855.2 244.4l5.4 5.4m0 -5.4l-5.4 5.4M855.7 252.7l5.4 5.4m0 -5.4l-5.4 5.4M856.3 261.1l5.4 5.4m0 -5.4l-5.4 5.4M856.8 269.6l5.4 5.4m0 -5.4l-5.4 5.4M857.2 278.2l5.4 5.4m0 -5.4l-5.4 5.4M857.6 286.8l5.4 5.4m0 -5.4l-5.4 5.4M857.9 295.5l5.4 5.4m0 -5.4l-5.4 5.4M858.1 304.1l5.4 5.4m0 -5.4l-5.4 5.4M858.3 312.9l5.4 5.4m0 -5.4l-5.4 5.4M858.4 321.6l5.4 5.4m0 -5.4l-5.4 5.4M858.5 330.3l5.4 5.4m0 -5.4l-5.4 5.4M858.4 339.1l5.4 5.4m0 -5.4l-5.4 5.4M858.3 347.8l5.4 5.4m0 -5.4l-5.4 5.4M858.2 356.5l5.4 5.4m0 -5.4l-5.4 5.4M858 365.2l5.4 5.4m0 -5.4l-5.4 5.4M857.7 373.9l5.4 5.4m0 -5.4l-5.4 5.4M857.3 382.5l5.4 5.4m0 -5.4l-5.4 5.4M856.9 391.1l5.4 5.4m0 -5.4l-5.4 5.4M856.5 399.6l5.4 5.4m0 -5.4l-5.4 5.4M856 408.1l5.4 5.4m0 -5.4l-5.4 5.4M855.4 416.5l5.4 5.4m0 -5.4l-5.4 5.4M854.8 424.8l5.4 5.4m0 -5.4l-5.4 5.4M854.1 433l5.4 5.4m0 -5.4l-5.4 5.4M853.4 441.2l5.4 5.4m0 -5.4l-5.4 5.4M852.6 449.2l5.4 5.4m0 -5.4l-5.4 5.4M851.8 457.2l5.4 5.4m0 -5.4l-5.4 5.4M851 465.1l5.4 5.4m0 -5.4l-5.4 5.4M850.2 472.9l5.4 5.4m0 -5.4l-5.4 5.4M849.4 480.6l5.4 5.4m0 -5.4l-5.4 5.4M848.5 488.2l5.4 5.4m0 -5.4l-5.4 5.4" stroke="#ff1010" stroke-width="1.05" stroke-dasharray="2.4 2.8 2.4" fill="none"/><path d="M464 183.9h6.8M467.4 180.5v6.8M463.2 191.6h6.8M466.6 188.2v6.8M462.4 199.4h6.8M465.8 196v6.8M461.6 207.2h6.8M465 203.8v6.8M460.8 215.1h6.8M464.2 211.7v6.8M460 223.1h6.8M463.4 219.7v6.8M459.3 231.2h6.8M462.7 227.8v6.8M458.6 239.4h6.8M462 236v6.8M458 247.6h6.8M461.4 244.2v6.8M457.4 255.9h6.8M460.8 252.5v6.8M456.9 264.3h6.8M460.3 260.9v6.8M456.4 272.8h6.8M459.8 269.4v6.8M455.9 281.3h6.8M459.3 277.9v6.8M455.6 289.8h6.8M459 286.4v6.8M455.3 298.4h6.8M458.7 295v6.8M455 307h6.8M458.4 303.6v6.8M454.9 315.7h6.8M458.3 312.3v6.8M454.7 324.4h6.8M458.1 321v6.8M454.7 333h6.8M458.1 329.6v6.8M454.7 341.7h6.8M458.1 338.3v6.8M454.8 350.4h6.8M458.2 347v6.8M455 359.1h6.8M458.4 355.7v6.8M455.2 367.7h6.8M458.6 364.3v6.8M455.5 376.3h6.8M458.9 372.9v6.8M455.8 384.9h6.8M459.2 381.5v6.8M456.2 393.4h6.8M459.6 390v6.8M456.7 401.8h6.8M460.1 398.4v6.8M457.2 410.2h6.8M460.6 406.8v6.8M457.8 418.6h6.8M461.2 415.2v6.8M458.4 426.9h6.8M461.8 423.5v6.8M459.1 435h6.8M462.5 431.6v6.8M459.8 443.2h6.8M463.2 439.8v6.8M460.5 451.2h6.8M463.9 447.8v6.8M461.3 459.1h6.8M464.7 455.7v6.8M462.1 467h6.8M465.5 463.6v6.8M462.9 474.8h6.8M466.3 471.4v6.8M463.7 482.5h6.8M467.1 479.1v6.8M464.6 490.1h6.8M468 486.7v6.8M471.3 183.1h6.8M474.7 179.7v6.8M470.5 190.8h6.8M473.9 187.4v6.8M469.6 198.5h6.8M473 195.1v6.8M468.8 206.4h6.8M472.2 203v6.8M468 214.3h6.8M471.4 210.9v6.8M467.3 222.4h6.8M470.7 219v6.8M466.5 230.5h6.8M469.9 227.1v6.8M465.8 238.7h6.8M469.2 235.3v6.8M465.2 247h6.8M468.6 243.6v6.8M464.6 255.4h6.8M468 252v6.8M464.1 263.8h6.8M467.5 260.4v6.8M463.6 272.3h6.8M467 268.9v6.8M463.2 280.9h6.8M466.6 277.5v6.8M462.8 289.5h6.8M466.2 286.1v6.8M462.5 298.1h6.8M465.9 294.7v6.8M462.2 306.8h6.8M465.6 303.4v6.8M462.1 315.5h6.8M465.5 312.1v6.8M462 324.3h6.8M465.4 320.9v6.8M461.9 333h6.8M465.3 329.6v6.8M461.9 341.8h6.8M465.3 338.4v6.8M462 350.5h6.8M465.4 347.1v6.8M462.2 359.2h6.8M465.6 355.8v6.8M462.4 367.9h6.8M465.8 364.5v6.8M462.7 376.6h6.8M466.1 373.2v6.8M463 385.2h6.8M466.4 381.8v6.8M463.4 393.8h6.8M466.8 390.4v6.8M463.9 402.3h6.8M467.3 398.9v6.8M464.4 410.8h6.8M467.8 407.4v6.8M465 419.2h6.8M468.4 415.8v6.8M465.6 427.5h6.8M469 424.1v6.8M466.3 435.7h6.8M469.7 432.3v6.8M467 443.9h6.8M470.4 440.5v6.8M467.7 452h6.8M471.1 448.6v6.8M468.5 459.9h6.8M471.9 456.5v6.8M469.3 467.8h6.8M472.7 464.4v6.8M470.2 475.6h6.8M473.6 472.2v6.8M471 483.3h6.8M474.4 479.9v6.8M471.9 491h6.8M475.3 487.6v6.8M478.7 182.2h6.8M482.1 178.8v6.8M477.8 189.9h6.8M481.2 186.5v6.8M477 197.7h6.8M480.4 194.3v6.8M476.1 205.6h6.8M479.5 202.2v6.8M475.4 213.6h6.8M478.8 210.2v6.8M474.6 221.6h6.8M478 218.2v6.8M473.9 229.8h6.8M477.3 226.4v6.8M473.2 238h6.8M476.6 234.6v6.8M472.5 246.4h6.8M475.9 243v6.8M472 254.8h6.8M475.4 251.4v6.8M471.4 263.3h6.8M474.8 259.9v6.8M470.9 271.8h6.8M474.3 268.4v6.8M470.5 280.5h6.8M473.9 277.1v6.8M470.1 289.1h6.8M473.5 285.7v6.8M469.8 297.8h6.8M473.2 294.4v6.8M469.6 306.6h6.8M473 303.2v6.8M469.4 315.4h6.8M472.8 312v6.8M469.3 324.2h6.8M472.7 320.8v6.8M469.3 333h6.8M472.7 329.6v6.8M469.3 341.8h6.8M472.7 338.4v6.8M469.4 350.6h6.8M472.8 347.2v6.8M469.5 359.4h6.8M472.9 356v6.8M469.7 368.2h6.8M473.1 364.8v6.8M470 376.9h6.8M473.4 373.5v6.8M470.4 385.6h6.8M473.8 382.2v6.8M470.8 394.3h6.8M474.2 390.9v6.8M471.2 402.8h6.8M474.6 399.4v6.8M471.8 411.3h6.8M475.2 407.9v6.8M472.3 419.8h6.8M475.7 416.4v6.8M472.9 428.2h6.8M476.3 424.8v6.8M473.6 436.4h6.8M477 433v6.8M474.3 444.6h6.8M477.7 441.2v6.8M475.1 452.7h6.8M478.5 449.3v6.8M475.9 460.7h6.8M479.3 457.3v6.8M476.7 468.7h6.8M480.1 465.3v6.8M477.5 476.5h6.8M480.9 473.1v6.8M478.4 484.2h6.8M481.8 480.8v6.8M479.2 491.9h6.8M482.6 488.5v6.8M486.1 181.3h6.8M489.5 177.9v6.8M485.2 189.1h6.8M488.6 185.7v6.8M484.4 196.9h6.8M487.8 193.5v6.8M483.6 204.8h6.8M487 201.4v6.8M482.8 212.8h6.8M486.2 209.4v6.8M482 220.9h6.8M485.4 217.5v6.8M481.3 229.1h6.8M484.7 225.7v6.8M480.6 237.4h6.8M484 234v6.8M480 245.8h6.8M483.4 242.4v6.8M479.4 254.2h6.8M482.8 250.8v6.8M478.9 262.8h6.8M482.3 259.4v6.8M478.4 271.4h6.8M481.8 268v6.8M478 280.1h6.8M481.4 276.7v6.8M477.6 288.8h6.8M481 285.4v6.8M477.3 297.6h6.8M480.7 294.2v6.8M477.1 306.4h6.8M480.5 303v6.8M476.9 315.2h6.8M480.3 311.8v6.8M476.8 324.1h6.8M480.2 320.7v6.8M476.8 333h6.8M480.2 329.6v6.8M476.8 341.9h6.8M480.2 338.5v6.8M476.9 350.8h6.8M480.3 347.4v6.8M477 359.6h6.8M480.4 356.2v6.8M477.2 368.4h6.8M480.6 365v6.8M477.5 377.2h6.8M480.9 373.8v6.8M477.9 386h6.8M481.3 382.6v6.8M478.3 394.7h6.8M481.7 391.3v6.8M478.7 403.3h6.8M482.1 399.9v6.8M479.2 411.9h6.8M482.6 408.5v6.8M479.8 420.4h6.8M483.2 417v6.8M480.4 428.8h6.8M483.8 425.4v6.8M481.1 437.1h6.8M484.5 433.7v6.8M481.8 445.4h6.8M485.2 442v6.8M482.5 453.5h6.8M485.9 450.1v6.8M483.3 461.5h6.8M486.7 458.1v6.8M484.1 469.5h6.8M487.5 466.1v6.8M484.9 477.3h6.8M488.3 473.9v6.8M485.8 485.1h6.8M489.2 481.7v6.8M486.7 492.7h6.8M490.1 489.3v6.8M493.6 180.5h6.8M497 177.1v6.8M492.8 188.2h6.8M496.2 184.8v6.8M492 196h6.8M495.4 192.6v6.8M491.1 204h6.8M494.5 200.6v6.8M490.4 212h6.8M493.8 208.6v6.8M489.6 220.2h6.8M493 216.8v6.8M488.9 228.4h6.8M492.3 225v6.8M488.2 236.7h6.8M491.6 233.3v6.8M487.6 245.2h6.8M491 241.8v6.8M487 253.7h6.8M490.4 250.3v6.8M486.5 262.3h6.8M489.9 258.9v6.8M486 270.9h6.8M489.4 267.5v6.8M485.6 279.7h6.8M489 276.3v6.8M485.3 288.5h6.8M488.7 285.1v6.8M485 297.3h6.8M488.4 293.9v6.8M484.7 306.2h6.8M488.1 302.8v6.8M484.6 315.1h6.8M488 311.7v6.8M484.5 324h6.8M487.9 320.6v6.8M484.4 333h6.8M487.8 329.6v6.8M484.4 341.9h6.8M487.8 338.5v6.8M484.5 350.9h6.8M487.9 347.5v6.8M484.7 359.8h6.8M488.1 356.4v6.8M484.9 368.7h6.8M488.3 365.3v6.8M485.2 377.5h6.8M488.6 374.1v6.8M485.5 386.4h6.8M488.9 383v6.8M485.9 395.1h6.8M489.3 391.7v6.8M486.3 403.8h6.8M489.7 400.4v6.8M486.8 412.4h6.8M490.2 409v6.8M487.4 421h6.8M490.8 417.6v6.8M488 429.4h6.8M491.4 426v6.8M488.7 437.8h6.8M492.1 434.4v6.8M489.4 446.1h6.8M492.8 442.7v6.8M490.1 454.3h6.8M493.5 450.9v6.8M490.9 462.3h6.8M494.3 458.9v6.8M491.7 470.3h6.8M495.1 466.9v6.8M492.5 478.2h6.8M495.9 474.8v6.8M493.3 485.9h6.8M496.7 482.5v6.8M494.2 493.6h6.8M497.6 490.2v6.8M501.3 179.6h6.8M504.7 176.2v6.8M500.4 187.4h6.8M503.8 184v6.8M499.6 195.2h6.8M503 191.8v6.8M498.8 203.2h6.8M502.2 199.8v6.8M498.1 211.2h6.8M501.5 207.8v6.8M497.3 219.4h6.8M500.7 216v6.8M496.6 227.7h6.8M500 224.3v6.8M496 236.1h6.8M499.4 232.7v6.8M495.4 244.6h6.8M498.8 241.2v6.8M494.8 253.1h6.8M498.2 249.7v6.8M494.3 261.8h6.8M497.7 258.4v6.8M493.8 270.5h6.8M497.2 267.1v6.8M493.4 279.3h6.8M496.8 275.9v6.8M493.1 288.1h6.8M496.5 284.7v6.8M492.8 297h6.8M496.2 293.6v6.8M492.5 306h6.8M495.9 302.6v6.8M492.4 315h6.8M495.8 311.6v6.8M492.3 324h6.8M495.7 320.6v6.8M492.2 333h6.8M495.6 329.6v6.8M492.3 342h6.8M495.7 338.6v6.8M492.3 351h6.8M495.7 347.6v6.8M492.5 360h6.8M495.9 356.6v6.8M492.7 368.9h6.8M496.1 365.5v6.8M493 377.8h6.8M496.4 374.4v6.8M493.3 386.7h6.8M496.7 383.3v6.8M493.7 395.5h6.8M497.1 392.1v6.8M494.1 404.3h6.8M497.5 400.9v6.8M494.6 413h6.8M498 409.6v6.8M495.1 421.6h6.8M498.5 418.2v6.8M495.7 430.1h6.8M499.1 426.7v6.8M496.4 438.5h6.8M499.8 435.1v6.8M497.1 446.8h6.8M500.5 443.4v6.8M497.8 455h6.8M501.2 451.6v6.8M498.5 463.1h6.8M501.9 459.7v6.8M499.3 471.1h6.8M502.7 467.7v6.8M500.1 479h6.8M503.5 475.6v6.8M501 486.8h6.8M504.4 483.4v6.8M501.8 494.5h6.8M505.2 491.1v6.8M509 178.8h6.8M512.4 175.4v6.8M508.2 186.5h6.8M511.6 183.1v6.8M507.4 194.4h6.8M510.8 191v6.8M506.6 202.4h6.8M510 199v6.8M505.9 210.5h6.8M509.3 207.1v6.8M505.2 218.7h6.8M508.6 215.3v6.8M504.5 227h6.8M507.9 223.6v6.8M503.8 235.5h6.8M507.2 232.1v6.8M503.2 244h6.8M506.6 240.6v6.8M502.7 252.6h6.8M506.1 249.2v6.8M502.2 261.3h6.8M505.6 257.9v6.8M501.7 270.1h6.8M505.1 266.7v6.8M501.3 278.9h6.8M504.7 275.5v6.8M501 287.8h6.8M504.4 284.4v6.8M500.7 296.8h6.8M504.1 293.4v6.8M500.5 305.8h6.8M503.9 302.4v6.8M500.3 314.8h6.8M503.7 311.4v6.8M500.2 323.9h6.8M503.6 320.5v6.8M500.2 333h6.8M503.6 329.6v6.8M500.2 342h6.8M503.6 338.6v6.8M500.3 351.1h6.8M503.7 347.7v6.8M500.4 360.1h6.8M503.8 356.7v6.8M500.6 369.2h6.8M504 365.8v6.8M500.9 378.1h6.8M504.3 374.7v6.8M501.2 387.1h6.8M504.6 383.7v6.8M501.6 395.9h6.8M505 392.5v6.8M502 404.7h6.8M505.4 401.3v6.8M502.5 413.5h6.8M505.9 410.1v6.8M503 422.1h6.8M506.4 418.7v6.8M503.6 430.7h6.8M507 427.3v6.8M504.2 439.1h6.8M507.6 435.7v6.8M504.9 447.5h6.8M508.3 444.1v6.8M505.6 455.7h6.8M509 452.3v6.8M506.4 463.9h6.8M509.8 460.5v6.8M507.1 471.9h6.8M510.5 468.5v6.8M507.9 479.8h6.8M511.3 476.4v6.8M508.7 487.6h6.8M512.1 484.2v6.8M509.6 495.3h6.8M513 491.9v6.8M516.9 177.9h6.8M520.3 174.5v6.8M516.1 185.7h6.8M519.5 182.3v6.8M515.3 193.6h6.8M518.7 190.2v6.8M514.6 201.6h6.8M518 198.2v6.8M513.8 209.8h6.8M517.2 206.4v6.8M513.1 218h6.8M516.5 214.6v6.8M512.5 226.4h6.8M515.9 223v6.8M511.8 234.8h6.8M515.2 231.4v6.8M511.3 243.4h6.8M514.7 240v6.8M510.7 252.1h6.8M514.1 248.7v6.8M510.3 260.8h6.8M513.7 257.4v6.8M509.8 269.7h6.8M513.2 266.3v6.8M509.4 278.6h6.8M512.8 275.2v6.8M509.1 287.5h6.8M512.5 284.1v6.8M508.8 296.5h6.8M512.2 293.1v6.8M508.6 305.6h6.8M512 302.2v6.8M508.5 314.7h6.8M511.9 311.3v6.8M508.4 323.8h6.8M511.8 320.4v6.8M508.3 333h6.8M511.7 329.6v6.8M508.3 342.1h6.8M511.7 338.7v6.8M508.4 351.2h6.8M511.8 347.8v6.8M508.6 360.3h6.8M512 356.9v6.8M508.8 369.4h6.8M512.2 366v6.8M509 378.4h6.8M512.4 375v6.8M509.3 387.4h6.8M512.7 384v6.8M509.7 396.3h6.8M513.1 392.9v6.8M510.1 405.2h6.8M513.5 401.8v6.8M510.6 414h6.8M514 410.6v6.8M511.1 422.7h6.8M514.5 419.3v6.8M511.6 431.3h6.8M515 427.9v6.8M512.2 439.8h6.8M515.6 436.4v6.8M512.9 448.2h6.8M516.3 444.8v6.8M513.6 456.5h6.8M517 453.1v6.8M514.3 464.6h6.8M517.7 461.2v6.8M515 472.7h6.8M518.4 469.3v6.8M515.8 480.6h6.8M519.2 477.2v6.8M516.6 488.5h6.8M520 485.1v6.8M517.4 496.2h6.8M520.8 492.8v6.8M524.9 177.1h6.8M528.3 173.7v6.8M524.1 184.9h6.8M527.5 181.5v6.8M523.3 192.9h6.8M526.7 189.5v6.8M522.6 200.9h6.8M526 197.5v6.8M521.9 209.1h6.8M525.3 205.7v6.8M521.2 217.3h6.8M524.6 213.9v6.8M520.6 225.7h6.8M524 222.3v6.8M520 234.2h6.8M523.4 230.8v6.8M519.4 242.9h6.8M522.8 239.5v6.8M518.9 251.6h6.8M522.3 248.2v6.8M518.5 260.4h6.8M521.9 257v6.8M518 269.2h6.8M521.4 265.8v6.8M517.7 278.2h6.8M521.1 274.8v6.8M517.4 287.2h6.8M520.8 283.8v6.8M517.1 296.3h6.8M520.5 292.9v6.8M516.9 305.4h6.8M520.3 302v6.8M516.7 314.6h6.8M520.1 311.2v6.8M516.6 323.7h6.8M520 320.3v6.8M516.6 332.9h6.8M520 329.5v6.8M516.6 342.1h6.8M520 338.7v6.8M516.7 351.3h6.8M520.1 347.9v6.8M516.8 360.5h6.8M520.2 357.1v6.8M517 369.6h6.8M520.4 366.2v6.8M517.3 378.7h6.8M520.7 375.3v6.8M517.6 387.7h6.8M521 384.3v6.8M517.9 396.7h6.8M521.3 393.3v6.8M518.3 405.6h6.8M521.7 402.2v6.8M518.8 414.5h6.8M522.2 411.1v6.8M519.2 423.2h6.8M522.6 419.8v6.8M519.8 431.9h6.8M523.2 428.5v6.8M520.4 440.4h6.8M523.8 437v6.8M521 448.8h6.8M524.4 445.4v6.8M521.7 457.2h6.8M525.1 453.8v6.8M522.4 465.4h6.8M525.8 462v6.8M523.1 473.5h6.8M526.5 470.1v6.8M523.8 481.4h6.8M527.2 478v6.8M524.6 489.3h6.8M528 485.9v6.8M525.4 497h6.8M528.8 493.6v6.8M533 176.4h6.8M536.4 173v6.8M532.2 184.2h6.8M535.6 180.8v6.8M531.5 192.1h6.8M534.9 188.7v6.8M530.8 200.2h6.8M534.2 196.8v6.8M530.1 208.4h6.8M533.5 205v6.8M529.5 216.7h6.8M532.9 213.3v6.8M528.9 225.1h6.8M532.3 221.7v6.8M528.3 233.7h6.8M531.7 230.3v6.8M527.7 242.3h6.8M531.1 238.9v6.8M527.3 251.1h6.8M530.7 247.7v6.8M526.8 259.9h6.8M530.2 256.5v6.8M526.4 268.9h6.8M529.8 265.5v6.8M526.1 277.9h6.8M529.5 274.5v6.8M525.8 286.9h6.8M529.2 283.5v6.8M525.5 296.1h6.8M528.9 292.7v6.8M525.3 305.2h6.8M528.7 301.8v6.8M525.2 314.4h6.8M528.6 311v6.8M525.1 323.7h6.8M528.5 320.3v6.8M525 332.9h6.8M528.4 329.5v6.8M525.1 342.2h6.8M528.5 338.8v6.8M525.1 351.4h6.8M528.5 348v6.8M525.2 360.6h6.8M528.6 357.2v6.8M525.4 369.8h6.8M528.8 366.4v6.8M525.7 379h6.8M529.1 375.6v6.8M525.9 388.1h6.8M529.3 384.7v6.8M526.3 397.1h6.8M529.7 393.7v6.8M526.7 406.1h6.8M530.1 402.7v6.8M527.1 414.9h6.8M530.5 411.5v6.8M527.6 423.7h6.8M531 420.3v6.8M528.1 432.4h6.8M531.5 429v6.8M528.6 441h6.8M532 437.6v6.8M529.2 449.5h6.8M532.6 446.1v6.8M529.9 457.8h6.8M533.3 454.4v6.8M530.5 466.1h6.8M533.9 462.7v6.8M531.2 474.2h6.8M534.6 470.8v6.8M532 482.2h6.8M535.4 478.8v6.8M532.7 490h6.8M536.1 486.6v6.8M533.5 497.8h6.8M536.9 494.4v6.8M541.2 175.6h6.8M544.6 172.2v6.8M540.4 183.4h6.8M543.8 180v6.8M539.8 191.4h6.8M543.2 188v6.8M539.1 199.5h6.8M542.5 196.1v6.8M538.4 207.7h6.8M541.8 204.3v6.8M537.8 216.1h6.8M541.2 212.7v6.8M537.2 224.5h6.8M540.6 221.1v6.8M536.7 233.1h6.8M540.1 229.7v6.8M536.2 241.8h6.8M539.6 238.4v6.8M535.7 250.6h6.8M539.1 247.2v6.8M535.3 259.5h6.8M538.7 256.1v6.8M534.9 268.5h6.8M538.3 265.1v6.8M534.6 277.5h6.8M538 274.1v6.8M534.3 286.7h6.8M537.7 283.3v6.8M534.1 295.8h6.8M537.5 292.4v6.8M533.9 305.1h6.8M537.3 301.7v6.8M533.7 314.3h6.8M537.1 310.9v6.8M533.6 323.6h6.8M537 320.2v6.8M533.6 332.9h6.8M537 329.5v6.8M533.6 342.2h6.8M537 338.8v6.8M533.7 351.5h6.8M537.1 348.1v6.8M533.8 360.8h6.8M537.2 357.4v6.8M534 370h6.8M537.4 366.6v6.8M534.2 379.2h6.8M537.6 375.8v6.8M534.5 388.4h6.8M537.9 385v6.8M534.8 397.4h6.8M538.2 394v6.8M535.2 406.5h6.8M538.6 403.1v6.8M535.6 415.4h6.8M539 412v6.8M536 424.2h6.8M539.4 420.8v6.8M536.5 432.9h6.8M539.9 429.5v6.8M537 441.6h6.8M540.4 438.2v6.8M537.6 450.1h6.8M541 446.7v6.8M538.2 458.5h6.8M541.6 455.1v6.8M538.8 466.7h6.8M542.2 463.3v6.8M539.5 474.9h6.8M542.9 471.5v6.8M540.2 482.9h6.8M543.6 479.5v6.8M540.9 490.8h6.8M544.3 487.4v6.8M541.6 498.5h6.8M545 495.1v6.8M549.5 174.9h6.8M552.9 171.5v6.8M548.8 182.8h6.8M552.2 179.4v6.8M548.1 190.7h6.8M551.5 187.3v6.8M547.5 198.9h6.8M550.9 195.5v6.8M546.9 207.1h6.8M550.3 203.7v6.8M546.3 215.5h6.8M549.7 212.1v6.8M545.8 224h6.8M549.2 220.6v6.8M545.2 232.6h6.8M548.6 229.2v6.8M544.8 241.4h6.8M548.2 238v6.8M544.3 250.2h6.8M547.7 246.8v6.8M543.9 259.1h6.8M547.3 255.7v6.8M543.6 268.1h6.8M547 264.7v6.8M543.3 277.2h6.8M546.7 273.8v6.8M543 286.4h6.8M546.4 283v6.8M542.8 295.6h6.8M546.2 292.2v6.8M542.6 304.9h6.8M546 301.5v6.8M542.5 314.2h6.8M545.9 310.8v6.8M542.4 323.6h6.8M545.8 320.2v6.8M542.3 332.9h6.8M545.7 329.5v6.8M542.4 342.3h6.8M545.8 338.9v6.8M542.4 351.6h6.8M545.8 348.2v6.8M542.5 360.9h6.8M545.9 357.5v6.8M542.7 370.2h6.8M546.1 366.8v6.8M542.9 379.5h6.8M546.3 376.1v6.8M543.1 388.7h6.8M546.5 385.3v6.8M543.4 397.8h6.8M546.8 394.4v6.8M543.8 406.8h6.8M547.2 403.4v6.8M544.2 415.8h6.8M547.6 412.4v6.8M544.6 424.7h6.8M548 421.3v6.8M545.1 433.4h6.8M548.5 430v6.8M545.6 442.1h6.8M549 438.7v6.8M546.1 450.6h6.8M549.5 447.2v6.8M546.7 459.1h6.8M550.1 455.7v6.8M547.3 467.4h6.8M550.7 464v6.8M547.9 475.5h6.8M551.3 472.1v6.8M548.6 483.6h6.8M552 480.2v6.8M549.2 491.5h6.8M552.6 488.1v6.8M549.9 499.3h6.8M553.3 495.9v6.8M557.9 174.2h6.8M561.3 170.8v6.8M557.2 182.1h6.8M560.6 178.7v6.8M556.6 190.1h6.8M560 186.7v6.8M556 198.3h6.8M559.4 194.9v6.8M555.5 206.5h6.8M558.9 203.1v6.8M554.9 214.9h6.8M558.3 211.5v6.8M554.4 223.5h6.8M557.8 220.1v6.8M553.9 232.1h6.8M557.3 228.7v6.8M553.5 240.9h6.8M556.9 237.5v6.8M553.1 249.8h6.8M556.5 246.4v6.8M552.7 258.8h6.8M556.1 255.4v6.8M552.3 267.8h6.8M555.7 264.4v6.8M552.1 277h6.8M555.5 273.6v6.8M551.8 286.2h6.8M555.2 282.8v6.8M551.6 295.4h6.8M555 292v6.8M551.4 304.8h6.8M554.8 301.4v6.8M551.3 314.1h6.8M554.7 310.7v6.8M551.2 323.5h6.8M554.6 320.1v6.8M551.2 332.9h6.8M554.6 329.5v6.8M551.2 342.3h6.8M554.6 338.9v6.8M551.3 351.7h6.8M554.7 348.3v6.8M551.4 361.1h6.8M554.8 357.7v6.8M551.5 370.4h6.8M554.9 367v6.8M551.7 379.7h6.8M555.1 376.3v6.8M552 388.9h6.8M555.4 385.5v6.8M552.2 398.1h6.8M555.6 394.7v6.8M552.6 407.2h6.8M556 403.8v6.8M552.9 416.2h6.8M556.3 412.8v6.8M553.3 425.1h6.8M556.7 421.7v6.8M553.8 433.9h6.8M557.2 430.5v6.8M554.2 442.6h6.8M557.6 439.2v6.8M554.7 451.2h6.8M558.1 447.8v6.8M555.3 459.6h6.8M558.7 456.2v6.8M555.8 468h6.8M559.2 464.6v6.8M556.4 476.2h6.8M559.8 472.8v6.8M557 484.2h6.8M560.4 480.8v6.8M557.6 492.1h6.8M561 488.7v6.8M558.3 499.9h6.8M561.7 496.5v6.8M566.4 173.6h6.8M569.8 170.2v6.8M565.8 181.5h6.8M569.2 178.1v6.8M565.2 189.5h6.8M568.6 186.1v6.8M564.7 197.7h6.8M568.1 194.3v6.8M564.1 206h6.8M567.5 202.6v6.8M563.6 214.4h6.8M567 211v6.8M563.2 223h6.8M566.6 219.6v6.8M562.7 231.7h6.8M566.1 228.3v6.8M562.3 240.5h6.8M565.7 237.1v6.8M561.9 249.4h6.8M565.3 246v6.8M561.6 258.4h6.8M565 255v6.8M561.3 267.5h6.8M564.7 264.1v6.8M561 276.7h6.8M564.4 273.3v6.8M560.7 285.9h6.8M564.1 282.5v6.8M560.6 295.3h6.8M564 291.9v6.8M560.4 304.6h6.8M563.8 301.2v6.8M560.3 314h6.8M563.7 310.6v6.8M560.2 323.5h6.8M563.6 320.1v6.8M560.2 332.9h6.8M563.6 329.5v6.8M560.2 342.3h6.8M563.6 338.9v6.8M560.3 351.8h6.8M563.7 348.4v6.8M560.4 361.2h6.8M563.8 357.8v6.8M560.5 370.6h6.8M563.9 367.2v6.8M560.7 379.9h6.8M564.1 376.5v6.8M560.9 389.2h6.8M564.3 385.8v6.8M561.1 398.4h6.8M564.5 395v6.8M561.4 407.5h6.8M564.8 404.1v6.8M561.8 416.6h6.8M565.2 413.2v6.8M562.1 425.5h6.8M565.5 422.1v6.8M562.6 434.3h6.8M566 430.9v6.8M563 443.1h6.8M566.4 439.7v6.8M563.5 451.7h6.8M566.9 448.3v6.8M563.9 460.2h6.8M567.3 456.8v6.8M564.5 468.5h6.8M567.9 465.1v6.8M565 476.7h6.8M568.4 473.3v6.8M565.6 484.8h6.8M569 481.4v6.8M566.2 492.8h6.8M569.6 489.4v6.8M566.8 500.6h6.8M570.2 497.2v6.8M575 173h6.8M578.4 169.6v6.8M574.4 180.9h6.8M577.8 177.5v6.8M573.9 189h6.8M577.3 185.6v6.8M573.4 197.2h6.8M576.8 193.8v6.8M572.9 205.5h6.8M576.3 202.1v6.8M572.5 214h6.8M575.9 210.6v6.8M572 222.6h6.8M575.4 219.2v6.8M571.6 231.3h6.8M575 227.9v6.8M571.2 240.1h6.8M574.6 236.7v6.8M570.9 249h6.8M574.3 245.6v6.8M570.6 258.1h6.8M574 254.7v6.8M570.3 267.2h6.8M573.7 263.8v6.8M570 276.4h6.8M573.4 273v6.8M569.8 285.7h6.8M573.2 282.3v6.8M569.6 295.1h6.8M573 291.7v6.8M569.5 304.5h6.8M572.9 301.1v6.8M569.4 313.9h6.8M572.8 310.5v6.8M569.3 323.4h6.8M572.7 320v6.8M569.3 332.9h6.8M572.7 329.5v6.8M569.3 342.4h6.8M572.7 339v6.8M569.4 351.8h6.8M572.8 348.4v6.8M569.4 361.3h6.8M572.8 357.9v6.8M569.6 370.7h6.8M573 367.3v6.8M569.7 380.1h6.8M573.1 376.7v6.8M569.9 389.4h6.8M573.3 386v6.8M570.2 398.6h6.8M573.6 395.2v6.8M570.5 407.8h6.8M573.9 404.4v6.8M570.8 416.9h6.8M574.2 413.5v6.8M571.1 425.9h6.8M574.5 422.5v6.8M571.5 434.8h6.8M574.9 431.4v6.8M571.9 443.5h6.8M575.3 440.1v6.8M572.3 452.2h6.8M575.7 448.8v6.8M572.7 460.7h6.8M576.1 457.3v6.8M573.2 469h6.8M576.6 465.6v6.8M573.7 477.3h6.8M577.1 473.9v6.8M574.2 485.4h6.8M577.6 482v6.8M574.8 493.3h6.8M578.2 489.9v6.8M575.3 501.2h6.8M578.7 497.8v6.8M583.7 172.5h6.8M587.1 169.1v6.8M583.2 180.4h6.8M586.6 177v6.8M582.7 188.5h6.8M586.1 185.1v6.8M582.2 196.7h6.8M585.6 193.3v6.8M581.8 205h6.8M585.2 201.6v6.8M581.4 213.5h6.8M584.8 210.1v6.8M581 222.1h6.8M584.4 218.7v6.8M580.6 230.9h6.8M584 227.5v6.8M580.3 239.8h6.8M583.7 236.4v6.8M579.9 248.7h6.8M583.3 245.3v6.8M579.7 257.8h6.8M583.1 254.4v6.8M579.4 267h6.8M582.8 263.6v6.8M579.2 276.2h6.8M582.6 272.8v6.8M579 285.6h6.8M582.4 282.2v6.8M578.8 294.9h6.8M582.2 291.5v6.8M578.7 304.4h6.8M582.1 301v6.8M578.6 313.9h6.8M582 310.5v6.8M578.5 323.4h6.8M581.9 320v6.8M578.5 332.9h6.8M581.9 329.5v6.8M578.5 342.4h6.8M581.9 339v6.8M578.6 351.9h6.8M582 348.5v6.8M578.7 361.4h6.8M582.1 358v6.8M578.8 370.9h6.8M582.2 367.5v6.8M578.9 380.3h6.8M582.3 376.9v6.8M579.1 389.6h6.8M582.5 386.2v6.8M579.3 398.9h6.8M582.7 395.5v6.8M579.6 408.1h6.8M583 404.7v6.8M579.8 417.2h6.8M583.2 413.8v6.8M580.1 426.2h6.8M583.5 422.8v6.8M580.5 435.1h6.8M583.9 431.7v6.8M580.8 443.9h6.8M584.2 440.5v6.8M581.2 452.6h6.8M584.6 449.2v6.8M581.6 461.1h6.8M585 457.7v6.8M582.1 469.5h6.8M585.5 466.1v6.8M582.5 477.8h6.8M585.9 474.4v6.8M583 485.9h6.8M586.4 482.5v6.8M583.5 493.9h6.8M586.9 490.5v6.8M584 501.7h6.8M587.4 498.3v6.8M592.4 172h6.8M595.8 168.6v6.8M592 180h6.8M595.4 176.6v6.8M591.6 188h6.8M595 184.6v6.8M591.2 196.3h6.8M594.6 192.9v6.8M590.8 204.6h6.8M594.2 201.2v6.8M590.4 213.1h6.8M593.8 209.7v6.8M590 221.8h6.8M593.4 218.4v6.8M589.7 230.5h6.8M593.1 227.1v6.8M589.4 239.4h6.8M592.8 236v6.8M589.1 248.4h6.8M592.5 245v6.8M588.9 257.5h6.8M592.3 254.1v6.8M588.6 266.7h6.8M592 263.3v6.8M588.4 276h6.8M591.8 272.6v6.8M588.3 285.4h6.8M591.7 282v6.8M588.1 294.8h6.8M591.5 291.4v6.8M588 304.3h6.8M591.4 300.9v6.8M587.9 313.8h6.8M591.3 310.4v6.8M587.9 323.3h6.8M591.3 319.9v6.8M587.8 332.9h6.8M591.2 329.5v6.8M587.9 342.4h6.8M591.3 339v6.8M587.9 352h6.8M591.3 348.6v6.8M588 361.5h6.8M591.4 358.1v6.8M588.1 371h6.8M591.5 367.6v6.8M588.2 380.4h6.8M591.6 377v6.8M588.4 389.8h6.8M591.8 386.4v6.8M588.6 399.1h6.8M592 395.7v6.8M588.8 408.3h6.8M592.2 404.9v6.8M589 417.5h6.8M592.4 414.1v6.8M589.3 426.5h6.8M592.7 423.1v6.8M589.6 435.5h6.8M593 432.1v6.8M589.9 444.3h6.8M593.3 440.9v6.8M590.3 453h6.8M593.7 449.6v6.8M590.6 461.5h6.8M594 458.1v6.8M591 469.9h6.8M594.4 466.5v6.8M591.4 478.2h6.8M594.8 474.8v6.8M591.8 486.3h6.8M595.2 482.9v6.8M592.3 494.3h6.8M595.7 490.9v6.8M592.7 502.2h6.8M596.1 498.8v6.8M601.3 171.6h6.8M604.7 168.2v6.8M600.9 179.5h6.8M604.3 176.1v6.8M600.5 187.6h6.8M603.9 184.2v6.8M600.2 195.9h6.8M603.6 192.5v6.8M599.8 204.3h6.8M603.2 200.9v6.8M599.5 212.8h6.8M602.9 209.4v6.8M599.2 221.5h6.8M602.6 218.1v6.8M598.9 230.2h6.8M602.3 226.8v6.8M598.6 239.2h6.8M602 235.8v6.8M598.4 248.2h6.8M601.8 244.8v6.8M598.2 257.3h6.8M601.6 253.9v6.8M597.9 266.5h6.8M601.3 263.1v6.8M597.8 275.9h6.8M601.2 272.5v6.8M597.6 285.2h6.8M601 281.8v6.8M597.5 294.7h6.8M600.9 291.3v6.8M597.4 304.2h6.8M600.8 300.8v6.8M597.3 313.7h6.8M600.7 310.3v6.8M597.3 323.3h6.8M600.7 319.9v6.8M597.3 332.9h6.8M600.7 329.5v6.8M597.3 342.5h6.8M600.7 339.1v6.8M597.3 352h6.8M600.7 348.6v6.8M597.4 361.6h6.8M600.8 358.2v6.8M597.5 371.1h6.8M600.9 367.7v6.8M597.6 380.6h6.8M601 377.2v6.8M597.7 390h6.8M601.1 386.6v6.8M597.9 399.3h6.8M601.3 395.9v6.8M598.1 408.6h6.8M601.5 405.2v6.8M598.3 417.7h6.8M601.7 414.3v6.8M598.5 426.8h6.8M601.9 423.4v6.8M598.8 435.7h6.8M602.2 432.3v6.8M599.1 444.6h6.8M602.5 441.2v6.8M599.4 453.3h6.8M602.8 449.9v6.8M599.7 461.9h6.8M603.1 458.5v6.8M600 470.3h6.8M603.4 466.9v6.8M600.4 478.6h6.8M603.8 475.2v6.8M600.8 486.8h6.8M604.2 483.4v6.8M601.1 494.8h6.8M604.5 491.4v6.8M601.5 502.6h6.8M604.9 499.2v6.8M610.2 171.2h6.8M613.6 167.8v6.8M609.9 179.2h6.8M613.3 175.8v6.8M609.5 187.3h6.8M612.9 183.9v6.8M609.2 195.6h6.8M612.6 192.2v6.8M608.9 204h6.8M612.3 200.6v6.8M608.7 212.5h6.8M612.1 209.1v6.8M608.4 221.2h6.8M611.8 217.8v6.8M608.1 230h6.8M611.5 226.6v6.8M607.9 238.9h6.8M611.3 235.5v6.8M607.7 248h6.8M611.1 244.6v6.8M607.5 257.1h6.8M610.9 253.7v6.8M607.3 266.4h6.8M610.7 263v6.8M607.2 275.7h6.8M610.6 272.3v6.8M607.1 285.1h6.8M610.5 281.7v6.8M607 294.6h6.8M610.4 291.2v6.8M606.9 304.1h6.8M610.3 300.7v6.8M606.8 313.7h6.8M610.2 310.3v6.8M606.8 323.3h6.8M610.2 319.9v6.8M606.8 332.9h6.8M610.2 329.5v6.8M606.8 342.5h6.8M610.2 339.1v6.8M606.8 352.1h6.8M610.2 348.7v6.8M606.9 361.6h6.8M610.3 358.2v6.8M606.9 371.2h6.8M610.3 367.8v6.8M607 380.7h6.8M610.4 377.3v6.8M607.1 390.1h6.8M610.5 386.7v6.8M607.3 399.5h6.8M610.7 396.1v6.8M607.5 408.8h6.8M610.9 405.4v6.8M607.6 417.9h6.8M611 414.5v6.8M607.8 427h6.8M611.2 423.6v6.8M608.1 436h6.8M611.5 432.6v6.8M608.3 444.9h6.8M611.7 441.5v6.8M608.6 453.6h6.8M612 450.2v6.8M608.8 462.2h6.8M612.2 458.8v6.8M609.1 470.6h6.8M612.5 467.2v6.8M609.4 478.9h6.8M612.8 475.5v6.8M609.7 487.1h6.8M613.1 483.7v6.8M610.1 495.1h6.8M613.5 491.7v6.8M610.4 503h6.8M613.8 499.6v6.8M619.1 170.9h6.8M622.5 167.5v6.8M618.9 178.9h6.8M622.3 175.5v6.8M618.6 187h6.8M622 183.6v6.8M618.4 195.3h6.8M621.8 191.9v6.8M618.1 203.7h6.8M621.5 200.3v6.8M617.9 212.2h6.8M621.3 208.8v6.8M617.7 220.9h6.8M621.1 217.5v6.8M617.5 229.8h6.8M620.9 226.4v6.8M617.3 238.7h6.8M620.7 235.3v6.8M617.1 247.8h6.8M620.5 244.4v6.8M616.9 256.9h6.8M620.3 253.5v6.8M616.8 266.2h6.8M620.2 262.8v6.8M616.7 275.6h6.8M620.1 272.2v6.8M616.6 285h6.8M620 281.6v6.8M616.5 294.5h6.8M619.9 291.1v6.8M616.4 304h6.8M619.8 300.6v6.8M616.4 313.6h6.8M619.8 310.2v6.8M616.3 323.2h6.8M619.7 319.8v6.8M616.3 332.9h6.8M619.7 329.5v6.8M616.3 342.5h6.8M619.7 339.1v6.8M616.4 352.1h6.8M619.8 348.7v6.8M616.4 361.7h6.8M619.8 358.3v6.8M616.5 371.3h6.8M619.9 367.9v6.8M616.5 380.8h6.8M619.9 377.4v6.8M616.6 390.2h6.8M620 386.8v6.8M616.8 399.6h6.8M620.2 396.2v6.8M616.9 408.9h6.8M620.3 405.5v6.8M617 418.1h6.8M620.4 414.7v6.8M617.2 427.2h6.8M620.6 423.8v6.8M617.4 436.2h6.8M620.8 432.8v6.8M617.6 445.1h6.8M621 441.7v6.8M617.8 453.8h6.8M621.2 450.4v6.8M618 462.4h6.8M621.4 459v6.8M618.3 470.9h6.8M621.7 467.5v6.8M618.5 479.2h6.8M621.9 475.8v6.8M618.8 487.4h6.8M622.2 484v6.8M619 495.4h6.8M622.4 492v6.8M619.3 503.3h6.8M622.7 499.9v6.8M628.2 170.7h6.8M631.6 167.3v6.8M627.9 178.7h6.8M631.3 175.3v6.8M627.7 186.8h6.8M631.1 183.4v6.8M627.5 195.1h6.8M630.9 191.7v6.8M627.3 203.5h6.8M630.7 200.1v6.8M627.2 212h6.8M630.6 208.6v6.8M627 220.8h6.8M630.4 217.4v6.8M626.8 229.6h6.8M630.2 226.2v6.8M626.7 238.6h6.8M630.1 235.2v6.8M626.6 247.6h6.8M630 244.2v6.8M626.4 256.8h6.8M629.8 253.4v6.8M626.3 266.1h6.8M629.7 262.7v6.8M626.2 275.5h6.8M629.6 272.1v6.8M626.1 284.9h6.8M629.5 281.5v6.8M626.1 294.4h6.8M629.5 291v6.8M626 304h6.8M629.4 300.6v6.8M626 313.6h6.8M629.4 310.2v6.8M626 323.2h6.8M629.4 319.8v6.8M626 332.9h6.8M629.4 329.5v6.8M626 342.5h6.8M629.4 339.1v6.8M626 352.1h6.8M629.4 348.7v6.8M626 361.8h6.8M629.4 358.4v6.8M626.1 371.3h6.8M629.5 367.9v6.8M626.1 380.9h6.8M629.5 377.5v6.8M626.2 390.3h6.8M629.6 386.9v6.8M626.3 399.7h6.8M629.7 396.3v6.8M626.4 409h6.8M629.8 405.6v6.8M626.5 418.3h6.8M629.9 414.9v6.8M626.6 427.4h6.8M630 424v6.8M626.8 436.4h6.8M630.2 433v6.8M626.9 445.3h6.8M630.3 441.9v6.8M627.1 454h6.8M630.5 450.6v6.8M627.3 462.6h6.8M630.7 459.2v6.8M627.5 471.1h6.8M630.9 467.7v6.8M627.7 479.5h6.8M631.1 476.1v6.8M627.9 487.6h6.8M631.3 484.2v6.8M628.1 495.7h6.8M631.5 492.3v6.8M628.3 503.5h6.8M631.7 500.1v6.8M637.2 170.5h6.8M640.6 167.1v6.8M637 178.5h6.8M640.4 175.1v6.8M636.9 186.6h6.8M640.3 183.2v6.8M636.8 194.9h6.8M640.2 191.5v6.8M636.6 203.3h6.8M640 199.9v6.8M636.5 211.9h6.8M639.9 208.5v6.8M636.4 220.6h6.8M639.8 217.2v6.8M636.3 229.5h6.8M639.7 226.1v6.8M636.2 238.4h6.8M639.6 235v6.8M636.1 247.5h6.8M639.5 244.1v6.8M636 256.7h6.8M639.4 253.3v6.8M635.9 266h6.8M639.3 262.6v6.8M635.8 275.4h6.8M639.2 272v6.8M635.8 284.8h6.8M639.2 281.4v6.8M635.7 294.4h6.8M639.1 291v6.8M635.7 303.9h6.8M639.1 300.5v6.8M635.6 313.6h6.8M639 310.2v6.8M635.6 323.2h6.8M639 319.8v6.8M635.6 332.9h6.8M639 329.5v6.8M635.6 342.5h6.8M639 339.1v6.8M635.6 352.2h6.8M639 348.8v6.8M635.7 361.8h6.8M639.1 358.4v6.8M635.7 371.4h6.8M639.1 368v6.8M635.7 380.9h6.8M639.1 377.5v6.8M635.8 390.4h6.8M639.2 387v6.8M635.9 399.8h6.8M639.3 396.4v6.8M635.9 409.1h6.8M639.3 405.7v6.8M636 418.4h6.8M639.4 415v6.8M636.1 427.5h6.8M639.5 424.1v6.8M636.2 436.5h6.8M639.6 433.1v6.8M636.3 445.4h6.8M639.7 442v6.8M636.4 454.2h6.8M639.8 450.8v6.8M636.6 462.8h6.8M640 459.4v6.8M636.7 471.3h6.8M640.1 467.9v6.8M636.8 479.6h6.8M640.2 476.2v6.8M637 487.8h6.8M640.4 484.4v6.8M637.1 495.8h6.8M640.5 492.4v6.8M637.3 503.7h6.8M640.7 500.3v6.8M646.3 170.4h6.8M649.7 167v6.8M646.2 178.4h6.8M649.6 175v6.8M646.1 186.5h6.8M649.5 183.1v6.8M646 194.8h6.8M649.4 191.4v6.8M645.9 203.2h6.8M649.3 199.8v6.8M645.8 211.8h6.8M649.2 208.4v6.8M645.8 220.5h6.8M649.2 217.1v6.8M645.7 229.4h6.8M649.1 226v6.8M645.6 238.3h6.8M649 234.9v6.8M645.6 247.4h6.8M649 244v6.8M645.5 256.6h6.8M648.9 253.2v6.8M645.5 266h6.8M648.9 262.6v6.8M645.4 275.3h6.8M648.8 271.9v6.8M645.4 284.8h6.8M648.8 281.4v6.8M645.4 294.3h6.8M648.8 290.9v6.8M645.4 303.9h6.8M648.8 300.5v6.8M645.3 313.5h6.8M648.7 310.1v6.8M645.3 323.2h6.8M648.7 319.8v6.8M645.3 332.9h6.8M648.7 329.5v6.8M645.3 342.5h6.8M648.7 339.1v6.8M645.3 352.2h6.8M648.7 348.8v6.8M645.3 361.8h6.8M648.7 358.4v6.8M645.4 371.4h6.8M648.8 368v6.8M645.4 381h6.8M648.8 377.6v6.8M645.4 390.5h6.8M648.8 387.1v6.8M645.5 399.9h6.8M648.9 396.5v6.8M645.5 409.2h6.8M648.9 405.8v6.8M645.6 418.4h6.8M649 415v6.8M645.6 427.6h6.8M649 424.2v6.8M645.7 436.6h6.8M649.1 433.2v6.8M645.7 445.5h6.8M649.1 442.1v6.8M645.8 454.3h6.8M649.2 450.9v6.8M645.9 462.9h6.8M649.3 459.5v6.8M646 471.4h6.8M649.4 468v6.8M646 479.7h6.8M649.4 476.3v6.8M646.1 487.9h6.8M649.5 484.5v6.8M646.2 496h6.8M649.6 492.6v6.8M646.3 503.8h6.8M649.7 500.4v6.8M655.3 170.3h6.8M658.7 166.9v6.8M655.3 178.3h6.8M658.7 174.9v6.8M655.3 186.4h6.8M658.7 183v6.8M655.3 194.7h6.8M658.7 191.3v6.8M655.2 203.2h6.8M658.6 199.8v6.8M655.2 211.7h6.8M658.6 208.3v6.8M655.2 220.5h6.8M658.6 217.1v6.8M655.2 229.3h6.8M658.6 225.9v6.8M655.1 238.3h6.8M658.5 234.9v6.8M655.1 247.4h6.8M658.5 244v6.8M655.1 256.6h6.8M658.5 253.2v6.8M655.1 265.9h6.8M658.5 262.5v6.8M655.1 275.3h6.8M658.5 271.9v6.8M655.1 284.8h6.8M658.5 281.4v6.8M655.1 294.3h6.8M658.5 290.9v6.8M655.1 303.9h6.8M658.5 300.5v6.8M655 313.5h6.8M658.4 310.1v6.8M655 323.2h6.8M658.4 319.8v6.8M655 332.9h6.8M658.4 329.5v6.8M655 342.5h6.8M658.4 339.1v6.8M655 352.2h6.8M658.4 348.8v6.8M655 361.8h6.8M658.4 358.4v6.8M655.1 371.4h6.8M658.5 368v6.8M655.1 381h6.8M658.5 377.6v6.8M655.1 390.5h6.8M658.5 387.1v6.8M655.1 399.9h6.8M658.5 396.5v6.8M655.1 409.2h6.8M658.5 405.8v6.8M655.1 418.5h6.8M658.5 415.1v6.8M655.1 427.6h6.8M658.5 424.2v6.8M655.2 436.6h6.8M658.6 433.2v6.8M655.2 445.5h6.8M658.6 442.1v6.8M655.2 454.3h6.8M658.6 450.9v6.8M655.2 463h6.8M658.6 459.6v6.8M655.2 471.4h6.8M658.6 468v6.8M655.3 479.8h6.8M658.7 476.4v6.8M655.3 488h6.8M658.7 484.6v6.8M655.3 496h6.8M658.7 492.6v6.8M655.4 503.9h6.8M658.8 500.5v6.8M664.4 170.3h6.8M667.8 166.9v6.8M664.5 178.3h6.8M667.9 174.9v6.8M664.5 186.4h6.8M667.9 183v6.8M664.5 194.7h6.8M667.9 191.3v6.8M664.5 203.2h6.8M667.9 199.8v6.8M664.6 211.7h6.8M668 208.3v6.8M664.6 220.5h6.8M668 217.1v6.8M664.6 229.3h6.8M668 225.9v6.8M664.7 238.3h6.8M668.1 234.9v6.8M664.7 247.4h6.8M668.1 244v6.8M664.7 256.6h6.8M668.1 253.2v6.8M664.7 265.9h6.8M668.1 262.5v6.8M664.7 275.3h6.8M668.1 271.9v6.8M664.7 284.8h6.8M668.1 281.4v6.8M664.7 294.3h6.8M668.1 290.9v6.8M664.8 303.9h6.8M668.2 300.5v6.8M664.8 313.5h6.8M668.2 310.1v6.8M664.8 323.2h6.8M668.2 319.8v6.8M664.8 332.9h6.8M668.2 329.5v6.8M664.8 342.5h6.8M668.2 339.1v6.8M664.8 352.2h6.8M668.2 348.8v6.8M664.8 361.8h6.8M668.2 358.4v6.8M664.7 371.4h6.8M668.1 368v6.8M664.7 381h6.8M668.1 377.6v6.8M664.7 390.5h6.8M668.1 387.1v6.8M664.7 399.9h6.8M668.1 396.5v6.8M664.7 409.2h6.8M668.1 405.8v6.8M664.7 418.5h6.8M668.1 415.1v6.8M664.7 427.6h6.8M668.1 424.2v6.8M664.6 436.6h6.8M668 433.2v6.8M664.6 445.5h6.8M668 442.1v6.8M664.6 454.3h6.8M668 450.9v6.8M664.6 463h6.8M668 459.6v6.8M664.5 471.4h6.8M667.9 468v6.8M664.5 479.8h6.8M667.9 476.4v6.8M664.5 488h6.8M667.9 484.6v6.8M664.4 496h6.8M667.8 492.6v6.8M664.4 503.9h6.8M667.8 500.5v6.8M673.5 170.4h6.8M676.9 167v6.8M673.6 178.4h6.8M677 175v6.8M673.7 186.5h6.8M677.1 183.1v6.8M673.8 194.8h6.8M677.2 191.4v6.8M673.9 203.2h6.8M677.3 199.8v6.8M673.9 211.8h6.8M677.3 208.4v6.8M674 220.5h6.8M677.4 217.1v6.8M674.1 229.4h6.8M677.5 226v6.8M674.2 238.4h6.8M677.6 235v6.8M674.2 247.4h6.8M677.6 244v6.8M674.3 256.7h6.8M677.7 253.3v6.8M674.3 266h6.8M677.7 262.6v6.8M674.4 275.3h6.8M677.8 271.9v6.8M674.4 284.8h6.8M677.8 281.4v6.8M674.4 294.3h6.8M677.8 290.9v6.8M674.5 303.9h6.8M677.9 300.5v6.8M674.5 313.5h6.8M677.9 310.1v6.8M674.5 323.2h6.8M677.9 319.8v6.8M674.5 332.9h6.8M677.9 329.5v6.8M674.5 342.5h6.8M677.9 339.1v6.8M674.5 352.2h6.8M677.9 348.8v6.8M674.5 361.8h6.8M677.9 358.4v6.8M674.4 371.4h6.8M677.8 368v6.8M674.4 381h6.8M677.8 377.6v6.8M674.4 390.4h6.8M677.8 387v6.8M674.3 399.9h6.8M677.7 396.5v6.8M674.3 409.2h6.8M677.7 405.8v6.8M674.2 418.4h6.8M677.6 415v6.8M674.2 427.6h6.8M677.6 424.2v6.8M674.1 436.6h6.8M677.5 433.2v6.8M674 445.5h6.8M677.4 442.1v6.8M674 454.3h6.8M677.4 450.9v6.8M673.9 462.9h6.8M677.3 459.5v6.8M673.8 471.4h6.8M677.2 468v6.8M673.7 479.7h6.8M677.1 476.3v6.8M673.6 487.9h6.8M677 484.5v6.8M673.5 496h6.8M676.9 492.6v6.8M673.4 503.8h6.8M676.8 500.4v6.8M682.6 170.5h6.8M686 167.1v6.8M682.7 178.5h6.8M686.1 175.1v6.8M682.9 186.6h6.8M686.3 183.2v6.8M683 194.9h6.8M686.4 191.5v6.8M683.2 203.3h6.8M686.6 199.9v6.8M683.3 211.9h6.8M686.7 208.5v6.8M683.4 220.6h6.8M686.8 217.2v6.8M683.5 229.5h6.8M686.9 226.1v6.8M683.6 238.4h6.8M687 235v6.8M683.7 247.5h6.8M687.1 244.1v6.8M683.8 256.7h6.8M687.2 253.3v6.8M683.9 266h6.8M687.3 262.6v6.8M684 275.4h6.8M687.4 272v6.8M684 284.9h6.8M687.4 281.5v6.8M684.1 294.4h6.8M687.5 291v6.8M684.1 303.9h6.8M687.5 300.5v6.8M684.2 313.6h6.8M687.6 310.2v6.8M684.2 323.2h6.8M687.6 319.8v6.8M684.2 332.9h6.8M687.6 329.5v6.8M684.2 342.5h6.8M687.6 339.1v6.8M684.2 352.2h6.8M687.6 348.8v6.8M684.1 361.8h6.8M687.5 358.4v6.8M684.1 371.4h6.8M687.5 368v6.8M684.1 380.9h6.8M687.5 377.5v6.8M684 390.4h6.8M687.4 387v6.8M683.9 399.8h6.8M687.3 396.4v6.8M683.9 409.1h6.8M687.3 405.7v6.8M683.8 418.4h6.8M687.2 415v6.8M683.7 427.5h6.8M687.1 424.1v6.8M683.6 436.5h6.8M687 433.1v6.8M683.5 445.4h6.8M686.9 442v6.8M683.3 454.2h6.8M686.7 450.8v6.8M683.2 462.8h6.8M686.6 459.4v6.8M683.1 471.3h6.8M686.5 467.9v6.8M682.9 479.6h6.8M686.3 476.2v6.8M682.8 487.8h6.8M686.2 484.4v6.8M682.6 495.8h6.8M686 492.4v6.8M682.5 503.7h6.8M685.9 500.3v6.8M691.6 170.7h6.8M695 167.3v6.8M691.8 178.7h6.8M695.2 175.3v6.8M692 186.8h6.8M695.4 183.4v6.8M692.2 195.1h6.8M695.6 191.7v6.8M692.4 203.5h6.8M695.8 200.1v6.8M692.6 212.1h6.8M696 208.7v6.8M692.8 220.8h6.8M696.2 217.4v6.8M692.9 229.6h6.8M696.3 226.2v6.8M693.1 238.6h6.8M696.5 235.2v6.8M693.2 247.6h6.8M696.6 244.2v6.8M693.4 256.8h6.8M696.8 253.4v6.8M693.5 266.1h6.8M696.9 262.7v6.8M693.6 275.5h6.8M697 272.1v6.8M693.7 284.9h6.8M697.1 281.5v6.8M693.7 294.4h6.8M697.1 291v6.8M693.8 304h6.8M697.2 300.6v6.8M693.8 313.6h6.8M697.2 310.2v6.8M693.8 323.2h6.8M697.2 319.8v6.8M693.9 332.9h6.8M697.3 329.5v6.8M693.8 342.5h6.8M697.2 339.1v6.8M693.8 352.1h6.8M697.2 348.7v6.8M693.8 361.8h6.8M697.2 358.4v6.8M693.7 371.3h6.8M697.1 367.9v6.8M693.7 380.9h6.8M697.1 377.5v6.8M693.6 390.3h6.8M697 386.9v6.8M693.5 399.7h6.8M696.9 396.3v6.8M693.4 409h6.8M696.8 405.6v6.8M693.3 418.3h6.8M696.7 414.9v6.8M693.1 427.4h6.8M696.5 424v6.8M693 436.4h6.8M696.4 433v6.8M692.8 445.3h6.8M696.2 441.9v6.8M692.7 454h6.8M696.1 450.6v6.8M692.5 462.6h6.8M695.9 459.2v6.8M692.3 471.1h6.8M695.7 467.7v6.8M692.1 479.4h6.8M695.5 476v6.8M691.9 487.6h6.8M695.3 484.2v6.8M691.7 495.6h6.8M695.1 492.2v6.8M691.5 503.5h6.8M694.9 500.1v6.8M700.6 170.9h6.8M704 167.5v6.8M700.9 178.9h6.8M704.3 175.5v6.8M701.2 187h6.8M704.6 183.6v6.8M701.4 195.3h6.8M704.8 191.9v6.8M701.7 203.7h6.8M705.1 200.3v6.8M701.9 212.3h6.8M705.3 208.9v6.8M702.1 221h6.8M705.5 217.6v6.8M702.3 229.8h6.8M705.7 226.4v6.8M702.5 238.7h6.8M705.9 235.3v6.8M702.7 247.8h6.8M706.1 244.4v6.8M702.8 257h6.8M706.2 253.6v6.8M703 266.2h6.8M706.4 262.8v6.8M703.1 275.6h6.8M706.5 272.2v6.8M703.2 285h6.8M706.6 281.6v6.8M703.3 294.5h6.8M706.7 291.1v6.8M703.4 304h6.8M706.8 300.6v6.8M703.4 313.6h6.8M706.8 310.2v6.8M703.5 323.2h6.8M706.9 319.8v6.8M703.5 332.9h6.8M706.9 329.5v6.8M703.5 342.5h6.8M706.9 339.1v6.8M703.4 352.1h6.8M706.8 348.7v6.8M703.4 361.7h6.8M706.8 358.3v6.8M703.3 371.3h6.8M706.7 367.9v6.8M703.2 380.8h6.8M706.6 377.4v6.8M703.1 390.2h6.8M706.5 386.8v6.8M703 399.6h6.8M706.4 396.2v6.8M702.9 408.9h6.8M706.3 405.5v6.8M702.7 418.1h6.8M706.1 414.7v6.8M702.6 427.2h6.8M706 423.8v6.8M702.4 436.2h6.8M705.8 432.8v6.8M702.2 445.1h6.8M705.6 441.7v6.8M702 453.8h6.8M705.4 450.4v6.8M701.7 462.4h6.8M705.1 459v6.8M701.5 470.9h6.8M704.9 467.5v6.8M701.2 479.2h6.8M704.6 475.8v6.8M701 487.4h6.8M704.4 484v6.8M700.7 495.4h6.8M704.1 492v6.8M700.4 503.3h6.8M703.8 499.9v6.8M709.6 171.3h6.8M713 167.9v6.8M709.9 179.2h6.8M713.3 175.8v6.8M710.2 187.3h6.8M713.6 183.9v6.8M710.5 195.6h6.8M713.9 192.2v6.8M710.8 204h6.8M714.2 200.6v6.8M711.1 212.5h6.8M714.5 209.1v6.8M711.4 221.2h6.8M714.8 217.8v6.8M711.6 230h6.8M715 226.6v6.8M711.9 238.9h6.8M715.3 235.5v6.8M712.1 248h6.8M715.5 244.6v6.8M712.3 257.1h6.8M715.7 253.7v6.8M712.4 266.4h6.8M715.8 263v6.8M712.6 275.7h6.8M716 272.3v6.8M712.7 285.1h6.8M716.1 281.7v6.8M712.8 294.6h6.8M716.2 291.2v6.8M712.9 304.1h6.8M716.3 300.7v6.8M713 313.7h6.8M716.4 310.3v6.8M713 323.3h6.8M716.4 319.9v6.8M713 332.9h6.8M716.4 329.5v6.8M713 342.5h6.8M716.4 339.1v6.8M713 352.1h6.8M716.4 348.7v6.8M712.9 361.6h6.8M716.3 358.2v6.8M712.9 371.2h6.8M716.3 367.8v6.8M712.8 380.7h6.8M716.2 377.3v6.8M712.6 390.1h6.8M716 386.7v6.8M712.5 399.5h6.8M715.9 396.1v6.8M712.3 408.7h6.8M715.7 405.3v6.8M712.1 417.9h6.8M715.5 414.5v6.8M711.9 427h6.8M715.3 423.6v6.8M711.7 436h6.8M715.1 432.6v6.8M711.5 444.8h6.8M714.9 441.4v6.8M711.2 453.6h6.8M714.6 450.2v6.8M710.9 462.2h6.8M714.3 458.8v6.8M710.6 470.6h6.8M714 467.2v6.8M710.3 478.9h6.8M713.7 475.5v6.8M710 487.1h6.8M713.4 483.7v6.8M709.7 495.1h6.8M713.1 491.7v6.8M709.4 502.9h6.8M712.8 499.5v6.8M718.5 171.6h6.8M721.9 168.2v6.8M718.9 179.6h6.8M722.3 176.2v6.8M719.2 187.7h6.8M722.6 184.3v6.8M719.6 195.9h6.8M723 192.5v6.8M719.9 204.3h6.8M723.3 200.9v6.8M720.3 212.8h6.8M723.7 209.4v6.8M720.6 221.5h6.8M724 218.1v6.8M720.9 230.3h6.8M724.3 226.9v6.8M721.2 239.2h6.8M724.6 235.8v6.8M721.4 248.2h6.8M724.8 244.8v6.8M721.6 257.3h6.8M725 253.9v6.8M721.8 266.6h6.8M725.2 263.2v6.8M722 275.9h6.8M725.4 272.5v6.8M722.2 285.2h6.8M725.6 281.8v6.8M722.3 294.7h6.8M725.7 291.3v6.8M722.4 304.2h6.8M725.8 300.8v6.8M722.5 313.7h6.8M725.9 310.3v6.8M722.5 323.3h6.8M725.9 319.9v6.8M722.5 332.9h6.8M725.9 329.5v6.8M722.5 342.5h6.8M725.9 339.1v6.8M722.5 352h6.8M725.9 348.6v6.8M722.4 361.6h6.8M725.8 358.2v6.8M722.3 371.1h6.8M725.7 367.7v6.8M722.2 380.5h6.8M725.6 377.1v6.8M722.1 390h6.8M725.5 386.6v6.8M721.9 399.3h6.8M725.3 395.9v6.8M721.7 408.6h6.8M725.1 405.2v6.8M721.5 417.7h6.8M724.9 414.3v6.8M721.2 426.8h6.8M724.6 423.4v6.8M721 435.7h6.8M724.4 432.3v6.8M720.7 444.6h6.8M724.1 441.2v6.8M720.4 453.3h6.8M723.8 449.9v6.8M720.1 461.8h6.8M723.5 458.4v6.8M719.7 470.3h6.8M723.1 466.9v6.8M719.4 478.6h6.8M722.8 475.2v6.8M719 486.7h6.8M722.4 483.3v6.8M718.6 494.7h6.8M722 491.3v6.8M718.2 502.6h6.8M721.6 499.2v6.8M727.3 172h6.8M730.7 168.6v6.8M727.7 180h6.8M731.1 176.6v6.8M728.2 188.1h6.8M731.6 184.7v6.8M728.6 196.3h6.8M732 192.9v6.8M729 204.7h6.8M732.4 201.3v6.8M729.4 213.2h6.8M732.8 209.8v6.8M729.7 221.8h6.8M733.1 218.4v6.8M730.1 230.6h6.8M733.5 227.2v6.8M730.4 239.5h6.8M733.8 236.1v6.8M730.7 248.5h6.8M734.1 245.1v6.8M730.9 257.6h6.8M734.3 254.2v6.8M731.1 266.8h6.8M734.5 263.4v6.8M731.3 276h6.8M734.7 272.6v6.8M731.5 285.4h6.8M734.9 282v6.8M731.7 294.8h6.8M735.1 291.4v6.8M731.8 304.3h6.8M735.2 300.9v6.8M731.9 313.8h6.8M735.3 310.4v6.8M731.9 323.3h6.8M735.3 319.9v6.8M731.9 332.9h6.8M735.3 329.5v6.8M731.9 342.4h6.8M735.3 339v6.8M731.9 352h6.8M735.3 348.6v6.8M731.8 361.5h6.8M735.2 358.1v6.8M731.7 371h6.8M735.1 367.6v6.8M731.6 380.4h6.8M735 377v6.8M731.4 389.8h6.8M734.8 386.4v6.8M731.2 399.1h6.8M734.6 395.7v6.8M731 408.3h6.8M734.4 404.9v6.8M730.8 417.5h6.8M734.2 414.1v6.8M730.5 426.5h6.8M733.9 423.1v6.8M730.2 435.4h6.8M733.6 432v6.8M729.8 444.2h6.8M733.2 440.8v6.8M729.5 452.9h6.8M732.9 449.5v6.8M729.1 461.5h6.8M732.5 458.1v6.8M728.7 469.9h6.8M732.1 466.5v6.8M728.3 478.2h6.8M731.7 474.8v6.8M727.9 486.3h6.8M731.3 482.9v6.8M727.5 494.3h6.8M730.9 490.9v6.8M727 502.1h6.8M730.4 498.7v6.8M736.1 172.5h6.8M739.5 169.1v6.8M736.6 180.4h6.8M740 177v6.8M737 188.5h6.8M740.4 185.1v6.8M737.5 196.7h6.8M740.9 193.3v6.8M738 205.1h6.8M741.4 201.7v6.8M738.4 213.6h6.8M741.8 210.2v6.8M738.8 222.2h6.8M742.2 218.8v6.8M739.2 230.9h6.8M742.6 227.5v6.8M739.5 239.8h6.8M742.9 236.4v6.8M739.8 248.7h6.8M743.2 245.3v6.8M740.1 257.8h6.8M743.5 254.4v6.8M740.4 267h6.8M743.8 263.6v6.8M740.6 276.2h6.8M744 272.8v6.8M740.8 285.6h6.8M744.2 282.2v6.8M741 295h6.8M744.4 291.6v6.8M741.1 304.4h6.8M744.5 301v6.8M741.2 313.9h6.8M744.6 310.5v6.8M741.2 323.4h6.8M744.6 320v6.8M741.3 332.9h6.8M744.7 329.5v6.8M741.2 342.4h6.8M744.6 339v6.8M741.2 351.9h6.8M744.6 348.5v6.8M741.1 361.4h6.8M744.5 358v6.8M741 370.8h6.8M744.4 367.4v6.8M740.9 380.3h6.8M744.3 376.9v6.8M740.7 389.6h6.8M744.1 386.2v6.8M740.5 398.9h6.8M743.9 395.5v6.8M740.2 408.1h6.8M743.6 404.7v6.8M739.9 417.2h6.8M743.3 413.8v6.8M739.6 426.2h6.8M743 422.8v6.8M739.3 435.1h6.8M742.7 431.7v6.8M738.9 443.9h6.8M742.3 440.5v6.8M738.5 452.6h6.8M741.9 449.2v6.8M738.1 461.1h6.8M741.5 457.7v6.8M737.7 469.5h6.8M741.1 466.1v6.8M737.2 477.7h6.8M740.6 474.3v6.8M736.7 485.9h6.8M740.1 482.5v6.8M736.2 493.8h6.8M739.6 490.4v6.8M735.7 501.7h6.8M739.1 498.3v6.8M744.8 173.1h6.8M748.2 169.7v6.8M745.3 181h6.8M748.7 177.6v6.8M745.8 189h6.8M749.2 185.6v6.8M746.3 197.2h6.8M749.7 193.8v6.8M746.8 205.5h6.8M750.2 202.1v6.8M747.3 214h6.8M750.7 210.6v6.8M747.7 222.6h6.8M751.1 219.2v6.8M748.1 231.3h6.8M751.5 227.9v6.8M748.5 240.1h6.8M751.9 236.7v6.8M748.9 249.1h6.8M752.3 245.7v6.8M749.2 258.1h6.8M752.6 254.7v6.8M749.5 267.2h6.8M752.9 263.8v6.8M749.7 276.5h6.8M753.1 273.1v6.8M750 285.8h6.8M753.4 282.4v6.8M750.1 295.1h6.8M753.5 291.7v6.8M750.3 304.5h6.8M753.7 301.1v6.8M750.4 313.9h6.8M753.8 310.5v6.8M750.4 323.4h6.8M753.8 320v6.8M750.5 332.9h6.8M753.9 329.5v6.8M750.5 342.4h6.8M753.9 339v6.8M750.4 351.8h6.8M753.8 348.4v6.8M750.3 361.3h6.8M753.7 357.9v6.8M750.2 370.7h6.8M753.6 367.3v6.8M750 380.1h6.8M753.4 376.7v6.8M749.8 389.4h6.8M753.2 386v6.8M749.6 398.6h6.8M753 395.2v6.8M749.3 407.8h6.8M752.7 404.4v6.8M749 416.9h6.8M752.4 413.5v6.8M748.7 425.9h6.8M752.1 422.5v6.8M748.3 434.7h6.8M751.7 431.3v6.8M747.9 443.5h6.8M751.3 440.1v6.8M747.5 452.1h6.8M750.9 448.7v6.8M747 460.6h6.8M750.4 457.2v6.8M746.5 469h6.8M749.9 465.6v6.8M746 477.2h6.8M749.4 473.8v6.8M745.5 485.3h6.8M748.9 481.9v6.8M745 493.3h6.8M748.4 489.9v6.8M744.4 501.1h6.8M747.8 497.7v6.8M753.3 173.6h6.8M756.7 170.2v6.8M753.9 181.5h6.8M757.3 178.1v6.8M754.5 189.6h6.8M757.9 186.2v6.8M755.1 197.7h6.8M758.5 194.3v6.8M755.6 206h6.8M759 202.6v6.8M756.1 214.5h6.8M759.5 211.1v6.8M756.6 223h6.8M760 219.6v6.8M757 231.7h6.8M760.4 228.3v6.8M757.5 240.5h6.8M760.9 237.1v6.8M757.8 249.4h6.8M761.2 246v6.8M758.2 258.4h6.8M761.6 255v6.8M758.5 267.5h6.8M761.9 264.1v6.8M758.8 276.7h6.8M762.2 273.3v6.8M759 286h6.8M762.4 282.6v6.8M759.2 295.3h6.8M762.6 291.9v6.8M759.4 304.6h6.8M762.8 301.2v6.8M759.5 314h6.8M762.9 310.6v6.8M759.5 323.5h6.8M762.9 320.1v6.8M759.6 332.9h6.8M763 329.5v6.8M759.6 342.3h6.8M763 338.9v6.8M759.5 351.8h6.8M762.9 348.4v6.8M759.4 361.2h6.8M762.8 357.8v6.8M759.3 370.6h6.8M762.7 367.2v6.8M759.1 379.9h6.8M762.5 376.5v6.8M758.9 389.2h6.8M762.3 385.8v6.8M758.6 398.4h6.8M762 395v6.8M758.3 407.5h6.8M761.7 404.1v6.8M758 416.5h6.8M761.4 413.1v6.8M757.6 425.5h6.8M761 422.1v6.8M757.2 434.3h6.8M760.6 430.9v6.8M756.8 443h6.8M760.2 439.6v6.8M756.3 451.7h6.8M759.7 448.3v6.8M755.8 460.1h6.8M759.2 456.7v6.8M755.3 468.5h6.8M758.7 465.1v6.8M754.7 476.7h6.8M758.1 473.3v6.8M754.2 484.8h6.8M757.6 481.4v6.8M753.6 492.7h6.8M757 489.3v6.8M753 500.5h6.8M756.4 497.1v6.8M761.8 174.3h6.8M765.2 170.9v6.8M762.5 182.1h6.8M765.9 178.7v6.8M763.1 190.2h6.8M766.5 186.8v6.8M763.7 198.3h6.8M767.1 194.9v6.8M764.3 206.6h6.8M767.7 203.2v6.8M764.8 215h6.8M768.2 211.6v6.8M765.3 223.5h6.8M768.7 220.1v6.8M765.8 232.2h6.8M769.2 228.8v6.8M766.3 240.9h6.8M769.7 237.5v6.8M766.7 249.8h6.8M770.1 246.4v6.8M767.1 258.8h6.8M770.5 255.4v6.8M767.4 267.8h6.8M770.8 264.4v6.8M767.7 277h6.8M771.1 273.6v6.8M768 286.2h6.8M771.4 282.8v6.8M768.2 295.5h6.8M771.6 292.1v6.8M768.3 304.8h6.8M771.7 301.4v6.8M768.4 314.1h6.8M771.8 310.7v6.8M768.5 323.5h6.8M771.9 320.1v6.8M768.6 332.9h6.8M772 329.5v6.8M768.5 342.3h6.8M771.9 338.9v6.8M768.5 351.7h6.8M771.9 348.3v6.8M768.4 361.1h6.8M771.8 357.7v6.8M768.2 370.4h6.8M771.6 367v6.8M768 379.7h6.8M771.4 376.3v6.8M767.8 388.9h6.8M771.2 385.5v6.8M767.5 398.1h6.8M770.9 394.7v6.8M767.2 407.2h6.8M770.6 403.8v6.8M766.8 416.2h6.8M770.2 412.8v6.8M766.4 425.1h6.8M769.8 421.7v6.8M766 433.9h6.8M769.4 430.5v6.8M765.5 442.6h6.8M768.9 439.2v6.8M765 451.2h6.8M768.4 447.8v6.8M764.5 459.6h6.8M767.9 456.2v6.8M763.9 467.9h6.8M767.3 464.5v6.8M763.3 476.1h6.8M766.7 472.7v6.8M762.7 484.2h6.8M766.1 480.8v6.8M762.1 492.1h6.8M765.5 488.7v6.8M761.4 499.9h6.8M764.8 496.5v6.8M770.2 174.9h6.8M773.6 171.5v6.8M770.9 182.8h6.8M774.3 179.4v6.8M771.6 190.8h6.8M775 187.4v6.8M772.2 198.9h6.8M775.6 195.5v6.8M772.8 207.2h6.8M776.2 203.8v6.8M773.4 215.5h6.8M776.8 212.1v6.8M774 224h6.8M777.4 220.6v6.8M774.5 232.7h6.8M777.9 229.3v6.8M775 241.4h6.8M778.4 238v6.8M775.4 250.2h6.8M778.8 246.8v6.8M775.8 259.1h6.8M779.2 255.7v6.8M776.2 268.2h6.8M779.6 264.8v6.8M776.5 277.3h6.8M779.9 273.9v6.8M776.8 286.4h6.8M780.2 283v6.8M777 295.7h6.8M780.4 292.3v6.8M777.2 304.9h6.8M780.6 301.5v6.8M777.3 314.2h6.8M780.7 310.8v6.8M777.4 323.6h6.8M780.8 320.2v6.8M777.4 332.9h6.8M780.8 329.5v6.8M777.4 342.3h6.8M780.8 338.9v6.8M777.3 351.6h6.8M780.7 348.2v6.8M777.2 360.9h6.8M780.6 357.5v6.8M777.1 370.2h6.8M780.5 366.8v6.8M776.8 379.4h6.8M780.2 376v6.8M776.6 388.6h6.8M780 385.2v6.8M776.3 397.8h6.8M779.7 394.4v6.8M775.9 406.8h6.8M779.3 403.4v6.8M775.6 415.8h6.8M779 412.4v6.8M775.1 424.6h6.8M778.5 421.2v6.8M774.7 433.4h6.8M778.1 430v6.8M774.2 442.1h6.8M777.6 438.7v6.8M773.6 450.6h6.8M777 447.2v6.8M773.1 459h6.8M776.5 455.6v6.8M772.5 467.3h6.8M775.9 463.9v6.8M771.8 475.5h6.8M775.2 472.1v6.8M771.2 483.5h6.8M774.6 480.1v6.8M770.5 491.4h6.8M773.9 488v6.8M769.8 499.2h6.8M773.2 495.8v6.8M778.5 175.7h6.8M781.9 172.3v6.8M779.3 183.5h6.8M782.7 180.1v6.8M780 191.5h6.8M783.4 188.1v6.8M780.6 199.6h6.8M784 196.2v6.8M781.3 207.8h6.8M784.7 204.4v6.8M781.9 216.1h6.8M785.3 212.7v6.8M782.5 224.6h6.8M785.9 221.2v6.8M783 233.2h6.8M786.4 229.8v6.8M783.5 241.9h6.8M786.9 238.5v6.8M784 250.7h6.8M787.4 247.3v6.8M784.4 259.5h6.8M787.8 256.1v6.8M784.8 268.5h6.8M788.2 265.1v6.8M785.1 277.6h6.8M788.5 274.2v6.8M785.4 286.7h6.8M788.8 283.3v6.8M785.7 295.9h6.8M789.1 292.5v6.8M785.9 305.1h6.8M789.3 301.7v6.8M786 314.3h6.8M789.4 310.9v6.8M786.1 323.6h6.8M789.5 320.2v6.8M786.1 332.9h6.8M789.5 329.5v6.8M786.1 342.2h6.8M789.5 338.8v6.8M786 351.5h6.8M789.4 348.1v6.8M785.9 360.8h6.8M789.3 357.4v6.8M785.7 370h6.8M789.1 366.6v6.8M785.5 379.2h6.8M788.9 375.8v6.8M785.3 388.3h6.8M788.7 384.9v6.8M784.9 397.4h6.8M788.3 394v6.8M784.6 406.4h6.8M788 403v6.8M784.2 415.3h6.8M787.6 411.9v6.8M783.7 424.2h6.8M787.1 420.8v6.8M783.2 432.9h6.8M786.6 429.5v6.8M782.7 441.5h6.8M786.1 438.1v6.8M782.1 450h6.8M785.5 446.6v6.8M781.5 458.4h6.8M784.9 455v6.8M780.9 466.7h6.8M784.3 463.3v6.8M780.2 474.8h6.8M783.6 471.4v6.8M779.5 482.8h6.8M782.9 479.4v6.8M778.8 490.7h6.8M782.2 487.3v6.8M778.1 498.5h6.8M781.5 495.1v6.8M786.7 176.4h6.8M790.1 173v6.8M787.5 184.2h6.8M790.9 180.8v6.8M788.2 192.2h6.8M791.6 188.8v6.8M788.9 200.2h6.8M792.3 196.8v6.8M789.6 208.4h6.8M793 205v6.8M790.3 216.7h6.8M793.7 213.3v6.8M790.9 225.2h6.8M794.3 221.8v6.8M791.4 233.7h6.8M794.8 230.3v6.8M792 242.4h6.8M795.4 239v6.8M792.5 251.1h6.8M795.9 247.7v6.8M792.9 260h6.8M796.3 256.6v6.8M793.3 268.9h6.8M796.7 265.5v6.8M793.7 277.9h6.8M797.1 274.5v6.8M794 287h6.8M797.4 283.6v6.8M794.2 296.1h6.8M797.6 292.7v6.8M794.4 305.3h6.8M797.8 301.9v6.8M794.6 314.5h6.8M798 311.1v6.8M794.7 323.7h6.8M798.1 320.3v6.8M794.7 332.9h6.8M798.1 329.5v6.8M794.7 342.2h6.8M798.1 338.8v6.8M794.6 351.4h6.8M798 348v6.8M794.5 360.6h6.8M797.9 357.2v6.8M794.3 369.8h6.8M797.7 366.4v6.8M794.1 379h6.8M797.5 375.6v6.8M793.8 388h6.8M797.2 384.6v6.8M793.4 397.1h6.8M796.8 393.7v6.8M793.1 406h6.8M796.5 402.6v6.8M792.6 414.9h6.8M796 411.5v6.8M792.2 423.7h6.8M795.6 420.3v6.8M791.6 432.4h6.8M795 429v6.8M791.1 441h6.8M794.5 437.6v6.8M790.5 449.4h6.8M793.9 446v6.8M789.8 457.8h6.8M793.2 454.4v6.8M789.2 466h6.8M792.6 462.6v6.8M788.5 474.1h6.8M791.9 470.7v6.8M787.8 482.1h6.8M791.2 478.7v6.8M787 490h6.8M790.4 486.6v6.8M786.2 497.7h6.8M789.6 494.3v6.8M794.8 177.2h6.8M798.2 173.8v6.8M795.6 185h6.8M799 181.6v6.8M796.4 192.9h6.8M799.8 189.5v6.8M797.1 200.9h6.8M800.5 197.5v6.8M797.8 209.1h6.8M801.2 205.7v6.8M798.5 217.4h6.8M801.9 214v6.8M799.1 225.8h6.8M802.5 222.4v6.8M799.7 234.3h6.8M803.1 230.9v6.8M800.3 242.9h6.8M803.7 239.5v6.8M800.8 251.6h6.8M804.2 248.2v6.8M801.3 260.4h6.8M804.7 257v6.8M801.7 269.3h6.8M805.1 265.9v6.8M802 278.2h6.8M805.4 274.8v6.8M802.4 287.2h6.8M805.8 283.8v6.8M802.6 296.3h6.8M806 292.9v6.8M802.8 305.4h6.8M806.2 302v6.8M803 314.6h6.8M806.4 311.2v6.8M803.1 323.8h6.8M806.5 320.4v6.8M803.1 332.9h6.8M806.5 329.5v6.8M803.1 342.1h6.8M806.5 338.7v6.8M803 351.3h6.8M806.4 347.9v6.8M802.9 360.5h6.8M806.3 357.1v6.8M802.7 369.6h6.8M806.1 366.2v6.8M802.5 378.7h6.8M805.9 375.3v6.8M802.2 387.7h6.8M805.6 384.3v6.8M801.8 396.7h6.8M805.2 393.3v6.8M801.4 405.6h6.8M804.8 402.2v6.8M801 414.4h6.8M804.4 411v6.8M800.5 423.2h6.8M803.9 419.8v6.8M799.9 431.8h6.8M803.3 428.4v6.8M799.3 440.4h6.8M802.7 437v6.8M798.7 448.8h6.8M802.1 445.4v6.8M798 457.1h6.8M801.4 453.7v6.8M797.4 465.3h6.8M800.8 461.9v6.8M796.6 473.4h6.8M800 470v6.8M795.9 481.4h6.8M799.3 478v6.8M795.1 489.2h6.8M798.5 485.8v6.8M794.3 496.9h6.8M797.7 493.5v6.8M802.8 178h6.8M806.2 174.6v6.8M803.6 185.8h6.8M807 182.4v6.8M804.4 193.7h6.8M807.8 190.3v6.8M805.1 201.7h6.8M808.5 198.3v6.8M805.9 209.8h6.8M809.3 206.4v6.8M806.6 218.1h6.8M810 214.7v6.8M807.2 226.4h6.8M810.6 223v6.8M807.9 234.9h6.8M811.3 231.5v6.8M808.4 243.4h6.8M811.8 240v6.8M809 252.1h6.8M812.4 248.7v6.8M809.5 260.8h6.8M812.9 257.4v6.8M809.9 269.7h6.8M813.3 266.3v6.8M810.3 278.6h6.8M813.7 275.2v6.8M810.6 287.5h6.8M814 284.1v6.8M810.9 296.6h6.8M814.3 293.2v6.8M811.1 305.6h6.8M814.5 302.2v6.8M811.2 314.7h6.8M814.6 311.3v6.8M811.3 323.8h6.8M814.7 320.4v6.8M811.4 333h6.8M814.8 329.6v6.8M811.4 342.1h6.8M814.8 338.7v6.8M811.3 351.2h6.8M814.7 347.8v6.8M811.1 360.3h6.8M814.5 356.9v6.8M811 369.4h6.8M814.4 366v6.8M810.7 378.4h6.8M814.1 375v6.8M810.4 387.4h6.8M813.8 384v6.8M810 396.3h6.8M813.4 392.9v6.8M809.6 405.2h6.8M813 401.8v6.8M809.1 413.9h6.8M812.5 410.5v6.8M808.6 422.6h6.8M812 419.2v6.8M808.1 431.2h6.8M811.5 427.8v6.8M807.5 439.7h6.8M810.9 436.3v6.8M806.8 448.1h6.8M810.2 444.7v6.8M806.1 456.4h6.8M809.5 453v6.8M805.4 464.6h6.8M808.8 461.2v6.8M804.7 472.7h6.8M808.1 469.3v6.8M803.9 480.6h6.8M807.3 477.2v6.8M803.1 488.4h6.8M806.5 485v6.8M802.3 496.1h6.8M805.7 492.7v6.8M810.6 178.8h6.8M814 175.4v6.8M811.5 186.6h6.8M814.9 183.2v6.8M812.3 194.5h6.8M815.7 191.1v6.8M813.1 202.4h6.8M816.5 199v6.8M813.8 210.5h6.8M817.2 207.1v6.8M814.5 218.8h6.8M817.9 215.4v6.8M815.2 227.1h6.8M818.6 223.7v6.8M815.9 235.5h6.8M819.3 232.1v6.8M816.4 244h6.8M819.8 240.6v6.8M817 252.6h6.8M820.4 249.2v6.8M817.5 261.3h6.8M820.9 257.9v6.8M818 270.1h6.8M821.4 266.7v6.8M818.3 278.9h6.8M821.7 275.5v6.8M818.7 287.8h6.8M822.1 284.4v6.8M819 296.8h6.8M822.4 293.4v6.8M819.2 305.8h6.8M822.6 302.4v6.8M819.4 314.8h6.8M822.8 311.4v6.8M819.5 323.9h6.8M822.9 320.5v6.8M819.5 333h6.8M822.9 329.6v6.8M819.5 342h6.8M822.9 338.6v6.8M819.4 351.1h6.8M822.8 347.7v6.8M819.3 360.1h6.8M822.7 356.7v6.8M819.1 369.1h6.8M822.5 365.7v6.8M818.8 378.1h6.8M822.2 374.7v6.8M818.5 387h6.8M821.9 383.6v6.8M818.1 395.9h6.8M821.5 392.5v6.8M817.7 404.7h6.8M821.1 401.3v6.8M817.2 413.4h6.8M820.6 410v6.8M816.7 422.1h6.8M820.1 418.7v6.8M816.1 430.6h6.8M819.5 427.2v6.8M815.4 439.1h6.8M818.8 435.7v6.8M814.8 447.5h6.8M818.2 444.1v6.8M814.1 455.7h6.8M817.5 452.3v6.8M813.3 463.8h6.8M816.7 460.4v6.8M812.6 471.9h6.8M816 468.5v6.8M811.8 479.8h6.8M815.2 476.4v6.8M810.9 487.6h6.8M814.3 484.2v6.8M810.1 495.3h6.8M813.5 491.9v6.8M818.4 179.7h6.8M821.8 176.3v6.8M819.2 187.4h6.8M822.6 184v6.8M820.1 195.3h6.8M823.5 191.9v6.8M820.8 203.2h6.8M824.2 199.8v6.8M821.6 211.3h6.8M825 207.9v6.8M822.4 219.5h6.8M825.8 216.1v6.8M823.1 227.7h6.8M826.5 224.3v6.8M823.7 236.1h6.8M827.1 232.7v6.8M824.3 244.6h6.8M827.7 241.2v6.8M824.9 253.2h6.8M828.3 249.8v6.8M825.4 261.8h6.8M828.8 258.4v6.8M825.9 270.5h6.8M829.3 267.1v6.8M826.3 279.3h6.8M829.7 275.9v6.8M826.6 288.2h6.8M830 284.8v6.8M826.9 297.1h6.8M830.3 293.7v6.8M827.1 306h6.8M830.5 302.6v6.8M827.3 315h6.8M830.7 311.6v6.8M827.4 324h6.8M830.8 320.6v6.8M827.5 333h6.8M830.9 329.6v6.8M827.4 342h6.8M830.8 338.6v6.8M827.4 351h6.8M830.8 347.6v6.8M827.2 360h6.8M830.6 356.6v6.8M827 368.9h6.8M830.4 365.5v6.8M826.7 377.8h6.8M830.1 374.4v6.8M826.4 386.7h6.8M829.8 383.3v6.8M826 395.5h6.8M829.4 392.1v6.8M825.6 404.3h6.8M829 400.9v6.8M825.1 412.9h6.8M828.5 409.5v6.8M824.5 421.5h6.8M827.9 418.1v6.8M823.9 430h6.8M827.3 426.6v6.8M823.3 438.4h6.8M826.7 435v6.8M822.6 446.8h6.8M826 443.4v6.8M821.9 455h6.8M825.3 451.6v6.8M821.1 463.1h6.8M824.5 459.7v6.8M820.3 471.1h6.8M823.7 467.7v6.8M819.5 479h6.8M822.9 475.6v6.8M818.7 486.7h6.8M822.1 483.3v6.8M817.8 494.4h6.8M821.2 491v6.8M826 180.5h6.8M829.4 177.1v6.8M826.9 188.3h6.8M830.3 184.9v6.8M827.7 196.1h6.8M831.1 192.7v6.8M828.5 204h6.8M831.9 200.6v6.8M829.3 212.1h6.8M832.7 208.7v6.8M830.1 220.2h6.8M833.5 216.8v6.8M830.8 228.4h6.8M834.2 225v6.8M831.4 236.8h6.8M834.8 233.4v6.8M832.1 245.2h6.8M835.5 241.8v6.8M832.6 253.7h6.8M836 250.3v6.8M833.2 262.3h6.8M836.6 258.9v6.8M833.6 271h6.8M837 267.6v6.8M834 279.7h6.8M837.4 276.3v6.8M834.4 288.5h6.8M837.8 285.1v6.8M834.7 297.3h6.8M838.1 293.9v6.8M834.9 306.2h6.8M838.3 302.8v6.8M835.1 315.1h6.8M838.5 311.7v6.8M835.2 324h6.8M838.6 320.6v6.8M835.3 333h6.8M838.7 329.6v6.8M835.2 341.9h6.8M838.6 338.5v6.8M835.1 350.9h6.8M838.5 347.5v6.8M835 359.8h6.8M838.4 356.4v6.8M834.8 368.7h6.8M838.2 365.3v6.8M834.5 377.5h6.8M837.9 374.1v6.8M834.2 386.3h6.8M837.6 382.9v6.8M833.8 395.1h6.8M837.2 391.7v6.8M833.3 403.8h6.8M836.7 400.4v6.8M832.8 412.4h6.8M836.2 409v6.8M832.3 420.9h6.8M835.7 417.5v6.8M831.7 429.4h6.8M835.1 426v6.8M831 437.8h6.8M834.4 434.4v6.8M830.3 446h6.8M833.7 442.6v6.8M829.6 454.2h6.8M833 450.8v6.8M828.8 462.3h6.8M832.2 458.9v6.8M828 470.3h6.8M831.4 466.9v6.8M827.2 478.1h6.8M830.6 474.7v6.8M826.3 485.9h6.8M829.7 482.5v6.8M825.5 493.6h6.8M828.9 490.2v6.8M833.6 181.4h6.8M837 178v6.8M834.4 189.1h6.8M837.8 185.7v6.8M835.3 196.9h6.8M838.7 193.5v6.8M836.1 204.8h6.8M839.5 201.4v6.8M836.9 212.8h6.8M840.3 209.4v6.8M837.6 220.9h6.8M841 217.5v6.8M838.3 229.1h6.8M841.7 225.7v6.8M839 237.4h6.8M842.4 234v6.8M839.7 245.8h6.8M843.1 242.4v6.8M840.2 254.3h6.8M843.6 250.9v6.8M840.8 262.8h6.8M844.2 259.4v6.8M841.2 271.4h6.8M844.6 268v6.8M841.7 280.1h6.8M845.1 276.7v6.8M842 288.8h6.8M845.4 285.4v6.8M842.3 297.6h6.8M845.7 294.2v6.8M842.6 306.4h6.8M846 303v6.8M842.7 315.3h6.8M846.1 311.9v6.8M842.9 324.1h6.8M846.3 320.7v6.8M842.9 333h6.8M846.3 329.6v6.8M842.9 341.9h6.8M846.3 338.5v6.8M842.8 350.7h6.8M846.2 347.3v6.8M842.6 359.6h6.8M846 356.2v6.8M842.4 368.4h6.8M845.8 365v6.8M842.1 377.2h6.8M845.5 373.8v6.8M841.8 386h6.8M845.2 382.6v6.8M841.4 394.7h6.8M844.8 391.3v6.8M841 403.3h6.8M844.4 399.9v6.8M840.4 411.9h6.8M843.8 408.5v6.8M839.9 420.3h6.8M843.3 416.9v6.8M839.3 428.8h6.8M842.7 425.4v6.8M838.6 437.1h6.8M842 433.7v6.8M837.9 445.3h6.8M841.3 441.9v6.8M837.1 453.5h6.8M840.5 450.1v6.8M836.4 461.5h6.8M839.8 458.1v6.8M835.6 469.4h6.8M839 466v6.8M834.7 477.3h6.8M838.1 473.9v6.8M833.9 485h6.8M837.3 481.6v6.8M833 492.7h6.8M836.4 489.3v6.8M841 182.3h6.8M844.4 178.9v6.8M841.8 190h6.8M845.2 186.6v6.8M842.7 197.8h6.8M846.1 194.4v6.8M843.5 205.6h6.8M846.9 202.2v6.8M844.3 213.6h6.8M847.7 210.2v6.8M845.1 221.7h6.8M848.5 218.3v6.8M845.8 229.8h6.8M849.2 226.4v6.8M846.5 238.1h6.8M849.9 234.7v6.8M847.1 246.4h6.8M850.5 243v6.8M847.7 254.8h6.8M851.1 251.4v6.8M848.2 263.3h6.8M851.6 259.9v6.8M848.7 271.9h6.8M852.1 268.5v6.8M849.2 280.5h6.8M852.6 277.1v6.8M849.5 289.2h6.8M852.9 285.8v6.8M849.8 297.9h6.8M853.2 294.5v6.8M850.1 306.6h6.8M853.5 303.2v6.8M850.2 315.4h6.8M853.6 312v6.8M850.3 324.2h6.8M853.7 320.8v6.8M850.4 333h6.8M853.8 329.6v6.8M850.4 341.8h6.8M853.8 338.4v6.8M850.3 350.6h6.8M853.7 347.2v6.8M850.1 359.4h6.8M853.5 356v6.8M849.9 368.2h6.8M853.3 364.8v6.8M849.6 376.9h6.8M853 373.5v6.8M849.3 385.6h6.8M852.7 382.2v6.8M848.9 394.2h6.8M852.3 390.8v6.8M848.4 402.8h6.8M851.8 399.4v6.8M847.9 411.3h6.8M851.3 407.9v6.8M847.3 419.7h6.8M850.7 416.3v6.8M846.7 428.1h6.8M850.1 424.7v6.8M846 436.4h6.8M849.4 433v6.8M845.3 444.6h6.8M848.7 441.2v6.8M844.6 452.7h6.8M848 449.3v6.8M843.8 460.7h6.8M847.2 457.3v6.8M843 468.6h6.8M846.4 465.2v6.8M842.2 476.4h6.8M845.6 473v6.8M841.3 484.2h6.8M844.7 480.8v6.8M840.4 491.8h6.8M843.8 488.4v6.8M848.3 183.1h6.8M851.7 179.7v6.8M849.2 190.8h6.8M852.6 187.4v6.8M850 198.6h6.8M853.4 195.2v6.8M850.8 206.5h6.8M854.2 203.1v6.8M851.6 214.4h6.8M855 211v6.8M852.4 222.4h6.8M855.8 219v6.8M853.1 230.6h6.8M856.5 227.2v6.8M853.8 238.8h6.8M857.2 235.4v6.8M854.4 247h6.8M857.8 243.6v6.8M855 255.4h6.8M858.4 252v6.8M855.6 263.8h6.8M859 260.4v6.8M856.1 272.3h6.8M859.5 268.9v6.8M856.5 280.9h6.8M859.9 277.5v6.8M856.9 289.5h6.8M860.3 286.1v6.8M857.2 298.1h6.8M860.6 294.7v6.8M857.4 306.8h6.8M860.8 303.4v6.8M857.6 315.5h6.8M861 312.1v6.8M857.7 324.3h6.8M861.1 320.9v6.8M857.7 333h6.8M861.1 329.6v6.8M857.7 341.8h6.8M861.1 338.4v6.8M857.6 350.5h6.8M861 347.1v6.8M857.5 359.2h6.8M860.9 355.8v6.8M857.3 367.9h6.8M860.7 364.5v6.8M857 376.6h6.8M860.4 373.2v6.8M856.6 385.2h6.8M860 381.8v6.8M856.2 393.8h6.8M859.6 390.4v6.8M855.8 402.3h6.8M859.2 398.9v6.8M855.2 410.8h6.8M858.6 407.4v6.8M854.7 419.1h6.8M858.1 415.7v6.8M854 427.5h6.8M857.4 424.1v6.8M853.4 435.7h6.8M856.8 432.3v6.8M852.7 443.8h6.8M856.1 440.4v6.8M851.9 451.9h6.8M855.3 448.5v6.8M851.1 459.9h6.8M854.5 456.5v6.8M850.3 467.8h6.8M853.7 464.4v6.8M849.5 475.6h6.8M852.9 472.2v6.8M848.6 483.3h6.8M852 479.9v6.8M847.8 490.9h6.8M851.2 487.5v6.8" stroke="#0000ff" stroke-width="1.15" fill="none"/></svg>
<svg style="left:453px;top:165px" width="413" height="350" viewBox="453 165 413 350"><path d="M392.8 491L399 491.2L405.2 491.4L411.3 491.7L417.3 492.1L423.2 492.5L429.2 493L435 493.5L440.9 494.1L446.8 494.7L452.7 495.3L458.6 495.9L464.5 496.6L470.5 497.3L476.5 498L482.5 498.7L488.6 499.5L494.8 500.2L501 500.9L507.3 501.6L513.7 502.3L520.1 503L526.6 503.7L533.2 504.4L539.8 505L546.6 505.7L553.3 506.3L560.2 506.8L567.1 507.4L574.1 507.9L581.1 508.4L588.2 508.8L595.3 509.2L602.5 509.6L609.7 509.9L617 510.2L624.3 510.5L631.6 510.7L639 510.8L646.4 511L653.8 511L661.1 511.1L668.5 511.1L675.9 511L683.3 510.9L690.7 510.8L698 510.6L705.3 510.3L712.6 510.1L719.9 509.8L727.1 509.4L734.2 509L741.3 508.6L748.4 508.1L755.4 507.6L762.3 507.1L769.2 506.6L776 506L782.8 505.4L789.5 504.7L796.1 504.1L802.6 503.4L809.1 502.7L815.5 502L821.8 501.3L828.1 500.6L834.3 499.8L840.4 499.1L846.5 498.4L852.5 497.7L858.5 497L864.4 496.3L870.4 495.6L876.3 495L882.1 494.4L888 493.8L893.9 493.2L899.8 492.7L905.7 492.3L911.7 491.9L917.7 491.5L923.8 491.3L930.1 491.1M392.8 176.6L399.1 176.4L405.3 176.2L411.4 175.9L417.4 175.5L423.4 175.1L429.3 174.7L435.2 174.1L441.1 173.6L446.9 173L452.8 172.4L458.7 171.7L464.7 171L470.6 170.3L476.6 169.6L482.7 168.9L488.8 168.2L495 167.5L501.2 166.7L507.5 166L513.9 165.3L520.3 164.6L526.8 163.9L533.4 163.2L540 162.6L546.7 162L553.5 161.4L560.3 160.8L567.2 160.2L574.2 159.7L581.2 159.3L588.3 158.8L595.4 158.4L602.6 158L609.8 157.7L617.1 157.4L624.4 157.2L631.7 156.9L639 156.8L646.4 156.7L653.8 156.6L661.1 156.5L668.5 156.6L675.9 156.6L683.3 156.7L690.6 156.9L697.9 157L705.3 157.3L712.5 157.5L719.8 157.9L727 158.2L734.1 158.6L741.2 159L748.3 159.5L755.3 160L762.2 160.5L769.1 161.1L775.9 161.7L782.6 162.3L789.3 162.9L795.9 163.6L802.4 164.3L808.9 164.9L815.3 165.7L821.6 166.4L827.9 167.1L834.1 167.8L840.2 168.5L846.3 169.3L852.3 170L858.3 170.7L864.3 171.4L870.2 172L876.1 172.7L882 173.3L887.9 173.9L893.7 174.4L899.7 174.9L905.6 175.3L911.6 175.7L917.6 176.1L923.8 176.3L930 176.5" stroke="#b0b0b0" stroke-width="1.3" fill="none"/></svg>
<svg style="left:453px;top:571px" width="413" height="349" viewBox="453 571 413 349"><defs><radialGradient id="lgn" gradientUnits="userSpaceOnUse" cx="659.5" cy="745.5" r="290"><stop offset="0" stop-color="#f4f4f4"/><stop offset="0.55" stop-color="#d6d6d6"/><stop offset="1" stop-color="#b2b2b2"/></radialGradient><radialGradient id="dgn" gradientUnits="userSpaceOnUse" cx="659.5" cy="745.5" r="280"><stop offset="0" stop-color="#484848"/><stop offset="0.6" stop-color="#424242"/><stop offset="1" stop-color="#363636"/></radialGradient><filter id="bln" x="-5%" y="-5%" width="110%" height="110%"><feGaussianBlur stdDeviation="0.55"/></filter></defs><rect x="453" y="571" width="413" height="349" fill="#050505"/><g filter="url(#bln)"><rect x="433" y="551" width="453" height="389" fill="url(#lgn)"/><path d="M437.9 582.8L453.6 582.1L452.9 598.2L437.2 598.9ZM436.6 615.1L452.3 614.5L451.8 631L436 631.5ZM435.5 648L451.4 647.5L451 664.2L435.1 664.6ZM434.9 815.5L450.8 815.9L451.1 832.6L435.3 832.2ZM435.7 848.7L451.5 849.2L452 865.7L436.2 865.2ZM436.8 881.5L452.5 882.1L453.1 898.4L437.5 897.7ZM438.2 913.7L453.8 914.5L454.6 930.4L439 929.6ZM454.3 566.1L470.1 565.3L469.4 581.4L453.6 582.1ZM452.9 598.2L468.8 597.6L468.3 614L452.3 614.5ZM451.8 631L467.8 630.5L467.4 647.1L451.4 647.5ZM451 664.2L467 663.9L466.8 680.7L450.7 680.9ZM450.4 697.8L466.5 697.6L466.4 714.5L450.3 714.6ZM450.2 731.5L466.3 731.5L466.3 748.4L450.2 748.4ZM450.2 765.3L466.3 765.4L466.4 782.4L450.3 782.2ZM450.5 799.1L466.6 799.3L466.9 816.1L450.8 815.9ZM451.1 832.6L467.2 832.9L467.5 849.6L451.5 849.2ZM452 865.7L468 866.2L468.5 882.7L452.5 882.1ZM453.1 898.4L469 899L469.7 915.2L453.8 914.5ZM469.4 581.4L485.5 580.8L484.9 597.1L468.8 597.6ZM468.3 614L484.4 613.5L484 630.1L467.8 630.5ZM467.4 647.1L483.6 646.8L483.3 663.6L467 663.9ZM466.8 680.7L483 680.4L482.9 697.4L466.5 697.6ZM466.4 714.5L482.7 714.4L482.6 731.4L466.3 731.5ZM466.3 748.4L482.6 748.4L482.7 765.5L466.3 765.4ZM466.4 782.4L482.8 782.5L482.9 799.5L466.6 799.3ZM466.9 816.1L483.1 816.4L483.4 833.3L467.2 832.9ZM467.5 849.6L483.7 850L484.1 866.7L468 866.2ZM468.5 882.7L484.6 883.2L485.1 899.6L469 899ZM469.7 915.2L485.7 915.8L486.3 931.9L470.4 931.2ZM486.1 564.6L502.3 564L501.7 580.2L485.5 580.8ZM484.9 597.1L501.2 596.6L500.8 613.1L484.4 613.5ZM484 630.1L500.4 629.7L500 646.4L483.6 646.8ZM483.3 663.6L499.7 663.3L499.5 680.2L483 680.4ZM482.9 697.4L499.3 697.2L499.2 714.3L482.7 714.4ZM482.6 731.4L499.1 731.4L499.1 748.5L482.6 748.4ZM482.7 765.5L499.2 765.5L499.2 782.6L482.8 782.5ZM482.9 799.5L499.4 799.7L499.6 816.6L483.1 816.4ZM483.4 833.3L499.8 833.5L500.1 850.4L483.7 850ZM484.1 866.7L500.5 867.1L500.9 883.7L484.6 883.2ZM485.1 899.6L501.4 900.1L501.9 916.4L485.7 915.8ZM501.7 580.2L518.1 579.7L517.7 596.1L501.2 596.6ZM500.8 613.1L517.3 612.7L516.9 629.3L500.4 629.7ZM500 646.4L516.6 646.1L516.4 663L499.7 663.3ZM499.5 680.2L516.1 680L516 697.1L499.3 697.2ZM499.2 714.3L515.9 714.2L515.8 731.3L499.1 731.4ZM499.1 748.5L515.8 748.5L515.8 765.6L499.2 765.5ZM499.2 782.6L515.9 782.7L516 799.8L499.4 799.7ZM499.6 816.6L516.2 816.8L516.4 833.8L499.8 833.5ZM500.1 850.4L516.7 850.7L517 867.4L500.5 867.1ZM500.9 883.7L517.4 884.1L517.8 900.6L501.4 900.1ZM501.9 916.4L518.3 916.9L518.8 933.1L502.5 932.5ZM518.6 563.5L535.1 563L534.7 579.3L518.1 579.7ZM517.7 596.1L534.3 595.7L533.9 612.3L517.3 612.7ZM516.9 629.3L533.6 629L533.3 645.9L516.6 646.1ZM516.4 663L533.1 662.8L532.9 679.9L516.1 680ZM516 697.1L532.8 697L532.7 714.1L515.9 714.2ZM515.8 731.3L532.6 731.3L532.6 748.5L515.8 748.5ZM515.8 765.6L532.6 765.7L532.7 782.8L515.9 782.7ZM516 799.8L532.8 800L533 817L516.2 816.8ZM516.4 833.8L533.2 834L533.4 851L516.7 850.7ZM517 867.4L533.7 867.8L534 884.5L517.4 884.1ZM517.8 900.6L534.4 901L534.8 917.4L518.3 916.9ZM534.7 579.3L551.3 578.9L551 595.4L534.3 595.7ZM533.9 612.3L550.7 612L550.4 628.8L533.6 629ZM533.3 645.9L550.2 645.6L550 662.6L533.1 662.8ZM532.9 679.9L549.8 679.7L549.7 696.8L532.8 697ZM532.7 714.1L549.6 714L549.6 731.2L532.6 731.3ZM532.6 748.5L549.5 748.5L549.6 765.7L532.6 765.7ZM532.7 782.8L549.6 782.9L549.7 800.1L532.8 800ZM533 817L549.9 817.2L550 834.2L533.2 834ZM533.4 851L550.2 851.2L550.5 868.1L533.7 867.8ZM534 884.5L550.8 884.8L551.1 901.4L534.4 901ZM534.8 917.4L551.4 917.8L551.8 934L535.3 933.6ZM551.7 562.6L568.4 562.2L568.1 578.5L551.3 578.9ZM551 595.4L567.8 595.1L567.5 611.7L550.7 612ZM550.4 628.8L567.3 628.5L567.1 645.5L550.2 645.6ZM550 662.6L567 662.5L566.8 679.6L549.8 679.7ZM549.7 696.8L566.7 696.7L566.6 714L549.6 714ZM549.6 731.2L566.6 731.2L566.6 748.5L549.5 748.5ZM549.6 765.7L566.6 765.7L566.7 783L549.6 782.9ZM549.7 800.1L566.8 800.2L566.9 817.3L549.9 817.2ZM550 834.2L567 834.4L567.2 851.4L550.2 851.2ZM550.5 868.1L567.4 868.3L567.6 885.1L550.8 884.8ZM551.1 901.4L567.9 901.7L568.2 918.1L551.4 917.8ZM568.1 578.5L585 578.3L584.7 594.8L567.8 595.1ZM567.5 611.7L584.5 611.5L584.3 628.3L567.3 628.5ZM567.1 645.5L584.2 645.3L584 662.3L567 662.5ZM566.8 679.6L583.9 679.5L583.8 696.7L566.7 696.7ZM566.6 714L583.8 713.9L583.8 731.2L566.6 731.2ZM566.6 748.5L583.7 748.5L583.8 765.8L566.6 765.7ZM566.7 783L583.8 783.1L583.9 800.3L566.8 800.2ZM566.9 817.3L584 817.5L584.1 834.6L567 834.4ZM567.2 851.4L584.2 851.6L584.4 868.5L567.4 868.3ZM567.6 885.1L584.6 885.3L584.8 901.9L567.9 901.7ZM568.2 918.1L585 918.4L585.3 934.7L568.5 934.4ZM585.2 561.9L602.1 561.7L601.9 578L585 578.3ZM584.7 594.8L601.7 594.6L601.6 611.3L584.5 611.5ZM584.3 628.3L601.4 628.2L601.3 645.2L584.2 645.3ZM584 662.3L601.2 662.2L601.1 679.4L583.9 679.5ZM583.8 696.7L601 696.6L601 713.9L583.8 713.9ZM583.8 731.2L601 731.2L601 748.5L583.7 748.5ZM583.8 765.8L601 765.8L601 783.1L583.8 783.1ZM583.9 800.3L601.1 800.4L601.1 817.6L584 817.5ZM584.1 834.6L601.2 834.7L601.3 851.7L584.2 851.6ZM584.4 868.5L601.5 868.7L601.6 885.5L584.6 885.3ZM584.8 901.9L601.8 902.1L602 918.6L585 918.4ZM601.9 578L618.9 577.9L618.8 594.5L601.7 594.6ZM601.6 611.3L618.7 611.2L618.6 628.1L601.4 628.2ZM601.3 645.2L618.5 645.1L618.4 662.2L601.2 662.2ZM601.1 679.4L618.3 679.3L618.3 696.6L601 696.6ZM601 713.9L618.3 713.8L618.2 731.2L601 731.2ZM601 748.5L618.2 748.5L618.2 765.8L601 765.8ZM601 783.1L618.3 783.1L618.3 800.4L601.1 800.4ZM601.1 817.6L618.4 817.6L618.4 834.8L601.2 834.7ZM601.3 851.7L618.5 851.8L618.6 868.8L601.5 868.7ZM601.6 885.5L618.7 885.6L618.8 902.3L601.8 902.1ZM602 918.6L618.9 918.8L619.1 935.2L602.2 935ZM619 561.5L636 561.4L635.9 577.8L618.9 577.9ZM618.8 594.5L635.9 594.4L635.8 611.1L618.7 611.2ZM618.6 628.1L635.7 628L635.7 645L618.5 645.1ZM618.4 662.2L635.6 662.1L635.6 679.3L618.3 679.3ZM618.3 696.6L635.6 696.5L635.6 713.8L618.3 713.8ZM618.2 731.2L635.6 731.2L635.6 748.5L618.2 748.5ZM618.2 765.8L635.6 765.8L635.6 783.2L618.3 783.1ZM618.3 800.4L635.6 800.4L635.6 817.7L618.4 817.6ZM618.4 834.8L635.7 834.8L635.7 851.9L618.5 851.8ZM618.6 868.8L635.8 868.9L635.8 885.7L618.7 885.6ZM618.8 902.3L635.9 902.4L636 918.9L618.9 918.8ZM635.9 577.8L653 577.7L653 594.3L635.9 594.4ZM635.8 611.1L653 611.1L653 628L635.7 628ZM635.7 645L652.9 645L652.9 662.1L635.6 662.1ZM635.6 679.3L652.9 679.3L652.9 696.5L635.6 696.5ZM635.6 713.8L652.9 713.8L652.9 731.2L635.6 731.2ZM635.6 748.5L652.9 748.5L652.9 765.8L635.6 765.8ZM635.6 783.2L652.9 783.2L652.9 800.5L635.6 800.4ZM635.6 817.7L652.9 817.7L652.9 834.9L635.7 834.8ZM635.7 851.9L652.9 851.9L653 868.9L635.8 868.9ZM635.8 885.7L653 885.7L653 902.4L635.9 902.4ZM636 918.9L653 919L653 935.3L636.1 935.3ZM653 561.3L670 561.3L670.1 577.7L653 577.7ZM653 594.3L670.1 594.3L670.1 611.1L653 611.1ZM653 628L670.2 628L670.2 645L652.9 645ZM652.9 662.1L670.2 662.1L670.2 679.3L652.9 679.3ZM652.9 696.5L670.2 696.5L670.2 713.8L652.9 713.8ZM652.9 731.2L670.2 731.2L670.2 748.5L652.9 748.5ZM652.9 765.8L670.2 765.8L670.2 783.2L652.9 783.2ZM652.9 800.5L670.2 800.5L670.2 817.7L652.9 817.7ZM652.9 834.9L670.2 834.8L670.2 851.9L652.9 851.9ZM653 868.9L670.2 868.9L670.1 885.7L653 885.7ZM653 902.4L670.1 902.4L670.1 919L653 919ZM670.1 577.7L687.1 577.8L687.2 594.4L670.1 594.3ZM670.1 611.1L687.3 611.1L687.4 628L670.2 628ZM670.2 645L687.4 645L687.5 662.1L670.2 662.1ZM670.2 679.3L687.5 679.3L687.6 696.5L670.2 696.5ZM670.2 713.8L687.6 713.8L687.6 731.2L670.2 731.2ZM670.2 748.5L687.6 748.5L687.6 765.8L670.2 765.8ZM670.2 783.2L687.6 783.2L687.5 800.4L670.2 800.5ZM670.2 817.7L687.5 817.7L687.5 834.8L670.2 834.8ZM670.2 851.9L687.4 851.9L687.3 868.8L670.2 868.9ZM670.1 885.7L687.3 885.7L687.2 902.4L670.1 902.4ZM670.1 919L687.1 918.9L687 935.3L670 935.3ZM687 561.4L704 561.5L704.2 577.9L687.1 577.8ZM687.2 594.4L704.3 594.5L704.4 611.2L687.3 611.1ZM687.4 628L704.5 628.1L704.6 645.1L687.4 645ZM687.5 662.1L704.7 662.2L704.8 679.3L687.5 679.3ZM687.6 696.5L704.8 696.6L704.9 713.9L687.6 713.8ZM687.6 731.2L704.9 731.2L704.9 748.5L687.6 748.5ZM687.6 765.8L704.9 765.8L704.9 783.1L687.6 783.2ZM687.5 800.4L704.8 800.4L704.8 817.6L687.5 817.7ZM687.5 834.8L704.7 834.8L704.6 851.8L687.4 851.9ZM687.3 868.8L704.5 868.7L704.4 885.6L687.3 885.7ZM687.2 902.4L704.3 902.3L704.1 918.8L687.1 918.9ZM704.2 577.9L721.2 578.1L721.4 594.7L704.3 594.5ZM704.4 611.2L721.5 611.4L721.7 628.2L704.5 628.1ZM704.6 645.1L721.8 645.2L721.9 662.3L704.7 662.2ZM704.8 679.3L722 679.4L722.1 696.6L704.8 696.6ZM704.9 713.9L722.1 713.9L722.2 731.2L704.9 731.2ZM704.9 748.5L722.2 748.5L722.1 765.8L704.9 765.8ZM704.9 783.1L722.1 783.1L722.1 800.3L704.8 800.4ZM704.8 817.6L722 817.5L721.9 834.7L704.7 834.8ZM704.6 851.8L721.8 851.7L721.6 868.6L704.5 868.7ZM704.4 885.6L721.5 885.4L721.3 902.1L704.3 902.3ZM704.1 918.8L721.1 918.6L720.9 934.9L704 935.1ZM720.9 561.7L737.8 562L738.1 578.3L721.2 578.1ZM721.4 594.7L738.3 594.9L738.6 611.6L721.5 611.4ZM721.7 628.2L738.7 628.4L738.9 645.3L721.8 645.2ZM721.9 662.3L739.1 662.4L739.2 679.5L722 679.4ZM722.1 696.6L739.3 696.7L739.3 713.9L722.1 713.9ZM722.2 731.2L739.4 731.2L739.4 748.5L722.2 748.5ZM722.1 765.8L739.3 765.8L739.3 783L722.1 783.1ZM722.1 800.3L739.2 800.3L739.1 817.4L722 817.5ZM721.9 834.7L739 834.5L738.9 851.5L721.8 851.7ZM721.6 868.6L738.7 868.5L738.5 885.2L721.5 885.4ZM721.3 902.1L738.3 901.9L738 918.4L721.1 918.6ZM738.1 578.3L754.9 578.6L755.2 595.1L738.3 594.9ZM738.6 611.6L755.5 611.8L755.7 628.6L738.7 628.4ZM738.9 645.3L755.9 645.5L756.1 662.5L739.1 662.4ZM739.2 679.5L756.3 679.6L756.4 696.8L739.3 696.7ZM739.3 713.9L756.4 714L756.5 731.2L739.4 731.2ZM739.4 748.5L756.5 748.5L756.5 765.7L739.3 765.8ZM739.3 783L756.4 783L756.3 800.2L739.2 800.3ZM739.1 817.4L756.2 817.3L756.1 834.4L739 834.5ZM738.9 851.5L755.9 851.4L755.7 868.2L738.7 868.5ZM738.5 885.2L755.4 885L755.1 901.6L738.3 901.9ZM738 918.4L754.8 918.1L754.5 934.3L737.7 934.7ZM754.6 562.3L771.3 562.7L771.7 579L754.9 578.6ZM755.2 595.1L772 595.4L772.4 612.1L755.5 611.8ZM755.7 628.6L772.6 628.8L772.9 645.7L755.9 645.5ZM756.1 662.5L773.1 662.7L773.2 679.7L756.3 679.6ZM756.4 696.8L773.4 696.9L773.5 714L756.4 714ZM756.5 731.2L773.5 731.3L773.5 748.5L756.5 748.5ZM756.5 765.7L773.5 765.7L773.4 782.9L756.4 783ZM756.3 800.2L773.3 800.1L773.2 817.2L756.2 817.3ZM756.1 834.4L773 834.2L772.8 851.1L755.9 851.4ZM755.7 868.2L772.5 868L772.2 884.7L755.4 885ZM755.1 901.6L771.9 901.3L771.5 917.7L754.8 918.1ZM771.7 579L788.3 579.4L788.7 595.8L772 595.4ZM772.4 612.1L789.1 612.4L789.4 629.1L772.6 628.8ZM772.9 645.7L789.7 645.9L789.9 662.9L773.1 662.7ZM773.2 679.7L790.1 679.9L790.3 697L773.4 696.9ZM773.5 714L790.4 714.1L790.4 731.3L773.5 731.3ZM773.5 748.5L790.4 748.5L790.4 765.6L773.5 765.7ZM773.4 782.9L790.3 782.8L790.2 799.9L773.3 800.1ZM773.2 817.2L790 817L789.8 834L773 834.2ZM772.8 851.1L789.6 850.9L789.3 867.7L772.5 868ZM772.2 884.7L789 884.4L788.6 900.9L771.9 901.3ZM771.5 917.7L788.2 917.3L787.7 933.5L771.1 933.9ZM787.9 563.1L804.3 563.6L804.8 579.8L788.3 579.4ZM788.7 595.8L805.3 596.2L805.7 612.7L789.1 612.4ZM789.4 629.1L806.1 629.4L806.4 646.2L789.7 645.9ZM789.9 662.9L806.6 663.1L806.8 680.1L790.1 679.9ZM790.3 697L807 697.1L807.1 714.2L790.4 714.1ZM790.4 731.3L807.2 731.3L807.2 748.5L790.4 748.5ZM790.4 765.6L807.2 765.6L807.1 782.7L790.3 782.8ZM790.2 799.9L807 799.8L806.8 816.8L790 817ZM789.8 834L806.5 833.7L806.3 850.6L789.6 850.9ZM789.3 867.7L805.9 867.4L805.6 884L789 884.4ZM788.6 900.9L805.1 900.5L804.6 916.8L788.2 917.3ZM804.8 579.8L821.2 580.3L821.7 596.7L805.3 596.2ZM805.7 612.7L822.2 613.2L822.6 629.8L806.1 629.4ZM806.4 646.2L822.9 646.5L823.2 663.4L806.6 663.1ZM806.8 680.1L823.4 680.3L823.6 697.3L807 697.1ZM807.1 714.2L823.8 714.3L823.8 731.4L807.2 731.3ZM807.2 748.5L823.8 748.5L823.8 765.5L807.2 765.6ZM807.1 782.7L823.7 782.6L823.6 799.6L807 799.8ZM806.8 816.8L823.4 816.6L823.1 833.5L806.5 833.7ZM806.3 850.6L822.8 850.3L822.4 867L805.9 867.4ZM805.6 884L822 883.6L821.5 900L805.1 900.5ZM804.6 916.8L821 916.3L820.4 932.4L804.1 933ZM820.6 564.2L836.7 564.8L837.4 580.9L821.2 580.3ZM821.7 596.7L837.9 597.2L838.4 613.6L822.2 613.2ZM822.6 629.8L838.9 630.2L839.3 646.9L822.9 646.5ZM823.2 663.4L839.6 663.6L839.9 680.5L823.4 680.3ZM823.6 697.3L840.1 697.4L840.2 714.4L823.8 714.3ZM823.8 731.4L840.3 731.4L840.3 748.4L823.8 748.5ZM823.8 765.5L840.3 765.5L840.2 782.5L823.7 782.6ZM823.6 799.6L840 799.4L839.8 816.3L823.4 816.6ZM823.1 833.5L839.5 833.2L839.1 849.9L822.8 850.3ZM822.4 867L838.7 866.6L838.3 883.1L822 883.6ZM821.5 900L837.7 899.5L837.2 915.7L821 916.3ZM837.4 580.9L853.4 581.5L854 597.7L837.9 597.2ZM838.4 613.6L854.5 614.1L855 630.6L838.9 630.2ZM839.3 646.9L855.5 647.2L855.8 663.9L839.6 663.6ZM839.9 680.5L856.1 680.7L856.3 697.6L840.1 697.4ZM840.2 714.4L856.5 714.5L856.6 731.5L840.3 731.4ZM840.3 748.4L856.6 748.4L856.5 765.4L840.3 765.5ZM840.2 782.5L856.4 782.3L856.3 799.2L840 799.4ZM839.8 816.3L856 816.1L855.7 832.8L839.5 833.2ZM839.1 849.9L855.3 849.5L854.9 866.1L838.7 866.6ZM838.3 883.1L854.4 882.6L853.8 898.9L837.7 899.5ZM837.2 915.7L853.1 915L852.4 931L836.5 931.7ZM852.7 565.5L868.4 566.2L869.2 582.2L853.4 581.5ZM854 597.7L869.9 598.4L870.5 614.7L854.5 614.1ZM855 630.6L871 631.1L871.4 647.6L855.5 647.2ZM855.8 663.9L871.8 664.3L872.1 681L856.1 680.7ZM856.3 697.6L872.4 697.8L872.6 714.7L856.5 714.5ZM856.6 731.5L872.7 731.5L872.7 748.4L856.6 748.4ZM856.5 765.4L872.6 765.3L872.5 782.2L856.4 782.3ZM856.3 799.2L872.3 799L872 815.8L856 816.1ZM855.7 832.8L871.7 832.5L871.3 849.1L855.3 849.5ZM854.9 866.1L870.8 865.6L870.3 882L854.4 882.6ZM853.8 898.9L869.6 898.2L868.9 914.3L853.1 915Z" fill="url(#dgn)"/></g><path d="M466.6 578.6l5.7 5.7m0 -5.7l-5.7 5.7M466 594.8l5.7 5.7m0 -5.7l-5.7 5.7M465.5 611.2l5.7 5.7m0 -5.7l-5.7 5.7M465 627.7l5.7 5.7m0 -5.7l-5.7 5.7M464.6 644.3l5.7 5.7m0 -5.7l-5.7 5.7M464.2 661l5.7 5.7m0 -5.7l-5.7 5.7M463.9 677.9l5.7 5.7m0 -5.7l-5.7 5.7M463.7 694.7l5.7 5.7m0 -5.7l-5.7 5.7M463.6 711.7l5.7 5.7m0 -5.7l-5.7 5.7M463.5 728.6l5.7 5.7m0 -5.7l-5.7 5.7M463.5 745.6l5.7 5.7m0 -5.7l-5.7 5.7M463.5 762.6l5.7 5.7m0 -5.7l-5.7 5.7M463.6 779.5l5.7 5.7m0 -5.7l-5.7 5.7M463.8 796.4l5.7 5.7m0 -5.7l-5.7 5.7M464 813.3l5.7 5.7m0 -5.7l-5.7 5.7M464.3 830.1l5.7 5.7m0 -5.7l-5.7 5.7M464.7 846.8l5.7 5.7m0 -5.7l-5.7 5.7M465.1 863.4l5.7 5.7m0 -5.7l-5.7 5.7M465.6 879.9l5.7 5.7m0 -5.7l-5.7 5.7M466.2 896.2l5.7 5.7m0 -5.7l-5.7 5.7M466.8 912.4l5.7 5.7m0 -5.7l-5.7 5.7M482.7 577.9l5.7 5.7m0 -5.7l-5.7 5.7M482.1 594.2l5.7 5.7m0 -5.7l-5.7 5.7M481.6 610.7l5.7 5.7m0 -5.7l-5.7 5.7M481.2 627.2l5.7 5.7m0 -5.7l-5.7 5.7M480.8 643.9l5.7 5.7m0 -5.7l-5.7 5.7M480.5 660.7l5.7 5.7m0 -5.7l-5.7 5.7M480.2 677.6l5.7 5.7m0 -5.7l-5.7 5.7M480 694.6l5.7 5.7m0 -5.7l-5.7 5.7M479.9 711.6l5.7 5.7m0 -5.7l-5.7 5.7M479.8 728.6l5.7 5.7m0 -5.7l-5.7 5.7M479.8 745.6l5.7 5.7m0 -5.7l-5.7 5.7M479.8 762.7l5.7 5.7m0 -5.7l-5.7 5.7M479.9 779.7l5.7 5.7m0 -5.7l-5.7 5.7M480.1 796.6l5.7 5.7m0 -5.7l-5.7 5.7M480.3 813.6l5.7 5.7m0 -5.7l-5.7 5.7M480.6 830.4l5.7 5.7m0 -5.7l-5.7 5.7M480.9 847.2l5.7 5.7m0 -5.7l-5.7 5.7M481.3 863.8l5.7 5.7m0 -5.7l-5.7 5.7M481.8 880.4l5.7 5.7m0 -5.7l-5.7 5.7M482.3 896.8l5.7 5.7m0 -5.7l-5.7 5.7M482.9 913l5.7 5.7m0 -5.7l-5.7 5.7M498.9 577.4l5.7 5.7m0 -5.7l-5.7 5.7M498.4 593.7l5.7 5.7m0 -5.7l-5.7 5.7M497.9 610.2l5.7 5.7m0 -5.7l-5.7 5.7M497.5 626.9l5.7 5.7m0 -5.7l-5.7 5.7M497.2 643.6l5.7 5.7m0 -5.7l-5.7 5.7M496.9 660.5l5.7 5.7m0 -5.7l-5.7 5.7M496.7 677.4l5.7 5.7m0 -5.7l-5.7 5.7M496.5 694.4l5.7 5.7m0 -5.7l-5.7 5.7M496.4 711.5l5.7 5.7m0 -5.7l-5.7 5.7M496.3 728.5l5.7 5.7m0 -5.7l-5.7 5.7M496.3 745.6l5.7 5.7m0 -5.7l-5.7 5.7M496.3 762.7l5.7 5.7m0 -5.7l-5.7 5.7M496.4 779.8l5.7 5.7m0 -5.7l-5.7 5.7M496.6 796.8l5.7 5.7m0 -5.7l-5.7 5.7M496.8 813.8l5.7 5.7m0 -5.7l-5.7 5.7M497 830.7l5.7 5.7m0 -5.7l-5.7 5.7M497.3 847.5l5.7 5.7m0 -5.7l-5.7 5.7M497.7 864.2l5.7 5.7m0 -5.7l-5.7 5.7M498.1 880.8l5.7 5.7m0 -5.7l-5.7 5.7M498.6 897.3l5.7 5.7m0 -5.7l-5.7 5.7M499.1 913.6l5.7 5.7m0 -5.7l-5.7 5.7M515.3 576.9l5.7 5.7m0 -5.7l-5.7 5.7M514.8 593.3l5.7 5.7m0 -5.7l-5.7 5.7M514.4 609.8l5.7 5.7m0 -5.7l-5.7 5.7M514.1 626.5l5.7 5.7m0 -5.7l-5.7 5.7M513.8 643.3l5.7 5.7m0 -5.7l-5.7 5.7M513.5 660.2l5.7 5.7m0 -5.7l-5.7 5.7M513.3 677.2l5.7 5.7m0 -5.7l-5.7 5.7M513.2 694.3l5.7 5.7m0 -5.7l-5.7 5.7M513 711.4l5.7 5.7m0 -5.7l-5.7 5.7M513 728.5l5.7 5.7m0 -5.7l-5.7 5.7M513 745.6l5.7 5.7m0 -5.7l-5.7 5.7M513 762.8l5.7 5.7m0 -5.7l-5.7 5.7M513.1 779.9l5.7 5.7m0 -5.7l-5.7 5.7M513.2 797l5.7 5.7m0 -5.7l-5.7 5.7M513.4 814l5.7 5.7m0 -5.7l-5.7 5.7M513.6 831l5.7 5.7m0 -5.7l-5.7 5.7M513.9 847.9l5.7 5.7m0 -5.7l-5.7 5.7M514.2 864.6l5.7 5.7m0 -5.7l-5.7 5.7M514.6 881.3l5.7 5.7m0 -5.7l-5.7 5.7M515 897.8l5.7 5.7m0 -5.7l-5.7 5.7M515.5 914.1l5.7 5.7m0 -5.7l-5.7 5.7M531.8 576.4l5.7 5.7m0 -5.7l-5.7 5.7M531.4 592.9l5.7 5.7m0 -5.7l-5.7 5.7M531.1 609.5l5.7 5.7m0 -5.7l-5.7 5.7M530.8 626.2l5.7 5.7m0 -5.7l-5.7 5.7M530.5 643.1l5.7 5.7m0 -5.7l-5.7 5.7M530.3 660l5.7 5.7m0 -5.7l-5.7 5.7M530.1 677l5.7 5.7m0 -5.7l-5.7 5.7M529.9 694.1l5.7 5.7m0 -5.7l-5.7 5.7M529.8 711.3l5.7 5.7m0 -5.7l-5.7 5.7M529.8 728.5l5.7 5.7m0 -5.7l-5.7 5.7M529.8 745.6l5.7 5.7m0 -5.7l-5.7 5.7M529.8 762.8l5.7 5.7m0 -5.7l-5.7 5.7M529.9 780l5.7 5.7m0 -5.7l-5.7 5.7M530 797.1l5.7 5.7m0 -5.7l-5.7 5.7M530.1 814.2l5.7 5.7m0 -5.7l-5.7 5.7M530.3 831.2l5.7 5.7m0 -5.7l-5.7 5.7M530.6 848.1l5.7 5.7m0 -5.7l-5.7 5.7M530.9 864.9l5.7 5.7m0 -5.7l-5.7 5.7M531.2 881.6l5.7 5.7m0 -5.7l-5.7 5.7M531.6 898.2l5.7 5.7m0 -5.7l-5.7 5.7M532 914.6l5.7 5.7m0 -5.7l-5.7 5.7M548.5 576l5.7 5.7m0 -5.7l-5.7 5.7M548.1 592.5l5.7 5.7m0 -5.7l-5.7 5.7M547.8 609.2l5.7 5.7m0 -5.7l-5.7 5.7M547.6 625.9l5.7 5.7m0 -5.7l-5.7 5.7M547.3 642.8l5.7 5.7m0 -5.7l-5.7 5.7M547.1 659.8l5.7 5.7m0 -5.7l-5.7 5.7M547 676.9l5.7 5.7m0 -5.7l-5.7 5.7M546.9 694l5.7 5.7m0 -5.7l-5.7 5.7M546.8 711.2l5.7 5.7m0 -5.7l-5.7 5.7M546.7 728.4l5.7 5.7m0 -5.7l-5.7 5.7M546.7 745.7l5.7 5.7m0 -5.7l-5.7 5.7M546.7 762.9l5.7 5.7m0 -5.7l-5.7 5.7M546.8 780.1l5.7 5.7m0 -5.7l-5.7 5.7M546.9 797.3l5.7 5.7m0 -5.7l-5.7 5.7M547 814.4l5.7 5.7m0 -5.7l-5.7 5.7M547.2 831.4l5.7 5.7m0 -5.7l-5.7 5.7M547.4 848.4l5.7 5.7m0 -5.7l-5.7 5.7M547.7 865.2l5.7 5.7m0 -5.7l-5.7 5.7M547.9 881.9l5.7 5.7m0 -5.7l-5.7 5.7M548.3 898.5l5.7 5.7m0 -5.7l-5.7 5.7M548.6 915l5.7 5.7m0 -5.7l-5.7 5.7M565.3 575.7l5.7 5.7m0 -5.7l-5.7 5.7M565 592.2l5.7 5.7m0 -5.7l-5.7 5.7M564.7 608.9l5.7 5.7m0 -5.7l-5.7 5.7M564.5 625.7l5.7 5.7m0 -5.7l-5.7 5.7M564.3 642.6l5.7 5.7m0 -5.7l-5.7 5.7M564.1 659.6l5.7 5.7m0 -5.7l-5.7 5.7M564 676.8l5.7 5.7m0 -5.7l-5.7 5.7M563.9 693.9l5.7 5.7m0 -5.7l-5.7 5.7M563.8 711.1l5.7 5.7m0 -5.7l-5.7 5.7M563.8 728.4l5.7 5.7m0 -5.7l-5.7 5.7M563.8 745.7l5.7 5.7m0 -5.7l-5.7 5.7M563.8 762.9l5.7 5.7m0 -5.7l-5.7 5.7M563.8 780.2l5.7 5.7m0 -5.7l-5.7 5.7M563.9 797.4l5.7 5.7m0 -5.7l-5.7 5.7M564 814.5l5.7 5.7m0 -5.7l-5.7 5.7M564.2 831.6l5.7 5.7m0 -5.7l-5.7 5.7M564.4 848.6l5.7 5.7m0 -5.7l-5.7 5.7M564.6 865.5l5.7 5.7m0 -5.7l-5.7 5.7M564.8 882.2l5.7 5.7m0 -5.7l-5.7 5.7M565.1 898.8l5.7 5.7m0 -5.7l-5.7 5.7M565.4 915.3l5.7 5.7m0 -5.7l-5.7 5.7M582.1 575.4l5.7 5.7m0 -5.7l-5.7 5.7M581.9 592l5.7 5.7m0 -5.7l-5.7 5.7M581.7 608.7l5.7 5.7m0 -5.7l-5.7 5.7M581.5 625.5l5.7 5.7m0 -5.7l-5.7 5.7M581.3 642.5l5.7 5.7m0 -5.7l-5.7 5.7M581.2 659.5l5.7 5.7m0 -5.7l-5.7 5.7M581.1 676.6l5.7 5.7m0 -5.7l-5.7 5.7M581 693.8l5.7 5.7m0 -5.7l-5.7 5.7M581 711.1l5.7 5.7m0 -5.7l-5.7 5.7M580.9 728.4l5.7 5.7m0 -5.7l-5.7 5.7M580.9 745.7l5.7 5.7m0 -5.7l-5.7 5.7M580.9 763l5.7 5.7m0 -5.7l-5.7 5.7M581 780.2l5.7 5.7m0 -5.7l-5.7 5.7M581 797.5l5.7 5.7m0 -5.7l-5.7 5.7M581.1 814.6l5.7 5.7m0 -5.7l-5.7 5.7M581.2 831.7l5.7 5.7m0 -5.7l-5.7 5.7M581.4 848.8l5.7 5.7m0 -5.7l-5.7 5.7M581.6 865.7l5.7 5.7m0 -5.7l-5.7 5.7M581.8 882.5l5.7 5.7m0 -5.7l-5.7 5.7M582 899.1l5.7 5.7m0 -5.7l-5.7 5.7M582.2 915.6l5.7 5.7m0 -5.7l-5.7 5.7M599.1 575.2l5.7 5.7m0 -5.7l-5.7 5.7M598.9 591.8l5.7 5.7m0 -5.7l-5.7 5.7M598.7 608.5l5.7 5.7m0 -5.7l-5.7 5.7M598.6 625.4l5.7 5.7m0 -5.7l-5.7 5.7M598.5 642.3l5.7 5.7m0 -5.7l-5.7 5.7M598.4 659.4l5.7 5.7m0 -5.7l-5.7 5.7M598.3 676.6l5.7 5.7m0 -5.7l-5.7 5.7M598.2 693.8l5.7 5.7m0 -5.7l-5.7 5.7M598.2 711l5.7 5.7m0 -5.7l-5.7 5.7M598.1 728.4l5.7 5.7m0 -5.7l-5.7 5.7M598.1 745.7l5.7 5.7m0 -5.7l-5.7 5.7M598.1 763l5.7 5.7m0 -5.7l-5.7 5.7M598.2 780.3l5.7 5.7m0 -5.7l-5.7 5.7M598.2 797.5l5.7 5.7m0 -5.7l-5.7 5.7M598.3 814.7l5.7 5.7m0 -5.7l-5.7 5.7M598.4 831.9l5.7 5.7m0 -5.7l-5.7 5.7M598.5 848.9l5.7 5.7m0 -5.7l-5.7 5.7M598.6 865.8l5.7 5.7m0 -5.7l-5.7 5.7M598.8 882.6l5.7 5.7m0 -5.7l-5.7 5.7M598.9 899.3l5.7 5.7m0 -5.7l-5.7 5.7M599.1 915.8l5.7 5.7m0 -5.7l-5.7 5.7M616.1 575.1l5.7 5.7m0 -5.7l-5.7 5.7M615.9 591.6l5.7 5.7m0 -5.7l-5.7 5.7M615.8 608.4l5.7 5.7m0 -5.7l-5.7 5.7M615.7 625.2l5.7 5.7m0 -5.7l-5.7 5.7M615.6 642.2l5.7 5.7m0 -5.7l-5.7 5.7M615.6 659.3l5.7 5.7m0 -5.7l-5.7 5.7M615.5 676.5l5.7 5.7m0 -5.7l-5.7 5.7M615.5 693.7l5.7 5.7m0 -5.7l-5.7 5.7M615.4 711l5.7 5.7m0 -5.7l-5.7 5.7M615.4 728.3l5.7 5.7m0 -5.7l-5.7 5.7M615.4 745.7l5.7 5.7m0 -5.7l-5.7 5.7M615.4 763l5.7 5.7m0 -5.7l-5.7 5.7M615.4 780.3l5.7 5.7m0 -5.7l-5.7 5.7M615.5 797.6l5.7 5.7m0 -5.7l-5.7 5.7M615.5 814.8l5.7 5.7m0 -5.7l-5.7 5.7M615.6 831.9l5.7 5.7m0 -5.7l-5.7 5.7M615.7 849l5.7 5.7m0 -5.7l-5.7 5.7M615.8 865.9l5.7 5.7m0 -5.7l-5.7 5.7M615.9 882.8l5.7 5.7m0 -5.7l-5.7 5.7M616 899.5l5.7 5.7m0 -5.7l-5.7 5.7M616.1 916l5.7 5.7m0 -5.7l-5.7 5.7M633.1 575l5.7 5.7m0 -5.7l-5.7 5.7M633 591.5l5.7 5.7m0 -5.7l-5.7 5.7M633 608.3l5.7 5.7m0 -5.7l-5.7 5.7M632.9 625.2l5.7 5.7m0 -5.7l-5.7 5.7M632.9 642.2l5.7 5.7m0 -5.7l-5.7 5.7M632.8 659.3l5.7 5.7m0 -5.7l-5.7 5.7M632.8 676.5l5.7 5.7m0 -5.7l-5.7 5.7M632.8 693.7l5.7 5.7m0 -5.7l-5.7 5.7M632.7 711l5.7 5.7m0 -5.7l-5.7 5.7M632.7 728.3l5.7 5.7m0 -5.7l-5.7 5.7M632.7 745.7l5.7 5.7m0 -5.7l-5.7 5.7M632.7 763l5.7 5.7m0 -5.7l-5.7 5.7M632.7 780.3l5.7 5.7m0 -5.7l-5.7 5.7M632.8 797.6l5.7 5.7m0 -5.7l-5.7 5.7M632.8 814.8l5.7 5.7m0 -5.7l-5.7 5.7M632.8 832l5.7 5.7m0 -5.7l-5.7 5.7M632.9 849.1l5.7 5.7m0 -5.7l-5.7 5.7M632.9 866l5.7 5.7m0 -5.7l-5.7 5.7M633 882.9l5.7 5.7m0 -5.7l-5.7 5.7M633.1 899.6l5.7 5.7m0 -5.7l-5.7 5.7M633.1 916.1l5.7 5.7m0 -5.7l-5.7 5.7M650.2 574.9l5.7 5.7m0 -5.7l-5.7 5.7M650.2 591.5l5.7 5.7m0 -5.7l-5.7 5.7M650.1 608.3l5.7 5.7m0 -5.7l-5.7 5.7M650.1 625.1l5.7 5.7m0 -5.7l-5.7 5.7M650.1 642.1l5.7 5.7m0 -5.7l-5.7 5.7M650.1 659.2l5.7 5.7m0 -5.7l-5.7 5.7M650.1 676.4l5.7 5.7m0 -5.7l-5.7 5.7M650.1 693.7l5.7 5.7m0 -5.7l-5.7 5.7M650.1 711l5.7 5.7m0 -5.7l-5.7 5.7M650.1 728.3l5.7 5.7m0 -5.7l-5.7 5.7M650.1 745.7l5.7 5.7m0 -5.7l-5.7 5.7M650.1 763l5.7 5.7m0 -5.7l-5.7 5.7M650.1 780.3l5.7 5.7m0 -5.7l-5.7 5.7M650.1 797.6l5.7 5.7m0 -5.7l-5.7 5.7M650.1 814.9l5.7 5.7m0 -5.7l-5.7 5.7M650.1 832l5.7 5.7m0 -5.7l-5.7 5.7M650.1 849.1l5.7 5.7m0 -5.7l-5.7 5.7M650.1 866.1l5.7 5.7m0 -5.7l-5.7 5.7M650.1 882.9l5.7 5.7m0 -5.7l-5.7 5.7M650.2 899.6l5.7 5.7m0 -5.7l-5.7 5.7M650.2 916.1l5.7 5.7m0 -5.7l-5.7 5.7M667.2 574.9l5.7 5.7m0 -5.7l-5.7 5.7M667.3 591.5l5.7 5.7m0 -5.7l-5.7 5.7M667.3 608.3l5.7 5.7m0 -5.7l-5.7 5.7M667.3 625.1l5.7 5.7m0 -5.7l-5.7 5.7M667.4 642.1l5.7 5.7m0 -5.7l-5.7 5.7M667.4 659.2l5.7 5.7m0 -5.7l-5.7 5.7M667.4 676.4l5.7 5.7m0 -5.7l-5.7 5.7M667.4 693.7l5.7 5.7m0 -5.7l-5.7 5.7M667.4 711l5.7 5.7m0 -5.7l-5.7 5.7M667.4 728.3l5.7 5.7m0 -5.7l-5.7 5.7M667.4 745.7l5.7 5.7m0 -5.7l-5.7 5.7M667.4 763l5.7 5.7m0 -5.7l-5.7 5.7M667.4 780.3l5.7 5.7m0 -5.7l-5.7 5.7M667.4 797.6l5.7 5.7m0 -5.7l-5.7 5.7M667.4 814.9l5.7 5.7m0 -5.7l-5.7 5.7M667.4 832l5.7 5.7m0 -5.7l-5.7 5.7M667.4 849.1l5.7 5.7m0 -5.7l-5.7 5.7M667.3 866.1l5.7 5.7m0 -5.7l-5.7 5.7M667.3 882.9l5.7 5.7m0 -5.7l-5.7 5.7M667.3 899.6l5.7 5.7m0 -5.7l-5.7 5.7M667.2 916.1l5.7 5.7m0 -5.7l-5.7 5.7M684.3 575l5.7 5.7m0 -5.7l-5.7 5.7M684.4 591.6l5.7 5.7m0 -5.7l-5.7 5.7M684.5 608.3l5.7 5.7m0 -5.7l-5.7 5.7M684.5 625.2l5.7 5.7m0 -5.7l-5.7 5.7M684.6 642.2l5.7 5.7m0 -5.7l-5.7 5.7M684.7 659.3l5.7 5.7m0 -5.7l-5.7 5.7M684.7 676.5l5.7 5.7m0 -5.7l-5.7 5.7M684.7 693.7l5.7 5.7m0 -5.7l-5.7 5.7M684.7 711l5.7 5.7m0 -5.7l-5.7 5.7M684.8 728.3l5.7 5.7m0 -5.7l-5.7 5.7M684.8 745.7l5.7 5.7m0 -5.7l-5.7 5.7M684.8 763l5.7 5.7m0 -5.7l-5.7 5.7M684.7 780.3l5.7 5.7m0 -5.7l-5.7 5.7M684.7 797.6l5.7 5.7m0 -5.7l-5.7 5.7M684.7 814.8l5.7 5.7m0 -5.7l-5.7 5.7M684.6 832l5.7 5.7m0 -5.7l-5.7 5.7M684.6 849l5.7 5.7m0 -5.7l-5.7 5.7M684.5 866l5.7 5.7m0 -5.7l-5.7 5.7M684.4 882.8l5.7 5.7m0 -5.7l-5.7 5.7M684.4 899.5l5.7 5.7m0 -5.7l-5.7 5.7M684.3 916.1l5.7 5.7m0 -5.7l-5.7 5.7M701.3 575.1l5.7 5.7m0 -5.7l-5.7 5.7M701.5 591.7l5.7 5.7m0 -5.7l-5.7 5.7M701.6 608.4l5.7 5.7m0 -5.7l-5.7 5.7M701.7 625.3l5.7 5.7m0 -5.7l-5.7 5.7M701.8 642.3l5.7 5.7m0 -5.7l-5.7 5.7M701.9 659.3l5.7 5.7m0 -5.7l-5.7 5.7M702 676.5l5.7 5.7m0 -5.7l-5.7 5.7M702 693.7l5.7 5.7m0 -5.7l-5.7 5.7M702 711l5.7 5.7m0 -5.7l-5.7 5.7M702.1 728.3l5.7 5.7m0 -5.7l-5.7 5.7M702.1 745.7l5.7 5.7m0 -5.7l-5.7 5.7M702.1 763l5.7 5.7m0 -5.7l-5.7 5.7M702 780.3l5.7 5.7m0 -5.7l-5.7 5.7M702 797.6l5.7 5.7m0 -5.7l-5.7 5.7M701.9 814.8l5.7 5.7m0 -5.7l-5.7 5.7M701.9 831.9l5.7 5.7m0 -5.7l-5.7 5.7M701.8 849l5.7 5.7m0 -5.7l-5.7 5.7M701.7 865.9l5.7 5.7m0 -5.7l-5.7 5.7M701.6 882.7l5.7 5.7m0 -5.7l-5.7 5.7M701.4 899.4l5.7 5.7m0 -5.7l-5.7 5.7M701.3 915.9l5.7 5.7m0 -5.7l-5.7 5.7M718.3 575.3l5.7 5.7m0 -5.7l-5.7 5.7M718.5 591.8l5.7 5.7m0 -5.7l-5.7 5.7M718.7 608.5l5.7 5.7m0 -5.7l-5.7 5.7M718.9 625.4l5.7 5.7m0 -5.7l-5.7 5.7M719 642.4l5.7 5.7m0 -5.7l-5.7 5.7M719.1 659.4l5.7 5.7m0 -5.7l-5.7 5.7M719.2 676.6l5.7 5.7m0 -5.7l-5.7 5.7M719.3 693.8l5.7 5.7m0 -5.7l-5.7 5.7M719.3 711.1l5.7 5.7m0 -5.7l-5.7 5.7M719.3 728.4l5.7 5.7m0 -5.7l-5.7 5.7M719.3 745.7l5.7 5.7m0 -5.7l-5.7 5.7M719.3 763l5.7 5.7m0 -5.7l-5.7 5.7M719.3 780.3l5.7 5.7m0 -5.7l-5.7 5.7M719.2 797.5l5.7 5.7m0 -5.7l-5.7 5.7M719.2 814.7l5.7 5.7m0 -5.7l-5.7 5.7M719.1 831.8l5.7 5.7m0 -5.7l-5.7 5.7M718.9 848.9l5.7 5.7m0 -5.7l-5.7 5.7M718.8 865.8l5.7 5.7m0 -5.7l-5.7 5.7M718.6 882.6l5.7 5.7m0 -5.7l-5.7 5.7M718.5 899.3l5.7 5.7m0 -5.7l-5.7 5.7M718.3 915.8l5.7 5.7m0 -5.7l-5.7 5.7M735.3 575.5l5.7 5.7m0 -5.7l-5.7 5.7M735.5 592l5.7 5.7m0 -5.7l-5.7 5.7M735.7 608.7l5.7 5.7m0 -5.7l-5.7 5.7M735.9 625.6l5.7 5.7m0 -5.7l-5.7 5.7M736.1 642.5l5.7 5.7m0 -5.7l-5.7 5.7M736.2 659.5l5.7 5.7m0 -5.7l-5.7 5.7M736.3 676.7l5.7 5.7m0 -5.7l-5.7 5.7M736.4 693.9l5.7 5.7m0 -5.7l-5.7 5.7M736.5 711.1l5.7 5.7m0 -5.7l-5.7 5.7M736.5 728.4l5.7 5.7m0 -5.7l-5.7 5.7M736.5 745.7l5.7 5.7m0 -5.7l-5.7 5.7M736.5 762.9l5.7 5.7m0 -5.7l-5.7 5.7M736.5 780.2l5.7 5.7m0 -5.7l-5.7 5.7M736.4 797.4l5.7 5.7m0 -5.7l-5.7 5.7M736.3 814.6l5.7 5.7m0 -5.7l-5.7 5.7M736.2 831.7l5.7 5.7m0 -5.7l-5.7 5.7M736 848.7l5.7 5.7m0 -5.7l-5.7 5.7M735.9 865.6l5.7 5.7m0 -5.7l-5.7 5.7M735.7 882.4l5.7 5.7m0 -5.7l-5.7 5.7M735.4 899l5.7 5.7m0 -5.7l-5.7 5.7M735.2 915.5l5.7 5.7m0 -5.7l-5.7 5.7M752.1 575.8l5.7 5.7m0 -5.7l-5.7 5.7M752.4 592.3l5.7 5.7m0 -5.7l-5.7 5.7M752.7 609l5.7 5.7m0 -5.7l-5.7 5.7M752.9 625.8l5.7 5.7m0 -5.7l-5.7 5.7M753.1 642.7l5.7 5.7m0 -5.7l-5.7 5.7M753.3 659.7l5.7 5.7m0 -5.7l-5.7 5.7M753.4 676.8l5.7 5.7m0 -5.7l-5.7 5.7M753.5 693.9l5.7 5.7m0 -5.7l-5.7 5.7M753.6 711.2l5.7 5.7m0 -5.7l-5.7 5.7M753.7 728.4l5.7 5.7m0 -5.7l-5.7 5.7M753.7 745.7l5.7 5.7m0 -5.7l-5.7 5.7M753.6 762.9l5.7 5.7m0 -5.7l-5.7 5.7M753.6 780.1l5.7 5.7m0 -5.7l-5.7 5.7M753.5 797.3l5.7 5.7m0 -5.7l-5.7 5.7M753.4 814.5l5.7 5.7m0 -5.7l-5.7 5.7M753.2 831.6l5.7 5.7m0 -5.7l-5.7 5.7M753 848.5l5.7 5.7m0 -5.7l-5.7 5.7M752.8 865.4l5.7 5.7m0 -5.7l-5.7 5.7M752.6 882.2l5.7 5.7m0 -5.7l-5.7 5.7M752.3 898.8l5.7 5.7m0 -5.7l-5.7 5.7M752 915.2l5.7 5.7m0 -5.7l-5.7 5.7M768.9 576.1l5.7 5.7m0 -5.7l-5.7 5.7M769.2 592.6l5.7 5.7m0 -5.7l-5.7 5.7M769.5 609.2l5.7 5.7m0 -5.7l-5.7 5.7M769.8 626l5.7 5.7m0 -5.7l-5.7 5.7M770 642.9l5.7 5.7m0 -5.7l-5.7 5.7M770.2 659.9l5.7 5.7m0 -5.7l-5.7 5.7M770.4 676.9l5.7 5.7m0 -5.7l-5.7 5.7M770.5 694l5.7 5.7m0 -5.7l-5.7 5.7M770.6 711.2l5.7 5.7m0 -5.7l-5.7 5.7M770.7 728.4l5.7 5.7m0 -5.7l-5.7 5.7M770.7 745.6l5.7 5.7m0 -5.7l-5.7 5.7M770.7 762.9l5.7 5.7m0 -5.7l-5.7 5.7M770.6 780.1l5.7 5.7m0 -5.7l-5.7 5.7M770.5 797.2l5.7 5.7m0 -5.7l-5.7 5.7M770.4 814.3l5.7 5.7m0 -5.7l-5.7 5.7M770.2 831.4l5.7 5.7m0 -5.7l-5.7 5.7M770 848.3l5.7 5.7m0 -5.7l-5.7 5.7M769.7 865.2l5.7 5.7m0 -5.7l-5.7 5.7M769.4 881.9l5.7 5.7m0 -5.7l-5.7 5.7M769.1 898.4l5.7 5.7m0 -5.7l-5.7 5.7M768.7 914.9l5.7 5.7m0 -5.7l-5.7 5.7M785.5 576.5l5.7 5.7m0 -5.7l-5.7 5.7M785.9 593l5.7 5.7m0 -5.7l-5.7 5.7M786.3 609.6l5.7 5.7m0 -5.7l-5.7 5.7M786.6 626.3l5.7 5.7m0 -5.7l-5.7 5.7M786.9 643.1l5.7 5.7m0 -5.7l-5.7 5.7M787.1 660l5.7 5.7m0 -5.7l-5.7 5.7M787.3 677.1l5.7 5.7m0 -5.7l-5.7 5.7M787.4 694.2l5.7 5.7m0 -5.7l-5.7 5.7M787.5 711.3l5.7 5.7m0 -5.7l-5.7 5.7M787.6 728.5l5.7 5.7m0 -5.7l-5.7 5.7M787.6 745.6l5.7 5.7m0 -5.7l-5.7 5.7M787.6 762.8l5.7 5.7m0 -5.7l-5.7 5.7M787.5 780l5.7 5.7m0 -5.7l-5.7 5.7M787.4 797.1l5.7 5.7m0 -5.7l-5.7 5.7M787.2 814.2l5.7 5.7m0 -5.7l-5.7 5.7M787 831.2l5.7 5.7m0 -5.7l-5.7 5.7M786.8 848.1l5.7 5.7m0 -5.7l-5.7 5.7M786.5 864.9l5.7 5.7m0 -5.7l-5.7 5.7M786.1 881.5l5.7 5.7m0 -5.7l-5.7 5.7M785.8 898.1l5.7 5.7m0 -5.7l-5.7 5.7M785.3 914.5l5.7 5.7m0 -5.7l-5.7 5.7M802 577l5.7 5.7m0 -5.7l-5.7 5.7M802.5 593.4l5.7 5.7m0 -5.7l-5.7 5.7M802.9 609.9l5.7 5.7m0 -5.7l-5.7 5.7M803.2 626.6l5.7 5.7m0 -5.7l-5.7 5.7M803.5 643.4l5.7 5.7m0 -5.7l-5.7 5.7M803.8 660.3l5.7 5.7m0 -5.7l-5.7 5.7M804 677.2l5.7 5.7m0 -5.7l-5.7 5.7M804.2 694.3l5.7 5.7m0 -5.7l-5.7 5.7M804.3 711.4l5.7 5.7m0 -5.7l-5.7 5.7M804.4 728.5l5.7 5.7m0 -5.7l-5.7 5.7M804.4 745.6l5.7 5.7m0 -5.7l-5.7 5.7M804.3 762.8l5.7 5.7m0 -5.7l-5.7 5.7M804.3 779.9l5.7 5.7m0 -5.7l-5.7 5.7M804.1 797l5.7 5.7m0 -5.7l-5.7 5.7M804 814l5.7 5.7m0 -5.7l-5.7 5.7M803.7 830.9l5.7 5.7m0 -5.7l-5.7 5.7M803.4 847.8l5.7 5.7m0 -5.7l-5.7 5.7M803.1 864.5l5.7 5.7m0 -5.7l-5.7 5.7M802.7 881.2l5.7 5.7m0 -5.7l-5.7 5.7M802.3 897.6l5.7 5.7m0 -5.7l-5.7 5.7M801.8 914l5.7 5.7m0 -5.7l-5.7 5.7M818.3 577.5l5.7 5.7m0 -5.7l-5.7 5.7M818.9 593.8l5.7 5.7m0 -5.7l-5.7 5.7M819.3 610.3l5.7 5.7m0 -5.7l-5.7 5.7M819.7 627l5.7 5.7m0 -5.7l-5.7 5.7M820.1 643.7l5.7 5.7m0 -5.7l-5.7 5.7M820.4 660.5l5.7 5.7m0 -5.7l-5.7 5.7M820.6 677.4l5.7 5.7m0 -5.7l-5.7 5.7M820.8 694.4l5.7 5.7m0 -5.7l-5.7 5.7M820.9 711.5l5.7 5.7m0 -5.7l-5.7 5.7M821 728.5l5.7 5.7m0 -5.7l-5.7 5.7M821 745.6l5.7 5.7m0 -5.7l-5.7 5.7M821 762.7l5.7 5.7m0 -5.7l-5.7 5.7M820.9 779.8l5.7 5.7m0 -5.7l-5.7 5.7M820.7 796.8l5.7 5.7m0 -5.7l-5.7 5.7M820.5 813.8l5.7 5.7m0 -5.7l-5.7 5.7M820.3 830.6l5.7 5.7m0 -5.7l-5.7 5.7M820 847.5l5.7 5.7m0 -5.7l-5.7 5.7M819.6 864.2l5.7 5.7m0 -5.7l-5.7 5.7M819.2 880.7l5.7 5.7m0 -5.7l-5.7 5.7M818.7 897.2l5.7 5.7m0 -5.7l-5.7 5.7M818.2 913.4l5.7 5.7m0 -5.7l-5.7 5.7M834.5 578.1l5.7 5.7m0 -5.7l-5.7 5.7M835.1 594.4l5.7 5.7m0 -5.7l-5.7 5.7M835.6 610.8l5.7 5.7m0 -5.7l-5.7 5.7M836.1 627.3l5.7 5.7m0 -5.7l-5.7 5.7M836.4 644l5.7 5.7m0 -5.7l-5.7 5.7M836.8 660.8l5.7 5.7m0 -5.7l-5.7 5.7M837 677.7l5.7 5.7m0 -5.7l-5.7 5.7M837.2 694.6l5.7 5.7m0 -5.7l-5.7 5.7M837.4 711.6l5.7 5.7m0 -5.7l-5.7 5.7M837.5 728.6l5.7 5.7m0 -5.7l-5.7 5.7M837.5 745.6l5.7 5.7m0 -5.7l-5.7 5.7M837.4 762.6l5.7 5.7m0 -5.7l-5.7 5.7M837.3 779.6l5.7 5.7m0 -5.7l-5.7 5.7M837.2 796.6l5.7 5.7m0 -5.7l-5.7 5.7M837 813.5l5.7 5.7m0 -5.7l-5.7 5.7M836.7 830.3l5.7 5.7m0 -5.7l-5.7 5.7M836.3 847.1l5.7 5.7m0 -5.7l-5.7 5.7M835.9 863.7l5.7 5.7m0 -5.7l-5.7 5.7M835.4 880.3l5.7 5.7m0 -5.7l-5.7 5.7M834.9 896.6l5.7 5.7m0 -5.7l-5.7 5.7M834.3 912.9l5.7 5.7m0 -5.7l-5.7 5.7M850.5 578.7l5.7 5.7m0 -5.7l-5.7 5.7M851.2 594.9l5.7 5.7m0 -5.7l-5.7 5.7M851.7 611.3l5.7 5.7m0 -5.7l-5.7 5.7M852.2 627.8l5.7 5.7m0 -5.7l-5.7 5.7M852.6 644.4l5.7 5.7m0 -5.7l-5.7 5.7M853 661.1l5.7 5.7m0 -5.7l-5.7 5.7M853.3 677.9l5.7 5.7m0 -5.7l-5.7 5.7M853.5 694.8l5.7 5.7m0 -5.7l-5.7 5.7M853.7 711.7l5.7 5.7m0 -5.7l-5.7 5.7M853.7 728.6l5.7 5.7m0 -5.7l-5.7 5.7M853.8 745.6l5.7 5.7m0 -5.7l-5.7 5.7M853.7 762.6l5.7 5.7m0 -5.7l-5.7 5.7M853.6 779.5l5.7 5.7m0 -5.7l-5.7 5.7M853.4 796.4l5.7 5.7m0 -5.7l-5.7 5.7M853.2 813.2l5.7 5.7m0 -5.7l-5.7 5.7M852.9 830l5.7 5.7m0 -5.7l-5.7 5.7M852.5 846.7l5.7 5.7m0 -5.7l-5.7 5.7M852 863.3l5.7 5.7m0 -5.7l-5.7 5.7M851.5 879.7l5.7 5.7m0 -5.7l-5.7 5.7M851 896l5.7 5.7m0 -5.7l-5.7 5.7M850.3 912.2l5.7 5.7m0 -5.7l-5.7 5.7" stroke="#ff1010" stroke-width="1.3" stroke-dasharray="2.8 2.4 2.8" fill="none"/><path d="M465.6 581.4h7.6M469.4 577.6v7.6M465 597.6h7.6M468.8 593.8v7.6M464.5 614h7.6M468.3 610.2v7.6M464 630.5h7.6M467.8 626.7v7.6M463.6 647.1h7.6M467.4 643.3v7.6M463.2 663.9h7.6M467 660.1v7.6M463 680.7h7.6M466.8 676.9v7.6M462.7 697.6h7.6M466.5 693.8v7.6M462.6 714.5h7.6M466.4 710.7v7.6M462.5 731.5h7.6M466.3 727.7v7.6M462.5 748.4h7.6M466.3 744.6v7.6M462.5 765.4h7.6M466.3 761.6v7.6M462.6 782.4h7.6M466.4 778.6v7.6M462.8 799.3h7.6M466.6 795.5v7.6M463.1 816.1h7.6M466.9 812.3v7.6M463.4 832.9h7.6M467.2 829.1v7.6M463.7 849.6h7.6M467.5 845.8v7.6M464.2 866.2h7.6M468 862.4v7.6M464.7 882.7h7.6M468.5 878.9v7.6M465.2 899h7.6M469 895.2v7.6M465.9 915.2h7.6M469.7 911.4v7.6M481.7 580.8h7.6M485.5 577v7.6M481.1 597.1h7.6M484.9 593.3v7.6M480.6 613.5h7.6M484.4 609.7v7.6M480.2 630.1h7.6M484 626.3v7.6M479.8 646.8h7.6M483.6 643v7.6M479.5 663.6h7.6M483.3 659.8v7.6M479.2 680.4h7.6M483 676.6v7.6M479.1 697.4h7.6M482.9 693.6v7.6M478.9 714.4h7.6M482.7 710.6v7.6M478.8 731.4h7.6M482.6 727.6v7.6M478.8 748.4h7.6M482.6 744.6v7.6M478.9 765.5h7.6M482.7 761.7v7.6M479 782.5h7.6M482.8 778.7v7.6M479.1 799.5h7.6M482.9 795.7v7.6M479.3 816.4h7.6M483.1 812.6v7.6M479.6 833.3h7.6M483.4 829.5v7.6M479.9 850h7.6M483.7 846.2v7.6M480.3 866.7h7.6M484.1 862.9v7.6M480.8 883.2h7.6M484.6 879.4v7.6M481.3 899.6h7.6M485.1 895.8v7.6M481.9 915.8h7.6M485.7 912v7.6M497.9 580.2h7.6M501.7 576.4v7.6M497.4 596.6h7.6M501.2 592.8v7.6M497 613.1h7.6M500.8 609.3v7.6M496.6 629.7h7.6M500.4 625.9v7.6M496.2 646.4h7.6M500 642.6v7.6M495.9 663.3h7.6M499.7 659.5v7.6M495.7 680.2h7.6M499.5 676.4v7.6M495.5 697.2h7.6M499.3 693.4v7.6M495.4 714.3h7.6M499.2 710.5v7.6M495.3 731.4h7.6M499.1 727.6v7.6M495.3 748.5h7.6M499.1 744.7v7.6M495.4 765.5h7.6M499.2 761.7v7.6M495.4 782.6h7.6M499.2 778.8v7.6M495.6 799.7h7.6M499.4 795.9v7.6M495.8 816.6h7.6M499.6 812.8v7.6M496 833.5h7.6M499.8 829.7v7.6M496.3 850.4h7.6M500.1 846.6v7.6M496.7 867.1h7.6M500.5 863.3v7.6M497.1 883.7h7.6M500.9 879.9v7.6M497.6 900.1h7.6M501.4 896.3v7.6M498.1 916.4h7.6M501.9 912.6v7.6M514.3 579.7h7.6M518.1 575.9v7.6M513.9 596.1h7.6M517.7 592.3v7.6M513.5 612.7h7.6M517.3 608.9v7.6M513.1 629.3h7.6M516.9 625.5v7.6M512.8 646.1h7.6M516.6 642.3v7.6M512.6 663h7.6M516.4 659.2v7.6M512.3 680h7.6M516.1 676.2v7.6M512.2 697.1h7.6M516 693.3v7.6M512.1 714.2h7.6M515.9 710.4v7.6M512 731.3h7.6M515.8 727.5v7.6M512 748.5h7.6M515.8 744.7v7.6M512 765.6h7.6M515.8 761.8v7.6M512.1 782.7h7.6M515.9 778.9v7.6M512.2 799.8h7.6M516 796v7.6M512.4 816.8h7.6M516.2 813v7.6M512.6 833.8h7.6M516.4 830v7.6M512.9 850.7h7.6M516.7 846.9v7.6M513.2 867.4h7.6M517 863.6v7.6M513.6 884.1h7.6M517.4 880.3v7.6M514 900.6h7.6M517.8 896.8v7.6M514.5 916.9h7.6M518.3 913.1v7.6M530.9 579.3h7.6M534.7 575.5v7.6M530.5 595.7h7.6M534.3 591.9v7.6M530.1 612.3h7.6M533.9 608.5v7.6M529.8 629h7.6M533.6 625.2v7.6M529.5 645.9h7.6M533.3 642.1v7.6M529.3 662.8h7.6M533.1 659v7.6M529.1 679.9h7.6M532.9 676.1v7.6M529 697h7.6M532.8 693.2v7.6M528.9 714.1h7.6M532.7 710.3v7.6M528.8 731.3h7.6M532.6 727.5v7.6M528.8 748.5h7.6M532.6 744.7v7.6M528.8 765.7h7.6M532.6 761.9v7.6M528.9 782.8h7.6M532.7 779v7.6M529 800h7.6M532.8 796.2v7.6M529.2 817h7.6M533 813.2v7.6M529.4 834h7.6M533.2 830.2v7.6M529.6 851h7.6M533.4 847.2v7.6M529.9 867.8h7.6M533.7 864v7.6M530.2 884.5h7.6M534 880.7v7.6M530.6 901h7.6M534.4 897.2v7.6M531 917.4h7.6M534.8 913.6v7.6M547.5 578.9h7.6M551.3 575.1v7.6M547.2 595.4h7.6M551 591.6v7.6M546.9 612h7.6M550.7 608.2v7.6M546.6 628.8h7.6M550.4 625v7.6M546.4 645.6h7.6M550.2 641.8v7.6M546.2 662.6h7.6M550 658.8v7.6M546 679.7h7.6M549.8 675.9v7.6M545.9 696.8h7.6M549.7 693v7.6M545.8 714h7.6M549.6 710.2v7.6M545.8 731.2h7.6M549.6 727.4v7.6M545.7 748.5h7.6M549.5 744.7v7.6M545.8 765.7h7.6M549.6 761.9v7.6M545.8 782.9h7.6M549.6 779.1v7.6M545.9 800.1h7.6M549.7 796.3v7.6M546.1 817.2h7.6M549.9 813.4v7.6M546.2 834.2h7.6M550 830.4v7.6M546.4 851.2h7.6M550.2 847.4v7.6M546.7 868.1h7.6M550.5 864.3v7.6M547 884.8h7.6M550.8 881v7.6M547.3 901.4h7.6M551.1 897.6v7.6M547.6 917.8h7.6M551.4 914v7.6M564.3 578.5h7.6M568.1 574.7v7.6M564 595.1h7.6M567.8 591.3v7.6M563.7 611.7h7.6M567.5 607.9v7.6M563.5 628.5h7.6M567.3 624.7v7.6M563.3 645.5h7.6M567.1 641.7v7.6M563.2 662.5h7.6M567 658.7v7.6M563 679.6h7.6M566.8 675.8v7.6M562.9 696.7h7.6M566.7 692.9v7.6M562.8 714h7.6M566.6 710.2v7.6M562.8 731.2h7.6M566.6 727.4v7.6M562.8 748.5h7.6M566.6 744.7v7.6M562.8 765.7h7.6M566.6 761.9v7.6M562.9 783h7.6M566.7 779.2v7.6M563 800.2h7.6M566.8 796.4v7.6M563.1 817.3h7.6M566.9 813.5v7.6M563.2 834.4h7.6M567 830.6v7.6M563.4 851.4h7.6M567.2 847.6v7.6M563.6 868.3h7.6M567.4 864.5v7.6M563.8 885.1h7.6M567.6 881.3v7.6M564.1 901.7h7.6M567.9 897.9v7.6M564.4 918.1h7.6M568.2 914.3v7.6M581.2 578.3h7.6M585 574.5v7.6M580.9 594.8h7.6M584.7 591v7.6M580.7 611.5h7.6M584.5 607.7v7.6M580.5 628.3h7.6M584.3 624.5v7.6M580.4 645.3h7.6M584.2 641.5v7.6M580.2 662.3h7.6M584 658.5v7.6M580.1 679.5h7.6M583.9 675.7v7.6M580 696.7h7.6M583.8 692.9v7.6M580 713.9h7.6M583.8 710.1v7.6M580 731.2h7.6M583.8 727.4v7.6M579.9 748.5h7.6M583.7 744.7v7.6M580 765.8h7.6M583.8 762v7.6M580 783.1h7.6M583.8 779.3v7.6M580.1 800.3h7.6M583.9 796.5v7.6M580.2 817.5h7.6M584 813.7v7.6M580.3 834.6h7.6M584.1 830.8v7.6M580.4 851.6h7.6M584.2 847.8v7.6M580.6 868.5h7.6M584.4 864.7v7.6M580.8 885.3h7.6M584.6 881.5v7.6M581 901.9h7.6M584.8 898.1v7.6M581.2 918.4h7.6M585 914.6v7.6M598.1 578h7.6M601.9 574.2v7.6M597.9 594.6h7.6M601.7 590.8v7.6M597.8 611.3h7.6M601.6 607.5v7.6M597.6 628.2h7.6M601.4 624.4v7.6M597.5 645.2h7.6M601.3 641.4v7.6M597.4 662.2h7.6M601.2 658.4v7.6M597.3 679.4h7.6M601.1 675.6v7.6M597.2 696.6h7.6M601 692.8v7.6M597.2 713.9h7.6M601 710.1v7.6M597.2 731.2h7.6M601 727.4v7.6M597.2 748.5h7.6M601 744.7v7.6M597.2 765.8h7.6M601 762v7.6M597.2 783.1h7.6M601 779.3v7.6M597.3 800.4h7.6M601.1 796.6v7.6M597.3 817.6h7.6M601.1 813.8v7.6M597.4 834.7h7.6M601.2 830.9v7.6M597.5 851.7h7.6M601.3 847.9v7.6M597.7 868.7h7.6M601.5 864.9v7.6M597.8 885.5h7.6M601.6 881.7v7.6M598 902.1h7.6M601.8 898.3v7.6M598.2 918.6h7.6M602 914.8v7.6M615.1 577.9h7.6M618.9 574.1v7.6M615 594.5h7.6M618.8 590.7v7.6M614.9 611.2h7.6M618.7 607.4v7.6M614.8 628.1h7.6M618.6 624.3v7.6M614.7 645.1h7.6M618.5 641.3v7.6M614.6 662.2h7.6M618.4 658.4v7.6M614.5 679.3h7.6M618.3 675.5v7.6M614.5 696.6h7.6M618.3 692.8v7.6M614.5 713.8h7.6M618.3 710v7.6M614.4 731.2h7.6M618.2 727.4v7.6M614.4 748.5h7.6M618.2 744.7v7.6M614.4 765.8h7.6M618.2 762v7.6M614.5 783.1h7.6M618.3 779.3v7.6M614.5 800.4h7.6M618.3 796.6v7.6M614.6 817.6h7.6M618.4 813.8v7.6M614.6 834.8h7.6M618.4 831v7.6M614.7 851.8h7.6M618.5 848v7.6M614.8 868.8h7.6M618.6 865v7.6M614.9 885.6h7.6M618.7 881.8v7.6M615 902.3h7.6M618.8 898.5v7.6M615.1 918.8h7.6M618.9 915v7.6M632.1 577.8h7.6M635.9 574v7.6M632.1 594.4h7.6M635.9 590.6v7.6M632 611.1h7.6M635.8 607.3v7.6M631.9 628h7.6M635.7 624.2v7.6M631.9 645h7.6M635.7 641.2v7.6M631.8 662.1h7.6M635.6 658.3v7.6M631.8 679.3h7.6M635.6 675.5v7.6M631.8 696.5h7.6M635.6 692.7v7.6M631.8 713.8h7.6M635.6 710v7.6M631.8 731.2h7.6M635.6 727.4v7.6M631.8 748.5h7.6M635.6 744.7v7.6M631.8 765.8h7.6M635.6 762v7.6M631.8 783.2h7.6M635.6 779.4v7.6M631.8 800.4h7.6M635.6 796.6v7.6M631.8 817.7h7.6M635.6 813.9v7.6M631.9 834.8h7.6M635.7 831v7.6M631.9 851.9h7.6M635.7 848.1v7.6M632 868.9h7.6M635.8 865.1v7.6M632 885.7h7.6M635.8 881.9v7.6M632.1 902.4h7.6M635.9 898.6v7.6M632.2 918.9h7.6M636 915.1v7.6M649.2 577.7h7.6M653 573.9v7.6M649.2 594.3h7.6M653 590.5v7.6M649.2 611.1h7.6M653 607.3v7.6M649.2 628h7.6M653 624.2v7.6M649.1 645h7.6M652.9 641.2v7.6M649.1 662.1h7.6M652.9 658.3v7.6M649.1 679.3h7.6M652.9 675.5v7.6M649.1 696.5h7.6M652.9 692.7v7.6M649.1 713.8h7.6M652.9 710v7.6M649.1 731.2h7.6M652.9 727.4v7.6M649.1 748.5h7.6M652.9 744.7v7.6M649.1 765.8h7.6M652.9 762v7.6M649.1 783.2h7.6M652.9 779.4v7.6M649.1 800.5h7.6M652.9 796.7v7.6M649.1 817.7h7.6M652.9 813.9v7.6M649.1 834.9h7.6M652.9 831.1v7.6M649.1 851.9h7.6M652.9 848.1v7.6M649.2 868.9h7.6M653 865.1v7.6M649.2 885.7h7.6M653 881.9v7.6M649.2 902.4h7.6M653 898.6v7.6M649.2 919h7.6M653 915.2v7.6M666.3 577.7h7.6M670.1 573.9v7.6M666.3 594.3h7.6M670.1 590.5v7.6M666.3 611.1h7.6M670.1 607.3v7.6M666.4 628h7.6M670.2 624.2v7.6M666.4 645h7.6M670.2 641.2v7.6M666.4 662.1h7.6M670.2 658.3v7.6M666.4 679.3h7.6M670.2 675.5v7.6M666.4 696.5h7.6M670.2 692.7v7.6M666.4 713.8h7.6M670.2 710v7.6M666.4 731.2h7.6M670.2 727.4v7.6M666.4 748.5h7.6M670.2 744.7v7.6M666.4 765.8h7.6M670.2 762v7.6M666.4 783.2h7.6M670.2 779.4v7.6M666.4 800.5h7.6M670.2 796.7v7.6M666.4 817.7h7.6M670.2 813.9v7.6M666.4 834.8h7.6M670.2 831v7.6M666.4 851.9h7.6M670.2 848.1v7.6M666.4 868.9h7.6M670.2 865.1v7.6M666.3 885.7h7.6M670.1 881.9v7.6M666.3 902.4h7.6M670.1 898.6v7.6M666.3 919h7.6M670.1 915.2v7.6M683.3 577.8h7.6M687.1 574v7.6M683.4 594.4h7.6M687.2 590.6v7.6M683.5 611.1h7.6M687.3 607.3v7.6M683.6 628h7.6M687.4 624.2v7.6M683.6 645h7.6M687.4 641.2v7.6M683.7 662.1h7.6M687.5 658.3v7.6M683.7 679.3h7.6M687.5 675.5v7.6M683.8 696.5h7.6M687.6 692.7v7.6M683.8 713.8h7.6M687.6 710v7.6M683.8 731.2h7.6M687.6 727.4v7.6M683.8 748.5h7.6M687.6 744.7v7.6M683.8 765.8h7.6M687.6 762v7.6M683.8 783.2h7.6M687.6 779.4v7.6M683.7 800.4h7.6M687.5 796.6v7.6M683.7 817.7h7.6M687.5 813.9v7.6M683.7 834.8h7.6M687.5 831v7.6M683.6 851.9h7.6M687.4 848.1v7.6M683.5 868.8h7.6M687.3 865v7.6M683.5 885.7h7.6M687.3 881.9v7.6M683.4 902.4h7.6M687.2 898.6v7.6M683.3 918.9h7.6M687.1 915.1v7.6M700.4 577.9h7.6M704.2 574.1v7.6M700.5 594.5h7.6M704.3 590.7v7.6M700.6 611.2h7.6M704.4 607.4v7.6M700.7 628.1h7.6M704.5 624.3v7.6M700.8 645.1h7.6M704.6 641.3v7.6M700.9 662.2h7.6M704.7 658.4v7.6M701 679.3h7.6M704.8 675.5v7.6M701 696.6h7.6M704.8 692.8v7.6M701.1 713.9h7.6M704.9 710.1v7.6M701.1 731.2h7.6M704.9 727.4v7.6M701.1 748.5h7.6M704.9 744.7v7.6M701.1 765.8h7.6M704.9 762v7.6M701.1 783.1h7.6M704.9 779.3v7.6M701 800.4h7.6M704.8 796.6v7.6M701 817.6h7.6M704.8 813.8v7.6M700.9 834.8h7.6M704.7 831v7.6M700.8 851.8h7.6M704.6 848v7.6M700.7 868.7h7.6M704.5 864.9v7.6M700.6 885.6h7.6M704.4 881.8v7.6M700.5 902.3h7.6M704.3 898.5v7.6M700.3 918.8h7.6M704.1 915v7.6M717.4 578.1h7.6M721.2 574.3v7.6M717.6 594.7h7.6M721.4 590.9v7.6M717.7 611.4h7.6M721.5 607.6v7.6M717.9 628.2h7.6M721.7 624.4v7.6M718 645.2h7.6M721.8 641.4v7.6M718.1 662.3h7.6M721.9 658.5v7.6M718.2 679.4h7.6M722 675.6v7.6M718.3 696.6h7.6M722.1 692.8v7.6M718.3 713.9h7.6M722.1 710.1v7.6M718.4 731.2h7.6M722.2 727.4v7.6M718.4 748.5h7.6M722.2 744.7v7.6M718.3 765.8h7.6M722.1 762v7.6M718.3 783.1h7.6M722.1 779.3v7.6M718.3 800.3h7.6M722.1 796.5v7.6M718.2 817.5h7.6M722 813.7v7.6M718.1 834.7h7.6M721.9 830.9v7.6M718 851.7h7.6M721.8 847.9v7.6M717.8 868.6h7.6M721.6 864.8v7.6M717.7 885.4h7.6M721.5 881.6v7.6M717.5 902.1h7.6M721.3 898.3v7.6M717.3 918.6h7.6M721.1 914.8v7.6M734.3 578.3h7.6M738.1 574.5v7.6M734.5 594.9h7.6M738.3 591.1v7.6M734.8 611.6h7.6M738.6 607.8v7.6M734.9 628.4h7.6M738.7 624.6v7.6M735.1 645.3h7.6M738.9 641.5v7.6M735.3 662.4h7.6M739.1 658.6v7.6M735.4 679.5h7.6M739.2 675.7v7.6M735.5 696.7h7.6M739.3 692.9v7.6M735.5 713.9h7.6M739.3 710.1v7.6M735.6 731.2h7.6M739.4 727.4v7.6M735.6 748.5h7.6M739.4 744.7v7.6M735.5 765.8h7.6M739.3 762v7.6M735.5 783h7.6M739.3 779.2v7.6M735.4 800.3h7.6M739.2 796.5v7.6M735.3 817.4h7.6M739.1 813.6v7.6M735.2 834.5h7.6M739 830.7v7.6M735.1 851.5h7.6M738.9 847.7v7.6M734.9 868.5h7.6M738.7 864.7v7.6M734.7 885.2h7.6M738.5 881.4v7.6M734.5 901.9h7.6M738.3 898.1v7.6M734.2 918.4h7.6M738 914.6v7.6M751.1 578.6h7.6M754.9 574.8v7.6M751.4 595.1h7.6M755.2 591.3v7.6M751.7 611.8h7.6M755.5 608v7.6M751.9 628.6h7.6M755.7 624.8v7.6M752.1 645.5h7.6M755.9 641.7v7.6M752.3 662.5h7.6M756.1 658.7v7.6M752.5 679.6h7.6M756.3 675.8v7.6M752.6 696.8h7.6M756.4 693v7.6M752.6 714h7.6M756.4 710.2v7.6M752.7 731.2h7.6M756.5 727.4v7.6M752.7 748.5h7.6M756.5 744.7v7.6M752.7 765.7h7.6M756.5 761.9v7.6M752.6 783h7.6M756.4 779.2v7.6M752.5 800.2h7.6M756.3 796.4v7.6M752.4 817.3h7.6M756.2 813.5v7.6M752.3 834.4h7.6M756.1 830.6v7.6M752.1 851.4h7.6M755.9 847.6v7.6M751.9 868.2h7.6M755.7 864.4v7.6M751.6 885h7.6M755.4 881.2v7.6M751.3 901.6h7.6M755.1 897.8v7.6M751 918.1h7.6M754.8 914.3v7.6M767.9 579h7.6M771.7 575.2v7.6M768.2 595.4h7.6M772 591.6v7.6M768.6 612.1h7.6M772.4 608.3v7.6M768.8 628.8h7.6M772.6 625v7.6M769.1 645.7h7.6M772.9 641.9v7.6M769.3 662.7h7.6M773.1 658.9v7.6M769.4 679.7h7.6M773.2 675.9v7.6M769.6 696.9h7.6M773.4 693.1v7.6M769.7 714h7.6M773.5 710.2v7.6M769.7 731.3h7.6M773.5 727.5v7.6M769.7 748.5h7.6M773.5 744.7v7.6M769.7 765.7h7.6M773.5 761.9v7.6M769.6 782.9h7.6M773.4 779.1v7.6M769.5 800.1h7.6M773.3 796.3v7.6M769.4 817.2h7.6M773.2 813.4v7.6M769.2 834.2h7.6M773 830.4v7.6M769 851.1h7.6M772.8 847.3v7.6M768.7 868h7.6M772.5 864.2v7.6M768.4 884.7h7.6M772.2 880.9v7.6M768.1 901.3h7.6M771.9 897.5v7.6M767.7 917.7h7.6M771.5 913.9v7.6M784.5 579.4h7.6M788.3 575.6v7.6M784.9 595.8h7.6M788.7 592v7.6M785.3 612.4h7.6M789.1 608.6v7.6M785.6 629.1h7.6M789.4 625.3v7.6M785.9 645.9h7.6M789.7 642.1v7.6M786.1 662.9h7.6M789.9 659.1v7.6M786.3 679.9h7.6M790.1 676.1v7.6M786.5 697h7.6M790.3 693.2v7.6M786.6 714.1h7.6M790.4 710.3v7.6M786.6 731.3h7.6M790.4 727.5v7.6M786.6 748.5h7.6M790.4 744.7v7.6M786.6 765.6h7.6M790.4 761.8v7.6M786.5 782.8h7.6M790.3 779v7.6M786.4 799.9h7.6M790.2 796.1v7.6M786.2 817h7.6M790 813.2v7.6M786 834h7.6M789.8 830.2v7.6M785.8 850.9h7.6M789.6 847.1v7.6M785.5 867.7h7.6M789.3 863.9v7.6M785.2 884.4h7.6M789 880.6v7.6M784.8 900.9h7.6M788.6 897.1v7.6M784.4 917.3h7.6M788.2 913.5v7.6M801 579.8h7.6M804.8 576v7.6M801.5 596.2h7.6M805.3 592.4v7.6M801.9 612.7h7.6M805.7 608.9v7.6M802.3 629.4h7.6M806.1 625.6v7.6M802.6 646.2h7.6M806.4 642.4v7.6M802.8 663.1h7.6M806.6 659.3v7.6M803 680.1h7.6M806.8 676.3v7.6M803.2 697.1h7.6M807 693.3v7.6M803.3 714.2h7.6M807.1 710.4v7.6M803.4 731.3h7.6M807.2 727.5v7.6M803.4 748.5h7.6M807.2 744.7v7.6M803.4 765.6h7.6M807.2 761.8v7.6M803.3 782.7h7.6M807.1 778.9v7.6M803.2 799.8h7.6M807 796v7.6M803 816.8h7.6M806.8 813v7.6M802.7 833.7h7.6M806.5 829.9v7.6M802.5 850.6h7.6M806.3 846.8v7.6M802.1 867.4h7.6M805.9 863.6v7.6M801.8 884h7.6M805.6 880.2v7.6M801.3 900.5h7.6M805.1 896.7v7.6M800.8 916.8h7.6M804.6 913v7.6M817.4 580.3h7.6M821.2 576.5v7.6M817.9 596.7h7.6M821.7 592.9v7.6M818.4 613.2h7.6M822.2 609.4v7.6M818.8 629.8h7.6M822.6 626v7.6M819.1 646.5h7.6M822.9 642.7v7.6M819.4 663.4h7.6M823.2 659.6v7.6M819.6 680.3h7.6M823.4 676.5v7.6M819.8 697.3h7.6M823.6 693.5v7.6M820 714.3h7.6M823.8 710.5v7.6M820 731.4h7.6M823.8 727.6v7.6M820 748.5h7.6M823.8 744.7v7.6M820 765.5h7.6M823.8 761.7v7.6M819.9 782.6h7.6M823.7 778.8v7.6M819.8 799.6h7.6M823.6 795.8v7.6M819.6 816.6h7.6M823.4 812.8v7.6M819.3 833.5h7.6M823.1 829.7v7.6M819 850.3h7.6M822.8 846.5v7.6M818.6 867h7.6M822.4 863.2v7.6M818.2 883.6h7.6M822 879.8v7.6M817.7 900h7.6M821.5 896.2v7.6M817.2 916.3h7.6M821 912.5v7.6M833.6 580.9h7.6M837.4 577.1v7.6M834.1 597.2h7.6M837.9 593.4v7.6M834.6 613.6h7.6M838.4 609.8v7.6M835.1 630.2h7.6M838.9 626.4v7.6M835.5 646.9h7.6M839.3 643.1v7.6M835.8 663.6h7.6M839.6 659.8v7.6M836.1 680.5h7.6M839.9 676.7v7.6M836.3 697.4h7.6M840.1 693.6v7.6M836.4 714.4h7.6M840.2 710.6v7.6M836.5 731.4h7.6M840.3 727.6v7.6M836.5 748.4h7.6M840.3 744.6v7.6M836.5 765.5h7.6M840.3 761.7v7.6M836.4 782.5h7.6M840.2 778.7v7.6M836.2 799.4h7.6M840 795.6v7.6M836 816.3h7.6M839.8 812.5v7.6M835.7 833.2h7.6M839.5 829.4v7.6M835.3 849.9h7.6M839.1 846.1v7.6M834.9 866.6h7.6M838.7 862.8v7.6M834.5 883.1h7.6M838.3 879.3v7.6M833.9 899.5h7.6M837.7 895.7v7.6M833.4 915.7h7.6M837.2 911.9v7.6M849.6 581.5h7.6M853.4 577.7v7.6M850.2 597.7h7.6M854 593.9v7.6M850.7 614.1h7.6M854.5 610.3v7.6M851.2 630.6h7.6M855 626.8v7.6M851.7 647.2h7.6M855.5 643.4v7.6M852 663.9h7.6M855.8 660.1v7.6M852.3 680.7h7.6M856.1 676.9v7.6M852.5 697.6h7.6M856.3 693.8v7.6M852.7 714.5h7.6M856.5 710.7v7.6M852.8 731.5h7.6M856.6 727.7v7.6M852.8 748.4h7.6M856.6 744.6v7.6M852.7 765.4h7.6M856.5 761.6v7.6M852.6 782.3h7.6M856.4 778.5v7.6M852.5 799.2h7.6M856.3 795.4v7.6M852.2 816.1h7.6M856 812.3v7.6M851.9 832.8h7.6M855.7 829v7.6M851.5 849.5h7.6M855.3 845.7v7.6M851.1 866.1h7.6M854.9 862.3v7.6M850.6 882.6h7.6M854.4 878.8v7.6M850 898.9h7.6M853.8 895.1v7.6M849.3 915h7.6M853.1 911.2v7.6" stroke="#0000ff" stroke-width="1.5" fill="none"/></svg>
<div style="left:453px;top:570px;width:413px;height:1px;background:#111;"></div>
<div style="left:453px;top:920px;width:413px;height:1px;background:#111;"></div>
<svg style="left:453px;top:165px" width="413" height="350" viewBox="453 165 413 350"><g fill="#555" stroke="#777" stroke-width="0.6"><circle cx="653.4" cy="308.3" r="2.4"/><circle cx="653.4" cy="327.4" r="2.4"/><circle cx="663" cy="337.2" r="2.4"/></g></svg>
<svg style="left:453px;top:571px" width="413" height="349" viewBox="453 571 413 349"><g fill="#3c3c3c" stroke="#888" stroke-width="1.4" filter="blur(0.5px)"><circle cx="627" cy="687.5" r="4"/><circle cx="627" cy="722.2" r="4"/><circle cx="644.7" cy="739.5" r="4"/></g></svg>
<div style="left:206px;top:816px;width:1px;height:3px;background:#fff;"></div>
<div style="left:207px;top:816px;width:1px;height:3px;background:#9c9c9c;"></div>
<div style="left:209px;top:816px;width:1px;height:3px;background:#fff;"></div>
<div style="left:210px;top:816px;width:1px;height:3px;background:#9c9c9c;"></div>
<div style="left:212px;top:816px;width:1px;height:3px;background:#fff;"></div>
<div style="left:213px;top:816px;width:1px;height:3px;background:#9c9c9c;"></div>
<div style="left:206px;top:973px;width:1px;height:3px;background:#fff;"></div>
<div style="left:207px;top:973px;width:1px;height:3px;background:#9c9c9c;"></div>
<div style="left:209px;top:973px;width:1px;height:3px;background:#fff;"></div>
<div style="left:210px;top:973px;width:1px;height:3px;background:#9c9c9c;"></div>
<div style="left:212px;top:973px;width:1px;height:3px;background:#fff;"></div>
<div style="left:213px;top:973px;width:1px;height:3px;background:#9c9c9c;"></div>
<div style="left:410px;top:522px;width:3px;height:1px;background:#fff;"></div>
<div style="left:410px;top:523px;width:3px;height:1px;background:#9c9c9c;"></div>
<div style="left:410px;top:525px;width:3px;height:1px;background:#fff;"></div>
<div style="left:410px;top:526px;width:3px;height:1px;background:#9c9c9c;"></div>
<div style="left:410px;top:528px;width:3px;height:1px;background:#fff;"></div>
<div style="left:410px;top:529px;width:3px;height:1px;background:#9c9c9c;"></div>
<div style="left:1047px;top:532px;width:3px;height:1px;background:#fff;"></div>
<div style="left:1047px;top:533px;width:3px;height:1px;background:#9c9c9c;"></div>
<div style="left:1047px;top:535px;width:3px;height:1px;background:#fff;"></div>
<div style="left:1047px;top:536px;width:3px;height:1px;background:#9c9c9c;"></div>
<div style="left:1047px;top:538px;width:3px;height:1px;background:#fff;"></div>
<div style="left:1047px;top:539px;width:3px;height:1px;background:#9c9c9c;"></div>
<div style="left:869px;top:337px;width:3px;height:1px;background:#fff;"></div>
<div style="left:869px;top:338px;width:3px;height:1px;background:#9c9c9c;"></div>
<div style="left:869px;top:340px;width:3px;height:1px;background:#fff;"></div>
<div style="left:869px;top:341px;width:3px;height:1px;background:#9c9c9c;"></div>
<div style="left:869px;top:343px;width:3px;height:1px;background:#fff;"></div>
<div style="left:869px;top:344px;width:3px;height:1px;background:#9c9c9c;"></div>
<div style="left:869px;top:742px;width:3px;height:1px;background:#fff;"></div>
<div style="left:869px;top:743px;width:3px;height:1px;background:#9c9c9c;"></div>
<div style="left:869px;top:745px;width:3px;height:1px;background:#fff;"></div>
<div style="left:869px;top:746px;width:3px;height:1px;background:#9c9c9c;"></div>
<div style="left:869px;top:748px;width:3px;height:1px;background:#fff;"></div>
<div style="left:869px;top:749px;width:3px;height:1px;background:#9c9c9c;"></div>
</body></html>
